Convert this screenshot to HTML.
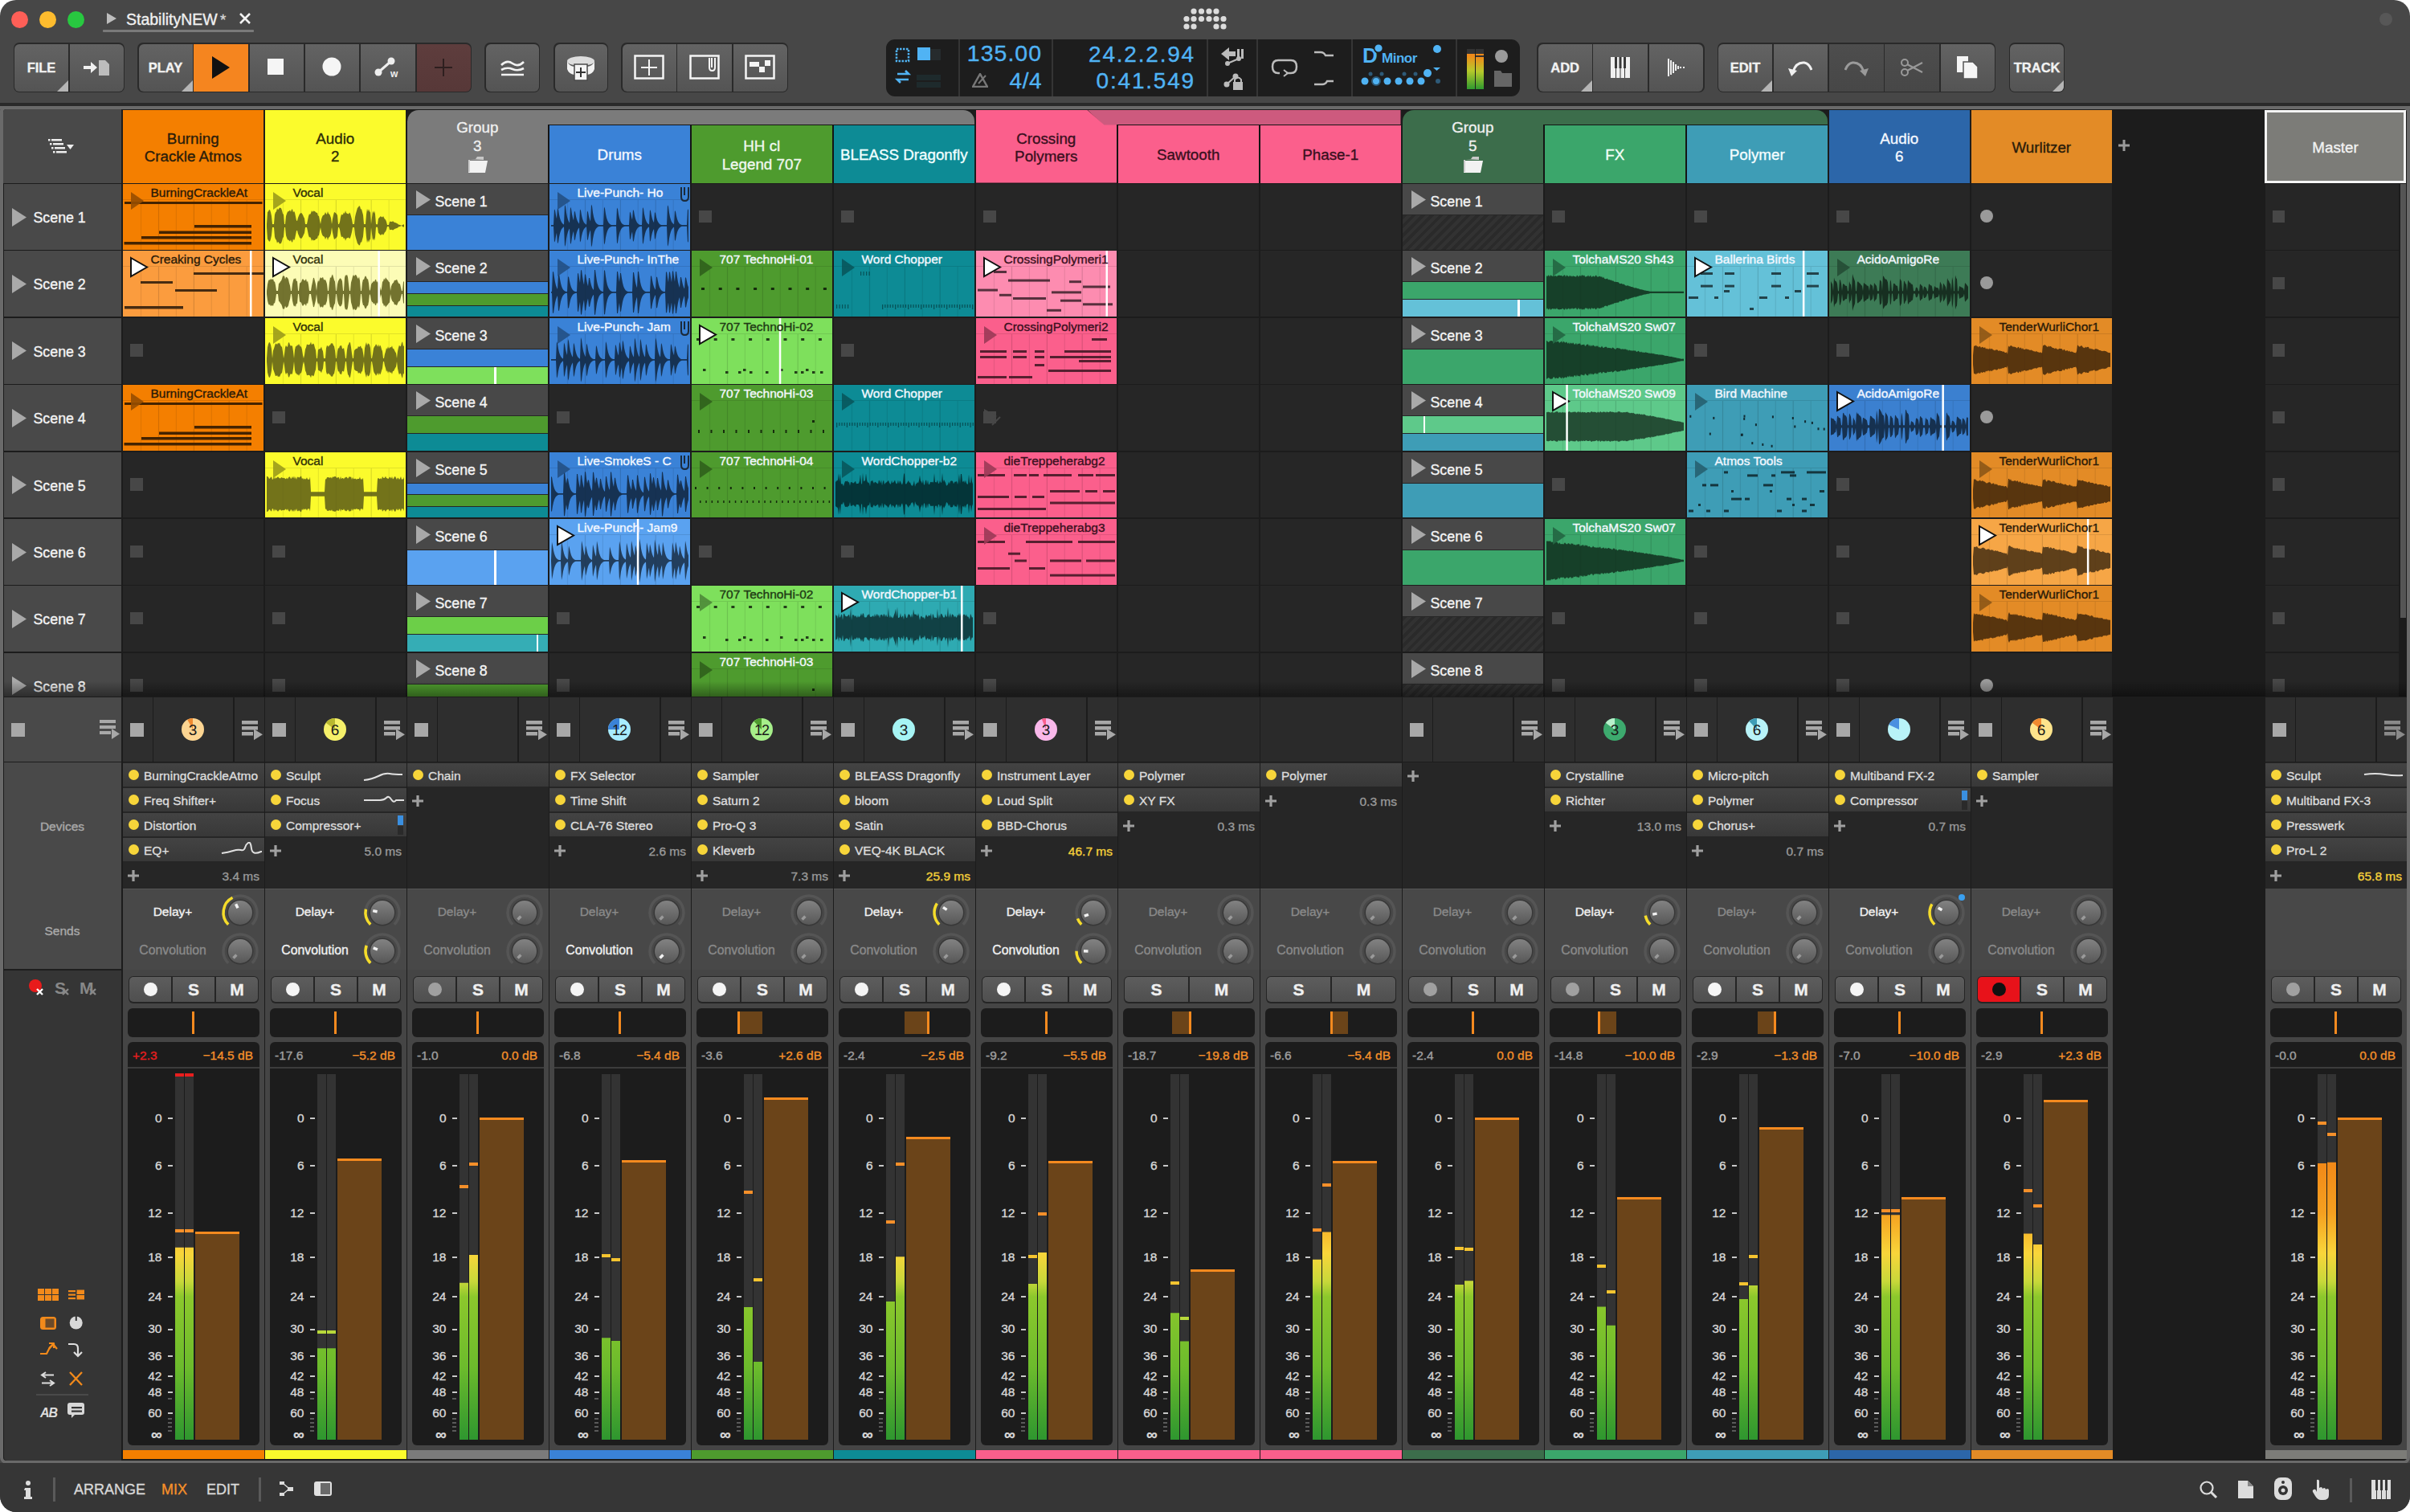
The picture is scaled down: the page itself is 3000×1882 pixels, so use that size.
<!DOCTYPE html><html><head><meta charset="utf-8"><style>
*{margin:0;padding:0;box-sizing:border-box}
html,body{width:3000px;height:1882px;overflow:hidden;background:#fff}
body{position:relative;font-family:"Liberation Sans",sans-serif}
div{position:absolute}
.t{white-space:nowrap;-webkit-text-stroke:0.35px currentColor}
.btn{background:linear-gradient(#626262,#565656);border:2px solid #2c2c2c;border-radius:6px}
</style></head><body><div style="left:0px;top:0px;width:3000px;height:1882px;background:#474747;border-radius:20px;overflow:hidden"></div><div style="left:14.0px;top:14px;width:21px;height:21px;background:#fe5f57;border-radius:50%"></div><div style="left:48.5px;top:14px;width:21px;height:21px;background:#febc2e;border-radius:50%"></div><div style="left:83.5px;top:14px;width:21px;height:21px;background:#28c840;border-radius:50%"></div><svg style="position:absolute;left:133px;top:16px;" width="13" height="14" viewBox="0 0 13 14"><path d="M0 0 L12 7 L0 14Z" fill="#bdbdbd"/></svg><div class="t " style="left:157px;top:11.8px;font-size:19.5px;line-height:24.375px;color:#f0f0f0;">StabilityNEW</div><div class="t " style="left:274px;top:13.1px;font-size:19px;line-height:23.75px;color:#d8d8d8;">*</div><svg style="position:absolute;left:297px;top:15px;" width="16" height="16" viewBox="0 0 16 16"><path d="M2 2L14 14M14 2L2 14" stroke="#f2f2f2" stroke-width="2.6"/></svg><div style="left:128px;top:37px;width:188px;height:3px;background:#7a7a7a;border-radius:1px"></div><svg style="position:absolute;left:1400px;top:0px;" width="200" height="45" viewBox="0 0 200 45"><circle cx="86" cy="14" r="3.6" fill="#dcdcdc"/><circle cx="95.5" cy="14" r="3.6" fill="#dcdcdc"/><circle cx="105" cy="14" r="3.6" fill="#dcdcdc"/><circle cx="114" cy="14" r="3.6" fill="#dcdcdc"/><circle cx="77" cy="23.5" r="3.6" fill="#dcdcdc"/><circle cx="86" cy="23.5" r="3.6" fill="#dcdcdc"/><circle cx="95.5" cy="23.5" r="3.6" fill="#dcdcdc"/><circle cx="105" cy="23.5" r="3.6" fill="#dcdcdc"/><circle cx="114" cy="23.5" r="3.6" fill="#dcdcdc"/><circle cx="123" cy="23.5" r="3.6" fill="#dcdcdc"/><circle cx="77" cy="33" r="3.6" fill="#dcdcdc"/><circle cx="86" cy="33" r="3.6" fill="#dcdcdc"/><circle cx="114" cy="33" r="3.6" fill="#dcdcdc"/><circle cx="123" cy="33" r="3.6" fill="#dcdcdc"/></svg><div style="left:2962px;top:16px;width:16px;height:16px;background:#575757;border-radius:50%"></div><div style="left:0px;top:128px;width:3000px;height:4px;background:#2a2a2a"></div><div style="left:0px;top:132px;width:3000px;height:4px;background:#6a6a6a"></div><div style="left:16.5px;top:53px;width:138.5px;height:62px;background:#2a2a2a;border-radius:7px"></div><div style="left:18.0px;top:54.5px;width:67.0px;height:59px;background:linear-gradient(#636363,#545454);border-top-left-radius:6px;border-bottom-left-radius:6px;overflow:hidden"><div class="t" style="left:0;right:0;top:0;bottom:0;display:flex;align-items:center;justify-content:center;font-size:16.5px;color:#f2f2f2;font-weight:bold">FILE</div><div style="right:0;bottom:0;width:0;height:0;border-style:solid;border-width:0 0 14px 14px;border-color:transparent transparent #b5b5b5 transparent"></div></div><div style="left:86.5px;top:54.5px;width:67.0px;height:59px;background:linear-gradient(#636363,#545454);border-top-right-radius:6px;border-bottom-right-radius:6px;overflow:hidden"><div style="left:0;right:0;top:0;bottom:0;display:flex;align-items:center;justify-content:center"><svg width="34" height="22" viewBox="0 0 34 22" style="position:static"><path d="M1 9h9V4l8 7-8 7v-5H1z" fill="#f0f0f0"/><path d="M20 2h8l5 5v14H20z" fill="#bdbdbd"/></svg></div></div><div style="left:171px;top:53px;width:416px;height:62px;background:#2a2a2a;border-radius:7px"></div><div style="left:172.5px;top:54.5px;width:67.0px;height:59px;background:linear-gradient(#636363,#545454);border-top-left-radius:6px;border-bottom-left-radius:6px;overflow:hidden"><div class="t" style="left:0;right:0;top:0;bottom:0;display:flex;align-items:center;justify-content:center;font-size:16.5px;color:#f2f2f2;font-weight:bold">PLAY</div><div style="right:0;bottom:0;width:0;height:0;border-style:solid;border-width:0 0 14px 14px;border-color:transparent transparent #b5b5b5 transparent"></div></div><div style="left:241.1px;top:54.5px;width:67.7px;height:59px;background:#f5851f;overflow:hidden"><div style="left:0;right:0;top:0;bottom:0;display:flex;align-items:center;justify-content:center"><svg width="26" height="30" viewBox="0 0 26 30" style="position:static"><path d="M2 1L24 15L2 29z" fill="#111"/></svg></div></div><div style="left:310.5px;top:54.5px;width:67.7px;height:59px;background:linear-gradient(#636363,#545454);overflow:hidden"><div style="left:0;right:0;top:0;bottom:0;display:flex;align-items:center;justify-content:center"><svg width="22" height="22" viewBox="0 0 22 22" style="position:static"><rect width="20" height="20" fill="#f5f5f5"/></svg></div></div><div style="left:379.8px;top:54.5px;width:67.7px;height:59px;background:linear-gradient(#636363,#545454);overflow:hidden"><div style="left:0;right:0;top:0;bottom:0;display:flex;align-items:center;justify-content:center"><svg width="26" height="26" viewBox="0 0 26 26" style="position:static"><circle cx="12" cy="12" r="11.5" fill="#f5f5f5"/></svg></div></div><div style="left:449.1px;top:54.5px;width:67.7px;height:59px;background:linear-gradient(#636363,#545454);overflow:hidden"><div style="left:0;right:0;top:0;bottom:0;display:flex;align-items:center;justify-content:center"><svg width="34" height="28" viewBox="0 0 34 28" style="position:static"><circle cx="5" cy="20" r="4.5" fill="#eee"/><circle cx="21" cy="6" r="4.5" fill="#eee"/><path d="M5 20L21 6" stroke="#eee" stroke-width="3"/><text x="20" y="26" font-size="12" font-weight="bold" fill="#eee" font-family="Liberation Sans">w</text></svg></div></div><div style="left:518.5px;top:54.5px;width:67.0px;height:59px;background:linear-gradient(#5e3d3d,#573838);border-top-right-radius:6px;border-bottom-right-radius:6px;overflow:hidden"><div style="left:0;right:0;top:0;bottom:0;display:flex;align-items:center;justify-content:center"><svg width="24" height="24" viewBox="0 0 24 24" style="position:static"><path d="M12 1v22M1 12h22" stroke="#2e1f1f" stroke-width="2"/></svg></div></div><div style="left:603px;top:53px;width:69px;height:62px;background:#2a2a2a;border-radius:7px"></div><div style="left:604.5px;top:54.5px;width:66.7px;height:59px;background:linear-gradient(#636363,#545454);border-top-left-radius:6px;border-bottom-left-radius:6px;border-top-right-radius:6px;border-bottom-right-radius:6px;overflow:hidden"><div style="left:0;right:0;top:0;bottom:0;display:flex;align-items:center;justify-content:center"><svg width="30" height="22" viewBox="0 0 30 22" style="position:static"><path d="M1 8q7-7 14-2t14-2M1 14q7-4 14-1t14-1M1 20h28" stroke="#f2f2f2" stroke-width="2.6" fill="none"/></svg></div></div><div style="left:689px;top:53px;width:68px;height:62px;background:#2a2a2a;border-radius:7px"></div><div style="left:690.5px;top:54.5px;width:65.7px;height:59px;background:linear-gradient(#636363,#545454);border-top-left-radius:6px;border-bottom-left-radius:6px;border-top-right-radius:6px;border-bottom-right-radius:6px;overflow:hidden"><div style="left:0;right:0;top:0;bottom:0;display:flex;align-items:center;justify-content:center"><svg width="38" height="34" viewBox="0 0 38 34" style="position:static"><ellipse cx="19" cy="9" rx="17" ry="6" fill="#ddd"/><path d="M2 9v10q2 6 9 7v-10q-7-1-9-7zM36 9v10q-2 6-9 7v-10q7-1 9-7z" fill="#f2f2f2"/><path d="M11 13h16v20H11z" fill="#f5f5f5" stroke="#4a4a4a" stroke-width="1.5"/><path d="M19 17v12M13 23h12" stroke="#333" stroke-width="2"/></svg></div></div><div style="left:773px;top:53px;width:208px;height:62px;background:#2a2a2a;border-radius:7px"></div><div style="left:774.5px;top:54.5px;width:67.0px;height:59px;background:linear-gradient(#636363,#545454);border-top-left-radius:6px;border-bottom-left-radius:6px;overflow:hidden"><div style="left:0;right:0;top:0;bottom:0;display:flex;align-items:center;justify-content:center"><svg width="38" height="32" viewBox="0 0 38 32" style="position:static"><rect x="1.5" y="1.5" width="35" height="28" fill="none" stroke="#f5f5f5" stroke-width="2.5"/><path d="M19 6v20M9 16h20" stroke="#f5f5f5" stroke-width="2"/></svg></div></div><div style="left:843.1px;top:54.5px;width:67.7px;height:59px;background:linear-gradient(#636363,#545454);overflow:hidden"><div style="left:0;right:0;top:0;bottom:0;display:flex;align-items:center;justify-content:center"><svg width="38" height="32" viewBox="0 0 38 32" style="position:static"><rect x="1.5" y="1.5" width="35" height="28" fill="none" stroke="#f5f5f5" stroke-width="2.5"/><path d="M25 4v12q0 4 3.5 4t3.5-4V4M28 4v12" stroke="#f5f5f5" stroke-width="2" fill="none"/></svg></div></div><div style="left:912.5px;top:54.5px;width:67.0px;height:59px;background:linear-gradient(#636363,#545454);border-top-right-radius:6px;border-bottom-right-radius:6px;overflow:hidden"><div style="left:0;right:0;top:0;bottom:0;display:flex;align-items:center;justify-content:center"><svg width="38" height="32" viewBox="0 0 38 32" style="position:static"><rect x="1.5" y="1.5" width="35" height="28" fill="none" stroke="#f5f5f5" stroke-width="2.5"/><rect x="6" y="9" width="12" height="6" fill="#f5f5f5"/><rect x="25" y="7" width="7" height="7" fill="#f5f5f5"/><rect x="18" y="15" width="7" height="7" fill="#f5f5f5"/></svg></div></div><div style="left:1103px;top:49px;width:789px;height:71px;background:#1d1d1d;border-radius:11px"></div><div style="left:1192.5px;top:49px;width:2px;height:71px;background:#353535"></div><div style="left:1308.5px;top:49px;width:2px;height:71px;background:#353535"></div><div style="left:1501.5px;top:49px;width:2px;height:71px;background:#353535"></div><div style="left:1564px;top:49px;width:2px;height:71px;background:#353535"></div><div style="left:1682px;top:49px;width:2px;height:71px;background:#353535"></div><div style="left:1812px;top:49px;width:2px;height:71px;background:#353535"></div><svg style="position:absolute;left:1113px;top:57px;" width="60" height="56" viewBox="0 0 60 56"><rect x="3" y="4" width="15" height="15" fill="none" stroke="#50b3f4" stroke-width="2.5" stroke-dasharray="2.5 1.5"/><rect x="29" y="2" width="16" height="16" fill="#50b3f4"/><rect x="45" y="4" width="13" height="14" fill="#262b2d"/><path d="M4 35h14l-4-4M18 42H4l4 4" stroke="#50b3f4" stroke-width="2.6" fill="none"/><rect x="28" y="36" width="30" height="7" fill="#1e2a2c"/><rect x="28" y="45" width="30" height="7" fill="#1e2a2c"/></svg><div class="t " style="right:1703px;top:49.2px;font-size:28.5px;line-height:35.625px;color:#50b3f4;letter-spacing:1px">135.00</div><svg style="position:absolute;left:1210px;top:91px;" width="20" height="18" viewBox="0 0 20 18"><path d="M1 17L10 1L19 17z" fill="none" stroke="#777" stroke-width="2.5"/><path d="M8 13L17 3" stroke="#777" stroke-width="2"/></svg><div class="t " style="right:1703px;top:82.5px;font-size:28px;line-height:35.0px;color:#50b3f4;letter-spacing:0.5px">4/4</div><div class="t " style="right:1512px;top:49.5px;font-size:28px;line-height:35.0px;color:#50b3f4;letter-spacing:1.8px">24.2.2.94</div><div class="t " style="right:1512px;top:82.5px;font-size:28px;line-height:35.0px;color:#50b3f4;letter-spacing:1.8px">0:41.549</div><svg style="position:absolute;left:1518px;top:53px;" width="36" height="64" viewBox="0 0 36 64"><path d="M2 14L12 6v5h8v6h-8v5z" fill="#bbb"/><rect x="22" y="8" width="3" height="12" fill="#bbb"/><rect x="27" y="8" width="3" height="12" fill="#bbb"/><circle cx="10" cy="26" r="3" fill="#bbb"/><circle cx="24" cy="20" r="3" fill="#bbb"/><path d="M10 26L24 20" stroke="#bbb" stroke-width="2"/><circle cx="9" cy="52" r="3.5" fill="#bbb"/><circle cx="20" cy="42" r="3.5" fill="#bbb"/><path d="M9 52L20 42" stroke="#bbb" stroke-width="2"/><rect x="17" y="49" width="12" height="10" fill="#bbb"/><path d="M19 49v-3q4-5 8 0v3" stroke="#bbb" stroke-width="2" fill="none"/></svg><svg style="position:absolute;left:1582px;top:71px;" width="34" height="26" viewBox="0 0 34 26"><path d="M9 4h16q7 0 7 8t-7 8h-6M11 20H9q-7 0-7-8t7-8" stroke="#bbb" stroke-width="2.5" fill="none"/><path d="M16 16l5 4-5 4" stroke="#bbb" stroke-width="2" fill="none"/></svg><svg style="position:absolute;left:1634px;top:55px;" width="28" height="60" viewBox="0 0 28 60"><path d="M2 10h8q4 0 6 4h10" stroke="#bbb" stroke-width="2.5" fill="none"/><path d="M2 50h10q4 0 6-4h8" stroke="#bbb" stroke-width="2.5" fill="none"/></svg><svg style="position:absolute;left:1692px;top:55px;" width="110" height="60" viewBox="0 0 110 60"><text x="4" y="23" font-size="26" font-weight="bold" fill="#50b3f4" font-family="Liberation Sans">D</text><circle cx="24" cy="5" r="5.5" fill="#50b3f4" stroke="#1d1d1d" stroke-width="1.8"/><text x="28" y="23" font-size="17" font-weight="bold" fill="#50b3f4" font-family="Liberation Sans" letter-spacing="-0.5">Minor</text><circle cx="97" cy="6" r="5" fill="#50b3f4"/><path d="M92 29h9l-4.5 4z" fill="#50b3f4"/><circle cx="7" cy="46" r="4.5" fill="#50b3f4"/><circle cx="21" cy="46" r="4.5" fill="#50b3f4"/><circle cx="35" cy="46" r="4.5" fill="#50b3f4"/><circle cx="49" cy="46" r="4.5" fill="#50b3f4"/><circle cx="63" cy="46" r="4.5" fill="#50b3f4"/><circle cx="77" cy="46" r="4.5" fill="#50b3f4"/><circle cx="14" cy="37" r="2.5" fill="#2e5a78"/><circle cx="28" cy="37" r="2.5" fill="#2e5a78"/><circle cx="56" cy="37" r="2.5" fill="#2e5a78"/><circle cx="70" cy="37" r="2.5" fill="#2e5a78"/><circle cx="21" cy="46" r="5" fill="none" stroke="#2e5a78" stroke-width="2"/><circle cx="85" cy="36" r="5" fill="#50b3f4"/><circle cx="98" cy="46" r="3" fill="#2e5a78"/></svg><svg style="position:absolute;left:1825px;top:58px;" width="65" height="55" viewBox="0 0 65 55"><defs><linearGradient id="mg" x1="0" y1="1" x2="0" y2="0"><stop offset="0" stop-color="#2f9a2f"/><stop offset="0.55" stop-color="#b7c92b"/><stop offset="1" stop-color="#f08a1a"/></linearGradient></defs><rect x="1" y="3" width="10" height="50" fill="#333"/><rect x="12" y="3" width="10" height="50" fill="#333"/><rect x="1" y="11" width="10" height="42" fill="url(#mg)"/><rect x="12" y="13" width="10" height="40" fill="url(#mg)"/><rect x="1" y="9" width="10" height="2" fill="#f08a1a"/><rect x="12" y="9" width="10" height="2" fill="#f08a1a"/><circle cx="44" cy="12" r="8" fill="#9a9a9a"/><path d="M35 30h8l2 3h12v17H35z" fill="#666"/></svg><div style="left:1913px;top:53px;width:208.5px;height:62px;background:#2a2a2a;border-radius:7px"></div><div style="left:1914.5px;top:54.5px;width:67.2px;height:59px;background:linear-gradient(#636363,#545454);border-top-left-radius:6px;border-bottom-left-radius:6px;overflow:hidden"><div class="t" style="left:0;right:0;top:0;bottom:0;display:flex;align-items:center;justify-content:center;font-size:16.5px;color:#f2f2f2;font-weight:bold">ADD</div><div style="right:0;bottom:0;width:0;height:0;border-style:solid;border-width:0 0 14px 14px;border-color:transparent transparent #b5b5b5 transparent"></div></div><div style="left:1983.3px;top:54.5px;width:67.9px;height:59px;background:linear-gradient(#636363,#545454);overflow:hidden"><div style="left:0;right:0;top:0;bottom:0;display:flex;align-items:center;justify-content:center"><svg width="24" height="26" viewBox="0 0 24 26" style="position:static"><rect x="0" y="0" width="24" height="26" fill="#f0f0f0"/><rect x="5" y="0" width="3" height="14" fill="#3a3a3a"/><rect x="10.5" y="0" width="3" height="14" fill="#3a3a3a"/><rect x="16" y="0" width="3" height="14" fill="#3a3a3a"/><path d="M6.5 14v12M12 14v12M17.5 14v12" stroke="#3a3a3a" stroke-width="1"/></svg></div></div><div style="left:2052.8px;top:54.5px;width:67.2px;height:59px;background:linear-gradient(#636363,#545454);border-top-right-radius:6px;border-bottom-right-radius:6px;overflow:hidden"><div style="left:0;right:0;top:0;bottom:0;display:flex;align-items:center;justify-content:center"><svg width="22" height="26" viewBox="0 0 22 26" style="position:static"><path d="M2 2v22M5 4v18M8 6v14M11 9v8M14 11v4M17 12v2M20 13h2" stroke="#eee" stroke-width="2"/></svg></div></div><div style="left:2137.5px;top:53px;width:346.5px;height:62px;background:#2a2a2a;border-radius:7px"></div><div style="left:2139.0px;top:54.5px;width:67.0px;height:59px;background:linear-gradient(#636363,#545454);border-top-left-radius:6px;border-bottom-left-radius:6px;overflow:hidden"><div class="t" style="left:0;right:0;top:0;bottom:0;display:flex;align-items:center;justify-content:center;font-size:16.5px;color:#f2f2f2;font-weight:bold">EDIT</div><div style="right:0;bottom:0;width:0;height:0;border-style:solid;border-width:0 0 14px 14px;border-color:transparent transparent #b5b5b5 transparent"></div></div><div style="left:2207.6px;top:54.5px;width:67.7px;height:59px;background:linear-gradient(#636363,#545454);overflow:hidden"><div style="left:0;right:0;top:0;bottom:0;display:flex;align-items:center;justify-content:center"><svg width="30" height="22" viewBox="0 0 30 22" style="position:static"><path d="M6 16q4-12 14-11q6 1 9 9" stroke="#f0f0f0" stroke-width="3" fill="none"/><path d="M0 12l11 3-7 7z" fill="#f0f0f0"/></svg></div></div><div style="left:2276.9px;top:54.5px;width:67.7px;height:59px;background:linear-gradient(#4d4d4d,#474747);overflow:hidden"><div style="left:0;right:0;top:0;bottom:0;display:flex;align-items:center;justify-content:center"><svg width="30" height="22" viewBox="0 0 30 22" style="position:static"><path d="M24 16q-4-12-14-11q-6 1-9 9" stroke="#9a9a9a" stroke-width="3" fill="none"/><path d="M30 12l-11 3 7 7z" fill="#9a9a9a"/></svg></div></div><div style="left:2346.2px;top:54.5px;width:67.7px;height:59px;background:linear-gradient(#4d4d4d,#474747);overflow:hidden"><div style="left:0;right:0;top:0;bottom:0;display:flex;align-items:center;justify-content:center"><svg width="28" height="22" viewBox="0 0 28 22" style="position:static"><circle cx="5" cy="5" r="4" stroke="#999" stroke-width="2" fill="none"/><circle cx="5" cy="17" r="4" stroke="#999" stroke-width="2" fill="none"/><path d="M8 7L27 17M8 15L27 5" stroke="#999" stroke-width="2.2"/></svg></div></div><div style="left:2415.5px;top:54.5px;width:67.0px;height:59px;background:linear-gradient(#636363,#545454);border-top-right-radius:6px;border-bottom-right-radius:6px;overflow:hidden"><div style="left:0;right:0;top:0;bottom:0;display:flex;align-items:center;justify-content:center"><svg width="28" height="30" viewBox="0 0 28 30" style="position:static"><rect x="1" y="1" width="14" height="20" fill="#f5f5f5"/><path d="M9 8h12l6 6v15H9z" fill="#f5f5f5" stroke="#555" stroke-width="1.5"/></svg></div></div><div style="left:2500.5px;top:53px;width:69.5px;height:62px;background:#2a2a2a;border-radius:7px"></div><div style="left:2502.0px;top:54.5px;width:67.2px;height:59px;background:linear-gradient(#636363,#545454);border-top-left-radius:6px;border-bottom-left-radius:6px;border-top-right-radius:6px;border-bottom-right-radius:6px;overflow:hidden"><div class="t" style="left:0;right:0;top:0;bottom:0;display:flex;align-items:center;justify-content:center;font-size:16.5px;color:#f2f2f2;font-weight:bold">TRACK</div><div style="right:0;bottom:0;width:0;height:0;border-style:solid;border-width:0 0 14px 14px;border-color:transparent transparent #b5b5b5 transparent"></div></div><div style="left:0px;top:132px;width:3000px;height:1690px;background:#6a6a6a;border-radius:6px 6px 8px 8px"></div><div style="left:4px;top:136px;width:2992px;height:1682px;background:#1c1c1c;border-radius:4px"></div><div style="left:4px;top:136px;width:147px;height:92px;background:#494949;border-top-left-radius:4px"></div><svg style="position:absolute;left:60px;top:172px;" width="32" height="22" viewBox="0 0 32 22"><g fill="#eee"><rect x="0" y="1" width="2.5" height="2.5"/><rect x="4" y="1" width="13" height="2.5"/><rect x="2" y="6" width="2.5" height="2.5"/><rect x="6" y="6" width="13" height="2.5"/><rect x="4" y="11" width="2.5" height="2.5"/><rect x="8" y="11" width="13" height="2.5"/><rect x="6" y="16" width="2.5" height="2.5"/><rect x="10" y="16" width="13" height="2.5"/><path d="M23 8h9l-4.5 6z"/></g></svg><div style="left:5px;top:229.0px;width:146px;height:81.9px;background:#494949"></div><svg style="position:absolute;left:15px;top:258.5px;" width="19" height="23" viewBox="0 0 19 23"><path d="M0 0L18 11.5L0 23z" fill="#a9a9a9"/></svg><div class="t " style="left:41.5px;top:259.9px;font-size:17.8px;line-height:22.25px;color:#f4f4f4;">Scene 1</div><div style="left:5px;top:312.4px;width:146px;height:81.9px;background:#494949"></div><svg style="position:absolute;left:15px;top:341.9px;" width="19" height="23" viewBox="0 0 19 23"><path d="M0 0L18 11.5L0 23z" fill="#a9a9a9"/></svg><div class="t " style="left:41.5px;top:343.3px;font-size:17.8px;line-height:22.25px;color:#f4f4f4;">Scene 2</div><div style="left:5px;top:395.8px;width:146px;height:81.9px;background:#494949"></div><svg style="position:absolute;left:15px;top:425.3px;" width="19" height="23" viewBox="0 0 19 23"><path d="M0 0L18 11.5L0 23z" fill="#a9a9a9"/></svg><div class="t " style="left:41.5px;top:426.7px;font-size:17.8px;line-height:22.25px;color:#f4f4f4;">Scene 3</div><div style="left:5px;top:479.20000000000005px;width:146px;height:81.9px;background:#494949"></div><svg style="position:absolute;left:15px;top:508.70000000000005px;" width="19" height="23" viewBox="0 0 19 23"><path d="M0 0L18 11.5L0 23z" fill="#a9a9a9"/></svg><div class="t " style="left:41.5px;top:510.1px;font-size:17.8px;line-height:22.25px;color:#f4f4f4;">Scene 4</div><div style="left:5px;top:562.6px;width:146px;height:81.9px;background:#494949"></div><svg style="position:absolute;left:15px;top:592.1px;" width="19" height="23" viewBox="0 0 19 23"><path d="M0 0L18 11.5L0 23z" fill="#a9a9a9"/></svg><div class="t " style="left:41.5px;top:593.5px;font-size:17.8px;line-height:22.25px;color:#f4f4f4;">Scene 5</div><div style="left:5px;top:646.0px;width:146px;height:81.9px;background:#494949"></div><svg style="position:absolute;left:15px;top:675.5px;" width="19" height="23" viewBox="0 0 19 23"><path d="M0 0L18 11.5L0 23z" fill="#a9a9a9"/></svg><div class="t " style="left:41.5px;top:676.9px;font-size:17.8px;line-height:22.25px;color:#f4f4f4;">Scene 6</div><div style="left:5px;top:729.4000000000001px;width:146px;height:81.9px;background:#494949"></div><svg style="position:absolute;left:15px;top:758.9000000000001px;" width="19" height="23" viewBox="0 0 19 23"><path d="M0 0L18 11.5L0 23z" fill="#a9a9a9"/></svg><div class="t " style="left:41.5px;top:760.3px;font-size:17.8px;line-height:22.25px;color:#f4f4f4;">Scene 7</div><div style="left:5px;top:812.8000000000001px;width:146px;height:54.19999999999993px;background:#494949"></div><svg style="position:absolute;left:15px;top:842.3000000000001px;" width="19" height="23" viewBox="0 0 19 23"><path d="M0 0L18 11.5L0 23z" fill="#a9a9a9"/></svg><div class="t " style="left:41.5px;top:843.7px;font-size:17.8px;line-height:22.25px;color:#f4f4f4;">Scene 8</div><div style="left:5px;top:868px;width:146px;height:80px;background:#494949"></div><div style="left:14px;top:900px;width:16.5px;height:16.5px;background:#a8a8a8"></div><svg style="position:absolute;left:124px;top:896px;" width="27" height="24" viewBox="0 0 27 24"><g fill="#a8a8a8"><rect x="0" y="0" width="20" height="4"/><rect x="0" y="7" width="20" height="4"/><rect x="0" y="14" width="14" height="4"/><path d="M15 11l10 6.5-10 6.5z"/></g></svg><div style="left:5px;top:949px;width:146px;height:257px;background:#494949"></div><div class="t " style="left:-222.5px;width:600px;text-align:center;top:1018.8px;font-size:15.5px;line-height:19.375px;color:#a9a9a9;">Devices</div><div class="t " style="left:-222.5px;width:600px;text-align:center;top:1148.8px;font-size:15.5px;line-height:19.375px;color:#a9a9a9;">Sends</div><div style="left:5px;top:1206px;width:146px;height:2px;background:#1e1e1e"></div><div style="left:5px;top:1208px;width:146px;height:610px;background:#353535;border-bottom-left-radius:4px"></div><svg style="position:absolute;left:32px;top:1215px;" width="100" height="30" viewBox="0 0 100 30"><circle cx="12" cy="12" r="8" fill="#e81b1b"/><path d="M14 16l7 7M21 16l-7 7" stroke="#fff" stroke-width="2.4"/><text x="36" y="22" font-size="21" font-weight="bold" fill="#888" font-family="Liberation Sans">S</text><path d="M46 16l7 7M53 16l-7 7" stroke="#888" stroke-width="2.4"/><text x="67" y="22" font-size="21" font-weight="bold" fill="#888" font-family="Liberation Sans">M</text><path d="M80 16l7 7M87 16l-7 7" stroke="#888" stroke-width="2.4"/></svg><svg style="position:absolute;left:0px;top:1595px;" width="150" height="180" viewBox="0 0 150 180"><g fill="#f28a1b"><rect x="47" y="9" width="8" height="7"/><rect x="56" y="9" width="8" height="7"/><rect x="65" y="9" width="8" height="7"/><rect x="47" y="17" width="8" height="7"/><rect x="56" y="17" width="8" height="7"/><rect x="65" y="17" width="8" height="7"/><rect x="85" y="11" width="9" height="2.2"/><rect x="85" y="15.5" width="9" height="2.2"/><rect x="85" y="20" width="9" height="2.2"/><rect x="95.5" y="10.5" width="9.5" height="5.5"/><rect x="95.5" y="17" width="9.5" height="5.5"/></g><rect x="50" y="44" width="20" height="16" rx="3.5" fill="#f28a1b"/><rect x="56.5" y="46.5" width="11" height="11" fill="#6a4a2a"/><circle cx="94.7" cy="51.5" r="8" fill="#d8d8d8"/><rect x="93.8" y="43" width="2" height="6" fill="#333"/><path d="M50 90h8l4-8 5-4M61 77h6v6" stroke="#f28a1b" stroke-width="2.2" fill="none" stroke-linejoin="round"/><path d="M61 84l5-6 5 6" stroke="#f28a1b" stroke-width="2.2" fill="none"/><path d="M85 78h7q5 0 5 5v10M92 88l5 5 5-5" stroke="#ddd" stroke-width="2.2" fill="none"/><path d="M57 113l-5 3.5 5 3.5M52 116.5h15M62 123l5 3.5-5 3.5M52 126.5h15" stroke="#ddd" stroke-width="2" fill="none"/><path d="M87 113l15 16M102 113l-15 16" stroke="#f28a1b" stroke-width="2.3"/><rect x="45" y="140" width="65" height="2" fill="#4a4a4a"/><text x="50" y="169" font-size="16" font-weight="bold" font-style="italic" fill="#dcdcdc" font-family="Liberation Sans" letter-spacing="-1">AB</text><path d="M87 151h15q3 0 3 3v9q0 3-3 3h-9l-4 4v-4h-2q-3 0-3-3v-9q0-3 3-3z" fill="#d8d8d8"/><rect x="89" y="156" width="13" height="2.2" fill="#333"/><rect x="89" y="160.5" width="13" height="2.2" fill="#333"/></svg><div style="left:506.5px;top:137px;width:706.5px;height:90.5px;background:#7b7b7b;border-radius:14px 14px 0 0"></div><div style="left:1745.5px;top:137px;width:529.5px;height:90.5px;background:#3c6d4b;border-radius:14px 14px 0 0"></div><svg style="position:absolute;left:1214px;top:137px;" width="531" height="19" viewBox="0 0 531 19"><path d="M140 0H529.5V19H160z" fill="#cd5a7e"/></svg><div style="left:682px;top:154.5px;width:531px;height:73px;background:#141414"></div><div style="left:1390px;top:154.5px;width:354px;height:73px;background:#141414"></div><div style="left:1921px;top:154.5px;width:354px;height:73px;background:#141414"></div><div style="left:152.5px;top:137px;width:175.5px;height:90.5px;background:#f47f00"></div><div class="t" style="left:152.5px;top:137px;width:175.5px;height:90.5px;color:#2b1d0a;font-size:18.8px;line-height:22.5px;display:flex;align-items:center;justify-content:center;text-align:center;padding-top:4px">Burning<br>Crackle Atmos</div><div style="left:329.5px;top:137px;width:175.5px;height:90.5px;background:#fbfb2c"></div><div class="t" style="left:329.5px;top:137px;width:175.5px;height:90.5px;color:#2e2e08;font-size:18.8px;line-height:22.5px;display:flex;align-items:center;justify-content:center;text-align:center;padding-top:4px">Audio<br>2</div><div class="t" style="left:506.5px;top:137px;width:175.5px;height:90.5px;color:#f0f0f0;font-size:18.8px;line-height:22.5px;text-align:center;padding-top:11px">Group<br>3</div><svg style="position:absolute;left:582.25px;top:194px;" width="26" height="22" viewBox="0 0 26 22"><path d="M2 4h8l2-3h8v4" fill="#c8c8c8"/><path d="M3 6h22l-3 15H1z" fill="#f2f2f2"/><path d="M2 5v15" stroke="#ccc" stroke-width="2"/></svg><div style="left:683.5px;top:155.5px;width:175.5px;height:72.0px;background:#3a82d7"></div><div class="t" style="left:683.5px;top:155.5px;width:175.5px;height:72.0px;color:#f4f8ff;font-size:18.8px;line-height:22.5px;display:flex;align-items:center;justify-content:center;text-align:center;padding-top:4px">Drums</div><div style="left:860.5px;top:155.5px;width:175.5px;height:72.0px;background:#4e9b2e"></div><div class="t" style="left:860.5px;top:155.5px;width:175.5px;height:72.0px;color:#f0f8ee;font-size:18.8px;line-height:22.5px;display:flex;align-items:center;justify-content:center;text-align:center;padding-top:4px">HH cl<br>Legend 707</div><div style="left:1037.5px;top:155.5px;width:175.5px;height:72.0px;background:#0d8b95"></div><div class="t" style="left:1037.5px;top:155.5px;width:175.5px;height:72.0px;color:#f0ffff;font-size:18.8px;line-height:22.5px;display:flex;align-items:center;justify-content:center;text-align:center;padding-top:4px">BLEASS Dragonfly</div><div style="left:1214.5px;top:137px;width:175.5px;height:90.5px;background:#fb5f8c;clip-path:polygon(0 0,139px 0,160px 18.5px,100% 18.5px,100% 100%,0 100%)"></div><div class="t" style="left:1214.5px;top:137px;width:175.5px;height:90.5px;color:#3a1020;font-size:18.8px;line-height:22.5px;display:flex;align-items:center;justify-content:center;text-align:center;padding-top:4px">Crossing<br>Polymers</div><div style="left:1391.5px;top:155.5px;width:175.5px;height:72.0px;background:#fb5f8c"></div><div class="t" style="left:1391.5px;top:155.5px;width:175.5px;height:72.0px;color:#3a1020;font-size:18.8px;line-height:22.5px;display:flex;align-items:center;justify-content:center;text-align:center;padding-top:4px">Sawtooth</div><div style="left:1568.5px;top:155.5px;width:175.5px;height:72.0px;background:#fb5f8c"></div><div class="t" style="left:1568.5px;top:155.5px;width:175.5px;height:72.0px;color:#3a1020;font-size:18.8px;line-height:22.5px;display:flex;align-items:center;justify-content:center;text-align:center;padding-top:4px">Phase-1</div><div class="t" style="left:1745.5px;top:137px;width:175.5px;height:90.5px;color:#f0f0f0;font-size:18.8px;line-height:22.5px;text-align:center;padding-top:11px">Group<br>5</div><svg style="position:absolute;left:1821.25px;top:194px;" width="26" height="22" viewBox="0 0 26 22"><path d="M2 4h8l2-3h8v4" fill="#c8c8c8"/><path d="M3 6h22l-3 15H1z" fill="#f2f2f2"/><path d="M2 5v15" stroke="#ccc" stroke-width="2"/></svg><div style="left:1922.5px;top:155.5px;width:175.5px;height:72.0px;background:#3ba66b"></div><div class="t" style="left:1922.5px;top:155.5px;width:175.5px;height:72.0px;color:#f4fff8;font-size:18.8px;line-height:22.5px;display:flex;align-items:center;justify-content:center;text-align:center;padding-top:4px">FX</div><div style="left:2099.5px;top:155.5px;width:175.5px;height:72.0px;background:#3e9db6"></div><div class="t" style="left:2099.5px;top:155.5px;width:175.5px;height:72.0px;color:#f4fdff;font-size:18.8px;line-height:22.5px;display:flex;align-items:center;justify-content:center;text-align:center;padding-top:4px">Polymer</div><div style="left:2276.5px;top:137px;width:175.5px;height:90.5px;background:#2c66a9"></div><div class="t" style="left:2276.5px;top:137px;width:175.5px;height:90.5px;color:#f4f8ff;font-size:18.8px;line-height:22.5px;display:flex;align-items:center;justify-content:center;text-align:center;padding-top:4px">Audio<br>6</div><div style="left:2453.5px;top:137px;width:175.5px;height:90.5px;background:#e38b26"></div><div class="t" style="left:2453.5px;top:137px;width:175.5px;height:90.5px;color:#2b1d0a;font-size:18.8px;line-height:22.5px;display:flex;align-items:center;justify-content:center;text-align:center;padding-top:4px">Wurlitzer</div><div style="left:682px;top:154.5px;width:531px;height:1.5px;background:#141414"></div><div style="left:1390px;top:154.5px;width:354px;height:1.5px;background:#141414"></div><div style="left:1921px;top:154.5px;width:354px;height:1.5px;background:#141414"></div><div style="left:682px;top:154.5px;width:1.5px;height:73px;background:#141414"></div><div style="left:1390px;top:154.5px;width:1.5px;height:73px;background:#141414"></div><div style="left:1921px;top:154.5px;width:1.5px;height:73px;background:#141414"></div><svg style="position:absolute;left:2636px;top:173px;" width="16" height="16" viewBox="0 0 16 16"><path d="M8 1v14M1 8h14" stroke="#9a9a9a" stroke-width="3"/></svg><div style="left:2819px;top:137px;width:176px;height:90.5px;background:#7c7c78;border:3px solid #f4f4f4"></div><div class="t" style="left:2819px;top:139px;width:176px;height:90px;color:#f2f2f2;font-size:18.8px;display:flex;align-items:center;justify-content:center">Master</div><div style="left:152.5px;top:229.0px;width:175.5px;height:81.9px;background:#f47f00;overflow:hidden"><svg width="175.5" height="81.9" style="position:absolute;left:0;top:0"><rect x="21.9" y="20" width="1.2" height="61.900000000000006" fill="rgba(0,0,0,0.08)"/><rect x="43.9" y="20" width="1.2" height="61.900000000000006" fill="rgba(0,0,0,0.13)"/><rect x="65.8" y="20" width="1.2" height="61.900000000000006" fill="rgba(0,0,0,0.08)"/><rect x="87.8" y="20" width="1.2" height="61.900000000000006" fill="rgba(0,0,0,0.13)"/><rect x="109.7" y="20" width="1.2" height="61.900000000000006" fill="rgba(0,0,0,0.08)"/><rect x="131.6" y="20" width="1.2" height="61.900000000000006" fill="rgba(0,0,0,0.13)"/><rect x="153.6" y="20" width="1.2" height="61.900000000000006" fill="rgba(0,0,0,0.08)"/><rect x="0" y="19" width="175.5" height="1" fill="rgba(0,0,0,0.10)"/><g fill="#442300"><rect x="2" y="22" width="171.5" height="3"/><rect x="89" y="51" width="71" height="3.5"/><rect x="45" y="58.5" width="115" height="3.5"/><rect x="23" y="65" width="137" height="3.5"/><rect x="1.5" y="72" width="158.5" height="3.5"/></g><path d="M10 10L26 21L10 32z" fill="#974e00" opacity="0.9"/></svg><div class="t" style="left:35px;top:1px;font-size:15.5px;line-height:19px;color:#2a1a08">BurningCrackleAt</div></div><div style="left:152.5px;top:312.4px;width:175.5px;height:81.9px;background:#fb9c3e;overflow:hidden"><svg width="175.5" height="81.9" style="position:absolute;left:0;top:0"><rect x="21.9" y="20" width="1.2" height="61.900000000000006" fill="rgba(0,0,0,0.08)"/><rect x="43.9" y="20" width="1.2" height="61.900000000000006" fill="rgba(0,0,0,0.13)"/><rect x="65.8" y="20" width="1.2" height="61.900000000000006" fill="rgba(0,0,0,0.08)"/><rect x="87.8" y="20" width="1.2" height="61.900000000000006" fill="rgba(0,0,0,0.13)"/><rect x="109.7" y="20" width="1.2" height="61.900000000000006" fill="rgba(0,0,0,0.08)"/><rect x="131.6" y="20" width="1.2" height="61.900000000000006" fill="rgba(0,0,0,0.13)"/><rect x="153.6" y="20" width="1.2" height="61.900000000000006" fill="rgba(0,0,0,0.08)"/><rect x="0" y="19" width="175.5" height="1" fill="rgba(0,0,0,0.10)"/><g fill="#462b11"><rect x="88" y="27" width="87" height="3"/><rect x="22" y="38" width="40" height="3"/><rect x="65" y="48" width="52" height="3"/><rect x="2" y="69" width="73" height="3.5"/></g><path d="M10 9L30 20.5L10 32z" fill="#fff" stroke="#111" stroke-width="2"/><rect x="158.0" y="0" width="2.5" height="81.9" fill="#fff"/></svg><div class="t" style="left:35px;top:1px;font-size:15.5px;line-height:19px;color:#2a1a08">Creaking Cycles</div></div><div style="left:152.5px;top:395.8px;width:175.5px;height:81.9px;background:#262626"></div><div style="left:162.0px;top:428.3px;width:15.5px;height:15.5px;background:#474747"></div><div style="left:152.5px;top:479.20000000000005px;width:175.5px;height:81.9px;background:#f47f00;overflow:hidden"><svg width="175.5" height="81.9" style="position:absolute;left:0;top:0"><rect x="21.9" y="20" width="1.2" height="61.900000000000006" fill="rgba(0,0,0,0.08)"/><rect x="43.9" y="20" width="1.2" height="61.900000000000006" fill="rgba(0,0,0,0.13)"/><rect x="65.8" y="20" width="1.2" height="61.900000000000006" fill="rgba(0,0,0,0.08)"/><rect x="87.8" y="20" width="1.2" height="61.900000000000006" fill="rgba(0,0,0,0.13)"/><rect x="109.7" y="20" width="1.2" height="61.900000000000006" fill="rgba(0,0,0,0.08)"/><rect x="131.6" y="20" width="1.2" height="61.900000000000006" fill="rgba(0,0,0,0.13)"/><rect x="153.6" y="20" width="1.2" height="61.900000000000006" fill="rgba(0,0,0,0.08)"/><rect x="0" y="19" width="175.5" height="1" fill="rgba(0,0,0,0.10)"/><g fill="#442300"><rect x="2" y="22" width="171.5" height="3"/><rect x="89" y="51" width="71" height="3.5"/><rect x="45" y="58.5" width="115" height="3.5"/><rect x="23" y="65" width="137" height="3.5"/><rect x="1.5" y="72" width="158.5" height="3.5"/></g><path d="M10 10L26 21L10 32z" fill="#974e00" opacity="0.9"/></svg><div class="t" style="left:35px;top:1px;font-size:15.5px;line-height:19px;color:#2a1a08">BurningCrackleAt</div></div><div style="left:152.5px;top:562.6px;width:175.5px;height:81.9px;background:#262626"></div><div style="left:162.0px;top:595.1px;width:15.5px;height:15.5px;background:#474747"></div><div style="left:152.5px;top:646.0px;width:175.5px;height:81.9px;background:#262626"></div><div style="left:162.0px;top:678.5px;width:15.5px;height:15.5px;background:#474747"></div><div style="left:152.5px;top:729.4000000000001px;width:175.5px;height:81.9px;background:#262626"></div><div style="left:162.0px;top:761.9000000000001px;width:15.5px;height:15.5px;background:#474747"></div><div style="left:152.5px;top:812.8000000000001px;width:175.5px;height:54.19999999999993px;background:#262626"></div><div style="left:162.0px;top:845.3000000000001px;width:15.5px;height:15.5px;background:#474747"></div><div style="left:329.5px;top:229.0px;width:175.5px;height:81.9px;background:#fbfb2c;overflow:hidden"><svg width="175.5" height="81.9" style="position:absolute;left:0;top:0"><rect x="21.9" y="20" width="1.2" height="61.900000000000006" fill="rgba(0,0,0,0.08)"/><rect x="43.9" y="20" width="1.2" height="61.900000000000006" fill="rgba(0,0,0,0.13)"/><rect x="65.8" y="20" width="1.2" height="61.900000000000006" fill="rgba(0,0,0,0.08)"/><rect x="87.8" y="20" width="1.2" height="61.900000000000006" fill="rgba(0,0,0,0.13)"/><rect x="109.7" y="20" width="1.2" height="61.900000000000006" fill="rgba(0,0,0,0.08)"/><rect x="131.6" y="20" width="1.2" height="61.900000000000006" fill="rgba(0,0,0,0.13)"/><rect x="153.6" y="20" width="1.2" height="61.900000000000006" fill="rgba(0,0,0,0.08)"/><rect x="0" y="19" width="175.5" height="1" fill="rgba(0,0,0,0.10)"/><path transform="translate(2,24)" d="M0.0,26.0 L1.0,11.3 L2.0,9.9 L3.0,8.3 L4.0,8.3 L5.0,11.3 L6.0,16.0 L7.0,26.0 L8.0,26.0 L9.0,26.0 L10.0,14.0 L11.0,11.2 L12.0,10.2 L13.0,6.2 L14.0,8.2 L15.0,7.1 L16.0,5.5 L17.0,5.7 L18.0,6.2 L19.0,8.9 L20.0,12.9 L21.0,13.9 L22.0,26.0 L23.0,26.0 L24.0,16.0 L25.0,12.9 L26.0,10.5 L27.0,10.3 L28.0,9.5 L29.0,8.5 L30.0,10.7 L31.0,7.8 L32.0,7.2 L33.0,11.6 L34.0,9.7 L35.0,11.7 L36.0,16.4 L37.0,21.6 L38.0,22.1 L39.0,17.9 L40.0,15.6 L41.0,13.2 L42.0,12.4 L43.0,11.8 L44.0,12.9 L45.0,14.6 L46.0,17.0 L47.0,18.8 L48.0,26.0 L49.0,26.0 L50.0,26.0 L51.0,21.2 L52.0,16.2 L53.0,13.3 L54.0,14.0 L55.0,12.3 L56.0,9.0 L57.0,11.1 L58.0,9.4 L59.0,9.8 L60.0,9.9 L61.0,11.3 L62.0,11.7 L63.0,12.1 L64.0,15.7 L65.0,15.7 L66.0,21.3 L67.0,26.0 L68.0,20.1 L69.0,16.9 L70.0,15.1 L71.0,14.7 L72.0,13.8 L73.0,11.0 L74.0,13.3 L75.0,13.7 L76.0,10.0 L77.0,13.1 L78.0,13.6 L79.0,15.4 L80.0,18.3 L81.0,26.0 L82.0,19.6 L83.0,14.8 L84.0,10.9 L85.0,11.6 L86.0,12.3 L87.0,13.2 L88.0,15.1 L89.0,26.0 L90.0,26.0 L91.0,23.2 L92.0,17.3 L93.0,13.7 L94.0,14.4 L95.0,14.0 L96.0,11.3 L97.0,13.2 L98.0,9.2 L99.0,12.0 L100.0,12.7 L101.0,13.0 L102.0,13.4 L103.0,11.6 L104.0,12.8 L105.0,16.2 L106.0,20.1 L107.0,26.0 L108.0,26.0 L109.0,26.0 L110.0,16.9 L111.0,12.7 L112.0,9.3 L113.0,5.8 L114.0,5.0 L115.0,3.3 L116.0,3.8 L117.0,7.6 L118.0,7.2 L119.0,10.9 L120.0,14.4 L121.0,26.0 L122.0,26.0 L123.0,26.0 L124.0,13.9 L125.0,6.7 L126.0,10.6 L127.0,7.2 L128.0,10.1 L129.0,11.4 L130.0,26.0 L131.0,17.8 L132.0,9.6 L133.0,12.5 L134.0,9.5 L135.0,13.6 L136.0,26.1 L137.0,26.2 L138.0,26.2 L139.0,19.0 L140.0,18.2 L141.0,16.7 L142.0,16.2 L143.0,17.1 L144.0,17.6 L145.0,16.1 L146.0,17.9 L147.0,19.8 L148.0,20.6 L149.0,23.1 L150.0,26.9 L151.0,27.0 L152.0,26.9 L153.0,23.2 L154.0,22.6 L155.0,23.1 L156.0,22.9 L157.0,22.3 L158.0,23.0 L159.0,23.9 L160.0,24.1 L161.0,24.6 L162.0,24.9 L163.0,25.5 L164.0,26.5 L165.0,26.8 L166.0,26.9 L167.0,27.6 L168.0,27.8 L169.0,27.0 L170.0,26.5 L171.0,26.3 L171.0,29.6 L170.0,29.4 L169.0,28.9 L168.0,28.1 L167.0,28.3 L166.0,29.0 L165.0,29.1 L164.0,29.4 L163.0,30.4 L162.0,31.0 L161.0,31.3 L160.0,31.8 L159.0,32.0 L158.0,32.9 L157.0,33.6 L156.0,33.0 L155.0,32.8 L154.0,33.3 L153.0,32.7 L152.0,29.0 L151.0,28.9 L150.0,29.0 L149.0,32.8 L148.0,35.3 L147.0,36.1 L146.0,38.0 L145.0,39.8 L144.0,38.3 L143.0,38.8 L142.0,39.7 L141.0,39.2 L140.0,37.7 L139.0,36.9 L138.0,29.7 L137.0,29.7 L136.0,29.8 L135.0,42.3 L134.0,46.4 L133.0,43.4 L132.0,46.3 L131.0,38.1 L130.0,29.9 L129.0,44.5 L128.0,45.8 L127.0,48.7 L126.0,45.3 L125.0,49.2 L124.0,42.0 L123.0,29.9 L122.0,29.9 L121.0,29.9 L120.0,41.5 L119.0,45.0 L118.0,48.7 L117.0,48.3 L116.0,52.1 L115.0,52.6 L114.0,50.9 L113.0,50.1 L112.0,46.6 L111.0,43.2 L110.0,39.0 L109.0,29.9 L108.0,29.9 L107.0,29.9 L106.0,35.8 L105.0,39.7 L104.0,43.1 L103.0,44.3 L102.0,42.5 L101.0,42.9 L100.0,43.2 L99.0,43.9 L98.0,46.7 L97.0,42.7 L96.0,44.6 L95.0,41.9 L94.0,41.5 L93.0,42.2 L92.0,38.6 L91.0,32.7 L90.0,29.9 L89.0,29.9 L88.0,40.8 L87.0,42.7 L86.0,43.6 L85.0,44.3 L84.0,45.0 L83.0,41.1 L82.0,36.3 L81.0,29.9 L80.0,37.6 L79.0,40.5 L78.0,42.3 L77.0,42.8 L76.0,45.9 L75.0,42.2 L74.0,42.6 L73.0,44.9 L72.0,42.1 L71.0,41.2 L70.0,40.8 L69.0,39.0 L68.0,35.8 L67.0,29.9 L66.0,34.6 L65.0,40.2 L64.0,40.2 L63.0,43.8 L62.0,44.2 L61.0,44.6 L60.0,46.0 L59.0,46.1 L58.0,46.5 L57.0,44.8 L56.0,46.9 L55.0,43.6 L54.0,41.9 L53.0,42.6 L52.0,39.7 L51.0,34.7 L50.0,29.9 L49.0,29.9 L48.0,29.9 L47.0,37.1 L46.0,38.9 L45.0,41.3 L44.0,43.0 L43.0,44.1 L42.0,43.5 L41.0,42.7 L40.0,40.3 L39.0,38.0 L38.0,33.8 L37.0,34.3 L36.0,39.5 L35.0,44.2 L34.0,46.2 L33.0,44.3 L32.0,48.7 L31.0,48.1 L30.0,45.2 L29.0,47.4 L28.0,46.4 L27.0,45.6 L26.0,45.4 L25.0,43.0 L24.0,39.9 L23.0,29.9 L22.0,29.9 L21.0,42.0 L20.0,43.0 L19.0,47.0 L18.0,49.7 L17.0,50.2 L16.0,50.4 L15.0,48.8 L14.0,47.7 L13.0,49.7 L12.0,45.7 L11.0,44.7 L10.0,41.9 L9.0,29.9 L8.0,29.9 L7.0,29.9 L6.0,39.9 L5.0,44.6 L4.0,47.6 L3.0,47.6 L2.0,46.0 L1.0,44.6 L0.0,29.9Z" fill="#5a5a18" opacity="0.85"/><path d="M10 10L26 21L10 32z" fill="#9b9b1b" opacity="0.9"/></svg><div class="t" style="left:35px;top:1px;font-size:15.5px;line-height:19px;color:#303008">Vocal</div></div><div style="left:329.5px;top:312.4px;width:175.5px;height:81.9px;background:#fcfcb6;overflow:hidden"><svg width="175.5" height="81.9" style="position:absolute;left:0;top:0"><rect x="21.9" y="20" width="1.2" height="61.900000000000006" fill="rgba(0,0,0,0.08)"/><rect x="43.9" y="20" width="1.2" height="61.900000000000006" fill="rgba(0,0,0,0.13)"/><rect x="65.8" y="20" width="1.2" height="61.900000000000006" fill="rgba(0,0,0,0.08)"/><rect x="87.8" y="20" width="1.2" height="61.900000000000006" fill="rgba(0,0,0,0.13)"/><rect x="109.7" y="20" width="1.2" height="61.900000000000006" fill="rgba(0,0,0,0.08)"/><rect x="131.6" y="20" width="1.2" height="61.900000000000006" fill="rgba(0,0,0,0.13)"/><rect x="153.6" y="20" width="1.2" height="61.900000000000006" fill="rgba(0,0,0,0.08)"/><rect x="0" y="19" width="175.5" height="1" fill="rgba(0,0,0,0.10)"/><path transform="translate(2,24)" d="M0.0,26.0 L1.0,18.0 L2.0,13.8 L3.0,12.1 L4.0,12.8 L5.0,11.0 L6.0,11.7 L7.0,11.9 L8.0,11.0 L9.0,14.6 L10.0,14.5 L11.0,19.1 L12.0,26.0 L13.0,26.0 L14.0,26.0 L15.0,17.0 L16.0,16.3 L17.0,14.4 L18.0,13.5 L19.0,11.1 L20.0,7.4 L21.0,7.4 L22.0,7.5 L23.0,11.4 L24.0,8.8 L25.0,9.1 L26.0,10.0 L27.0,11.6 L28.0,16.3 L29.0,19.5 L30.0,26.0 L31.0,26.0 L32.0,17.6 L33.0,13.1 L34.0,10.4 L35.0,11.7 L36.0,9.8 L37.0,14.3 L38.0,13.6 L39.0,26.0 L40.0,26.0 L41.0,16.7 L42.0,15.7 L43.0,15.3 L44.0,12.3 L45.0,10.9 L46.0,12.2 L47.0,13.6 L48.0,12.8 L49.0,11.0 L50.0,15.2 L51.0,13.5 L52.0,18.4 L53.0,26.0 L54.0,26.0 L55.0,26.0 L56.0,19.8 L57.0,15.3 L58.0,9.7 L59.0,9.9 L60.0,13.8 L61.0,18.1 L62.0,26.0 L63.0,16.9 L64.0,13.0 L65.0,14.8 L66.0,10.9 L67.0,9.0 L68.0,10.5 L69.0,9.8 L70.0,8.8 L71.0,12.0 L72.0,12.6 L73.0,12.0 L74.0,14.3 L75.0,17.4 L76.0,26.0 L77.0,26.0 L78.0,15.8 L79.0,9.0 L80.0,10.2 L81.0,7.0 L82.0,5.6 L83.0,9.1 L84.0,12.4 L85.0,14.4 L86.0,26.0 L87.0,26.0 L88.0,17.8 L89.0,13.8 L90.0,12.2 L91.0,10.4 L92.0,10.6 L93.0,11.7 L94.0,14.1 L95.0,26.0 L96.0,26.0 L97.0,9.8 L98.0,6.3 L99.0,7.1 L100.0,5.8 L101.0,9.1 L102.0,17.4 L103.0,26.0 L104.0,26.0 L105.0,15.6 L106.0,12.2 L107.0,7.9 L108.0,5.9 L109.0,7.9 L110.0,6.2 L111.0,6.0 L112.0,7.4 L113.0,9.7 L114.0,10.9 L115.0,8.2 L116.0,13.4 L117.0,26.0 L118.0,26.0 L119.0,16.1 L120.0,11.8 L121.0,11.9 L122.0,8.8 L123.0,7.3 L124.0,8.7 L125.0,11.4 L126.0,11.3 L127.0,16.4 L128.0,26.0 L129.0,24.4 L130.0,18.3 L131.0,16.2 L132.0,15.6 L133.0,13.4 L134.0,14.9 L135.0,12.2 L136.0,11.8 L137.0,15.5 L138.0,13.7 L139.0,16.4 L140.0,17.0 L141.0,20.7 L142.0,26.0 L143.0,22.9 L144.0,14.7 L145.0,13.9 L146.0,10.6 L147.0,12.5 L148.0,9.3 L149.0,10.8 L150.0,12.0 L151.0,13.1 L152.0,14.7 L153.0,15.4 L154.0,26.0 L155.0,20.6 L156.0,17.7 L157.0,16.4 L158.0,15.6 L159.0,12.7 L160.0,12.9 L161.0,12.5 L162.0,11.7 L163.0,14.1 L164.0,16.4 L165.0,17.0 L166.0,17.8 L167.0,22.0 L168.0,26.0 L169.0,26.0 L170.0,15.0 L171.0,14.0 L171.0,41.9 L170.0,40.9 L169.0,29.9 L168.0,29.9 L167.0,33.9 L166.0,38.1 L165.0,38.9 L164.0,39.5 L163.0,41.8 L162.0,44.2 L161.0,43.4 L160.0,43.0 L159.0,43.2 L158.0,40.3 L157.0,39.5 L156.0,38.2 L155.0,35.3 L154.0,29.9 L153.0,40.5 L152.0,41.2 L151.0,42.8 L150.0,43.9 L149.0,45.1 L148.0,46.6 L147.0,43.4 L146.0,45.3 L145.0,42.0 L144.0,41.2 L143.0,33.0 L142.0,29.9 L141.0,35.2 L140.0,38.9 L139.0,39.5 L138.0,42.2 L137.0,40.4 L136.0,44.1 L135.0,43.7 L134.0,41.0 L133.0,42.5 L132.0,40.3 L131.0,39.7 L130.0,37.6 L129.0,31.5 L128.0,29.9 L127.0,39.5 L126.0,44.6 L125.0,44.5 L124.0,47.2 L123.0,48.6 L122.0,47.1 L121.0,44.0 L120.0,44.1 L119.0,39.8 L118.0,29.9 L117.0,29.9 L116.0,42.5 L115.0,47.7 L114.0,45.0 L113.0,46.2 L112.0,48.5 L111.0,49.9 L110.0,49.7 L109.0,48.0 L108.0,50.0 L107.0,48.0 L106.0,43.7 L105.0,40.3 L104.0,29.9 L103.0,29.9 L102.0,38.5 L101.0,46.8 L100.0,50.1 L99.0,48.8 L98.0,49.6 L97.0,46.1 L96.0,29.9 L95.0,29.9 L94.0,41.8 L93.0,44.2 L92.0,45.3 L91.0,45.5 L90.0,43.7 L89.0,42.1 L88.0,38.1 L87.0,29.9 L86.0,29.9 L85.0,41.5 L84.0,43.5 L83.0,46.8 L82.0,50.3 L81.0,48.9 L80.0,45.7 L79.0,46.9 L78.0,40.1 L77.0,29.9 L76.0,29.9 L75.0,38.5 L74.0,41.6 L73.0,43.9 L72.0,43.3 L71.0,43.9 L70.0,47.1 L69.0,46.1 L68.0,45.4 L67.0,46.9 L66.0,45.0 L65.0,41.1 L64.0,42.9 L63.0,39.0 L62.0,29.9 L61.0,37.8 L60.0,42.1 L59.0,46.0 L58.0,46.2 L57.0,40.6 L56.0,36.1 L55.0,29.9 L54.0,29.9 L53.0,29.9 L52.0,37.5 L51.0,42.4 L50.0,40.7 L49.0,44.9 L48.0,43.1 L47.0,42.3 L46.0,43.7 L45.0,45.0 L44.0,43.6 L43.0,40.6 L42.0,40.2 L41.0,39.2 L40.0,29.9 L39.0,29.9 L38.0,42.3 L37.0,41.6 L36.0,46.1 L35.0,44.2 L34.0,45.5 L33.0,42.8 L32.0,38.3 L31.0,29.9 L30.0,29.9 L29.0,36.4 L28.0,39.6 L27.0,44.3 L26.0,45.9 L25.0,46.8 L24.0,47.1 L23.0,44.5 L22.0,48.4 L21.0,48.5 L20.0,48.5 L19.0,44.8 L18.0,42.4 L17.0,41.5 L16.0,39.6 L15.0,38.9 L14.0,29.9 L13.0,29.9 L12.0,29.9 L11.0,36.8 L10.0,41.4 L9.0,41.3 L8.0,44.9 L7.0,44.0 L6.0,44.2 L5.0,44.9 L4.0,43.1 L3.0,43.8 L2.0,42.1 L1.0,37.9 L0.0,29.9Z" fill="#5a5a18" opacity="0.85"/><path d="M10 9L30 20.5L10 32z" fill="#fff" stroke="#111" stroke-width="2"/><rect x="140.4" y="0" width="2.5" height="81.9" fill="#fff"/></svg><div class="t" style="left:35px;top:1px;font-size:15.5px;line-height:19px;color:#303008">Vocal</div></div><div style="left:329.5px;top:395.8px;width:175.5px;height:81.9px;background:#fbfb2c;overflow:hidden"><svg width="175.5" height="81.9" style="position:absolute;left:0;top:0"><rect x="21.9" y="20" width="1.2" height="61.900000000000006" fill="rgba(0,0,0,0.08)"/><rect x="43.9" y="20" width="1.2" height="61.900000000000006" fill="rgba(0,0,0,0.13)"/><rect x="65.8" y="20" width="1.2" height="61.900000000000006" fill="rgba(0,0,0,0.08)"/><rect x="87.8" y="20" width="1.2" height="61.900000000000006" fill="rgba(0,0,0,0.13)"/><rect x="109.7" y="20" width="1.2" height="61.900000000000006" fill="rgba(0,0,0,0.08)"/><rect x="131.6" y="20" width="1.2" height="61.900000000000006" fill="rgba(0,0,0,0.13)"/><rect x="153.6" y="20" width="1.2" height="61.900000000000006" fill="rgba(0,0,0,0.08)"/><rect x="0" y="19" width="175.5" height="1" fill="rgba(0,0,0,0.10)"/><path transform="translate(2,24)" d="M0.0,26.0 L1.0,12.5 L2.0,8.3 L3.0,5.9 L4.0,6.5 L5.0,9.3 L6.0,14.3 L7.0,26.0 L8.0,16.4 L9.0,13.7 L10.0,10.6 L11.0,7.8 L12.0,7.8 L13.0,8.9 L14.0,6.7 L15.0,7.7 L16.0,6.6 L17.0,9.2 L18.0,11.2 L19.0,11.7 L20.0,18.0 L21.0,26.0 L22.0,20.8 L23.0,12.6 L24.0,9.7 L25.0,11.8 L26.0,11.4 L27.0,6.6 L28.0,6.3 L29.0,9.4 L30.0,10.8 L31.0,9.9 L32.0,11.0 L33.0,17.4 L34.0,26.0 L35.0,15.5 L36.0,11.1 L37.0,11.3 L38.0,9.2 L39.0,10.1 L40.0,8.1 L41.0,9.9 L42.0,11.6 L43.0,11.6 L44.0,15.3 L45.0,22.1 L46.0,26.0 L47.0,21.7 L48.0,14.7 L49.0,12.4 L50.0,8.6 L51.0,9.0 L52.0,9.2 L53.0,9.0 L54.0,8.2 L55.0,5.6 L56.0,9.2 L57.0,8.3 L58.0,7.5 L59.0,9.1 L60.0,13.1 L61.0,15.8 L62.0,26.0 L63.0,26.0 L64.0,15.4 L65.0,14.6 L66.0,14.2 L67.0,13.7 L68.0,11.6 L69.0,14.9 L70.0,17.2 L71.0,26.0 L72.0,26.0 L73.0,26.0 L74.0,13.2 L75.0,10.1 L76.0,10.4 L77.0,11.7 L78.0,9.6 L79.0,9.7 L80.0,7.3 L81.0,7.5 L82.0,7.2 L83.0,9.8 L84.0,11.0 L85.0,16.2 L86.0,26.0 L87.0,26.0 L88.0,17.3 L89.0,13.1 L90.0,13.8 L91.0,10.6 L92.0,10.4 L93.0,9.7 L94.0,13.9 L95.0,14.2 L96.0,12.8 L97.0,18.6 L98.0,26.0 L99.0,26.0 L100.0,15.6 L101.0,10.0 L102.0,8.6 L103.0,5.8 L104.0,6.4 L105.0,12.3 L106.0,19.9 L107.0,26.0 L108.0,26.0 L109.0,16.4 L110.0,15.0 L111.0,14.3 L112.0,13.8 L113.0,13.8 L114.0,10.8 L115.0,12.3 L116.0,11.3 L117.0,10.4 L118.0,13.5 L119.0,13.6 L120.0,19.6 L121.0,26.0 L122.0,13.5 L123.0,9.3 L124.0,6.0 L125.0,10.3 L126.0,7.4 L127.0,7.8 L128.0,9.3 L129.0,13.0 L130.0,26.0 L131.0,26.0 L132.0,20.7 L133.0,13.8 L134.0,11.4 L135.0,10.5 L136.0,8.2 L137.0,9.6 L138.0,11.8 L139.0,8.6 L140.0,12.0 L141.0,9.5 L142.0,11.1 L143.0,14.7 L144.0,17.3 L145.0,26.0 L146.0,26.0 L147.0,20.7 L148.0,17.6 L149.0,13.1 L150.0,14.8 L151.0,11.2 L152.0,13.9 L153.0,12.7 L154.0,12.0 L155.0,12.6 L156.0,10.2 L157.0,14.0 L158.0,13.8 L159.0,16.0 L160.0,18.0 L161.0,19.5 L162.0,26.0 L163.0,17.3 L164.0,12.7 L165.0,9.5 L166.0,11.3 L167.0,10.7 L168.0,6.8 L169.0,5.2 L170.0,11.3 L171.0,10.0 L171.0,45.9 L170.0,44.6 L169.0,50.7 L168.0,49.1 L167.0,45.2 L166.0,44.6 L165.0,46.4 L164.0,43.2 L163.0,38.6 L162.0,29.9 L161.0,36.4 L160.0,37.9 L159.0,39.9 L158.0,42.1 L157.0,41.9 L156.0,45.7 L155.0,43.3 L154.0,43.9 L153.0,43.2 L152.0,42.0 L151.0,44.7 L150.0,41.1 L149.0,42.8 L148.0,38.3 L147.0,35.2 L146.0,29.9 L145.0,29.9 L144.0,38.6 L143.0,41.2 L142.0,44.8 L141.0,46.4 L140.0,43.9 L139.0,47.3 L138.0,44.1 L137.0,46.3 L136.0,47.7 L135.0,45.4 L134.0,44.5 L133.0,42.1 L132.0,35.2 L131.0,29.9 L130.0,29.9 L129.0,42.9 L128.0,46.6 L127.0,48.1 L126.0,48.5 L125.0,45.6 L124.0,49.9 L123.0,46.6 L122.0,42.4 L121.0,29.9 L120.0,36.3 L119.0,42.3 L118.0,42.4 L117.0,45.5 L116.0,44.6 L115.0,43.6 L114.0,45.1 L113.0,42.1 L112.0,42.1 L111.0,41.6 L110.0,40.9 L109.0,39.5 L108.0,29.9 L107.0,29.9 L106.0,36.0 L105.0,43.6 L104.0,49.5 L103.0,50.1 L102.0,47.3 L101.0,45.9 L100.0,40.3 L99.0,29.9 L98.0,29.9 L97.0,37.3 L96.0,43.1 L95.0,41.7 L94.0,42.0 L93.0,46.2 L92.0,45.5 L91.0,45.3 L90.0,42.1 L89.0,42.8 L88.0,38.6 L87.0,29.9 L86.0,29.9 L85.0,39.7 L84.0,44.9 L83.0,46.1 L82.0,48.7 L81.0,48.4 L80.0,48.6 L79.0,46.2 L78.0,46.3 L77.0,44.2 L76.0,45.5 L75.0,45.8 L74.0,42.7 L73.0,29.9 L72.0,29.9 L71.0,29.9 L70.0,38.7 L69.0,41.0 L68.0,44.3 L67.0,42.2 L66.0,41.7 L65.0,41.3 L64.0,40.5 L63.0,29.9 L62.0,29.9 L61.0,40.1 L60.0,42.8 L59.0,46.8 L58.0,48.4 L57.0,47.6 L56.0,46.7 L55.0,50.3 L54.0,47.7 L53.0,46.9 L52.0,46.7 L51.0,46.9 L50.0,47.3 L49.0,43.5 L48.0,41.2 L47.0,34.2 L46.0,29.9 L45.0,33.8 L44.0,40.6 L43.0,44.3 L42.0,44.3 L41.0,46.0 L40.0,47.8 L39.0,45.8 L38.0,46.7 L37.0,44.6 L36.0,44.8 L35.0,40.4 L34.0,29.9 L33.0,38.5 L32.0,44.9 L31.0,46.0 L30.0,45.1 L29.0,46.5 L28.0,49.6 L27.0,49.3 L26.0,44.5 L25.0,44.1 L24.0,46.2 L23.0,43.3 L22.0,35.1 L21.0,29.9 L20.0,37.9 L19.0,44.2 L18.0,44.7 L17.0,46.7 L16.0,49.3 L15.0,48.2 L14.0,49.2 L13.0,47.0 L12.0,48.1 L11.0,48.1 L10.0,45.3 L9.0,42.2 L8.0,39.5 L7.0,29.9 L6.0,41.6 L5.0,46.6 L4.0,49.4 L3.0,50.0 L2.0,47.6 L1.0,43.4 L0.0,29.9Z" fill="#5a5a18" opacity="0.85"/><path d="M10 10L26 21L10 32z" fill="#9b9b1b" opacity="0.9"/></svg><div class="t" style="left:35px;top:1px;font-size:15.5px;line-height:19px;color:#303008">Vocal</div></div><div style="left:329.5px;top:479.20000000000005px;width:175.5px;height:81.9px;background:#262626"></div><div style="left:339.0px;top:511.70000000000005px;width:15.5px;height:15.5px;background:#474747"></div><div style="left:329.5px;top:562.6px;width:175.5px;height:81.9px;background:#fbfb2c;overflow:hidden"><svg width="175.5" height="81.9" style="position:absolute;left:0;top:0"><rect x="21.9" y="20" width="1.2" height="61.900000000000006" fill="rgba(0,0,0,0.08)"/><rect x="43.9" y="20" width="1.2" height="61.900000000000006" fill="rgba(0,0,0,0.13)"/><rect x="65.8" y="20" width="1.2" height="61.900000000000006" fill="rgba(0,0,0,0.08)"/><rect x="87.8" y="20" width="1.2" height="61.900000000000006" fill="rgba(0,0,0,0.13)"/><rect x="109.7" y="20" width="1.2" height="61.900000000000006" fill="rgba(0,0,0,0.08)"/><rect x="131.6" y="20" width="1.2" height="61.900000000000006" fill="rgba(0,0,0,0.13)"/><rect x="153.6" y="20" width="1.2" height="61.900000000000006" fill="rgba(0,0,0,0.08)"/><rect x="0" y="19" width="175.5" height="1" fill="rgba(0,0,0,0.10)"/><path transform="translate(2,24)" d="M0.0,5.8 L1.0,6.2 L2.0,6.8 L3.0,9.0 L4.0,8.6 L5.0,6.9 L6.0,6.5 L7.0,10.0 L8.0,9.3 L9.0,6.1 L10.0,9.5 L11.0,7.1 L12.0,8.6 L13.0,7.2 L14.0,6.2 L15.0,7.5 L16.0,8.3 L17.0,8.6 L18.0,7.3 L19.0,7.3 L20.0,8.2 L21.0,8.0 L22.0,7.7 L23.0,8.9 L24.0,9.3 L25.0,7.5 L26.0,9.6 L27.0,7.4 L28.0,6.5 L29.0,6.4 L30.0,8.9 L31.0,8.2 L32.0,5.9 L33.0,8.5 L34.0,5.6 L35.0,9.2 L36.0,6.3 L37.0,9.9 L38.0,7.1 L39.0,6.5 L40.0,7.6 L41.0,7.2 L42.0,6.0 L43.0,5.6 L44.0,9.3 L45.0,7.7 L46.0,9.9 L47.0,8.4 L48.0,9.4 L49.0,9.3 L50.0,7.3 L51.0,9.7 L52.0,9.4 L53.0,10.0 L54.0,6.4 L55.0,25.2 L56.0,25.2 L57.0,25.2 L58.0,25.2 L59.0,25.2 L60.0,25.2 L61.0,25.2 L62.0,25.2 L63.0,25.2 L64.0,25.2 L65.0,25.2 L66.0,25.2 L67.0,25.2 L68.0,25.2 L69.0,25.2 L70.0,25.2 L71.0,25.2 L72.0,25.2 L73.0,9.0 L74.0,9.7 L75.0,7.3 L76.0,6.9 L77.0,7.2 L78.0,7.6 L79.0,7.7 L80.0,6.8 L81.0,8.7 L82.0,6.3 L83.0,7.0 L84.0,6.2 L85.0,6.1 L86.0,6.3 L87.0,7.7 L88.0,7.7 L89.0,6.8 L90.0,7.5 L91.0,9.9 L92.0,6.0 L93.0,9.2 L94.0,7.9 L95.0,8.0 L96.0,9.6 L97.0,7.5 L98.0,7.4 L99.0,6.4 L100.0,7.3 L101.0,8.7 L102.0,7.5 L103.0,5.8 L104.0,7.2 L105.0,6.3 L106.0,10.0 L107.0,7.0 L108.0,9.1 L109.0,9.3 L110.0,8.6 L111.0,9.3 L112.0,9.7 L113.0,9.1 L114.0,9.0 L115.0,8.9 L116.0,6.5 L117.0,9.7 L118.0,9.2 L119.0,9.8 L120.0,7.8 L121.0,25.2 L122.0,25.2 L123.0,25.2 L124.0,25.2 L125.0,25.2 L126.0,25.2 L127.0,25.2 L128.0,25.2 L129.0,25.2 L130.0,25.2 L131.0,25.2 L132.0,25.2 L133.0,25.2 L134.0,25.2 L135.0,25.2 L136.0,25.2 L137.0,25.2 L138.0,9.0 L139.0,7.7 L140.0,9.0 L141.0,9.2 L142.0,7.9 L143.0,9.7 L144.0,6.1 L145.0,7.5 L146.0,8.3 L147.0,7.6 L148.0,5.8 L149.0,7.9 L150.0,8.3 L151.0,9.1 L152.0,8.4 L153.0,6.6 L154.0,7.3 L155.0,8.8 L156.0,6.0 L157.0,9.5 L158.0,8.5 L159.0,6.6 L160.0,6.0 L161.0,8.0 L162.0,10.0 L163.0,7.6 L164.0,8.2 L165.0,9.9 L166.0,8.5 L167.0,6.1 L168.0,9.9 L169.0,9.3 L170.0,9.3 L171.0,6.5 L171.0,49.4 L170.0,46.6 L169.0,46.6 L168.0,46.0 L167.0,49.8 L166.0,47.4 L165.0,46.0 L164.0,47.7 L163.0,48.3 L162.0,45.9 L161.0,47.9 L160.0,49.9 L159.0,49.3 L158.0,47.4 L157.0,46.4 L156.0,49.9 L155.0,47.1 L154.0,48.6 L153.0,49.3 L152.0,47.5 L151.0,46.8 L150.0,47.6 L149.0,48.0 L148.0,50.1 L147.0,48.3 L146.0,47.6 L145.0,48.4 L144.0,49.8 L143.0,46.2 L142.0,48.0 L141.0,46.7 L140.0,46.9 L139.0,48.2 L138.0,46.9 L137.0,30.7 L136.0,30.7 L135.0,30.7 L134.0,30.7 L133.0,30.7 L132.0,30.7 L131.0,30.7 L130.0,30.7 L129.0,30.7 L128.0,30.7 L127.0,30.7 L126.0,30.7 L125.0,30.7 L124.0,30.7 L123.0,30.7 L122.0,30.7 L121.0,30.7 L120.0,48.1 L119.0,46.1 L118.0,46.7 L117.0,46.2 L116.0,49.4 L115.0,47.0 L114.0,46.9 L113.0,46.8 L112.0,46.2 L111.0,46.6 L110.0,47.3 L109.0,46.6 L108.0,46.8 L107.0,48.9 L106.0,45.9 L105.0,49.6 L104.0,48.7 L103.0,50.1 L102.0,48.4 L101.0,47.2 L100.0,48.6 L99.0,49.5 L98.0,48.5 L97.0,48.4 L96.0,46.3 L95.0,47.9 L94.0,48.0 L93.0,46.7 L92.0,49.9 L91.0,46.0 L90.0,48.4 L89.0,49.1 L88.0,48.2 L87.0,48.2 L86.0,49.6 L85.0,49.8 L84.0,49.7 L83.0,48.9 L82.0,49.6 L81.0,47.2 L80.0,49.1 L79.0,48.2 L78.0,48.3 L77.0,48.7 L76.0,49.0 L75.0,48.6 L74.0,46.2 L73.0,46.9 L72.0,30.7 L71.0,30.7 L70.0,30.7 L69.0,30.7 L68.0,30.7 L67.0,30.7 L66.0,30.7 L65.0,30.7 L64.0,30.7 L63.0,30.7 L62.0,30.7 L61.0,30.7 L60.0,30.7 L59.0,30.7 L58.0,30.7 L57.0,30.7 L56.0,30.7 L55.0,30.7 L54.0,49.5 L53.0,45.9 L52.0,46.5 L51.0,46.2 L50.0,48.6 L49.0,46.6 L48.0,46.5 L47.0,47.5 L46.0,46.0 L45.0,48.2 L44.0,46.6 L43.0,50.3 L42.0,49.9 L41.0,48.7 L40.0,48.3 L39.0,49.4 L38.0,48.8 L37.0,46.0 L36.0,49.6 L35.0,46.7 L34.0,50.3 L33.0,47.4 L32.0,50.0 L31.0,47.7 L30.0,47.0 L29.0,49.5 L28.0,49.4 L27.0,48.5 L26.0,46.3 L25.0,48.4 L24.0,46.6 L23.0,47.0 L22.0,48.2 L21.0,47.9 L20.0,47.7 L19.0,48.6 L18.0,48.6 L17.0,47.3 L16.0,47.6 L15.0,48.4 L14.0,49.7 L13.0,48.7 L12.0,47.3 L11.0,48.8 L10.0,46.4 L9.0,49.8 L8.0,46.6 L7.0,45.9 L6.0,49.4 L5.0,49.0 L4.0,47.3 L3.0,46.9 L2.0,49.1 L1.0,49.7 L0.0,50.1Z" fill="#5a5a18" opacity="0.85"/><path d="M10 10L26 21L10 32z" fill="#9b9b1b" opacity="0.9"/></svg><div class="t" style="left:35px;top:1px;font-size:15.5px;line-height:19px;color:#303008">Vocal</div></div><div style="left:329.5px;top:646.0px;width:175.5px;height:81.9px;background:#262626"></div><div style="left:339.0px;top:678.5px;width:15.5px;height:15.5px;background:#474747"></div><div style="left:329.5px;top:729.4000000000001px;width:175.5px;height:81.9px;background:#262626"></div><div style="left:339.0px;top:761.9000000000001px;width:15.5px;height:15.5px;background:#474747"></div><div style="left:329.5px;top:812.8000000000001px;width:175.5px;height:54.19999999999993px;background:#262626"></div><div style="left:339.0px;top:845.3000000000001px;width:15.5px;height:15.5px;background:#474747"></div><div style="left:506.5px;top:229.0px;width:175.5px;height:81.9px;background:#262626;overflow:hidden"><div style="left:0;top:0;width:175.5px;height:38px;background:#484848"></div></div><svg style="position:absolute;left:517.5px;top:237.0px;" width="19" height="23" viewBox="0 0 19 23"><path d="M0 0L18 11.5L0 23z" fill="#a9a9a9"/></svg><div class="t " style="left:541.5px;top:239.9px;font-size:17.8px;line-height:22.25px;color:#f4f4f4;">Scene 1</div><div style="left:506.5px;top:268.0px;width:175.5px;height:42.9px;background:#3a82d7"></div><div style="left:506.5px;top:312.4px;width:175.5px;height:81.9px;background:#262626;overflow:hidden"><div style="left:0;top:0;width:175.5px;height:38px;background:#484848"></div></div><svg style="position:absolute;left:517.5px;top:320.4px;" width="19" height="23" viewBox="0 0 19 23"><path d="M0 0L18 11.5L0 23z" fill="#a9a9a9"/></svg><div class="t " style="left:541.5px;top:323.3px;font-size:17.8px;line-height:22.25px;color:#f4f4f4;">Scene 2</div><div style="left:506.5px;top:351.4px;width:175.5px;height:13.6px;background:#3a82d7"></div><div style="left:506.5px;top:366.0px;width:175.5px;height:13.6px;background:#4e9b2e"></div><div style="left:506.5px;top:380.7px;width:175.5px;height:13.6px;background:#0d8b95"></div><div style="left:506.5px;top:395.8px;width:175.5px;height:81.9px;background:#262626;overflow:hidden"><div style="left:0;top:0;width:175.5px;height:38px;background:#484848"></div></div><svg style="position:absolute;left:517.5px;top:403.8px;" width="19" height="23" viewBox="0 0 19 23"><path d="M0 0L18 11.5L0 23z" fill="#a9a9a9"/></svg><div class="t " style="left:541.5px;top:406.7px;font-size:17.8px;line-height:22.25px;color:#f4f4f4;">Scene 3</div><div style="left:506.5px;top:434.8px;width:175.5px;height:21.0px;background:#3a82d7"></div><div style="left:506.5px;top:456.8px;width:175.5px;height:21.0px;background:#7ee05c"></div><div style="left:615.31px;top:456.75px;width:2.5px;height:20.950000000000003px;background:#fff"></div><div style="left:506.5px;top:479.20000000000005px;width:175.5px;height:81.9px;background:#262626;overflow:hidden"><div style="left:0;top:0;width:175.5px;height:38px;background:#484848"></div></div><svg style="position:absolute;left:517.5px;top:487.20000000000005px;" width="19" height="23" viewBox="0 0 19 23"><path d="M0 0L18 11.5L0 23z" fill="#a9a9a9"/></svg><div class="t " style="left:541.5px;top:490.1px;font-size:17.8px;line-height:22.25px;color:#f4f4f4;">Scene 4</div><div style="left:506.5px;top:518.2px;width:175.5px;height:21.0px;background:#4e9b2e"></div><div style="left:506.5px;top:540.2px;width:175.5px;height:21.0px;background:#0d8b95"></div><div style="left:506.5px;top:562.6px;width:175.5px;height:81.9px;background:#262626;overflow:hidden"><div style="left:0;top:0;width:175.5px;height:38px;background:#484848"></div></div><svg style="position:absolute;left:517.5px;top:570.6px;" width="19" height="23" viewBox="0 0 19 23"><path d="M0 0L18 11.5L0 23z" fill="#a9a9a9"/></svg><div class="t " style="left:541.5px;top:573.5px;font-size:17.8px;line-height:22.25px;color:#f4f4f4;">Scene 5</div><div style="left:506.5px;top:601.6px;width:175.5px;height:13.6px;background:#3a82d7"></div><div style="left:506.5px;top:616.2px;width:175.5px;height:13.6px;background:#4e9b2e"></div><div style="left:506.5px;top:630.9px;width:175.5px;height:13.6px;background:#0d8b95"></div><div style="left:506.5px;top:646.0px;width:175.5px;height:81.9px;background:#262626;overflow:hidden"><div style="left:0;top:0;width:175.5px;height:38px;background:#484848"></div></div><svg style="position:absolute;left:517.5px;top:654.0px;" width="19" height="23" viewBox="0 0 19 23"><path d="M0 0L18 11.5L0 23z" fill="#a9a9a9"/></svg><div class="t " style="left:541.5px;top:656.9px;font-size:17.8px;line-height:22.25px;color:#f4f4f4;">Scene 6</div><div style="left:506.5px;top:685.0px;width:175.5px;height:42.9px;background:#5aa2f0"></div><div style="left:615.31px;top:685.0px;width:2.5px;height:42.900000000000006px;background:#fff"></div><div style="left:506.5px;top:729.4000000000001px;width:175.5px;height:81.9px;background:#262626;overflow:hidden"><div style="left:0;top:0;width:175.5px;height:38px;background:#484848"></div></div><svg style="position:absolute;left:517.5px;top:737.4000000000001px;" width="19" height="23" viewBox="0 0 19 23"><path d="M0 0L18 11.5L0 23z" fill="#a9a9a9"/></svg><div class="t " style="left:541.5px;top:740.3px;font-size:17.8px;line-height:22.25px;color:#f4f4f4;">Scene 7</div><div style="left:506.5px;top:768.4px;width:175.5px;height:21.0px;background:#6ccf48"></div><div style="left:506.5px;top:790.4px;width:175.5px;height:21.0px;background:#35adb5"></div><div style="left:667.96px;top:790.3500000000001px;width:2.5px;height:20.950000000000003px;background:#fff"></div><div style="left:506.5px;top:812.8000000000001px;width:175.5px;height:54.19999999999993px;background:#262626;overflow:hidden"><div style="left:0;top:0;width:175.5px;height:38px;background:#484848"></div></div><svg style="position:absolute;left:517.5px;top:820.8000000000001px;" width="19" height="23" viewBox="0 0 19 23"><path d="M0 0L18 11.5L0 23z" fill="#a9a9a9"/></svg><div class="t " style="left:541.5px;top:823.7px;font-size:17.8px;line-height:22.25px;color:#f4f4f4;">Scene 8</div><div style="left:506.5px;top:851.8px;width:175.5px;height:15.2px;background:#4e9b2e"></div><div style="left:683.5px;top:229.0px;width:175.5px;height:81.9px;background:#3a82d7;overflow:hidden"><svg width="175.5" height="81.9" style="position:absolute;left:0;top:0"><rect x="21.9" y="20" width="1.2" height="61.900000000000006" fill="rgba(0,0,0,0.08)"/><rect x="43.9" y="20" width="1.2" height="61.900000000000006" fill="rgba(0,0,0,0.13)"/><rect x="65.8" y="20" width="1.2" height="61.900000000000006" fill="rgba(0,0,0,0.08)"/><rect x="87.8" y="20" width="1.2" height="61.900000000000006" fill="rgba(0,0,0,0.13)"/><rect x="109.7" y="20" width="1.2" height="61.900000000000006" fill="rgba(0,0,0,0.08)"/><rect x="131.6" y="20" width="1.2" height="61.900000000000006" fill="rgba(0,0,0,0.13)"/><rect x="153.6" y="20" width="1.2" height="61.900000000000006" fill="rgba(0,0,0,0.08)"/><rect x="0" y="19" width="175.5" height="1" fill="rgba(0,0,0,0.10)"/><path transform="translate(2,24)" d="M0.0,27.1 L1.0,27.1 L2.0,27.1 L3.0,27.1 L4.0,7.3 L5.0,9.0 L6.0,15.0 L7.0,19.2 L8.0,5.7 L9.0,7.5 L10.0,14.0 L11.0,18.5 L12.0,21.5 L13.0,23.6 L14.0,25.0 L15.0,25.9 L16.0,26.6 L17.0,2.0 L18.0,4.1 L19.0,11.7 L20.0,16.9 L21.0,20.4 L22.0,22.8 L23.0,24.5 L24.0,4.8 L25.0,6.7 L26.0,13.5 L27.0,18.1 L28.0,21.2 L29.0,9.4 L30.0,10.9 L31.0,16.3 L32.0,20.0 L33.0,22.6 L34.0,24.3 L35.0,25.5 L36.0,7.5 L37.0,9.1 L38.0,15.1 L39.0,19.2 L40.0,22.0 L41.0,23.9 L42.0,25.2 L43.0,26.1 L44.0,26.7 L45.0,9.6 L46.0,11.1 L47.0,16.5 L48.0,20.1 L49.0,22.6 L50.0,1.5 L51.0,3.6 L52.0,11.4 L53.0,16.7 L54.0,20.3 L55.0,22.7 L56.0,24.4 L57.0,25.5 L58.0,26.3 L59.0,26.8 L60.0,27.1 L61.0,27.1 L62.0,27.1 L63.0,27.1 L64.0,27.1 L65.0,27.1 L66.0,4.5 L67.0,6.4 L68.0,13.3 L69.0,18.0 L70.0,21.1 L71.0,23.3 L72.0,24.8 L73.0,25.8 L74.0,26.5 L75.0,27.0 L76.0,27.1 L77.0,27.1 L78.0,27.1 L79.0,27.1 L80.0,27.1 L81.0,27.1 L82.0,5.4 L83.0,7.2 L84.0,13.8 L85.0,18.4 L86.0,21.4 L87.0,23.5 L88.0,24.9 L89.0,25.9 L90.0,26.5 L91.0,27.0 L92.0,27.1 L93.0,27.1 L94.0,27.1 L95.0,27.1 L96.0,27.1 L97.0,27.1 L98.0,10.6 L99.0,12.0 L100.0,17.1 L101.0,20.6 L102.0,7.9 L103.0,9.5 L104.0,15.4 L105.0,19.4 L106.0,22.1 L107.0,24.0 L108.0,25.3 L109.0,26.1 L110.0,26.7 L111.0,27.1 L112.0,27.1 L113.0,27.1 L114.0,5.0 L115.0,6.8 L116.0,13.6 L117.0,18.2 L118.0,21.3 L119.0,23.4 L120.0,24.9 L121.0,25.8 L122.0,26.5 L123.0,8.1 L124.0,9.7 L125.0,15.5 L126.0,19.5 L127.0,22.2 L128.0,24.0 L129.0,11.0 L130.0,12.3 L131.0,17.3 L132.0,20.7 L133.0,23.0 L134.0,24.6 L135.0,25.7 L136.0,26.4 L137.0,26.9 L138.0,27.1 L139.0,27.1 L140.0,27.1 L141.0,27.1 L142.0,27.1 L143.0,27.1 L144.0,27.1 L145.0,2.2 L146.0,4.3 L147.0,11.8 L148.0,17.0 L149.0,20.5 L150.0,22.9 L151.0,24.5 L152.0,25.6 L153.0,26.3 L154.0,8.9 L155.0,10.4 L156.0,16.0 L157.0,19.8 L158.0,22.4 L159.0,24.2 L160.0,25.4 L161.0,26.2 L162.0,26.8 L163.0,27.1 L164.0,27.1 L165.0,27.1 L166.0,27.1 L167.0,27.1 L168.0,27.1 L169.0,27.1 L170.0,7.0 L171.0,8.7 L171.0,47.2 L170.0,48.9 L169.0,28.8 L168.0,28.8 L167.0,28.8 L166.0,28.8 L165.0,28.8 L164.0,28.8 L163.0,28.8 L162.0,29.1 L161.0,29.7 L160.0,30.5 L159.0,31.7 L158.0,33.5 L157.0,36.1 L156.0,39.9 L155.0,45.5 L154.0,47.0 L153.0,29.6 L152.0,30.3 L151.0,31.4 L150.0,33.0 L149.0,35.4 L148.0,38.9 L147.0,44.1 L146.0,51.6 L145.0,53.7 L144.0,28.8 L143.0,28.8 L142.0,28.8 L141.0,28.8 L140.0,28.8 L139.0,28.8 L138.0,28.8 L137.0,29.0 L136.0,29.5 L135.0,30.2 L134.0,31.3 L133.0,32.9 L132.0,35.2 L131.0,38.6 L130.0,43.6 L129.0,44.9 L128.0,31.9 L127.0,33.7 L126.0,36.4 L125.0,40.4 L124.0,46.2 L123.0,47.8 L122.0,29.4 L121.0,30.1 L120.0,31.0 L119.0,32.5 L118.0,34.6 L117.0,37.7 L116.0,42.3 L115.0,49.1 L114.0,50.9 L113.0,28.8 L112.0,28.8 L111.0,28.8 L110.0,29.2 L109.0,29.8 L108.0,30.6 L107.0,31.9 L106.0,33.8 L105.0,36.5 L104.0,40.5 L103.0,46.4 L102.0,48.0 L101.0,35.3 L100.0,38.8 L99.0,43.9 L98.0,45.3 L97.0,28.8 L96.0,28.8 L95.0,28.8 L94.0,28.8 L93.0,28.8 L92.0,28.8 L91.0,28.9 L90.0,29.4 L89.0,30.0 L88.0,31.0 L87.0,32.4 L86.0,34.5 L85.0,37.5 L84.0,42.1 L83.0,48.7 L82.0,50.5 L81.0,28.8 L80.0,28.8 L79.0,28.8 L78.0,28.8 L77.0,28.8 L76.0,28.8 L75.0,28.9 L74.0,29.4 L73.0,30.1 L72.0,31.1 L71.0,32.6 L70.0,34.8 L69.0,37.9 L68.0,42.6 L67.0,49.5 L66.0,51.4 L65.0,28.8 L64.0,28.8 L63.0,28.8 L62.0,28.8 L61.0,28.8 L60.0,28.8 L59.0,29.1 L58.0,29.6 L57.0,30.4 L56.0,31.5 L55.0,33.2 L54.0,35.6 L53.0,39.2 L52.0,44.5 L51.0,52.3 L50.0,54.4 L49.0,33.3 L48.0,35.8 L47.0,39.4 L46.0,44.8 L45.0,46.3 L44.0,29.2 L43.0,29.8 L42.0,30.7 L41.0,32.0 L40.0,33.9 L39.0,36.7 L38.0,40.8 L37.0,46.8 L36.0,48.4 L35.0,30.4 L34.0,31.6 L33.0,33.3 L32.0,35.9 L31.0,39.6 L30.0,45.0 L29.0,46.5 L28.0,34.7 L27.0,37.8 L26.0,42.4 L25.0,49.2 L24.0,51.1 L23.0,31.4 L22.0,33.1 L21.0,35.5 L20.0,39.0 L19.0,44.2 L18.0,51.8 L17.0,53.9 L16.0,29.3 L15.0,30.0 L14.0,30.9 L13.0,32.3 L12.0,34.4 L11.0,37.4 L10.0,41.9 L9.0,48.4 L8.0,50.2 L7.0,36.7 L6.0,40.9 L5.0,46.9 L4.0,48.6 L3.0,28.8 L2.0,28.8 L1.0,28.8 L0.0,28.8Z" fill="#10243c" opacity="0.85"/><path d="M10 10L26 21L10 32z" fill="#235085" opacity="0.9"/><path d="M164 4v12q0 5 4.5 5t4.5-5V4M168 4v10" stroke="#1a2a3a" stroke-width="2" fill="none"/></svg><div class="t" style="left:35px;top:1px;font-size:15.5px;line-height:19px;color:#f4f8ff">Live-Punch- Ho</div></div><div style="left:683.5px;top:312.4px;width:175.5px;height:81.9px;background:#3a82d7;overflow:hidden"><svg width="175.5" height="81.9" style="position:absolute;left:0;top:0"><rect x="21.9" y="20" width="1.2" height="61.900000000000006" fill="rgba(0,0,0,0.08)"/><rect x="43.9" y="20" width="1.2" height="61.900000000000006" fill="rgba(0,0,0,0.13)"/><rect x="65.8" y="20" width="1.2" height="61.900000000000006" fill="rgba(0,0,0,0.08)"/><rect x="87.8" y="20" width="1.2" height="61.900000000000006" fill="rgba(0,0,0,0.13)"/><rect x="109.7" y="20" width="1.2" height="61.900000000000006" fill="rgba(0,0,0,0.08)"/><rect x="131.6" y="20" width="1.2" height="61.900000000000006" fill="rgba(0,0,0,0.13)"/><rect x="153.6" y="20" width="1.2" height="61.900000000000006" fill="rgba(0,0,0,0.08)"/><rect x="0" y="19" width="175.5" height="1" fill="rgba(0,0,0,0.10)"/><path transform="translate(2,24)" d="M0.0,27.1 L1.0,27.1 L2.0,2.2 L3.0,2.2 L4.0,9.1 L5.0,15.1 L6.0,19.2 L7.0,22.0 L8.0,23.9 L9.0,5.1 L10.0,5.1 L11.0,11.2 L12.0,16.6 L13.0,20.2 L14.0,22.7 L15.0,24.4 L16.0,25.5 L17.0,26.3 L18.0,26.8 L19.0,27.1 L20.0,27.1 L21.0,8.5 L22.0,8.5 L23.0,13.7 L24.0,18.3 L25.0,21.4 L26.0,23.5 L27.0,24.9 L28.0,25.9 L29.0,26.5 L30.0,27.0 L31.0,27.1 L32.0,27.1 L33.0,4.2 L34.0,4.2 L35.0,10.6 L36.0,16.1 L37.0,0.3 L38.0,0.3 L39.0,7.7 L40.0,14.2 L41.0,18.6 L42.0,5.4 L43.0,5.4 L44.0,11.4 L45.0,16.7 L46.0,20.3 L47.0,10.1 L48.0,10.1 L49.0,14.9 L50.0,19.1 L51.0,21.9 L52.0,23.8 L53.0,25.1 L54.0,0.1 L55.0,0.1 L56.0,7.5 L57.0,14.1 L58.0,18.5 L59.0,21.5 L60.0,23.6 L61.0,25.0 L62.0,25.9 L63.0,26.6 L64.0,27.0 L65.0,27.1 L66.0,0.6 L67.0,0.6 L68.0,7.9 L69.0,14.3 L70.0,18.7 L71.0,21.6 L72.0,23.6 L73.0,25.0 L74.0,26.0 L75.0,26.6 L76.0,27.0 L77.0,27.1 L78.0,27.1 L79.0,27.1 L80.0,27.1 L81.0,27.1 L82.0,2.0 L83.0,2.0 L84.0,8.9 L85.0,15.0 L86.0,4.1 L87.0,4.1 L88.0,10.5 L89.0,16.1 L90.0,19.9 L91.0,22.4 L92.0,24.2 L93.0,25.4 L94.0,26.2 L95.0,26.8 L96.0,27.1 L97.0,27.1 L98.0,27.1 L99.0,27.1 L100.0,27.1 L101.0,27.1 L102.0,2.9 L103.0,2.9 L104.0,9.6 L105.0,15.4 L106.0,19.4 L107.0,22.2 L108.0,2.0 L109.0,2.0 L110.0,9.0 L111.0,15.0 L112.0,19.2 L113.0,22.0 L114.0,23.9 L115.0,25.2 L116.0,26.1 L117.0,26.7 L118.0,27.1 L119.0,27.1 L120.0,27.1 L121.0,27.1 L122.0,27.1 L123.0,27.1 L124.0,7.6 L125.0,7.6 L126.0,13.1 L127.0,17.8 L128.0,21.0 L129.0,23.3 L130.0,24.8 L131.0,8.7 L132.0,8.7 L133.0,13.9 L134.0,18.4 L135.0,21.4 L136.0,23.5 L137.0,24.9 L138.0,25.9 L139.0,26.5 L140.0,27.0 L141.0,27.1 L142.0,27.1 L143.0,2.6 L144.0,2.6 L145.0,9.4 L146.0,15.3 L147.0,2.6 L148.0,2.6 L149.0,9.4 L150.0,15.3 L151.0,1.5 L152.0,1.5 L153.0,8.6 L154.0,14.7 L155.0,2.0 L156.0,2.0 L157.0,8.9 L158.0,15.0 L159.0,19.1 L160.0,21.9 L161.0,9.0 L162.0,9.0 L163.0,14.1 L164.0,18.5 L165.0,21.5 L166.0,23.6 L167.0,9.4 L168.0,9.4 L169.0,14.3 L170.0,18.7 L171.0,21.6 L171.0,34.3 L170.0,37.2 L169.0,41.6 L168.0,46.5 L167.0,46.5 L166.0,32.3 L165.0,34.4 L164.0,37.4 L163.0,41.8 L162.0,46.9 L161.0,46.9 L160.0,34.0 L159.0,36.8 L158.0,40.9 L157.0,47.0 L156.0,53.9 L155.0,53.9 L154.0,41.2 L153.0,47.3 L152.0,54.4 L151.0,54.4 L150.0,40.6 L149.0,46.5 L148.0,53.3 L147.0,53.3 L146.0,40.6 L145.0,46.5 L144.0,53.3 L143.0,53.3 L142.0,28.8 L141.0,28.8 L140.0,28.9 L139.0,29.4 L138.0,30.0 L137.0,31.0 L136.0,32.4 L135.0,34.5 L134.0,37.5 L133.0,42.0 L132.0,47.2 L131.0,47.2 L130.0,31.1 L129.0,32.6 L128.0,34.9 L127.0,38.1 L126.0,42.8 L125.0,48.3 L124.0,48.3 L123.0,28.8 L122.0,28.8 L121.0,28.8 L120.0,28.8 L119.0,28.8 L118.0,28.8 L117.0,29.2 L116.0,29.8 L115.0,30.7 L114.0,32.0 L113.0,33.9 L112.0,36.7 L111.0,40.9 L110.0,46.9 L109.0,53.9 L108.0,53.9 L107.0,33.7 L106.0,36.5 L105.0,40.5 L104.0,46.3 L103.0,53.0 L102.0,53.0 L101.0,28.8 L100.0,28.8 L99.0,28.8 L98.0,28.8 L97.0,28.8 L96.0,28.8 L95.0,29.1 L94.0,29.7 L93.0,30.5 L92.0,31.7 L91.0,33.5 L90.0,36.0 L89.0,39.8 L88.0,45.4 L87.0,51.8 L86.0,51.8 L85.0,40.9 L84.0,47.0 L83.0,53.9 L82.0,53.9 L81.0,28.8 L80.0,28.8 L79.0,28.8 L78.0,28.8 L77.0,28.8 L76.0,28.9 L75.0,29.3 L74.0,29.9 L73.0,30.9 L72.0,32.3 L71.0,34.3 L70.0,37.2 L69.0,41.6 L68.0,48.0 L67.0,55.3 L66.0,55.3 L65.0,28.8 L64.0,28.9 L63.0,29.3 L62.0,30.0 L61.0,30.9 L60.0,32.3 L59.0,34.4 L58.0,37.4 L57.0,41.8 L56.0,48.4 L55.0,55.8 L54.0,55.8 L53.0,30.8 L52.0,32.1 L51.0,34.0 L50.0,36.8 L49.0,41.0 L48.0,45.8 L47.0,45.8 L46.0,35.6 L45.0,39.2 L44.0,44.5 L43.0,50.5 L42.0,50.5 L41.0,37.3 L40.0,41.7 L39.0,48.2 L38.0,55.6 L37.0,55.6 L36.0,39.8 L35.0,45.3 L34.0,51.7 L33.0,51.7 L32.0,28.8 L31.0,28.8 L30.0,28.9 L29.0,29.4 L28.0,30.0 L27.0,31.0 L26.0,32.4 L25.0,34.5 L24.0,37.6 L23.0,42.2 L22.0,47.4 L21.0,47.4 L20.0,28.8 L19.0,28.8 L18.0,29.1 L17.0,29.6 L16.0,30.4 L15.0,31.5 L14.0,33.2 L13.0,35.7 L12.0,39.3 L11.0,44.7 L10.0,50.8 L9.0,50.8 L8.0,32.0 L7.0,33.9 L6.0,36.7 L5.0,40.8 L4.0,46.8 L3.0,53.7 L2.0,53.7 L1.0,28.8 L0.0,28.8Z" fill="#10243c" opacity="0.85"/><path d="M10 10L26 21L10 32z" fill="#235085" opacity="0.9"/></svg><div class="t" style="left:35px;top:1px;font-size:15.5px;line-height:19px;color:#f4f8ff">Live-Punch- InThe</div></div><div style="left:683.5px;top:395.8px;width:175.5px;height:81.9px;background:#3a82d7;overflow:hidden"><svg width="175.5" height="81.9" style="position:absolute;left:0;top:0"><rect x="21.9" y="20" width="1.2" height="61.900000000000006" fill="rgba(0,0,0,0.08)"/><rect x="43.9" y="20" width="1.2" height="61.900000000000006" fill="rgba(0,0,0,0.13)"/><rect x="65.8" y="20" width="1.2" height="61.900000000000006" fill="rgba(0,0,0,0.08)"/><rect x="87.8" y="20" width="1.2" height="61.900000000000006" fill="rgba(0,0,0,0.13)"/><rect x="109.7" y="20" width="1.2" height="61.900000000000006" fill="rgba(0,0,0,0.08)"/><rect x="131.6" y="20" width="1.2" height="61.900000000000006" fill="rgba(0,0,0,0.13)"/><rect x="153.6" y="20" width="1.2" height="61.900000000000006" fill="rgba(0,0,0,0.08)"/><rect x="0" y="19" width="175.5" height="1" fill="rgba(0,0,0,0.10)"/><path transform="translate(2,24)" d="M0.0,27.1 L1.0,27.1 L2.0,27.1 L3.0,27.1 L4.0,27.1 L5.0,27.1 L6.0,27.1 L7.0,5.2 L8.0,7.5 L9.0,14.0 L10.0,18.5 L11.0,21.5 L12.0,23.6 L13.0,25.0 L14.0,25.9 L15.0,26.6 L16.0,6.6 L17.0,8.8 L18.0,14.9 L19.0,19.1 L20.0,21.9 L21.0,2.1 L22.0,4.7 L23.0,12.1 L24.0,17.2 L25.0,20.6 L26.0,23.0 L27.0,24.6 L28.0,6.7 L29.0,8.9 L30.0,15.0 L31.0,19.1 L32.0,21.9 L33.0,23.9 L34.0,25.2 L35.0,26.1 L36.0,26.7 L37.0,0.1 L38.0,3.0 L39.0,10.9 L40.0,16.4 L41.0,20.1 L42.0,22.6 L43.0,24.3 L44.0,7.4 L45.0,9.5 L46.0,15.4 L47.0,19.4 L48.0,22.1 L49.0,24.0 L50.0,25.2 L51.0,26.1 L52.0,26.7 L53.0,27.1 L54.0,27.1 L55.0,27.1 L56.0,9.9 L57.0,11.7 L58.0,16.9 L59.0,20.4 L60.0,22.8 L61.0,24.5 L62.0,25.6 L63.0,26.3 L64.0,26.9 L65.0,27.1 L66.0,27.1 L67.0,27.1 L68.0,5.1 L69.0,7.4 L70.0,14.0 L71.0,18.4 L72.0,21.5 L73.0,23.5 L74.0,24.9 L75.0,25.9 L76.0,26.6 L77.0,27.0 L78.0,27.1 L79.0,27.1 L80.0,8.7 L81.0,10.7 L82.0,16.2 L83.0,19.9 L84.0,22.5 L85.0,5.6 L86.0,7.9 L87.0,14.3 L88.0,18.6 L89.0,3.6 L90.0,6.1 L91.0,13.1 L92.0,17.8 L93.0,21.0 L94.0,23.3 L95.0,24.8 L96.0,25.8 L97.0,26.5 L98.0,10.3 L99.0,12.1 L100.0,17.2 L101.0,20.6 L102.0,23.0 L103.0,24.6 L104.0,0.5 L105.0,3.3 L106.0,11.2 L107.0,16.5 L108.0,20.2 L109.0,22.7 L110.0,24.3 L111.0,1.7 L112.0,4.4 L113.0,11.9 L114.0,17.0 L115.0,20.5 L116.0,22.9 L117.0,24.5 L118.0,7.9 L119.0,10.0 L120.0,15.7 L121.0,19.6 L122.0,22.3 L123.0,24.1 L124.0,25.3 L125.0,26.2 L126.0,26.7 L127.0,27.1 L128.0,27.1 L129.0,27.1 L130.0,0.5 L131.0,3.3 L132.0,11.2 L133.0,16.5 L134.0,20.2 L135.0,22.7 L136.0,24.4 L137.0,7.0 L138.0,9.1 L139.0,15.1 L140.0,19.2 L141.0,22.0 L142.0,23.9 L143.0,25.2 L144.0,26.1 L145.0,26.7 L146.0,27.1 L147.0,27.1 L148.0,27.1 L149.0,7.9 L150.0,10.0 L151.0,15.7 L152.0,19.6 L153.0,22.3 L154.0,10.2 L155.0,12.0 L156.0,17.1 L157.0,20.6 L158.0,22.9 L159.0,24.5 L160.0,25.6 L161.0,26.4 L162.0,26.9 L163.0,27.1 L164.0,27.1 L165.0,27.1 L166.0,27.1 L167.0,27.1 L168.0,27.1 L169.0,27.1 L170.0,7.8 L171.0,9.9 L171.0,46.0 L170.0,48.1 L169.0,28.8 L168.0,28.8 L167.0,28.8 L166.0,28.8 L165.0,28.8 L164.0,28.8 L163.0,28.8 L162.0,29.0 L161.0,29.5 L160.0,30.3 L159.0,31.4 L158.0,33.0 L157.0,35.3 L156.0,38.8 L155.0,43.9 L154.0,45.7 L153.0,33.6 L152.0,36.3 L151.0,40.2 L150.0,45.9 L149.0,48.0 L148.0,28.8 L147.0,28.8 L146.0,28.8 L145.0,29.2 L144.0,29.8 L143.0,30.7 L142.0,32.0 L141.0,33.9 L140.0,36.7 L139.0,40.8 L138.0,46.8 L137.0,48.9 L136.0,31.5 L135.0,33.2 L134.0,35.7 L133.0,39.4 L132.0,44.7 L131.0,52.6 L130.0,55.4 L129.0,28.8 L128.0,28.8 L127.0,28.8 L126.0,29.2 L125.0,29.7 L124.0,30.6 L123.0,31.8 L122.0,33.6 L121.0,36.3 L120.0,40.2 L119.0,45.9 L118.0,48.0 L117.0,31.4 L116.0,33.0 L115.0,35.4 L114.0,38.9 L113.0,44.0 L112.0,51.5 L111.0,54.2 L110.0,31.6 L109.0,33.2 L108.0,35.7 L107.0,39.4 L106.0,44.7 L105.0,52.6 L104.0,55.4 L103.0,31.3 L102.0,32.9 L101.0,35.3 L100.0,38.7 L99.0,43.8 L98.0,45.6 L97.0,29.4 L96.0,30.1 L95.0,31.1 L94.0,32.6 L93.0,34.9 L92.0,38.1 L91.0,42.8 L90.0,49.8 L89.0,52.3 L88.0,37.3 L87.0,41.6 L86.0,48.0 L85.0,50.3 L84.0,33.4 L83.0,36.0 L82.0,39.7 L81.0,45.2 L80.0,47.2 L79.0,28.8 L78.0,28.8 L77.0,28.9 L76.0,29.3 L75.0,30.0 L74.0,31.0 L73.0,32.4 L72.0,34.4 L71.0,37.5 L70.0,41.9 L69.0,48.5 L68.0,50.8 L67.0,28.8 L66.0,28.8 L65.0,28.8 L64.0,29.0 L63.0,29.6 L62.0,30.3 L61.0,31.4 L60.0,33.1 L59.0,35.5 L58.0,39.0 L57.0,44.2 L56.0,46.0 L55.0,28.8 L54.0,28.8 L53.0,28.8 L52.0,29.2 L51.0,29.8 L50.0,30.7 L49.0,31.9 L48.0,33.8 L47.0,36.5 L46.0,40.5 L45.0,46.4 L44.0,48.5 L43.0,31.6 L42.0,33.3 L41.0,35.8 L40.0,39.5 L39.0,45.0 L38.0,52.9 L37.0,55.8 L36.0,29.2 L35.0,29.8 L34.0,30.7 L33.0,32.0 L32.0,34.0 L31.0,36.8 L30.0,40.9 L29.0,47.0 L28.0,49.2 L27.0,31.3 L26.0,32.9 L25.0,35.3 L24.0,38.7 L23.0,43.8 L22.0,51.2 L21.0,53.8 L20.0,34.0 L19.0,36.8 L18.0,41.0 L17.0,47.1 L16.0,49.3 L15.0,29.3 L14.0,30.0 L13.0,30.9 L12.0,32.3 L11.0,34.4 L10.0,37.4 L9.0,41.9 L8.0,48.4 L7.0,50.7 L6.0,28.8 L5.0,28.8 L4.0,28.8 L3.0,28.8 L2.0,28.8 L1.0,28.8 L0.0,28.8Z" fill="#10243c" opacity="0.85"/><path d="M10 10L26 21L10 32z" fill="#235085" opacity="0.9"/><path d="M164 4v12q0 5 4.5 5t4.5-5V4M168 4v10" stroke="#1a2a3a" stroke-width="2" fill="none"/></svg><div class="t" style="left:35px;top:1px;font-size:15.5px;line-height:19px;color:#f4f8ff">Live-Punch- Jam</div></div><div style="left:683.5px;top:479.20000000000005px;width:175.5px;height:81.9px;background:#262626"></div><div style="left:693.0px;top:511.70000000000005px;width:15.5px;height:15.5px;background:#474747"></div><div style="left:683.5px;top:562.6px;width:175.5px;height:81.9px;background:#3a82d7;overflow:hidden"><svg width="175.5" height="81.9" style="position:absolute;left:0;top:0"><rect x="21.9" y="20" width="1.2" height="61.900000000000006" fill="rgba(0,0,0,0.08)"/><rect x="43.9" y="20" width="1.2" height="61.900000000000006" fill="rgba(0,0,0,0.13)"/><rect x="65.8" y="20" width="1.2" height="61.900000000000006" fill="rgba(0,0,0,0.08)"/><rect x="87.8" y="20" width="1.2" height="61.900000000000006" fill="rgba(0,0,0,0.13)"/><rect x="109.7" y="20" width="1.2" height="61.900000000000006" fill="rgba(0,0,0,0.08)"/><rect x="131.6" y="20" width="1.2" height="61.900000000000006" fill="rgba(0,0,0,0.13)"/><rect x="153.6" y="20" width="1.2" height="61.900000000000006" fill="rgba(0,0,0,0.08)"/><rect x="0" y="19" width="175.5" height="1" fill="rgba(0,0,0,0.10)"/><path transform="translate(2,24)" d="M0.0,6.4 L1.0,6.4 L2.0,12.9 L3.0,17.7 L4.0,21.0 L5.0,23.2 L6.0,24.7 L7.0,25.7 L8.0,26.5 L9.0,26.9 L10.0,27.1 L11.0,27.1 L12.0,27.1 L13.0,27.1 L14.0,27.1 L15.0,27.1 L16.0,0.7 L17.0,0.7 L18.0,8.9 L19.0,15.0 L20.0,8.6 L21.0,8.6 L22.0,14.4 L23.0,18.7 L24.0,21.7 L25.0,23.7 L26.0,25.0 L27.0,26.0 L28.0,26.6 L29.0,27.0 L30.0,27.1 L31.0,27.1 L32.0,3.1 L33.0,3.1 L34.0,10.6 L35.0,16.1 L36.0,19.9 L37.0,4.6 L38.0,4.6 L39.0,11.7 L40.0,16.9 L41.0,20.4 L42.0,0.2 L43.0,0.2 L44.0,8.5 L45.0,14.7 L46.0,10.6 L47.0,10.6 L48.0,15.8 L49.0,19.7 L50.0,22.3 L51.0,24.1 L52.0,0.8 L53.0,0.8 L54.0,8.9 L55.0,15.0 L56.0,7.8 L57.0,7.8 L58.0,13.9 L59.0,18.4 L60.0,21.4 L61.0,9.1 L62.0,9.1 L63.0,14.8 L64.0,19.0 L65.0,21.8 L66.0,23.8 L67.0,25.1 L68.0,6.1 L69.0,6.1 L70.0,12.6 L71.0,17.5 L72.0,20.9 L73.0,23.1 L74.0,0.5 L75.0,0.5 L76.0,8.8 L77.0,14.9 L78.0,19.1 L79.0,7.7 L80.0,7.7 L81.0,13.8 L82.0,18.3 L83.0,21.4 L84.0,23.5 L85.0,24.9 L86.0,25.9 L87.0,26.5 L88.0,27.0 L89.0,27.1 L90.0,27.1 L91.0,27.1 L92.0,27.1 L93.0,27.1 L94.0,27.1 L95.0,4.5 L96.0,4.5 L97.0,11.5 L98.0,16.8 L99.0,20.3 L100.0,22.8 L101.0,10.0 L102.0,10.0 L103.0,15.4 L104.0,19.4 L105.0,22.1 L106.0,24.0 L107.0,4.5 L108.0,4.5 L109.0,11.5 L110.0,16.8 L111.0,20.3 L112.0,22.8 L113.0,24.4 L114.0,25.5 L115.0,26.3 L116.0,6.7 L117.0,6.7 L118.0,13.1 L119.0,17.8 L120.0,21.1 L121.0,23.3 L122.0,24.8 L123.0,2.2 L124.0,2.2 L125.0,10.0 L126.0,15.7 L127.0,7.2 L128.0,7.2 L129.0,13.5 L130.0,18.1 L131.0,21.2 L132.0,7.9 L133.0,7.9 L134.0,13.9 L135.0,18.4 L136.0,21.5 L137.0,23.5 L138.0,0.4 L139.0,0.4 L140.0,8.7 L141.0,14.9 L142.0,19.0 L143.0,21.9 L144.0,23.8 L145.0,10.4 L146.0,10.4 L147.0,15.7 L148.0,19.6 L149.0,22.3 L150.0,24.1 L151.0,25.3 L152.0,26.2 L153.0,26.7 L154.0,27.1 L155.0,27.1 L156.0,27.1 L157.0,3.8 L158.0,3.8 L159.0,11.0 L160.0,16.4 L161.0,11.2 L162.0,11.2 L163.0,16.2 L164.0,20.0 L165.0,22.5 L166.0,24.2 L167.0,6.0 L168.0,6.0 L169.0,12.6 L170.0,17.5 L171.0,20.8 L171.0,35.1 L170.0,38.4 L169.0,43.3 L168.0,49.9 L167.0,49.9 L166.0,31.7 L165.0,33.4 L164.0,35.9 L163.0,39.7 L162.0,44.7 L161.0,44.7 L160.0,39.5 L159.0,44.9 L158.0,52.1 L157.0,52.1 L156.0,28.8 L155.0,28.8 L154.0,28.8 L153.0,29.2 L152.0,29.7 L151.0,30.6 L150.0,31.8 L149.0,33.6 L148.0,36.3 L147.0,40.2 L146.0,45.5 L145.0,45.5 L144.0,32.1 L143.0,34.0 L142.0,36.9 L141.0,41.0 L140.0,47.2 L139.0,55.5 L138.0,55.5 L137.0,32.4 L136.0,34.4 L135.0,37.5 L134.0,42.0 L133.0,48.0 L132.0,48.0 L131.0,34.7 L130.0,37.8 L129.0,42.4 L128.0,48.7 L127.0,48.7 L126.0,40.2 L125.0,45.9 L124.0,53.7 L123.0,53.7 L122.0,31.1 L121.0,32.6 L120.0,34.8 L119.0,38.1 L118.0,42.8 L117.0,49.2 L116.0,49.2 L115.0,29.6 L114.0,30.4 L113.0,31.5 L112.0,33.1 L111.0,35.6 L110.0,39.1 L109.0,44.4 L108.0,51.4 L107.0,51.4 L106.0,31.9 L105.0,33.8 L104.0,36.5 L103.0,40.5 L102.0,45.9 L101.0,45.9 L100.0,33.1 L99.0,35.6 L98.0,39.1 L97.0,44.4 L96.0,51.4 L95.0,51.4 L94.0,28.8 L93.0,28.8 L92.0,28.8 L91.0,28.8 L90.0,28.8 L89.0,28.8 L88.0,28.9 L87.0,29.4 L86.0,30.0 L85.0,31.0 L84.0,32.4 L83.0,34.5 L82.0,37.6 L81.0,42.1 L80.0,48.2 L79.0,48.2 L78.0,36.8 L77.0,41.0 L76.0,47.1 L75.0,55.4 L74.0,55.4 L73.0,32.8 L72.0,35.0 L71.0,38.4 L70.0,43.3 L69.0,49.8 L68.0,49.8 L67.0,30.8 L66.0,32.1 L65.0,34.1 L64.0,36.9 L63.0,41.1 L62.0,46.8 L61.0,46.8 L60.0,34.5 L59.0,37.5 L58.0,42.0 L57.0,48.1 L56.0,48.1 L55.0,40.9 L54.0,47.0 L53.0,55.1 L52.0,55.1 L51.0,31.8 L50.0,33.6 L49.0,36.2 L48.0,40.1 L47.0,45.3 L46.0,45.3 L45.0,41.2 L44.0,47.4 L43.0,55.7 L42.0,55.7 L41.0,35.5 L40.0,39.0 L39.0,44.2 L38.0,51.3 L37.0,51.3 L36.0,36.0 L35.0,39.8 L34.0,45.3 L33.0,52.8 L32.0,52.8 L31.0,28.8 L30.0,28.8 L29.0,28.9 L28.0,29.3 L27.0,29.9 L26.0,30.9 L25.0,32.2 L24.0,34.2 L23.0,37.2 L22.0,41.5 L21.0,47.3 L20.0,47.3 L19.0,40.9 L18.0,47.0 L17.0,55.2 L16.0,55.2 L15.0,28.8 L14.0,28.8 L13.0,28.8 L12.0,28.8 L11.0,28.8 L10.0,28.8 L9.0,29.0 L8.0,29.4 L7.0,30.2 L6.0,31.2 L5.0,32.7 L4.0,34.9 L3.0,38.2 L2.0,43.0 L1.0,49.5 L0.0,49.5Z" fill="#10243c" opacity="0.85"/><path d="M10 10L26 21L10 32z" fill="#235085" opacity="0.9"/><path d="M164 4v12q0 5 4.5 5t4.5-5V4M168 4v10" stroke="#1a2a3a" stroke-width="2" fill="none"/></svg><div class="t" style="left:35px;top:1px;font-size:15.5px;line-height:19px;color:#f4f8ff">Live-SmokeS - C</div></div><div style="left:683.5px;top:646.0px;width:175.5px;height:81.9px;background:#5aa2f0;overflow:hidden"><svg width="175.5" height="81.9" style="position:absolute;left:0;top:0"><rect x="21.9" y="20" width="1.2" height="61.900000000000006" fill="rgba(0,0,0,0.08)"/><rect x="43.9" y="20" width="1.2" height="61.900000000000006" fill="rgba(0,0,0,0.13)"/><rect x="65.8" y="20" width="1.2" height="61.900000000000006" fill="rgba(0,0,0,0.08)"/><rect x="87.8" y="20" width="1.2" height="61.900000000000006" fill="rgba(0,0,0,0.13)"/><rect x="109.7" y="20" width="1.2" height="61.900000000000006" fill="rgba(0,0,0,0.08)"/><rect x="131.6" y="20" width="1.2" height="61.900000000000006" fill="rgba(0,0,0,0.13)"/><rect x="153.6" y="20" width="1.2" height="61.900000000000006" fill="rgba(0,0,0,0.08)"/><rect x="0" y="19" width="175.5" height="1" fill="rgba(0,0,0,0.10)"/><path transform="translate(2,24)" d="M0.0,27.1 L1.0,4.8 L2.0,9.2 L3.0,15.2 L4.0,19.2 L5.0,22.0 L6.0,23.9 L7.0,25.2 L8.0,26.1 L9.0,26.7 L10.0,27.1 L11.0,27.1 L12.0,27.1 L13.0,3.8 L14.0,8.3 L15.0,14.6 L16.0,18.8 L17.0,21.7 L18.0,23.7 L19.0,25.1 L20.0,26.0 L21.0,26.6 L22.0,9.2 L23.0,12.7 L24.0,17.6 L25.0,20.9 L26.0,23.2 L27.0,24.7 L28.0,25.7 L29.0,26.4 L30.0,26.9 L31.0,27.1 L32.0,27.1 L33.0,27.1 L34.0,27.1 L35.0,27.1 L36.0,27.1 L37.0,27.1 L38.0,2.9 L39.0,7.6 L40.0,14.1 L41.0,18.5 L42.0,21.5 L43.0,9.1 L44.0,12.6 L45.0,17.5 L46.0,20.9 L47.0,23.1 L48.0,24.7 L49.0,25.7 L50.0,26.4 L51.0,26.9 L52.0,7.8 L53.0,11.6 L54.0,16.8 L55.0,20.4 L56.0,22.8 L57.0,3.3 L58.0,8.0 L59.0,14.3 L60.0,18.7 L61.0,21.6 L62.0,23.7 L63.0,25.0 L64.0,26.0 L65.0,26.6 L66.0,27.0 L67.0,27.1 L68.0,27.1 L69.0,27.1 L70.0,27.1 L71.0,27.1 L72.0,27.1 L73.0,10.5 L74.0,13.8 L75.0,18.3 L76.0,21.4 L77.0,23.5 L78.0,24.9 L79.0,25.9 L80.0,26.5 L81.0,27.0 L82.0,27.1 L83.0,27.1 L84.0,27.1 L85.0,3.5 L86.0,8.1 L87.0,14.4 L88.0,18.8 L89.0,21.7 L90.0,23.7 L91.0,25.1 L92.0,26.0 L93.0,26.6 L94.0,5.7 L95.0,9.8 L96.0,15.6 L97.0,19.6 L98.0,22.2 L99.0,24.1 L100.0,3.0 L101.0,7.7 L102.0,14.2 L103.0,18.6 L104.0,21.6 L105.0,8.2 L106.0,11.9 L107.0,17.0 L108.0,20.5 L109.0,22.9 L110.0,0.4 L111.0,5.5 L112.0,12.7 L113.0,17.6 L114.0,20.9 L115.0,23.1 L116.0,24.7 L117.0,25.7 L118.0,26.4 L119.0,5.2 L120.0,9.4 L121.0,15.3 L122.0,19.4 L123.0,7.2 L124.0,11.1 L125.0,16.5 L126.0,20.1 L127.0,22.6 L128.0,24.3 L129.0,1.3 L130.0,6.3 L131.0,13.2 L132.0,17.9 L133.0,21.1 L134.0,6.0 L135.0,10.2 L136.0,15.8 L137.0,19.7 L138.0,22.3 L139.0,4.6 L140.0,8.9 L141.0,15.0 L142.0,19.1 L143.0,22.0 L144.0,23.9 L145.0,25.2 L146.0,26.1 L147.0,26.7 L148.0,27.1 L149.0,27.1 L150.0,27.1 L151.0,4.9 L152.0,9.2 L153.0,15.2 L154.0,19.3 L155.0,4.2 L156.0,8.6 L157.0,14.8 L158.0,19.0 L159.0,21.9 L160.0,9.3 L161.0,12.8 L162.0,17.7 L163.0,20.9 L164.0,23.2 L165.0,24.7 L166.0,25.7 L167.0,3.1 L168.0,7.8 L169.0,14.2 L170.0,18.6 L171.0,21.6 L171.0,34.3 L170.0,37.3 L169.0,41.7 L168.0,48.1 L167.0,52.8 L166.0,30.2 L165.0,31.2 L164.0,32.7 L163.0,35.0 L162.0,38.2 L161.0,43.1 L160.0,46.6 L159.0,34.0 L158.0,36.9 L157.0,41.1 L156.0,47.3 L155.0,51.7 L154.0,36.6 L153.0,40.7 L152.0,46.7 L151.0,51.0 L150.0,28.8 L149.0,28.8 L148.0,28.8 L147.0,29.2 L146.0,29.8 L145.0,30.7 L144.0,32.0 L143.0,33.9 L142.0,36.8 L141.0,40.9 L140.0,47.0 L139.0,51.3 L138.0,33.6 L137.0,36.2 L136.0,40.1 L135.0,45.7 L134.0,49.9 L133.0,34.8 L132.0,38.0 L131.0,42.7 L130.0,49.6 L129.0,54.6 L128.0,31.6 L127.0,33.3 L126.0,35.8 L125.0,39.4 L124.0,44.8 L123.0,48.7 L122.0,36.5 L121.0,40.6 L120.0,46.5 L119.0,50.7 L118.0,29.5 L117.0,30.2 L116.0,31.2 L115.0,32.8 L114.0,35.0 L113.0,38.3 L112.0,43.2 L111.0,50.4 L110.0,55.5 L109.0,33.0 L108.0,35.4 L107.0,38.9 L106.0,44.0 L105.0,47.7 L104.0,34.3 L103.0,37.3 L102.0,41.7 L101.0,48.2 L100.0,52.9 L99.0,31.8 L98.0,33.7 L97.0,36.3 L96.0,40.3 L95.0,46.1 L94.0,50.2 L93.0,29.3 L92.0,29.9 L91.0,30.8 L90.0,32.2 L89.0,34.2 L88.0,37.1 L87.0,41.5 L86.0,47.8 L85.0,52.4 L84.0,28.8 L83.0,28.8 L82.0,28.8 L81.0,28.9 L80.0,29.4 L79.0,30.0 L78.0,31.0 L77.0,32.4 L76.0,34.5 L75.0,37.6 L74.0,42.1 L73.0,45.4 L72.0,28.8 L71.0,28.8 L70.0,28.8 L69.0,28.8 L68.0,28.8 L67.0,28.8 L66.0,28.9 L65.0,29.3 L64.0,29.9 L63.0,30.9 L62.0,32.2 L61.0,34.3 L60.0,37.2 L59.0,41.6 L58.0,47.9 L57.0,52.6 L56.0,33.1 L55.0,35.5 L54.0,39.1 L53.0,44.3 L52.0,48.1 L51.0,29.0 L50.0,29.5 L49.0,30.2 L48.0,31.2 L47.0,32.8 L46.0,35.0 L45.0,38.4 L44.0,43.3 L43.0,46.8 L42.0,34.4 L41.0,37.4 L40.0,41.8 L39.0,48.3 L38.0,53.0 L37.0,28.8 L36.0,28.8 L35.0,28.8 L34.0,28.8 L33.0,28.8 L32.0,28.8 L31.0,28.8 L30.0,29.0 L29.0,29.5 L28.0,30.2 L27.0,31.2 L26.0,32.7 L25.0,35.0 L24.0,38.3 L23.0,43.2 L22.0,46.7 L21.0,29.3 L20.0,29.9 L19.0,30.8 L18.0,32.2 L17.0,34.2 L16.0,37.1 L15.0,41.3 L14.0,47.6 L13.0,52.1 L12.0,28.8 L11.0,28.8 L10.0,28.8 L9.0,29.2 L8.0,29.8 L7.0,30.7 L6.0,32.0 L5.0,33.9 L4.0,36.7 L3.0,40.7 L2.0,46.7 L1.0,51.1 L0.0,28.8Z" fill="#192d43" opacity="0.85"/><path d="M10 9L30 20.5L10 32z" fill="#fff" stroke="#111" stroke-width="2"/><rect x="108.8" y="0" width="2.5" height="81.9" fill="#fff"/></svg><div class="t" style="left:35px;top:1px;font-size:15.5px;line-height:19px;color:#f4f8ff">Live-Punch- Jam9</div></div><div style="left:683.5px;top:729.4000000000001px;width:175.5px;height:81.9px;background:#262626"></div><div style="left:693.0px;top:761.9000000000001px;width:15.5px;height:15.5px;background:#474747"></div><div style="left:683.5px;top:812.8000000000001px;width:175.5px;height:54.19999999999993px;background:#262626"></div><div style="left:693.0px;top:845.3000000000001px;width:15.5px;height:15.5px;background:#474747"></div><div style="left:860.5px;top:229.0px;width:175.5px;height:81.9px;background:#262626"></div><div style="left:870.0px;top:261.5px;width:15.5px;height:15.5px;background:#474747"></div><div style="left:860.5px;top:312.4px;width:175.5px;height:81.9px;background:#4e9b2e;overflow:hidden"><svg width="175.5" height="81.9" style="position:absolute;left:0;top:0"><rect x="21.9" y="20" width="1.2" height="61.900000000000006" fill="rgba(0,0,0,0.08)"/><rect x="43.9" y="20" width="1.2" height="61.900000000000006" fill="rgba(0,0,0,0.13)"/><rect x="65.8" y="20" width="1.2" height="61.900000000000006" fill="rgba(0,0,0,0.08)"/><rect x="87.8" y="20" width="1.2" height="61.900000000000006" fill="rgba(0,0,0,0.13)"/><rect x="109.7" y="20" width="1.2" height="61.900000000000006" fill="rgba(0,0,0,0.08)"/><rect x="131.6" y="20" width="1.2" height="61.900000000000006" fill="rgba(0,0,0,0.13)"/><rect x="153.6" y="20" width="1.2" height="61.900000000000006" fill="rgba(0,0,0,0.08)"/><rect x="0" y="19" width="175.5" height="1" fill="rgba(0,0,0,0.10)"/><g fill="#152b0c"><rect x="12.0" y="46" width="4" height="3"/><rect x="33.7" y="46" width="4" height="3"/><rect x="55.4" y="46" width="4" height="3"/><rect x="77.1" y="46" width="4" height="3"/><rect x="98.8" y="46" width="4" height="3"/><rect x="120.5" y="46" width="4" height="3"/><rect x="142.2" y="46" width="4" height="3"/><rect x="163.9" y="46" width="4" height="3"/></g><path d="M10 10L26 21L10 32z" fill="#30601c" opacity="0.9"/></svg><div class="t" style="left:35px;top:1px;font-size:15.5px;line-height:19px;color:#f4f8ff">707 TechnoHi-01</div></div><div style="left:860.5px;top:395.8px;width:175.5px;height:81.9px;background:#7ee05c;overflow:hidden"><svg width="175.5" height="81.9" style="position:absolute;left:0;top:0"><rect x="21.9" y="20" width="1.2" height="61.900000000000006" fill="rgba(0,0,0,0.08)"/><rect x="43.9" y="20" width="1.2" height="61.900000000000006" fill="rgba(0,0,0,0.13)"/><rect x="65.8" y="20" width="1.2" height="61.900000000000006" fill="rgba(0,0,0,0.08)"/><rect x="87.8" y="20" width="1.2" height="61.900000000000006" fill="rgba(0,0,0,0.13)"/><rect x="109.7" y="20" width="1.2" height="61.900000000000006" fill="rgba(0,0,0,0.08)"/><rect x="131.6" y="20" width="1.2" height="61.900000000000006" fill="rgba(0,0,0,0.13)"/><rect x="153.6" y="20" width="1.2" height="61.900000000000006" fill="rgba(0,0,0,0.08)"/><rect x="0" y="19" width="175.5" height="1" fill="rgba(0,0,0,0.10)"/><g fill="#233e19"><rect x="6.0" y="25" width="4" height="3"/><rect x="27.7" y="25" width="4" height="3"/><rect x="49.4" y="25" width="4" height="3"/><rect x="71.1" y="25" width="4" height="3"/><rect x="92.8" y="25" width="4" height="3"/><rect x="114.5" y="25" width="4" height="3"/><rect x="136.2" y="25" width="4" height="3"/><rect x="157.9" y="25" width="4" height="3"/><rect x="14" y="63" width="3.5" height="3"/><rect x="42" y="66" width="3.5" height="3"/><rect x="58" y="66" width="3.5" height="3"/><rect x="64" y="63" width="3.5" height="3"/><rect x="72" y="66" width="3.5" height="3"/><rect x="92" y="66" width="3.5" height="3"/><rect x="110" y="63" width="3.5" height="3"/><rect x="128" y="66" width="3.5" height="3"/><rect x="136" y="66" width="3.5" height="3"/><rect x="142" y="63" width="3.5" height="3"/><rect x="150" y="66" width="3.5" height="3"/><rect x="160" y="66" width="3.5" height="3"/></g><path d="M10 9L30 20.5L10 32z" fill="#fff" stroke="#111" stroke-width="2"/><rect x="108.8" y="0" width="2.5" height="81.9" fill="#fff"/></svg><div class="t" style="left:35px;top:1px;font-size:15.5px;line-height:19px;color:#1f3a14">707 TechnoHi-02</div></div><div style="left:860.5px;top:479.20000000000005px;width:175.5px;height:81.9px;background:#4e9b2e;overflow:hidden"><svg width="175.5" height="81.9" style="position:absolute;left:0;top:0"><rect x="21.9" y="20" width="1.2" height="61.900000000000006" fill="rgba(0,0,0,0.08)"/><rect x="43.9" y="20" width="1.2" height="61.900000000000006" fill="rgba(0,0,0,0.13)"/><rect x="65.8" y="20" width="1.2" height="61.900000000000006" fill="rgba(0,0,0,0.08)"/><rect x="87.8" y="20" width="1.2" height="61.900000000000006" fill="rgba(0,0,0,0.13)"/><rect x="109.7" y="20" width="1.2" height="61.900000000000006" fill="rgba(0,0,0,0.08)"/><rect x="131.6" y="20" width="1.2" height="61.900000000000006" fill="rgba(0,0,0,0.13)"/><rect x="153.6" y="20" width="1.2" height="61.900000000000006" fill="rgba(0,0,0,0.08)"/><rect x="0" y="19" width="175.5" height="1" fill="rgba(0,0,0,0.10)"/><g fill="#152b0c"><rect x="8.0" y="56" width="2" height="4"/><rect x="23.5" y="56" width="2" height="4"/><rect x="39.0" y="56" width="2" height="4"/><rect x="54.5" y="56" width="2" height="4"/><rect x="70.0" y="56" width="2" height="4"/><rect x="85.5" y="56" width="2" height="4"/><rect x="101.0" y="56" width="2" height="4"/><rect x="116.5" y="56" width="2" height="4"/><rect x="132.0" y="56" width="2" height="4"/><rect x="147.5" y="56" width="2" height="4"/><rect x="163.0" y="56" width="2" height="4"/><rect x="150" y="44" width="3" height="3"/></g><path d="M10 10L26 21L10 32z" fill="#30601c" opacity="0.9"/></svg><div class="t" style="left:35px;top:1px;font-size:15.5px;line-height:19px;color:#f4f8ff">707 TechnoHi-03</div></div><div style="left:860.5px;top:562.6px;width:175.5px;height:81.9px;background:#4e9b2e;overflow:hidden"><svg width="175.5" height="81.9" style="position:absolute;left:0;top:0"><rect x="21.9" y="20" width="1.2" height="61.900000000000006" fill="rgba(0,0,0,0.08)"/><rect x="43.9" y="20" width="1.2" height="61.900000000000006" fill="rgba(0,0,0,0.13)"/><rect x="65.8" y="20" width="1.2" height="61.900000000000006" fill="rgba(0,0,0,0.08)"/><rect x="87.8" y="20" width="1.2" height="61.900000000000006" fill="rgba(0,0,0,0.13)"/><rect x="109.7" y="20" width="1.2" height="61.900000000000006" fill="rgba(0,0,0,0.08)"/><rect x="131.6" y="20" width="1.2" height="61.900000000000006" fill="rgba(0,0,0,0.13)"/><rect x="153.6" y="20" width="1.2" height="61.900000000000006" fill="rgba(0,0,0,0.08)"/><rect x="0" y="19" width="175.5" height="1" fill="rgba(0,0,0,0.10)"/><g fill="#152b0c"><rect x="4.0" y="43" width="2" height="3"/><rect x="10.0" y="60" width="1.5" height="3"/><rect x="18.6" y="43" width="2" height="3"/><rect x="17.3" y="60" width="1.5" height="3"/><rect x="33.2" y="43" width="2" height="3"/><rect x="24.6" y="60" width="1.5" height="3"/><rect x="47.8" y="43" width="2" height="3"/><rect x="31.9" y="60" width="1.5" height="3"/><rect x="62.4" y="43" width="2" height="3"/><rect x="39.2" y="60" width="1.5" height="3"/><rect x="77.0" y="43" width="2" height="3"/><rect x="46.5" y="60" width="1.5" height="3"/><rect x="91.6" y="43" width="2" height="3"/><rect x="53.8" y="60" width="1.5" height="3"/><rect x="106.2" y="43" width="2" height="3"/><rect x="61.1" y="60" width="1.5" height="3"/><rect x="120.8" y="43" width="2" height="3"/><rect x="68.4" y="60" width="1.5" height="3"/><rect x="135.4" y="43" width="2" height="3"/><rect x="75.7" y="60" width="1.5" height="3"/><rect x="150.0" y="43" width="2" height="3"/><rect x="83.0" y="60" width="1.5" height="3"/><rect x="164.6" y="43" width="2" height="3"/><rect x="90.3" y="60" width="1.5" height="3"/><rect x="97.6" y="60" width="1.5" height="3"/><rect x="104.9" y="60" width="1.5" height="3"/><rect x="112.2" y="60" width="1.5" height="3"/><rect x="119.5" y="60" width="1.5" height="3"/><rect x="126.8" y="60" width="1.5" height="3"/><rect x="134.1" y="60" width="1.5" height="3"/><rect x="141.4" y="60" width="1.5" height="3"/><rect x="148.7" y="60" width="1.5" height="3"/><rect x="156.0" y="60" width="1.5" height="3"/><rect x="163.3" y="60" width="1.5" height="3"/><rect x="170.6" y="60" width="1.5" height="3"/></g><path d="M10 10L26 21L10 32z" fill="#30601c" opacity="0.9"/></svg><div class="t" style="left:35px;top:1px;font-size:15.5px;line-height:19px;color:#f4f8ff">707 TechnoHi-04</div></div><div style="left:860.5px;top:646.0px;width:175.5px;height:81.9px;background:#262626"></div><div style="left:870.0px;top:678.5px;width:15.5px;height:15.5px;background:#474747"></div><div style="left:860.5px;top:729.4000000000001px;width:175.5px;height:81.9px;background:#7ee05c;overflow:hidden"><svg width="175.5" height="81.9" style="position:absolute;left:0;top:0"><rect x="21.9" y="20" width="1.2" height="61.900000000000006" fill="rgba(0,0,0,0.08)"/><rect x="43.9" y="20" width="1.2" height="61.900000000000006" fill="rgba(0,0,0,0.13)"/><rect x="65.8" y="20" width="1.2" height="61.900000000000006" fill="rgba(0,0,0,0.08)"/><rect x="87.8" y="20" width="1.2" height="61.900000000000006" fill="rgba(0,0,0,0.13)"/><rect x="109.7" y="20" width="1.2" height="61.900000000000006" fill="rgba(0,0,0,0.08)"/><rect x="131.6" y="20" width="1.2" height="61.900000000000006" fill="rgba(0,0,0,0.13)"/><rect x="153.6" y="20" width="1.2" height="61.900000000000006" fill="rgba(0,0,0,0.08)"/><rect x="0" y="19" width="175.5" height="1" fill="rgba(0,0,0,0.10)"/><g fill="#233e19"><rect x="6.0" y="25" width="4" height="3"/><rect x="27.7" y="25" width="4" height="3"/><rect x="49.4" y="25" width="4" height="3"/><rect x="71.1" y="25" width="4" height="3"/><rect x="92.8" y="25" width="4" height="3"/><rect x="114.5" y="25" width="4" height="3"/><rect x="136.2" y="25" width="4" height="3"/><rect x="157.9" y="25" width="4" height="3"/><rect x="14" y="63" width="3.5" height="3"/><rect x="42" y="66" width="3.5" height="3"/><rect x="58" y="66" width="3.5" height="3"/><rect x="64" y="63" width="3.5" height="3"/><rect x="72" y="66" width="3.5" height="3"/><rect x="92" y="66" width="3.5" height="3"/><rect x="110" y="63" width="3.5" height="3"/><rect x="128" y="66" width="3.5" height="3"/><rect x="136" y="66" width="3.5" height="3"/><rect x="142" y="63" width="3.5" height="3"/><rect x="150" y="66" width="3.5" height="3"/><rect x="160" y="66" width="3.5" height="3"/></g><path d="M10 10L26 21L10 32z" fill="#4e8a39" opacity="0.9"/></svg><div class="t" style="left:35px;top:1px;font-size:15.5px;line-height:19px;color:#1f3a14">707 TechnoHi-02</div></div><div style="left:860.5px;top:812.8000000000001px;width:175.5px;height:54.19999999999993px;background:#4e9b2e;overflow:hidden"><svg width="175.5" height="54.19999999999993" style="position:absolute;left:0;top:0"><rect x="21.9" y="20" width="1.2" height="34.19999999999993" fill="rgba(0,0,0,0.08)"/><rect x="43.9" y="20" width="1.2" height="34.19999999999993" fill="rgba(0,0,0,0.13)"/><rect x="65.8" y="20" width="1.2" height="34.19999999999993" fill="rgba(0,0,0,0.08)"/><rect x="87.8" y="20" width="1.2" height="34.19999999999993" fill="rgba(0,0,0,0.13)"/><rect x="109.7" y="20" width="1.2" height="34.19999999999993" fill="rgba(0,0,0,0.08)"/><rect x="131.6" y="20" width="1.2" height="34.19999999999993" fill="rgba(0,0,0,0.13)"/><rect x="153.6" y="20" width="1.2" height="34.19999999999993" fill="rgba(0,0,0,0.08)"/><rect x="0" y="19" width="175.5" height="1" fill="rgba(0,0,0,0.10)"/><g fill="#152b0c"><rect x="8.0" y="56" width="2" height="4"/><rect x="23.5" y="56" width="2" height="4"/><rect x="39.0" y="56" width="2" height="4"/><rect x="54.5" y="56" width="2" height="4"/><rect x="70.0" y="56" width="2" height="4"/><rect x="85.5" y="56" width="2" height="4"/><rect x="101.0" y="56" width="2" height="4"/><rect x="116.5" y="56" width="2" height="4"/><rect x="132.0" y="56" width="2" height="4"/><rect x="147.5" y="56" width="2" height="4"/><rect x="163.0" y="56" width="2" height="4"/><rect x="150" y="44" width="3" height="3"/></g><path d="M10 10L26 21L10 32z" fill="#30601c" opacity="0.9"/></svg><div class="t" style="left:35px;top:1px;font-size:15.5px;line-height:19px;color:#f4f8ff">707 TechnoHi-03</div></div><div style="left:1037.5px;top:229.0px;width:175.5px;height:81.9px;background:#262626"></div><div style="left:1047.0px;top:261.5px;width:15.5px;height:15.5px;background:#474747"></div><div style="left:1037.5px;top:312.4px;width:175.5px;height:81.9px;background:#0d8b95;overflow:hidden"><svg width="175.5" height="81.9" style="position:absolute;left:0;top:0"><rect x="21.9" y="20" width="1.2" height="61.900000000000006" fill="rgba(0,0,0,0.08)"/><rect x="43.9" y="20" width="1.2" height="61.900000000000006" fill="rgba(0,0,0,0.13)"/><rect x="65.8" y="20" width="1.2" height="61.900000000000006" fill="rgba(0,0,0,0.08)"/><rect x="87.8" y="20" width="1.2" height="61.900000000000006" fill="rgba(0,0,0,0.13)"/><rect x="109.7" y="20" width="1.2" height="61.900000000000006" fill="rgba(0,0,0,0.08)"/><rect x="131.6" y="20" width="1.2" height="61.900000000000006" fill="rgba(0,0,0,0.13)"/><rect x="153.6" y="20" width="1.2" height="61.900000000000006" fill="rgba(0,0,0,0.08)"/><rect x="0" y="19" width="175.5" height="1" fill="rgba(0,0,0,0.10)"/><g fill="#032629" opacity="0.55"><rect x="33.0" y="26" width="1.2" height="5"/><rect x="36.5" y="26" width="1.2" height="5"/><rect x="40.0" y="26" width="1.2" height="5"/><rect x="43.5" y="26" width="1.2" height="5"/><rect x="3.0" y="67" width="1.2" height="5"/><rect x="6.5" y="67" width="1.2" height="5"/><rect x="10.0" y="67" width="1.2" height="5"/><rect x="13.5" y="67" width="1.2" height="5"/><rect x="17.0" y="67" width="1.2" height="5"/><rect x="60.0" y="67" width="1.3" height="6"/><rect x="63.2" y="67" width="1.3" height="4"/><rect x="66.4" y="67" width="1.3" height="4"/><rect x="69.6" y="67" width="1.3" height="4"/><rect x="72.8" y="67" width="1.3" height="4"/><rect x="76.0" y="67" width="1.3" height="6"/><rect x="79.2" y="67" width="1.3" height="4"/><rect x="82.4" y="67" width="1.3" height="4"/><rect x="85.6" y="67" width="1.3" height="4"/><rect x="88.8" y="67" width="1.3" height="4"/><rect x="92.0" y="67" width="1.3" height="6"/><rect x="95.2" y="67" width="1.3" height="4"/><rect x="98.4" y="67" width="1.3" height="4"/><rect x="101.6" y="67" width="1.3" height="4"/><rect x="104.8" y="67" width="1.3" height="4"/><rect x="108.0" y="67" width="1.3" height="6"/><rect x="111.2" y="67" width="1.3" height="4"/><rect x="114.4" y="67" width="1.3" height="4"/><rect x="117.6" y="67" width="1.3" height="4"/><rect x="120.8" y="67" width="1.3" height="4"/><rect x="124.0" y="67" width="1.3" height="6"/><rect x="127.2" y="67" width="1.3" height="4"/><rect x="130.4" y="67" width="1.3" height="4"/><rect x="133.6" y="67" width="1.3" height="4"/><rect x="136.8" y="67" width="1.3" height="4"/><rect x="140.0" y="67" width="1.3" height="6"/><rect x="143.2" y="67" width="1.3" height="4"/><rect x="146.4" y="67" width="1.3" height="4"/><rect x="149.6" y="67" width="1.3" height="4"/><rect x="152.8" y="67" width="1.3" height="4"/><rect x="156.0" y="67" width="1.3" height="6"/><rect x="159.2" y="67" width="1.3" height="4"/><rect x="162.4" y="67" width="1.3" height="4"/><rect x="165.6" y="67" width="1.3" height="4"/><rect x="168.8" y="67" width="1.3" height="4"/><rect x="172.0" y="67" width="1.3" height="6"/></g><path d="M10 10L26 21L10 32z" fill="#08565c" opacity="0.9"/></svg><div class="t" style="left:35px;top:1px;font-size:15.5px;line-height:19px;color:#f4f8ff">Word Chopper</div></div><div style="left:1037.5px;top:395.8px;width:175.5px;height:81.9px;background:#262626"></div><div style="left:1047.0px;top:428.3px;width:15.5px;height:15.5px;background:#474747"></div><div style="left:1037.5px;top:479.20000000000005px;width:175.5px;height:81.9px;background:#0d8b95;overflow:hidden"><svg width="175.5" height="81.9" style="position:absolute;left:0;top:0"><rect x="21.9" y="20" width="1.2" height="61.900000000000006" fill="rgba(0,0,0,0.08)"/><rect x="43.9" y="20" width="1.2" height="61.900000000000006" fill="rgba(0,0,0,0.13)"/><rect x="65.8" y="20" width="1.2" height="61.900000000000006" fill="rgba(0,0,0,0.08)"/><rect x="87.8" y="20" width="1.2" height="61.900000000000006" fill="rgba(0,0,0,0.13)"/><rect x="109.7" y="20" width="1.2" height="61.900000000000006" fill="rgba(0,0,0,0.08)"/><rect x="131.6" y="20" width="1.2" height="61.900000000000006" fill="rgba(0,0,0,0.13)"/><rect x="153.6" y="20" width="1.2" height="61.900000000000006" fill="rgba(0,0,0,0.08)"/><rect x="0" y="19" width="175.5" height="1" fill="rgba(0,0,0,0.10)"/><g fill="#032629" opacity="0.55"><rect x="3.0" y="47" width="1.3" height="6"/><rect x="6.2" y="47" width="1.3" height="4"/><rect x="9.4" y="47" width="1.3" height="4"/><rect x="12.6" y="47" width="1.3" height="4"/><rect x="15.8" y="47" width="1.3" height="6"/><rect x="19.0" y="47" width="1.3" height="4"/><rect x="22.2" y="47" width="1.3" height="4"/><rect x="25.4" y="47" width="1.3" height="4"/><rect x="28.6" y="47" width="1.3" height="6"/><rect x="31.8" y="47" width="1.3" height="4"/><rect x="35.0" y="47" width="1.3" height="4"/><rect x="38.2" y="47" width="1.3" height="4"/><rect x="41.4" y="47" width="1.3" height="6"/><rect x="44.6" y="47" width="1.3" height="4"/><rect x="47.8" y="47" width="1.3" height="4"/><rect x="51.0" y="47" width="1.3" height="4"/><rect x="54.2" y="47" width="1.3" height="6"/><rect x="57.4" y="47" width="1.3" height="4"/><rect x="60.6" y="47" width="1.3" height="4"/><rect x="63.8" y="47" width="1.3" height="4"/><rect x="67.0" y="47" width="1.3" height="6"/><rect x="70.2" y="47" width="1.3" height="4"/><rect x="73.4" y="47" width="1.3" height="4"/><rect x="76.6" y="47" width="1.3" height="4"/><rect x="79.8" y="47" width="1.3" height="6"/><rect x="83.0" y="47" width="1.3" height="4"/><rect x="86.2" y="47" width="1.3" height="4"/><rect x="89.4" y="47" width="1.3" height="4"/><rect x="92.6" y="47" width="1.3" height="6"/><rect x="95.8" y="47" width="1.3" height="4"/><rect x="99.0" y="47" width="1.3" height="4"/><rect x="102.2" y="47" width="1.3" height="4"/><rect x="105.4" y="47" width="1.3" height="6"/><rect x="108.6" y="47" width="1.3" height="4"/><rect x="111.8" y="47" width="1.3" height="4"/><rect x="115.0" y="47" width="1.3" height="4"/><rect x="118.2" y="47" width="1.3" height="6"/><rect x="121.4" y="47" width="1.3" height="4"/><rect x="124.6" y="47" width="1.3" height="4"/><rect x="127.8" y="47" width="1.3" height="4"/><rect x="131.0" y="47" width="1.3" height="6"/><rect x="134.2" y="47" width="1.3" height="4"/><rect x="137.4" y="47" width="1.3" height="4"/><rect x="140.6" y="47" width="1.3" height="4"/><rect x="143.8" y="47" width="1.3" height="6"/><rect x="147.0" y="47" width="1.3" height="4"/><rect x="150.2" y="47" width="1.3" height="4"/><rect x="153.4" y="47" width="1.3" height="4"/><rect x="156.6" y="47" width="1.3" height="6"/><rect x="159.8" y="47" width="1.3" height="4"/><rect x="163.0" y="47" width="1.3" height="4"/><rect x="166.2" y="47" width="1.3" height="4"/><rect x="169.4" y="47" width="1.3" height="6"/><rect x="172.6" y="47" width="1.3" height="4"/></g><path d="M10 10L26 21L10 32z" fill="#08565c" opacity="0.9"/></svg><div class="t" style="left:35px;top:1px;font-size:15.5px;line-height:19px;color:#f4f8ff">Word Chopper</div></div><div style="left:1037.5px;top:562.6px;width:175.5px;height:81.9px;background:#0d8b95;overflow:hidden"><svg width="175.5" height="81.9" style="position:absolute;left:0;top:0"><rect x="21.9" y="20" width="1.2" height="61.900000000000006" fill="rgba(0,0,0,0.08)"/><rect x="43.9" y="20" width="1.2" height="61.900000000000006" fill="rgba(0,0,0,0.13)"/><rect x="65.8" y="20" width="1.2" height="61.900000000000006" fill="rgba(0,0,0,0.08)"/><rect x="87.8" y="20" width="1.2" height="61.900000000000006" fill="rgba(0,0,0,0.13)"/><rect x="109.7" y="20" width="1.2" height="61.900000000000006" fill="rgba(0,0,0,0.08)"/><rect x="131.6" y="20" width="1.2" height="61.900000000000006" fill="rgba(0,0,0,0.13)"/><rect x="153.6" y="20" width="1.2" height="61.900000000000006" fill="rgba(0,0,0,0.08)"/><rect x="0" y="19" width="175.5" height="1" fill="rgba(0,0,0,0.10)"/><path transform="translate(2,24)" d="M0.0,13.4 L1.0,11.6 L2.0,11.6 L3.0,10.2 L4.0,2.2 L5.0,13.1 L6.0,2.5 L7.0,15.7 L8.0,14.9 L9.0,15.8 L10.0,18.3 L11.0,14.7 L12.0,12.2 L13.0,11.8 L14.0,12.5 L15.0,11.3 L16.0,13.4 L17.0,13.0 L18.0,17.8 L19.0,13.0 L20.0,13.3 L21.0,13.4 L22.0,14.6 L23.0,13.9 L24.0,12.8 L25.0,11.7 L26.0,15.2 L27.0,15.0 L28.0,14.9 L29.0,14.5 L30.0,11.6 L31.0,3.2 L32.0,14.4 L33.0,16.1 L34.0,1.6 L35.0,12.4 L36.0,11.3 L37.0,11.5 L38.0,2.3 L39.0,10.4 L40.0,13.6 L41.0,13.6 L42.0,14.7 L43.0,18.2 L44.0,11.5 L45.0,12.2 L46.0,10.6 L47.0,13.1 L48.0,14.8 L49.0,12.7 L50.0,12.9 L51.0,14.2 L52.0,14.5 L53.0,15.5 L54.0,10.6 L55.0,11.7 L56.0,14.7 L57.0,10.2 L58.0,17.5 L59.0,12.5 L60.0,10.5 L61.0,16.0 L62.0,14.6 L63.0,13.6 L64.0,13.3 L65.0,11.8 L66.0,11.0 L67.0,13.7 L68.0,15.5 L69.0,15.5 L70.0,11.0 L71.0,14.2 L72.0,13.4 L73.0,12.2 L74.0,10.5 L75.0,13.9 L76.0,15.4 L77.0,14.4 L78.0,10.4 L79.0,15.4 L80.0,11.3 L81.0,12.5 L82.0,15.0 L83.0,16.6 L84.0,13.4 L85.0,3.5 L86.0,1.8 L87.0,14.9 L88.0,15.7 L89.0,14.3 L90.0,12.5 L91.0,10.9 L92.0,14.0 L93.0,13.3 L94.0,16.2 L95.0,17.4 L96.0,17.7 L97.0,15.2 L98.0,11.1 L99.0,18.8 L100.0,15.6 L101.0,15.0 L102.0,12.9 L103.0,14.4 L104.0,11.1 L105.0,4.8 L106.0,11.2 L107.0,12.8 L108.0,15.1 L109.0,10.1 L110.0,16.3 L111.0,16.5 L112.0,11.6 L113.0,10.2 L114.0,16.1 L115.0,10.4 L116.0,16.0 L117.0,15.9 L118.0,13.3 L119.0,12.8 L120.0,13.5 L121.0,12.6 L122.0,13.9 L123.0,1.9 L124.0,13.1 L125.0,13.2 L126.0,13.5 L127.0,10.2 L128.0,14.8 L129.0,14.8 L130.0,11.1 L131.0,13.8 L132.0,13.4 L133.0,1.7 L134.0,13.0 L135.0,10.1 L136.0,12.1 L137.0,13.8 L138.0,17.6 L139.0,17.3 L140.0,15.7 L141.0,12.6 L142.0,15.4 L143.0,11.9 L144.0,11.5 L145.0,11.6 L146.0,11.9 L147.0,15.2 L148.0,13.5 L149.0,12.2 L150.0,13.0 L151.0,11.5 L152.0,15.9 L153.0,12.3 L154.0,2.7 L155.0,15.6 L156.0,3.1 L157.0,3.1 L158.0,12.1 L159.0,13.1 L160.0,10.9 L161.0,14.2 L162.0,10.5 L163.0,14.3 L164.0,15.7 L165.0,15.4 L166.0,3.5 L167.0,13.0 L168.0,14.7 L169.0,5.6 L170.0,12.6 L171.0,15.4 L171.0,40.5 L170.0,43.3 L169.0,50.3 L168.0,41.2 L167.0,42.9 L166.0,52.4 L165.0,40.5 L164.0,40.2 L163.0,41.6 L162.0,45.4 L161.0,41.7 L160.0,45.0 L159.0,42.8 L158.0,43.8 L157.0,52.8 L156.0,52.8 L155.0,40.3 L154.0,53.2 L153.0,43.6 L152.0,40.0 L151.0,44.4 L150.0,42.9 L149.0,43.7 L148.0,42.4 L147.0,40.7 L146.0,44.0 L145.0,44.3 L144.0,44.4 L143.0,44.0 L142.0,40.5 L141.0,43.3 L140.0,40.2 L139.0,38.6 L138.0,38.3 L137.0,42.1 L136.0,43.8 L135.0,45.8 L134.0,42.9 L133.0,54.2 L132.0,42.5 L131.0,42.1 L130.0,44.8 L129.0,41.1 L128.0,41.1 L127.0,45.7 L126.0,42.4 L125.0,42.7 L124.0,42.8 L123.0,54.0 L122.0,42.0 L121.0,43.3 L120.0,42.4 L119.0,43.1 L118.0,42.6 L117.0,40.0 L116.0,39.9 L115.0,45.5 L114.0,39.8 L113.0,45.7 L112.0,44.3 L111.0,39.4 L110.0,39.6 L109.0,45.8 L108.0,40.8 L107.0,43.1 L106.0,44.7 L105.0,51.1 L104.0,44.8 L103.0,41.5 L102.0,43.0 L101.0,40.9 L100.0,40.3 L99.0,37.1 L98.0,44.8 L97.0,40.7 L96.0,38.2 L95.0,38.5 L94.0,39.7 L93.0,42.6 L92.0,41.9 L91.0,45.0 L90.0,43.4 L89.0,41.6 L88.0,40.2 L87.0,41.0 L86.0,54.1 L85.0,52.4 L84.0,42.5 L83.0,39.3 L82.0,40.9 L81.0,43.4 L80.0,44.6 L79.0,40.5 L78.0,45.5 L77.0,41.5 L76.0,40.5 L75.0,42.0 L74.0,45.4 L73.0,43.7 L72.0,42.5 L71.0,41.7 L70.0,44.9 L69.0,40.4 L68.0,40.4 L67.0,42.2 L66.0,44.9 L65.0,44.1 L64.0,42.6 L63.0,42.3 L62.0,41.3 L61.0,39.9 L60.0,45.4 L59.0,43.4 L58.0,38.4 L57.0,45.7 L56.0,41.2 L55.0,44.2 L54.0,45.3 L53.0,40.4 L52.0,41.4 L51.0,41.7 L50.0,43.0 L49.0,43.2 L48.0,41.1 L47.0,42.8 L46.0,45.3 L45.0,43.7 L44.0,44.4 L43.0,37.7 L42.0,41.2 L41.0,42.3 L40.0,42.3 L39.0,45.5 L38.0,53.6 L37.0,44.4 L36.0,44.6 L35.0,43.5 L34.0,54.3 L33.0,39.8 L32.0,41.5 L31.0,52.7 L30.0,44.3 L29.0,41.4 L28.0,41.0 L27.0,40.9 L26.0,40.7 L25.0,44.2 L24.0,43.1 L23.0,42.0 L22.0,41.3 L21.0,42.5 L20.0,42.6 L19.0,42.9 L18.0,38.1 L17.0,42.9 L16.0,42.5 L15.0,44.6 L14.0,43.4 L13.0,44.1 L12.0,43.7 L11.0,41.2 L10.0,37.6 L9.0,40.1 L8.0,41.0 L7.0,40.2 L6.0,53.4 L5.0,42.8 L4.0,53.7 L3.0,45.7 L2.0,44.3 L1.0,44.3 L0.0,42.5Z" fill="#032629" opacity="0.85"/><path d="M10 10L26 21L10 32z" fill="#08565c" opacity="0.9"/></svg><div class="t" style="left:35px;top:1px;font-size:15.5px;line-height:19px;color:#f4f8ff">WordChopper-b2</div></div><div style="left:1037.5px;top:646.0px;width:175.5px;height:81.9px;background:#262626"></div><div style="left:1047.0px;top:678.5px;width:15.5px;height:15.5px;background:#474747"></div><div style="left:1037.5px;top:729.4000000000001px;width:175.5px;height:81.9px;background:#2eaab2;overflow:hidden"><svg width="175.5" height="81.9" style="position:absolute;left:0;top:0"><rect x="21.9" y="20" width="1.2" height="61.900000000000006" fill="rgba(0,0,0,0.08)"/><rect x="43.9" y="20" width="1.2" height="61.900000000000006" fill="rgba(0,0,0,0.13)"/><rect x="65.8" y="20" width="1.2" height="61.900000000000006" fill="rgba(0,0,0,0.08)"/><rect x="87.8" y="20" width="1.2" height="61.900000000000006" fill="rgba(0,0,0,0.13)"/><rect x="109.7" y="20" width="1.2" height="61.900000000000006" fill="rgba(0,0,0,0.08)"/><rect x="131.6" y="20" width="1.2" height="61.900000000000006" fill="rgba(0,0,0,0.13)"/><rect x="153.6" y="20" width="1.2" height="61.900000000000006" fill="rgba(0,0,0,0.08)"/><rect x="0" y="19" width="175.5" height="1" fill="rgba(0,0,0,0.10)"/><path transform="translate(2,24)" d="M0.0,11.6 L1.0,13.7 L2.0,13.0 L3.0,17.2 L4.0,10.1 L5.0,15.4 L6.0,15.2 L7.0,12.6 L8.0,11.2 L9.0,18.7 L10.0,11.5 L11.0,10.6 L12.0,13.5 L13.0,14.0 L14.0,14.6 L15.0,13.9 L16.0,12.6 L17.0,12.1 L18.0,16.1 L19.0,3.3 L20.0,19.0 L21.0,12.3 L22.0,12.4 L23.0,12.5 L24.0,14.7 L25.0,12.9 L26.0,14.5 L27.0,15.9 L28.0,13.0 L29.0,15.6 L30.0,14.4 L31.0,13.5 L32.0,10.2 L33.0,13.7 L34.0,10.5 L35.0,10.4 L36.0,15.5 L37.0,15.3 L38.0,15.7 L39.0,14.8 L40.0,12.1 L41.0,12.8 L42.0,10.8 L43.0,14.7 L44.0,14.8 L45.0,14.7 L46.0,14.1 L47.0,13.1 L48.0,15.4 L49.0,10.7 L50.0,14.8 L51.0,12.2 L52.0,10.9 L53.0,14.3 L54.0,11.8 L55.0,16.6 L56.0,12.3 L57.0,12.6 L58.0,11.8 L59.0,14.8 L60.0,11.3 L61.0,11.7 L62.0,15.1 L63.0,11.5 L64.0,14.6 L65.0,15.0 L66.0,3.0 L67.0,16.6 L68.0,12.6 L69.0,16.1 L70.0,13.9 L71.0,16.8 L72.0,15.2 L73.0,12.2 L74.0,9.4 L75.0,4.8 L76.0,14.8 L77.0,2.2 L78.0,16.1 L79.0,16.0 L80.0,14.7 L81.0,10.1 L82.0,15.8 L83.0,14.6 L84.0,13.1 L85.0,18.2 L86.0,10.8 L87.0,11.8 L88.0,15.6 L89.0,16.5 L90.0,13.3 L91.0,11.2 L92.0,11.8 L93.0,13.2 L94.0,15.8 L95.0,10.7 L96.0,15.9 L97.0,5.2 L98.0,10.7 L99.0,12.2 L100.0,11.3 L101.0,12.6 L102.0,14.0 L103.0,10.3 L104.0,14.1 L105.0,19.0 L106.0,14.6 L107.0,13.4 L108.0,15.2 L109.0,15.8 L110.0,15.2 L111.0,18.1 L112.0,14.3 L113.0,11.7 L114.0,14.1 L115.0,14.9 L116.0,12.6 L117.0,13.3 L118.0,13.8 L119.0,9.9 L120.0,19.0 L121.0,10.9 L122.0,12.6 L123.0,15.9 L124.0,15.6 L125.0,15.8 L126.0,16.2 L127.0,4.6 L128.0,17.7 L129.0,11.6 L130.0,16.2 L131.0,11.6 L132.0,10.7 L133.0,12.4 L134.0,14.7 L135.0,16.1 L136.0,14.8 L137.0,10.9 L138.0,15.1 L139.0,13.9 L140.0,2.8 L141.0,15.9 L142.0,12.9 L143.0,10.1 L144.0,15.9 L145.0,11.6 L146.0,11.8 L147.0,13.1 L148.0,15.6 L149.0,13.3 L150.0,15.4 L151.0,15.6 L152.0,11.9 L153.0,13.5 L154.0,10.1 L155.0,14.3 L156.0,10.1 L157.0,13.5 L158.0,14.6 L159.0,12.1 L160.0,11.8 L161.0,12.1 L162.0,14.0 L163.0,11.4 L164.0,14.7 L165.0,14.2 L166.0,15.7 L167.0,18.0 L168.0,10.9 L169.0,13.0 L170.0,16.0 L171.0,14.7 L171.0,41.2 L170.0,39.9 L169.0,42.9 L168.0,45.0 L167.0,37.9 L166.0,40.2 L165.0,41.7 L164.0,41.2 L163.0,44.5 L162.0,41.9 L161.0,43.8 L160.0,44.1 L159.0,43.8 L158.0,41.3 L157.0,42.4 L156.0,45.8 L155.0,41.6 L154.0,45.8 L153.0,42.4 L152.0,44.0 L151.0,40.3 L150.0,40.5 L149.0,42.6 L148.0,40.3 L147.0,42.8 L146.0,44.1 L145.0,44.3 L144.0,40.0 L143.0,45.8 L142.0,43.0 L141.0,40.0 L140.0,53.1 L139.0,42.0 L138.0,40.8 L137.0,45.0 L136.0,41.1 L135.0,39.8 L134.0,41.2 L133.0,43.5 L132.0,45.2 L131.0,44.3 L130.0,39.7 L129.0,44.3 L128.0,38.2 L127.0,51.3 L126.0,39.7 L125.0,40.1 L124.0,40.3 L123.0,40.0 L122.0,43.3 L121.0,45.0 L120.0,36.9 L119.0,46.0 L118.0,42.1 L117.0,42.6 L116.0,43.3 L115.0,41.0 L114.0,41.8 L113.0,44.2 L112.0,41.6 L111.0,37.8 L110.0,40.7 L109.0,40.1 L108.0,40.7 L107.0,42.5 L106.0,41.3 L105.0,36.9 L104.0,41.8 L103.0,45.6 L102.0,41.9 L101.0,43.3 L100.0,44.6 L99.0,43.7 L98.0,45.2 L97.0,50.7 L96.0,40.0 L95.0,45.2 L94.0,40.1 L93.0,42.7 L92.0,44.1 L91.0,44.7 L90.0,42.6 L89.0,39.4 L88.0,40.3 L87.0,44.1 L86.0,45.1 L85.0,37.7 L84.0,42.8 L83.0,41.3 L82.0,40.1 L81.0,45.8 L80.0,41.2 L79.0,39.9 L78.0,39.8 L77.0,53.7 L76.0,41.1 L75.0,51.1 L74.0,46.5 L73.0,43.7 L72.0,40.7 L71.0,39.1 L70.0,42.0 L69.0,39.8 L68.0,43.3 L67.0,39.3 L66.0,52.9 L65.0,40.9 L64.0,41.3 L63.0,44.4 L62.0,40.8 L61.0,44.2 L60.0,44.6 L59.0,41.1 L58.0,44.1 L57.0,43.3 L56.0,43.6 L55.0,39.3 L54.0,44.1 L53.0,41.6 L52.0,45.0 L51.0,43.7 L50.0,41.1 L49.0,45.2 L48.0,40.5 L47.0,42.8 L46.0,41.8 L45.0,41.2 L44.0,41.1 L43.0,41.2 L42.0,45.1 L41.0,43.1 L40.0,43.8 L39.0,41.1 L38.0,40.2 L37.0,40.6 L36.0,40.4 L35.0,45.5 L34.0,45.4 L33.0,42.2 L32.0,45.7 L31.0,42.4 L30.0,41.5 L29.0,40.3 L28.0,42.9 L27.0,40.0 L26.0,41.4 L25.0,43.0 L24.0,41.2 L23.0,43.4 L22.0,43.5 L21.0,43.6 L20.0,36.9 L19.0,52.6 L18.0,39.8 L17.0,43.8 L16.0,43.3 L15.0,42.0 L14.0,41.3 L13.0,41.9 L12.0,42.4 L11.0,45.3 L10.0,44.4 L9.0,37.2 L8.0,44.7 L7.0,43.3 L6.0,40.7 L5.0,40.5 L4.0,45.8 L3.0,38.7 L2.0,42.9 L1.0,42.2 L0.0,44.3Z" fill="#0c2f31" opacity="0.85"/><path d="M10 9L30 20.5L10 32z" fill="#fff" stroke="#111" stroke-width="2"/><rect x="158.0" y="0" width="2.5" height="81.9" fill="#fff"/></svg><div class="t" style="left:35px;top:1px;font-size:15.5px;line-height:19px;color:#f4f8ff">WordChopper-b1</div></div><div style="left:1037.5px;top:812.8000000000001px;width:175.5px;height:54.19999999999993px;background:#262626"></div><div style="left:1047.0px;top:845.3000000000001px;width:15.5px;height:15.5px;background:#474747"></div><div style="left:1214.5px;top:229.0px;width:175.5px;height:81.9px;background:#262626"></div><div style="left:1224.0px;top:261.5px;width:15.5px;height:15.5px;background:#474747"></div><div style="left:1214.5px;top:312.4px;width:175.5px;height:81.9px;background:#fd8cb0;overflow:hidden"><svg width="175.5" height="81.9" style="position:absolute;left:0;top:0"><rect x="21.9" y="20" width="1.2" height="61.900000000000006" fill="rgba(0,0,0,0.08)"/><rect x="43.9" y="20" width="1.2" height="61.900000000000006" fill="rgba(0,0,0,0.13)"/><rect x="65.8" y="20" width="1.2" height="61.900000000000006" fill="rgba(0,0,0,0.08)"/><rect x="87.8" y="20" width="1.2" height="61.900000000000006" fill="rgba(0,0,0,0.13)"/><rect x="109.7" y="20" width="1.2" height="61.900000000000006" fill="rgba(0,0,0,0.08)"/><rect x="131.6" y="20" width="1.2" height="61.900000000000006" fill="rgba(0,0,0,0.13)"/><rect x="153.6" y="20" width="1.2" height="61.900000000000006" fill="rgba(0,0,0,0.08)"/><rect x="0" y="19" width="175.5" height="1" fill="rgba(0,0,0,0.10)"/><g fill="#462731" opacity="0.9"><rect x="22" y="25" width="16" height="3"/><rect x="40" y="35.6" width="52" height="3"/><rect x="116" y="37.2" width="15" height="3"/><rect x="133" y="43.5" width="34" height="3"/><rect x="2" y="47.6" width="25" height="3"/><rect x="94" y="50.4" width="37" height="3"/><rect x="29" y="53.8" width="15" height="3"/><rect x="46" y="58" width="41" height="3"/><rect x="105" y="60.7" width="26" height="3"/><rect x="133" y="65.3" width="37" height="3"/><rect x="88" y="72.8" width="18" height="3"/></g><path d="M10 9L30 20.5L10 32z" fill="#fff" stroke="#111" stroke-width="2"/><rect x="161.5" y="0" width="2.5" height="81.9" fill="#fff"/></svg><div class="t" style="left:35px;top:1px;font-size:15.5px;line-height:19px;color:#3a1020">CrossingPolymeri1</div></div><div style="left:1214.5px;top:395.8px;width:175.5px;height:81.9px;background:#fb5f8c;overflow:hidden"><svg width="175.5" height="81.9" style="position:absolute;left:0;top:0"><rect x="21.9" y="20" width="1.2" height="61.900000000000006" fill="rgba(0,0,0,0.08)"/><rect x="43.9" y="20" width="1.2" height="61.900000000000006" fill="rgba(0,0,0,0.13)"/><rect x="65.8" y="20" width="1.2" height="61.900000000000006" fill="rgba(0,0,0,0.08)"/><rect x="87.8" y="20" width="1.2" height="61.900000000000006" fill="rgba(0,0,0,0.13)"/><rect x="109.7" y="20" width="1.2" height="61.900000000000006" fill="rgba(0,0,0,0.08)"/><rect x="131.6" y="20" width="1.2" height="61.900000000000006" fill="rgba(0,0,0,0.13)"/><rect x="153.6" y="20" width="1.2" height="61.900000000000006" fill="rgba(0,0,0,0.08)"/><rect x="0" y="19" width="175.5" height="1" fill="rgba(0,0,0,0.10)"/><g fill="#461a27" opacity="0.9"><rect x="144" y="25" width="19" height="3"/><rect x="5" y="40" width="33" height="3"/><rect x="46" y="40" width="17" height="3"/><rect x="73" y="40" width="12" height="3"/><rect x="110" y="40" width="58" height="3"/><rect x="5" y="47" width="33" height="3"/><rect x="46" y="47" width="17" height="3"/><rect x="73" y="47" width="12" height="3"/><rect x="92" y="47" width="76" height="3"/><rect x="128" y="52" width="40" height="3"/><rect x="73" y="57" width="12" height="3"/><rect x="90" y="64" width="78" height="3"/><rect x="2" y="72" width="36" height="3"/><rect x="41" y="72" width="29" height="3"/></g><path d="M10 10L26 21L10 32z" fill="#9b3a56" opacity="0.9"/></svg><div class="t" style="left:35px;top:1px;font-size:15.5px;line-height:19px;color:#3a1020">CrossingPolymeri2</div></div><div style="left:1214.5px;top:479.20000000000005px;width:175.5px;height:81.9px;background:#262626"></div><div style="left:1224.0px;top:511.70000000000005px;width:15.5px;height:15.5px;background:#474747"></div><div style="left:1214.5px;top:562.6px;width:175.5px;height:81.9px;background:#fb5f8c;overflow:hidden"><svg width="175.5" height="81.9" style="position:absolute;left:0;top:0"><rect x="21.9" y="20" width="1.2" height="61.900000000000006" fill="rgba(0,0,0,0.08)"/><rect x="43.9" y="20" width="1.2" height="61.900000000000006" fill="rgba(0,0,0,0.13)"/><rect x="65.8" y="20" width="1.2" height="61.900000000000006" fill="rgba(0,0,0,0.08)"/><rect x="87.8" y="20" width="1.2" height="61.900000000000006" fill="rgba(0,0,0,0.13)"/><rect x="109.7" y="20" width="1.2" height="61.900000000000006" fill="rgba(0,0,0,0.08)"/><rect x="131.6" y="20" width="1.2" height="61.900000000000006" fill="rgba(0,0,0,0.13)"/><rect x="153.6" y="20" width="1.2" height="61.900000000000006" fill="rgba(0,0,0,0.08)"/><rect x="0" y="19" width="175.5" height="1" fill="rgba(0,0,0,0.10)"/><g fill="#461a27" opacity="0.9"><rect x="2" y="27" width="34" height="3"/><rect x="47" y="27" width="16" height="3"/><rect x="66" y="27" width="12" height="3"/><rect x="84" y="27" width="35" height="3"/><rect x="127" y="27" width="19" height="3"/><rect x="149" y="27" width="24" height="3"/><rect x="92" y="47" width="37" height="3"/><rect x="136" y="47" width="15" height="3"/><rect x="158" y="47" width="15" height="3"/><rect x="2" y="54" width="39" height="3"/><rect x="48" y="54" width="15" height="3"/><rect x="70" y="54" width="15" height="3"/><rect x="92" y="61.5" width="81" height="3"/><rect x="2" y="69" width="85" height="3"/></g><path d="M10 10L26 21L10 32z" fill="#9b3a56" opacity="0.9"/></svg><div class="t" style="left:35px;top:1px;font-size:15.5px;line-height:19px;color:#3a1020">dieTreppeherabg2</div></div><div style="left:1214.5px;top:646.0px;width:175.5px;height:81.9px;background:#fb5f8c;overflow:hidden"><svg width="175.5" height="81.9" style="position:absolute;left:0;top:0"><rect x="21.9" y="20" width="1.2" height="61.900000000000006" fill="rgba(0,0,0,0.08)"/><rect x="43.9" y="20" width="1.2" height="61.900000000000006" fill="rgba(0,0,0,0.13)"/><rect x="65.8" y="20" width="1.2" height="61.900000000000006" fill="rgba(0,0,0,0.08)"/><rect x="87.8" y="20" width="1.2" height="61.900000000000006" fill="rgba(0,0,0,0.13)"/><rect x="109.7" y="20" width="1.2" height="61.900000000000006" fill="rgba(0,0,0,0.08)"/><rect x="131.6" y="20" width="1.2" height="61.900000000000006" fill="rgba(0,0,0,0.13)"/><rect x="153.6" y="20" width="1.2" height="61.900000000000006" fill="rgba(0,0,0,0.08)"/><rect x="0" y="19" width="175.5" height="1" fill="rgba(0,0,0,0.10)"/><g fill="#461a27" opacity="0.9"><rect x="2" y="27" width="34" height="3"/><rect x="62" y="27" width="58" height="3"/><rect x="127" y="27" width="46" height="3"/><rect x="40" y="41.7" width="15" height="3"/><rect x="48" y="50.5" width="15" height="3"/><rect x="92" y="50.5" width="39" height="3"/><rect x="137" y="50.5" width="36" height="3"/><rect x="2" y="60" width="40" height="3"/><rect x="66" y="60" width="20" height="3"/><rect x="92" y="68.6" width="81" height="3"/></g><path d="M10 10L26 21L10 32z" fill="#9b3a56" opacity="0.9"/></svg><div class="t" style="left:35px;top:1px;font-size:15.5px;line-height:19px;color:#3a1020">dieTreppeherabg3</div></div><div style="left:1214.5px;top:729.4000000000001px;width:175.5px;height:81.9px;background:#262626"></div><div style="left:1224.0px;top:761.9000000000001px;width:15.5px;height:15.5px;background:#474747"></div><div style="left:1214.5px;top:812.8000000000001px;width:175.5px;height:54.19999999999993px;background:#262626"></div><div style="left:1224.0px;top:845.3000000000001px;width:15.5px;height:15.5px;background:#474747"></div><div style="left:1391.5px;top:229.0px;width:175.5px;height:81.9px;background:#262626"></div><div style="left:1391.5px;top:312.4px;width:175.5px;height:81.9px;background:#262626"></div><div style="left:1391.5px;top:395.8px;width:175.5px;height:81.9px;background:#262626"></div><div style="left:1391.5px;top:479.20000000000005px;width:175.5px;height:81.9px;background:#262626"></div><div style="left:1391.5px;top:562.6px;width:175.5px;height:81.9px;background:#262626"></div><div style="left:1391.5px;top:646.0px;width:175.5px;height:81.9px;background:#262626"></div><div style="left:1391.5px;top:729.4000000000001px;width:175.5px;height:81.9px;background:#262626"></div><div style="left:1391.5px;top:812.8000000000001px;width:175.5px;height:54.19999999999993px;background:#262626"></div><div style="left:1568.5px;top:229.0px;width:175.5px;height:81.9px;background:#262626"></div><div style="left:1568.5px;top:312.4px;width:175.5px;height:81.9px;background:#262626"></div><div style="left:1568.5px;top:395.8px;width:175.5px;height:81.9px;background:#262626"></div><div style="left:1568.5px;top:479.20000000000005px;width:175.5px;height:81.9px;background:#262626"></div><div style="left:1568.5px;top:562.6px;width:175.5px;height:81.9px;background:#262626"></div><div style="left:1568.5px;top:646.0px;width:175.5px;height:81.9px;background:#262626"></div><div style="left:1568.5px;top:729.4000000000001px;width:175.5px;height:81.9px;background:#262626"></div><div style="left:1568.5px;top:812.8000000000001px;width:175.5px;height:54.19999999999993px;background:#262626"></div><div style="left:1745.5px;top:229.0px;width:175.5px;height:81.9px;background:#262626;overflow:hidden"><div style="left:0;top:0;width:175.5px;height:38px;background:#484848"></div></div><svg style="position:absolute;left:1756.5px;top:237.0px;" width="19" height="23" viewBox="0 0 19 23"><path d="M0 0L18 11.5L0 23z" fill="#a9a9a9"/></svg><div class="t " style="left:1780.5px;top:239.9px;font-size:17.8px;line-height:22.25px;color:#f4f4f4;">Scene 1</div><div style="left:1745.5px;top:268.0px;width:175.5px;height:42.900000000000006px;background:repeating-linear-gradient(135deg,#2a2a2a 0 4px,#323232 4px 8px)"></div><div style="left:1745.5px;top:312.4px;width:175.5px;height:81.9px;background:#262626;overflow:hidden"><div style="left:0;top:0;width:175.5px;height:38px;background:#484848"></div></div><svg style="position:absolute;left:1756.5px;top:320.4px;" width="19" height="23" viewBox="0 0 19 23"><path d="M0 0L18 11.5L0 23z" fill="#a9a9a9"/></svg><div class="t " style="left:1780.5px;top:323.3px;font-size:17.8px;line-height:22.25px;color:#f4f4f4;">Scene 2</div><div style="left:1745.5px;top:351.4px;width:175.5px;height:21.0px;background:#3ba66b"></div><div style="left:1745.5px;top:373.3px;width:175.5px;height:21.0px;background:#64c1d8"></div><div style="left:1889.41px;top:373.34999999999997px;width:2.5px;height:20.950000000000003px;background:#fff"></div><div style="left:1745.5px;top:395.8px;width:175.5px;height:81.9px;background:#262626;overflow:hidden"><div style="left:0;top:0;width:175.5px;height:38px;background:#484848"></div></div><svg style="position:absolute;left:1756.5px;top:403.8px;" width="19" height="23" viewBox="0 0 19 23"><path d="M0 0L18 11.5L0 23z" fill="#a9a9a9"/></svg><div class="t " style="left:1780.5px;top:406.7px;font-size:17.8px;line-height:22.25px;color:#f4f4f4;">Scene 3</div><div style="left:1745.5px;top:434.8px;width:175.5px;height:42.9px;background:#3ba66b"></div><div style="left:1745.5px;top:479.20000000000005px;width:175.5px;height:81.9px;background:#262626;overflow:hidden"><div style="left:0;top:0;width:175.5px;height:38px;background:#484848"></div></div><svg style="position:absolute;left:1756.5px;top:487.20000000000005px;" width="19" height="23" viewBox="0 0 19 23"><path d="M0 0L18 11.5L0 23z" fill="#a9a9a9"/></svg><div class="t " style="left:1780.5px;top:490.1px;font-size:17.8px;line-height:22.25px;color:#f4f4f4;">Scene 4</div><div style="left:1745.5px;top:518.2px;width:175.5px;height:21.0px;background:#5ec98a"></div><div style="left:1771.825px;top:518.2px;width:2.5px;height:20.950000000000003px;background:#fff"></div><div style="left:1745.5px;top:540.2px;width:175.5px;height:21.0px;background:#3e9db6"></div><div style="left:1745.5px;top:562.6px;width:175.5px;height:81.9px;background:#262626;overflow:hidden"><div style="left:0;top:0;width:175.5px;height:38px;background:#484848"></div></div><svg style="position:absolute;left:1756.5px;top:570.6px;" width="19" height="23" viewBox="0 0 19 23"><path d="M0 0L18 11.5L0 23z" fill="#a9a9a9"/></svg><div class="t " style="left:1780.5px;top:573.5px;font-size:17.8px;line-height:22.25px;color:#f4f4f4;">Scene 5</div><div style="left:1745.5px;top:601.6px;width:175.5px;height:42.9px;background:#3e9db6"></div><div style="left:1745.5px;top:646.0px;width:175.5px;height:81.9px;background:#262626;overflow:hidden"><div style="left:0;top:0;width:175.5px;height:38px;background:#484848"></div></div><svg style="position:absolute;left:1756.5px;top:654.0px;" width="19" height="23" viewBox="0 0 19 23"><path d="M0 0L18 11.5L0 23z" fill="#a9a9a9"/></svg><div class="t " style="left:1780.5px;top:656.9px;font-size:17.8px;line-height:22.25px;color:#f4f4f4;">Scene 6</div><div style="left:1745.5px;top:685.0px;width:175.5px;height:42.9px;background:#3ba66b"></div><div style="left:1745.5px;top:729.4000000000001px;width:175.5px;height:81.9px;background:#262626;overflow:hidden"><div style="left:0;top:0;width:175.5px;height:38px;background:#484848"></div></div><svg style="position:absolute;left:1756.5px;top:737.4000000000001px;" width="19" height="23" viewBox="0 0 19 23"><path d="M0 0L18 11.5L0 23z" fill="#a9a9a9"/></svg><div class="t " style="left:1780.5px;top:740.3px;font-size:17.8px;line-height:22.25px;color:#f4f4f4;">Scene 7</div><div style="left:1745.5px;top:768.4000000000001px;width:175.5px;height:42.900000000000006px;background:repeating-linear-gradient(135deg,#2a2a2a 0 4px,#323232 4px 8px)"></div><div style="left:1745.5px;top:812.8000000000001px;width:175.5px;height:54.19999999999993px;background:#262626;overflow:hidden"><div style="left:0;top:0;width:175.5px;height:38px;background:#484848"></div></div><svg style="position:absolute;left:1756.5px;top:820.8000000000001px;" width="19" height="23" viewBox="0 0 19 23"><path d="M0 0L18 11.5L0 23z" fill="#a9a9a9"/></svg><div class="t " style="left:1780.5px;top:823.7px;font-size:17.8px;line-height:22.25px;color:#f4f4f4;">Scene 8</div><div style="left:1745.5px;top:851.8000000000001px;width:175.5px;height:15.199999999999932px;background:repeating-linear-gradient(135deg,#2a2a2a 0 4px,#323232 4px 8px)"></div><div style="left:1922.5px;top:229.0px;width:175.5px;height:81.9px;background:#262626"></div><div style="left:1932.0px;top:261.5px;width:15.5px;height:15.5px;background:#474747"></div><div style="left:1922.5px;top:312.4px;width:175.5px;height:81.9px;background:#3ba66b;overflow:hidden"><svg width="175.5" height="81.9" style="position:absolute;left:0;top:0"><rect x="21.9" y="20" width="1.2" height="61.900000000000006" fill="rgba(0,0,0,0.08)"/><rect x="43.9" y="20" width="1.2" height="61.900000000000006" fill="rgba(0,0,0,0.13)"/><rect x="65.8" y="20" width="1.2" height="61.900000000000006" fill="rgba(0,0,0,0.08)"/><rect x="87.8" y="20" width="1.2" height="61.900000000000006" fill="rgba(0,0,0,0.13)"/><rect x="109.7" y="20" width="1.2" height="61.900000000000006" fill="rgba(0,0,0,0.08)"/><rect x="131.6" y="20" width="1.2" height="61.900000000000006" fill="rgba(0,0,0,0.13)"/><rect x="153.6" y="20" width="1.2" height="61.900000000000006" fill="rgba(0,0,0,0.08)"/><rect x="0" y="19" width="175.5" height="1" fill="rgba(0,0,0,0.10)"/><path transform="translate(2,24)" d="M0.0,6.7 L1.0,8.6 L2.0,6.8 L3.0,6.5 L4.0,8.5 L5.0,6.4 L6.0,6.7 L7.0,7.7 L8.0,7.8 L9.0,7.1 L10.0,7.7 L11.0,7.3 L12.0,7.2 L13.0,8.6 L14.0,6.8 L15.0,6.9 L16.0,6.4 L17.0,6.9 L18.0,7.0 L19.0,6.8 L20.0,8.3 L21.0,7.5 L22.0,6.4 L23.0,6.3 L24.0,8.7 L25.0,6.5 L26.0,7.1 L27.0,7.7 L28.0,8.4 L29.0,6.5 L30.0,8.1 L31.0,7.2 L32.0,8.6 L33.0,7.3 L34.0,7.7 L35.0,8.0 L36.0,8.3 L37.0,8.7 L38.0,6.5 L39.0,7.2 L40.0,8.8 L41.0,7.2 L42.0,6.8 L43.0,8.2 L44.0,6.3 L45.0,6.6 L46.0,7.4 L47.0,6.2 L48.0,8.2 L49.0,8.7 L50.0,7.8 L51.0,8.3 L52.0,6.3 L53.0,8.5 L54.0,7.8 L55.0,6.5 L56.0,8.7 L57.0,8.5 L58.0,7.4 L59.0,7.8 L60.0,8.7 L61.0,7.0 L62.0,6.6 L63.0,8.6 L64.0,8.4 L65.0,8.4 L66.0,7.8 L67.0,7.8 L68.0,9.1 L69.0,8.1 L70.0,10.2 L71.0,8.6 L72.0,10.6 L73.0,11.2 L74.0,11.3 L75.0,10.9 L76.0,10.5 L77.0,12.5 L78.0,11.8 L79.0,12.4 L80.0,12.8 L81.0,12.6 L82.0,13.9 L83.0,13.1 L84.0,14.4 L85.0,14.7 L86.0,14.8 L87.0,15.1 L88.0,15.1 L89.0,15.3 L90.0,15.5 L91.0,17.0 L92.0,17.2 L93.0,16.7 L94.0,17.0 L95.0,18.0 L96.0,17.6 L97.0,17.9 L98.0,19.2 L99.0,19.4 L100.0,19.7 L101.0,19.2 L102.0,19.5 L103.0,20.4 L104.0,20.1 L105.0,21.0 L106.0,21.1 L107.0,21.3 L108.0,21.6 L109.0,22.2 L110.0,22.5 L111.0,22.2 L112.0,22.5 L113.0,23.0 L114.0,23.2 L115.0,23.3 L116.0,24.0 L117.0,24.2 L118.0,24.2 L119.0,24.5 L120.0,24.8 L121.0,25.1 L122.0,25.4 L123.0,25.5 L124.0,25.7 L125.0,25.9 L126.0,26.1 L127.0,26.2 L128.0,26.5 L129.0,26.8 L130.0,26.8 L131.0,26.8 L132.0,26.8 L133.0,26.8 L134.0,26.8 L135.0,26.8 L136.0,26.8 L137.0,26.8 L138.0,26.8 L139.0,26.8 L140.0,26.8 L141.0,26.8 L142.0,26.8 L143.0,26.8 L144.0,26.8 L145.0,26.8 L146.0,26.8 L147.0,26.8 L148.0,26.8 L149.0,26.8 L150.0,26.8 L151.0,26.8 L152.0,26.8 L153.0,26.8 L154.0,26.8 L155.0,26.8 L156.0,26.8 L157.0,26.8 L158.0,26.8 L159.0,26.8 L160.0,26.8 L161.0,26.8 L162.0,26.8 L163.0,26.8 L164.0,26.8 L165.0,26.8 L166.0,26.8 L167.0,26.8 L168.0,26.8 L169.0,26.8 L170.0,26.8 L171.0,26.8 L171.0,29.1 L170.0,29.1 L169.0,29.1 L168.0,29.1 L167.0,29.1 L166.0,29.1 L165.0,29.1 L164.0,29.1 L163.0,29.1 L162.0,29.1 L161.0,29.1 L160.0,29.1 L159.0,29.1 L158.0,29.1 L157.0,29.1 L156.0,29.1 L155.0,29.1 L154.0,29.1 L153.0,29.1 L152.0,29.1 L151.0,29.1 L150.0,29.1 L149.0,29.1 L148.0,29.1 L147.0,29.1 L146.0,29.1 L145.0,29.1 L144.0,29.1 L143.0,29.1 L142.0,29.1 L141.0,29.1 L140.0,29.1 L139.0,29.1 L138.0,29.1 L137.0,29.1 L136.0,29.1 L135.0,29.1 L134.0,29.1 L133.0,29.1 L132.0,29.1 L131.0,29.1 L130.0,29.1 L129.0,29.1 L128.0,29.4 L127.0,29.7 L126.0,29.8 L125.0,30.0 L124.0,30.2 L123.0,30.4 L122.0,30.5 L121.0,30.8 L120.0,31.1 L119.0,31.4 L118.0,31.7 L117.0,31.7 L116.0,31.9 L115.0,32.6 L114.0,32.7 L113.0,32.9 L112.0,33.4 L111.0,33.7 L110.0,33.4 L109.0,33.7 L108.0,34.3 L107.0,34.6 L106.0,34.8 L105.0,34.9 L104.0,35.8 L103.0,35.5 L102.0,36.4 L101.0,36.7 L100.0,36.2 L99.0,36.5 L98.0,36.7 L97.0,38.0 L96.0,38.3 L95.0,37.9 L94.0,38.9 L93.0,39.2 L92.0,38.7 L91.0,38.9 L90.0,40.4 L89.0,40.6 L88.0,40.8 L87.0,40.8 L86.0,41.1 L85.0,41.2 L84.0,41.5 L83.0,42.8 L82.0,42.0 L81.0,43.3 L80.0,43.1 L79.0,43.5 L78.0,44.1 L77.0,43.4 L76.0,45.4 L75.0,45.0 L74.0,44.6 L73.0,44.7 L72.0,45.3 L71.0,47.3 L70.0,45.7 L69.0,47.8 L68.0,46.8 L67.0,48.1 L66.0,48.1 L65.0,47.5 L64.0,47.5 L63.0,47.3 L62.0,49.3 L61.0,48.9 L60.0,47.2 L59.0,48.1 L58.0,48.5 L57.0,47.4 L56.0,47.2 L55.0,49.4 L54.0,48.1 L53.0,47.4 L52.0,49.6 L51.0,47.6 L50.0,48.1 L49.0,47.2 L48.0,47.7 L47.0,49.7 L46.0,48.5 L45.0,49.3 L44.0,49.6 L43.0,47.7 L42.0,49.1 L41.0,48.7 L40.0,47.1 L39.0,48.7 L38.0,49.4 L37.0,47.2 L36.0,47.6 L35.0,47.9 L34.0,48.2 L33.0,48.6 L32.0,47.3 L31.0,48.7 L30.0,47.8 L29.0,49.4 L28.0,47.5 L27.0,48.2 L26.0,48.8 L25.0,49.4 L24.0,47.2 L23.0,49.6 L22.0,49.5 L21.0,48.4 L20.0,47.6 L19.0,49.1 L18.0,48.9 L17.0,49.0 L16.0,49.5 L15.0,49.0 L14.0,49.1 L13.0,47.3 L12.0,48.7 L11.0,48.6 L10.0,48.2 L9.0,48.8 L8.0,48.1 L7.0,48.2 L6.0,49.2 L5.0,49.5 L4.0,47.4 L3.0,49.4 L2.0,49.1 L1.0,47.3 L0.0,49.2Z" fill="#102e1d" opacity="0.85"/><path d="M10 10L26 21L10 32z" fill="#246642" opacity="0.9"/></svg><div class="t" style="left:35px;top:1px;font-size:15.5px;line-height:19px;color:#f4f8ff">TolchaMS20 Sh43</div></div><div style="left:1922.5px;top:395.8px;width:175.5px;height:81.9px;background:#3ba66b;overflow:hidden"><svg width="175.5" height="81.9" style="position:absolute;left:0;top:0"><rect x="21.9" y="20" width="1.2" height="61.900000000000006" fill="rgba(0,0,0,0.08)"/><rect x="43.9" y="20" width="1.2" height="61.900000000000006" fill="rgba(0,0,0,0.13)"/><rect x="65.8" y="20" width="1.2" height="61.900000000000006" fill="rgba(0,0,0,0.08)"/><rect x="87.8" y="20" width="1.2" height="61.900000000000006" fill="rgba(0,0,0,0.13)"/><rect x="109.7" y="20" width="1.2" height="61.900000000000006" fill="rgba(0,0,0,0.08)"/><rect x="131.6" y="20" width="1.2" height="61.900000000000006" fill="rgba(0,0,0,0.13)"/><rect x="153.6" y="20" width="1.2" height="61.900000000000006" fill="rgba(0,0,0,0.08)"/><rect x="0" y="19" width="175.5" height="1" fill="rgba(0,0,0,0.10)"/><path transform="translate(2,24)" d="M0.0,4.1 L1.0,4.6 L2.0,5.4 L3.0,5.9 L4.0,4.6 L5.0,4.2 L6.0,4.3 L7.0,4.1 L8.0,5.2 L9.0,6.8 L10.0,6.2 L11.0,4.3 L12.0,5.7 L13.0,5.3 L14.0,5.0 L15.0,4.8 L16.0,7.1 L17.0,6.1 L18.0,5.5 L19.0,4.6 L20.0,7.0 L21.0,5.0 L22.0,5.3 L23.0,6.5 L24.0,6.4 L25.0,5.3 L26.0,7.1 L27.0,7.7 L28.0,6.1 L29.0,8.6 L30.0,6.6 L31.0,7.0 L32.0,7.9 L33.0,6.2 L34.0,7.4 L35.0,9.0 L36.0,8.3 L37.0,6.7 L38.0,9.6 L39.0,7.4 L40.0,8.3 L41.0,7.6 L42.0,7.4 L43.0,10.1 L44.0,9.1 L45.0,9.1 L46.0,9.2 L47.0,8.2 L48.0,10.7 L49.0,10.4 L50.0,8.8 L51.0,8.7 L52.0,8.5 L53.0,11.1 L54.0,9.1 L55.0,11.6 L56.0,9.4 L57.0,11.1 L58.0,9.3 L59.0,10.2 L60.0,10.8 L61.0,11.8 L62.0,9.9 L63.0,11.4 L64.0,10.0 L65.0,12.6 L66.0,11.6 L67.0,12.8 L68.0,12.3 L69.0,10.6 L70.0,12.3 L71.0,13.2 L72.0,12.5 L73.0,11.7 L74.0,11.8 L75.0,11.7 L76.0,13.6 L77.0,12.7 L78.0,13.0 L79.0,13.2 L80.0,12.9 L81.0,14.2 L82.0,12.5 L83.0,12.7 L84.0,13.4 L85.0,14.2 L86.0,14.9 L87.0,13.8 L88.0,13.1 L89.0,13.2 L90.0,13.6 L91.0,13.4 L92.0,14.1 L93.0,15.1 L94.0,14.3 L95.0,14.5 L96.0,14.7 L97.0,14.6 L98.0,14.7 L99.0,14.6 L100.0,15.8 L101.0,14.9 L102.0,16.7 L103.0,15.6 L104.0,15.9 L105.0,16.6 L106.0,16.3 L107.0,16.8 L108.0,16.2 L109.0,16.6 L110.0,16.6 L111.0,16.5 L112.0,17.7 L113.0,18.1 L114.0,16.8 L115.0,17.1 L116.0,18.2 L117.0,18.4 L118.0,17.5 L119.0,18.7 L120.0,18.5 L121.0,18.8 L122.0,19.1 L123.0,18.6 L124.0,18.5 L125.0,19.1 L126.0,18.9 L127.0,19.6 L128.0,19.8 L129.0,19.6 L130.0,20.3 L131.0,19.3 L132.0,20.4 L133.0,19.8 L134.0,20.5 L135.0,20.4 L136.0,20.9 L137.0,21.1 L138.0,21.0 L139.0,21.2 L140.0,21.8 L141.0,21.2 L142.0,21.8 L143.0,21.6 L144.0,21.7 L145.0,21.7 L146.0,22.3 L147.0,22.6 L148.0,22.9 L149.0,22.7 L150.0,23.0 L151.0,23.1 L152.0,23.4 L153.0,23.7 L154.0,23.7 L155.0,24.1 L156.0,23.7 L157.0,24.5 L158.0,24.5 L159.0,24.7 L160.0,25.0 L161.0,25.0 L162.0,25.4 L163.0,25.7 L164.0,25.8 L165.0,25.9 L166.0,26.2 L167.0,26.5 L168.0,26.7 L169.0,26.7 L170.0,26.6 L171.0,26.7 L171.0,29.2 L170.0,29.3 L169.0,29.2 L168.0,29.2 L167.0,29.4 L166.0,29.7 L165.0,30.0 L164.0,30.1 L163.0,30.2 L162.0,30.5 L161.0,30.9 L160.0,30.9 L159.0,31.2 L158.0,31.4 L157.0,31.4 L156.0,32.2 L155.0,31.8 L154.0,32.2 L153.0,32.2 L152.0,32.5 L151.0,32.8 L150.0,32.9 L149.0,33.2 L148.0,33.0 L147.0,33.3 L146.0,33.6 L145.0,34.2 L144.0,34.2 L143.0,34.3 L142.0,34.1 L141.0,34.7 L140.0,34.1 L139.0,34.7 L138.0,34.9 L137.0,34.8 L136.0,35.0 L135.0,35.5 L134.0,35.4 L133.0,36.1 L132.0,35.5 L131.0,36.6 L130.0,35.6 L129.0,36.3 L128.0,36.1 L127.0,36.3 L126.0,37.0 L125.0,36.8 L124.0,37.4 L123.0,37.3 L122.0,36.8 L121.0,37.1 L120.0,37.4 L119.0,37.2 L118.0,38.4 L117.0,37.5 L116.0,37.7 L115.0,38.8 L114.0,39.1 L113.0,37.8 L112.0,38.2 L111.0,39.4 L110.0,39.3 L109.0,39.3 L108.0,39.7 L107.0,39.1 L106.0,39.6 L105.0,39.3 L104.0,40.0 L103.0,40.3 L102.0,39.2 L101.0,41.0 L100.0,40.1 L99.0,41.3 L98.0,41.2 L97.0,41.3 L96.0,41.2 L95.0,41.4 L94.0,41.6 L93.0,40.8 L92.0,41.8 L91.0,42.5 L90.0,42.3 L89.0,42.7 L88.0,42.8 L87.0,42.1 L86.0,41.0 L85.0,41.7 L84.0,42.5 L83.0,43.2 L82.0,43.4 L81.0,41.7 L80.0,43.0 L79.0,42.7 L78.0,42.9 L77.0,43.2 L76.0,42.3 L75.0,44.2 L74.0,44.1 L73.0,44.2 L72.0,43.4 L71.0,42.7 L70.0,43.6 L69.0,45.3 L68.0,43.6 L67.0,43.1 L66.0,44.3 L65.0,43.3 L64.0,45.9 L63.0,44.5 L62.0,46.0 L61.0,44.1 L60.0,45.1 L59.0,45.7 L58.0,46.6 L57.0,44.8 L56.0,46.5 L55.0,44.3 L54.0,46.8 L53.0,44.8 L52.0,47.4 L51.0,47.2 L50.0,47.1 L49.0,45.5 L48.0,45.2 L47.0,47.7 L46.0,46.7 L45.0,46.8 L44.0,46.8 L43.0,45.8 L42.0,48.5 L41.0,48.3 L40.0,47.6 L39.0,48.5 L38.0,46.3 L37.0,49.2 L36.0,47.6 L35.0,46.9 L34.0,48.5 L33.0,49.7 L32.0,48.0 L31.0,48.9 L30.0,49.3 L29.0,47.3 L28.0,49.8 L27.0,48.2 L26.0,48.8 L25.0,50.6 L24.0,49.5 L23.0,49.4 L22.0,50.6 L21.0,50.9 L20.0,48.9 L19.0,51.3 L18.0,50.4 L17.0,49.8 L16.0,48.8 L15.0,51.1 L14.0,50.9 L13.0,50.6 L12.0,50.2 L11.0,51.6 L10.0,49.7 L9.0,49.1 L8.0,50.7 L7.0,51.8 L6.0,51.6 L5.0,51.7 L4.0,51.3 L3.0,50.0 L2.0,50.5 L1.0,51.3 L0.0,51.8Z" fill="#102e1d" opacity="0.85"/><path d="M10 10L26 21L10 32z" fill="#246642" opacity="0.9"/></svg><div class="t" style="left:35px;top:1px;font-size:15.5px;line-height:19px;color:#f4f8ff">TolchaMS20 Sw07</div></div><div style="left:1922.5px;top:479.20000000000005px;width:175.5px;height:81.9px;background:#5ec98a;overflow:hidden"><svg width="175.5" height="81.9" style="position:absolute;left:0;top:0"><rect x="21.9" y="20" width="1.2" height="61.900000000000006" fill="rgba(0,0,0,0.08)"/><rect x="43.9" y="20" width="1.2" height="61.900000000000006" fill="rgba(0,0,0,0.13)"/><rect x="65.8" y="20" width="1.2" height="61.900000000000006" fill="rgba(0,0,0,0.08)"/><rect x="87.8" y="20" width="1.2" height="61.900000000000006" fill="rgba(0,0,0,0.13)"/><rect x="109.7" y="20" width="1.2" height="61.900000000000006" fill="rgba(0,0,0,0.08)"/><rect x="131.6" y="20" width="1.2" height="61.900000000000006" fill="rgba(0,0,0,0.13)"/><rect x="153.6" y="20" width="1.2" height="61.900000000000006" fill="rgba(0,0,0,0.08)"/><rect x="0" y="19" width="175.5" height="1" fill="rgba(0,0,0,0.10)"/><path transform="translate(2,24)" d="M0.0,9.9 L1.0,10.2 L2.0,9.5 L3.0,10.0 L4.0,10.0 L5.0,10.8 L6.0,10.2 L7.0,9.9 L8.0,10.0 L9.0,10.7 L10.0,10.3 L11.0,10.2 L12.0,9.1 L13.0,9.5 L14.0,9.1 L15.0,10.8 L16.0,10.4 L17.0,9.8 L18.0,10.7 L19.0,10.4 L20.0,9.8 L21.0,10.8 L22.0,10.1 L23.0,10.8 L24.0,10.4 L25.0,9.1 L26.0,10.1 L27.0,10.3 L28.0,9.1 L29.0,9.2 L30.0,10.4 L31.0,10.0 L32.0,10.5 L33.0,9.4 L34.0,10.0 L35.0,9.4 L36.0,9.4 L37.0,10.6 L38.0,10.6 L39.0,9.4 L40.0,9.2 L41.0,10.5 L42.0,9.2 L43.0,10.5 L44.0,10.2 L45.0,9.6 L46.0,10.6 L47.0,9.9 L48.0,10.0 L49.0,10.7 L50.0,10.7 L51.0,10.0 L52.0,9.9 L53.0,9.9 L54.0,10.7 L55.0,10.0 L56.0,9.0 L57.0,9.5 L58.0,10.2 L59.0,9.5 L60.0,10.1 L61.0,9.8 L62.0,10.6 L63.0,10.8 L64.0,9.5 L65.0,10.0 L66.0,10.8 L67.0,8.9 L68.0,9.7 L69.0,10.4 L70.0,9.9 L71.0,9.3 L72.0,9.9 L73.0,9.5 L74.0,10.8 L75.0,9.3 L76.0,9.8 L77.0,10.2 L78.0,10.1 L79.0,9.2 L80.0,9.1 L81.0,10.3 L82.0,9.3 L83.0,10.2 L84.0,9.8 L85.0,10.7 L86.0,10.2 L87.0,9.9 L88.0,10.7 L89.0,9.1 L90.0,9.4 L91.0,9.1 L92.0,9.9 L93.0,10.5 L94.0,10.1 L95.0,10.7 L96.0,10.0 L97.0,10.1 L98.0,10.6 L99.0,9.7 L100.0,10.0 L101.0,9.6 L102.0,10.7 L103.0,10.5 L104.0,11.4 L105.0,11.1 L106.0,10.7 L107.0,11.5 L108.0,10.8 L109.0,11.4 L110.0,12.1 L111.0,12.4 L112.0,12.6 L113.0,11.8 L114.0,12.5 L115.0,12.6 L116.0,11.8 L117.0,13.3 L118.0,12.8 L119.0,12.6 L120.0,13.5 L121.0,12.5 L122.0,12.8 L123.0,13.3 L124.0,14.2 L125.0,14.2 L126.0,14.4 L127.0,14.6 L128.0,15.0 L129.0,14.1 L130.0,14.4 L131.0,15.6 L132.0,14.5 L133.0,15.3 L134.0,15.0 L135.0,15.9 L136.0,15.5 L137.0,16.5 L138.0,16.6 L139.0,16.4 L140.0,16.4 L141.0,16.9 L142.0,16.6 L143.0,17.4 L144.0,16.9 L145.0,17.6 L146.0,17.4 L147.0,17.7 L148.0,18.5 L149.0,18.8 L150.0,18.7 L151.0,18.5 L152.0,19.0 L153.0,19.0 L154.0,19.6 L155.0,19.2 L156.0,19.9 L157.0,20.3 L158.0,20.6 L159.0,20.7 L160.0,20.9 L161.0,21.1 L162.0,21.4 L163.0,21.2 L164.0,21.3 L165.0,21.8 L166.0,21.6 L167.0,21.9 L168.0,22.3 L169.0,22.7 L170.0,22.6 L171.0,23.2 L171.0,32.7 L170.0,33.3 L169.0,33.2 L168.0,33.6 L167.0,34.0 L166.0,34.3 L165.0,34.1 L164.0,34.6 L163.0,34.7 L162.0,34.5 L161.0,34.8 L160.0,35.0 L159.0,35.2 L158.0,35.3 L157.0,35.6 L156.0,36.0 L155.0,36.7 L154.0,36.3 L153.0,36.9 L152.0,36.9 L151.0,37.4 L150.0,37.2 L149.0,37.1 L148.0,37.4 L147.0,38.2 L146.0,38.5 L145.0,38.3 L144.0,39.0 L143.0,38.5 L142.0,39.3 L141.0,39.0 L140.0,39.5 L139.0,39.5 L138.0,39.3 L137.0,39.4 L136.0,40.4 L135.0,40.0 L134.0,40.9 L133.0,40.6 L132.0,41.4 L131.0,40.3 L130.0,41.5 L129.0,41.8 L128.0,40.9 L127.0,41.3 L126.0,41.5 L125.0,41.7 L124.0,41.7 L123.0,42.6 L122.0,43.1 L121.0,43.4 L120.0,42.4 L119.0,43.3 L118.0,43.1 L117.0,42.6 L116.0,44.1 L115.0,43.3 L114.0,43.4 L113.0,44.1 L112.0,43.3 L111.0,43.5 L110.0,43.8 L109.0,44.5 L108.0,45.1 L107.0,44.4 L106.0,45.2 L105.0,44.8 L104.0,44.5 L103.0,45.4 L102.0,45.2 L101.0,46.3 L100.0,45.9 L99.0,46.2 L98.0,45.3 L97.0,45.8 L96.0,45.9 L95.0,45.2 L94.0,45.8 L93.0,45.4 L92.0,46.0 L91.0,46.8 L90.0,46.5 L89.0,46.8 L88.0,45.2 L87.0,46.0 L86.0,45.7 L85.0,45.2 L84.0,46.1 L83.0,45.7 L82.0,46.6 L81.0,45.6 L80.0,46.8 L79.0,46.7 L78.0,45.8 L77.0,45.7 L76.0,46.1 L75.0,46.6 L74.0,45.1 L73.0,46.4 L72.0,46.0 L71.0,46.6 L70.0,46.0 L69.0,45.5 L68.0,46.2 L67.0,47.0 L66.0,45.1 L65.0,45.9 L64.0,46.4 L63.0,45.1 L62.0,45.3 L61.0,46.1 L60.0,45.8 L59.0,46.4 L58.0,45.7 L57.0,46.4 L56.0,46.9 L55.0,45.9 L54.0,45.2 L53.0,46.0 L52.0,46.0 L51.0,45.9 L50.0,45.2 L49.0,45.2 L48.0,45.9 L47.0,46.0 L46.0,45.3 L45.0,46.3 L44.0,45.7 L43.0,45.4 L42.0,46.7 L41.0,45.4 L40.0,46.7 L39.0,46.5 L38.0,45.3 L37.0,45.3 L36.0,46.5 L35.0,46.5 L34.0,45.9 L33.0,46.5 L32.0,45.4 L31.0,45.9 L30.0,45.5 L29.0,46.7 L28.0,46.8 L27.0,45.6 L26.0,45.8 L25.0,46.8 L24.0,45.5 L23.0,45.1 L22.0,45.8 L21.0,45.1 L20.0,46.1 L19.0,45.5 L18.0,45.2 L17.0,46.1 L16.0,45.5 L15.0,45.1 L14.0,46.8 L13.0,46.4 L12.0,46.8 L11.0,45.7 L10.0,45.6 L9.0,45.2 L8.0,45.9 L7.0,46.0 L6.0,45.7 L5.0,45.1 L4.0,45.9 L3.0,45.9 L2.0,46.4 L1.0,45.7 L0.0,46.0Z" fill="#1a3826" opacity="0.85"/><path d="M10 9L30 20.5L10 32z" fill="#fff" stroke="#111" stroke-width="2"/><rect x="26.3" y="0" width="2.5" height="81.9" fill="#fff"/></svg><div class="t" style="left:35px;top:1px;font-size:15.5px;line-height:19px;color:#f4f8ff">TolchaMS20 Sw09</div></div><div style="left:1922.5px;top:562.6px;width:175.5px;height:81.9px;background:#262626"></div><div style="left:1932.0px;top:595.1px;width:15.5px;height:15.5px;background:#474747"></div><div style="left:1922.5px;top:646.0px;width:175.5px;height:81.9px;background:#3ba66b;overflow:hidden"><svg width="175.5" height="81.9" style="position:absolute;left:0;top:0"><rect x="21.9" y="20" width="1.2" height="61.900000000000006" fill="rgba(0,0,0,0.08)"/><rect x="43.9" y="20" width="1.2" height="61.900000000000006" fill="rgba(0,0,0,0.13)"/><rect x="65.8" y="20" width="1.2" height="61.900000000000006" fill="rgba(0,0,0,0.08)"/><rect x="87.8" y="20" width="1.2" height="61.900000000000006" fill="rgba(0,0,0,0.13)"/><rect x="109.7" y="20" width="1.2" height="61.900000000000006" fill="rgba(0,0,0,0.08)"/><rect x="131.6" y="20" width="1.2" height="61.900000000000006" fill="rgba(0,0,0,0.13)"/><rect x="153.6" y="20" width="1.2" height="61.900000000000006" fill="rgba(0,0,0,0.08)"/><rect x="0" y="19" width="175.5" height="1" fill="rgba(0,0,0,0.10)"/><path transform="translate(2,24)" d="M0.0,4.2 L1.0,2.7 L2.0,4.2 L3.0,3.0 L4.0,4.3 L5.0,2.8 L6.0,5.3 L7.0,4.3 L8.0,5.0 L9.0,4.8 L10.0,5.9 L11.0,4.2 L12.0,4.3 L13.0,4.9 L14.0,5.3 L15.0,7.4 L16.0,4.9 L17.0,6.5 L18.0,7.5 L19.0,7.1 L20.0,7.0 L21.0,7.7 L22.0,6.6 L23.0,5.3 L24.0,6.4 L25.0,7.2 L26.0,7.4 L27.0,5.9 L28.0,6.4 L29.0,7.1 L30.0,8.1 L31.0,6.0 L32.0,7.0 L33.0,6.5 L34.0,8.5 L35.0,7.6 L36.0,8.2 L37.0,8.7 L38.0,7.2 L39.0,8.0 L40.0,6.9 L41.0,7.5 L42.0,10.2 L43.0,8.5 L44.0,9.6 L45.0,8.1 L46.0,8.2 L47.0,10.2 L48.0,8.1 L49.0,9.4 L50.0,8.6 L51.0,9.3 L52.0,10.8 L53.0,9.8 L54.0,10.2 L55.0,11.5 L56.0,11.3 L57.0,11.6 L58.0,9.4 L59.0,10.7 L60.0,11.6 L61.0,11.3 L62.0,11.7 L63.0,11.6 L64.0,11.5 L65.0,11.4 L66.0,11.5 L67.0,10.3 L68.0,12.9 L69.0,12.0 L70.0,12.6 L71.0,10.9 L72.0,12.5 L73.0,13.0 L74.0,11.4 L75.0,13.2 L76.0,12.4 L77.0,12.3 L78.0,11.8 L79.0,13.2 L80.0,12.8 L81.0,13.5 L82.0,14.4 L83.0,12.6 L84.0,12.7 L85.0,12.8 L86.0,14.7 L87.0,13.3 L88.0,15.1 L89.0,15.2 L90.0,13.8 L91.0,14.1 L92.0,14.4 L93.0,13.7 L94.0,15.1 L95.0,14.7 L96.0,14.4 L97.0,15.3 L98.0,15.5 L99.0,14.7 L100.0,16.0 L101.0,15.4 L102.0,16.5 L103.0,15.6 L104.0,15.5 L105.0,16.6 L106.0,16.0 L107.0,15.6 L108.0,16.6 L109.0,17.6 L110.0,16.9 L111.0,16.4 L112.0,17.0 L113.0,17.9 L114.0,17.2 L115.0,17.9 L116.0,17.0 L117.0,18.5 L118.0,17.5 L119.0,18.5 L120.0,18.1 L121.0,18.2 L122.0,19.2 L123.0,19.1 L124.0,18.6 L125.0,18.8 L126.0,19.3 L127.0,19.4 L128.0,19.4 L129.0,19.1 L130.0,20.3 L131.0,19.7 L132.0,20.2 L133.0,20.0 L134.0,21.0 L135.0,20.4 L136.0,20.8 L137.0,21.3 L138.0,21.5 L139.0,21.3 L140.0,21.3 L141.0,21.5 L142.0,21.5 L143.0,21.6 L144.0,21.7 L145.0,21.7 L146.0,21.9 L147.0,22.8 L148.0,22.4 L149.0,23.1 L150.0,22.7 L151.0,22.7 L152.0,23.2 L153.0,23.6 L154.0,23.6 L155.0,23.8 L156.0,23.8 L157.0,24.4 L158.0,24.4 L159.0,24.6 L160.0,25.0 L161.0,25.1 L162.0,25.2 L163.0,25.5 L164.0,25.5 L165.0,25.8 L166.0,26.0 L167.0,26.3 L168.0,26.7 L169.0,26.6 L170.0,26.7 L171.0,26.7 L171.0,29.2 L170.0,29.2 L169.0,29.3 L168.0,29.2 L167.0,29.6 L166.0,29.9 L165.0,30.1 L164.0,30.4 L163.0,30.4 L162.0,30.7 L161.0,30.8 L160.0,30.9 L159.0,31.3 L158.0,31.5 L157.0,31.5 L156.0,32.1 L155.0,32.1 L154.0,32.3 L153.0,32.3 L152.0,32.7 L151.0,33.2 L150.0,33.2 L149.0,32.8 L148.0,33.5 L147.0,33.1 L146.0,34.0 L145.0,34.2 L144.0,34.2 L143.0,34.3 L142.0,34.4 L141.0,34.4 L140.0,34.6 L139.0,34.6 L138.0,34.4 L137.0,34.6 L136.0,35.1 L135.0,35.5 L134.0,34.9 L133.0,35.9 L132.0,35.7 L131.0,36.2 L130.0,35.6 L129.0,36.8 L128.0,36.5 L127.0,36.5 L126.0,36.6 L125.0,37.1 L124.0,37.3 L123.0,36.8 L122.0,36.7 L121.0,37.7 L120.0,37.8 L119.0,37.4 L118.0,38.4 L117.0,37.4 L116.0,38.9 L115.0,38.0 L114.0,38.7 L113.0,38.0 L112.0,38.9 L111.0,39.5 L110.0,39.0 L109.0,38.3 L108.0,39.3 L107.0,40.3 L106.0,39.9 L105.0,39.3 L104.0,40.4 L103.0,40.3 L102.0,39.4 L101.0,40.5 L100.0,39.9 L99.0,41.2 L98.0,40.4 L97.0,40.6 L96.0,41.5 L95.0,41.2 L94.0,40.8 L93.0,42.2 L92.0,41.5 L91.0,41.8 L90.0,42.1 L89.0,40.7 L88.0,40.8 L87.0,42.6 L86.0,41.2 L85.0,43.1 L84.0,43.2 L83.0,43.3 L82.0,41.5 L81.0,42.4 L80.0,43.1 L79.0,42.7 L78.0,44.1 L77.0,43.6 L76.0,43.5 L75.0,42.7 L74.0,44.5 L73.0,42.9 L72.0,43.4 L71.0,45.0 L70.0,43.3 L69.0,43.9 L68.0,43.0 L67.0,45.6 L66.0,44.4 L65.0,44.5 L64.0,44.4 L63.0,44.3 L62.0,44.2 L61.0,44.6 L60.0,44.3 L59.0,45.2 L58.0,46.5 L57.0,44.3 L56.0,44.6 L55.0,44.4 L54.0,45.7 L53.0,46.1 L52.0,45.1 L51.0,46.6 L50.0,47.3 L49.0,46.5 L48.0,47.8 L47.0,45.7 L46.0,47.7 L45.0,47.8 L44.0,46.3 L43.0,47.4 L42.0,45.7 L41.0,48.4 L40.0,49.0 L39.0,47.9 L38.0,48.7 L37.0,47.2 L36.0,47.7 L35.0,48.3 L34.0,47.4 L33.0,49.4 L32.0,48.9 L31.0,49.9 L30.0,47.8 L29.0,48.8 L28.0,49.5 L27.0,50.0 L26.0,48.5 L25.0,48.7 L24.0,49.5 L23.0,50.6 L22.0,49.3 L21.0,48.2 L20.0,48.9 L19.0,48.8 L18.0,48.4 L17.0,49.4 L16.0,51.0 L15.0,48.5 L14.0,50.6 L13.0,51.0 L12.0,51.6 L11.0,51.7 L10.0,50.0 L9.0,51.1 L8.0,50.9 L7.0,51.6 L6.0,50.6 L5.0,53.1 L4.0,51.6 L3.0,52.9 L2.0,51.7 L1.0,53.2 L0.0,51.7Z" fill="#102e1d" opacity="0.85"/><path d="M10 10L26 21L10 32z" fill="#246642" opacity="0.9"/></svg><div class="t" style="left:35px;top:1px;font-size:15.5px;line-height:19px;color:#f4f8ff">TolchaMS20 Sw07</div></div><div style="left:1922.5px;top:729.4000000000001px;width:175.5px;height:81.9px;background:#262626"></div><div style="left:1932.0px;top:761.9000000000001px;width:15.5px;height:15.5px;background:#474747"></div><div style="left:1922.5px;top:812.8000000000001px;width:175.5px;height:54.19999999999993px;background:#262626"></div><div style="left:1932.0px;top:845.3000000000001px;width:15.5px;height:15.5px;background:#474747"></div><div style="left:2099.5px;top:229.0px;width:175.5px;height:81.9px;background:#262626"></div><div style="left:2109.0px;top:261.5px;width:15.5px;height:15.5px;background:#474747"></div><div style="left:2099.5px;top:312.4px;width:175.5px;height:81.9px;background:#64c1d8;overflow:hidden"><svg width="175.5" height="81.9" style="position:absolute;left:0;top:0"><rect x="21.9" y="20" width="1.2" height="61.900000000000006" fill="rgba(0,0,0,0.08)"/><rect x="43.9" y="20" width="1.2" height="61.900000000000006" fill="rgba(0,0,0,0.13)"/><rect x="65.8" y="20" width="1.2" height="61.900000000000006" fill="rgba(0,0,0,0.08)"/><rect x="87.8" y="20" width="1.2" height="61.900000000000006" fill="rgba(0,0,0,0.13)"/><rect x="109.7" y="20" width="1.2" height="61.900000000000006" fill="rgba(0,0,0,0.08)"/><rect x="131.6" y="20" width="1.2" height="61.900000000000006" fill="rgba(0,0,0,0.13)"/><rect x="153.6" y="20" width="1.2" height="61.900000000000006" fill="rgba(0,0,0,0.08)"/><rect x="0" y="19" width="175.5" height="1" fill="rgba(0,0,0,0.10)"/><g fill="#1c363c" opacity="0.9"><rect x="17" y="27" width="15" height="3"/><rect x="47" y="27" width="12" height="3"/><rect x="105" y="27" width="12" height="3"/><rect x="149" y="27" width="15" height="3"/><rect x="17" y="42.6" width="15" height="3"/><rect x="47" y="42.6" width="12" height="3"/><rect x="105" y="42.6" width="12" height="3"/><rect x="149" y="42.6" width="15" height="3"/><rect x="46" y="49" width="7" height="3"/><rect x="134" y="49" width="8" height="3"/><rect x="2" y="57" width="12" height="3"/><rect x="34" y="57" width="5" height="3"/><rect x="90" y="57" width="10" height="3"/><rect x="122" y="57" width="5" height="3"/><rect x="78" y="71" width="5" height="3"/></g><path d="M10 9L30 20.5L10 32z" fill="#fff" stroke="#111" stroke-width="2"/><rect x="143.9" y="0" width="2.5" height="81.9" fill="#fff"/></svg><div class="t" style="left:35px;top:1px;font-size:15.5px;line-height:19px;color:#f4f8ff">Ballerina Birds</div></div><div style="left:2099.5px;top:395.8px;width:175.5px;height:81.9px;background:#262626"></div><div style="left:2109.0px;top:428.3px;width:15.5px;height:15.5px;background:#474747"></div><div style="left:2099.5px;top:479.20000000000005px;width:175.5px;height:81.9px;background:#3e9db6;overflow:hidden"><svg width="175.5" height="81.9" style="position:absolute;left:0;top:0"><rect x="21.9" y="20" width="1.2" height="61.900000000000006" fill="rgba(0,0,0,0.08)"/><rect x="43.9" y="20" width="1.2" height="61.900000000000006" fill="rgba(0,0,0,0.13)"/><rect x="65.8" y="20" width="1.2" height="61.900000000000006" fill="rgba(0,0,0,0.08)"/><rect x="87.8" y="20" width="1.2" height="61.900000000000006" fill="rgba(0,0,0,0.13)"/><rect x="109.7" y="20" width="1.2" height="61.900000000000006" fill="rgba(0,0,0,0.08)"/><rect x="131.6" y="20" width="1.2" height="61.900000000000006" fill="rgba(0,0,0,0.13)"/><rect x="153.6" y="20" width="1.2" height="61.900000000000006" fill="rgba(0,0,0,0.08)"/><rect x="0" y="19" width="175.5" height="1" fill="rgba(0,0,0,0.10)"/><g fill="#112b32"><rect x="70.5" y="37.6" width="2" height="3"/><rect x="32.3" y="39.9" width="2" height="3"/><rect x="130.8" y="40.0" width="2" height="3"/><rect x="66.9" y="60.8" width="2" height="3"/><rect x="93.3" y="72.9" width="2" height="3"/><rect x="84.9" y="48.2" width="2" height="3"/><rect x="105.9" y="38.4" width="2" height="3"/><rect x="154.9" y="45.9" width="2" height="3"/><rect x="67.8" y="60.7" width="2" height="3"/><rect x="27.8" y="59.6" width="2" height="3"/><rect x="146.1" y="44.2" width="2" height="3"/><rect x="162.5" y="53.3" width="2" height="3"/><rect x="133.3" y="50.5" width="2" height="3"/><rect x="70.2" y="40.9" width="2" height="3"/><rect x="3.3" y="37.8" width="2" height="3"/><rect x="169.7" y="53.6" width="2" height="3"/><rect x="80.3" y="71.1" width="2" height="3"/><rect x="104.6" y="74.8" width="2" height="3"/></g><path d="M10 10L26 21L10 32z" fill="#266170" opacity="0.9"/></svg><div class="t" style="left:35px;top:1px;font-size:15.5px;line-height:19px;color:#f4f8ff">Bird Machine</div></div><div style="left:2099.5px;top:562.6px;width:175.5px;height:81.9px;background:#3e9db6;overflow:hidden"><svg width="175.5" height="81.9" style="position:absolute;left:0;top:0"><rect x="21.9" y="20" width="1.2" height="61.900000000000006" fill="rgba(0,0,0,0.08)"/><rect x="43.9" y="20" width="1.2" height="61.900000000000006" fill="rgba(0,0,0,0.13)"/><rect x="65.8" y="20" width="1.2" height="61.900000000000006" fill="rgba(0,0,0,0.08)"/><rect x="87.8" y="20" width="1.2" height="61.900000000000006" fill="rgba(0,0,0,0.13)"/><rect x="109.7" y="20" width="1.2" height="61.900000000000006" fill="rgba(0,0,0,0.08)"/><rect x="131.6" y="20" width="1.2" height="61.900000000000006" fill="rgba(0,0,0,0.13)"/><rect x="153.6" y="20" width="1.2" height="61.900000000000006" fill="rgba(0,0,0,0.08)"/><rect x="0" y="19" width="175.5" height="1" fill="rgba(0,0,0,0.10)"/><g fill="#112b32" opacity="0.9"><rect x="46" y="23.4" width="5" height="3"/><rect x="117" y="23.4" width="17" height="3"/><rect x="149" y="23.4" width="24" height="3"/><rect x="75" y="27.4" width="13" height="3"/><rect x="105" y="27.4" width="5" height="3"/><rect x="128" y="27.4" width="8" height="3"/><rect x="19" y="39.4" width="5" height="3"/><rect x="29" y="39.4" width="10" height="3"/><rect x="95" y="39.4" width="12" height="3"/><rect x="55" y="47" width="3" height="3"/><rect x="103" y="47" width="3" height="3"/><rect x="165" y="47" width="6" height="3"/><rect x="55" y="56.6" width="13" height="3"/><rect x="72" y="56.6" width="6" height="3"/><rect x="124" y="56.6" width="6" height="3"/><rect x="143" y="56.6" width="6" height="3"/><rect x="14" y="64" width="3" height="3"/><rect x="131" y="64" width="3" height="3"/><rect x="153" y="64" width="6" height="3"/><rect x="2" y="71.5" width="6" height="3"/><rect x="24" y="71.5" width="5" height="3"/><rect x="46" y="71.5" width="6" height="3"/><rect x="112" y="71.5" width="6" height="3"/><rect x="143" y="71.5" width="6" height="3"/></g><path d="M10 10L26 21L10 32z" fill="#266170" opacity="0.9"/></svg><div class="t" style="left:35px;top:1px;font-size:15.5px;line-height:19px;color:#f4f8ff">Atmos Tools</div></div><div style="left:2099.5px;top:646.0px;width:175.5px;height:81.9px;background:#262626"></div><div style="left:2109.0px;top:678.5px;width:15.5px;height:15.5px;background:#474747"></div><div style="left:2099.5px;top:729.4000000000001px;width:175.5px;height:81.9px;background:#262626"></div><div style="left:2109.0px;top:761.9000000000001px;width:15.5px;height:15.5px;background:#474747"></div><div style="left:2099.5px;top:812.8000000000001px;width:175.5px;height:54.19999999999993px;background:#262626"></div><div style="left:2109.0px;top:845.3000000000001px;width:15.5px;height:15.5px;background:#474747"></div><div style="left:2276.5px;top:229.0px;width:175.5px;height:81.9px;background:#262626"></div><div style="left:2286.0px;top:261.5px;width:15.5px;height:15.5px;background:#474747"></div><div style="left:2276.5px;top:312.4px;width:175.5px;height:81.9px;background:#3d7b56;overflow:hidden"><svg width="175.5" height="81.9" style="position:absolute;left:0;top:0"><rect x="21.9" y="20" width="1.2" height="61.900000000000006" fill="rgba(0,0,0,0.08)"/><rect x="43.9" y="20" width="1.2" height="61.900000000000006" fill="rgba(0,0,0,0.13)"/><rect x="65.8" y="20" width="1.2" height="61.900000000000006" fill="rgba(0,0,0,0.08)"/><rect x="87.8" y="20" width="1.2" height="61.900000000000006" fill="rgba(0,0,0,0.13)"/><rect x="109.7" y="20" width="1.2" height="61.900000000000006" fill="rgba(0,0,0,0.08)"/><rect x="131.6" y="20" width="1.2" height="61.900000000000006" fill="rgba(0,0,0,0.13)"/><rect x="153.6" y="20" width="1.2" height="61.900000000000006" fill="rgba(0,0,0,0.08)"/><rect x="0" y="19" width="175.5" height="1" fill="rgba(0,0,0,0.10)"/><path transform="translate(2,24)" d="M0.0,14.0 L1.0,15.9 L2.0,17.8 L3.0,26.3 L4.0,9.4 L5.0,12.9 L6.0,13.9 L7.0,14.6 L8.0,17.2 L9.0,26.3 L10.0,26.3 L11.0,11.7 L12.0,13.1 L13.0,17.0 L14.0,26.3 L15.0,17.3 L16.0,17.4 L17.0,17.9 L18.0,19.7 L19.0,19.7 L20.0,20.0 L21.0,26.3 L22.0,26.3 L23.0,13.9 L24.0,17.2 L25.0,18.2 L26.0,26.3 L27.0,5.0 L28.0,8.4 L29.0,11.3 L30.0,13.9 L31.0,26.3 L32.0,26.3 L33.0,14.9 L34.0,14.3 L35.0,15.8 L36.0,16.5 L37.0,17.5 L38.0,18.9 L39.0,19.8 L40.0,26.3 L41.0,15.7 L42.0,17.1 L43.0,17.8 L44.0,17.9 L45.0,19.8 L46.0,19.4 L47.0,20.8 L48.0,26.3 L49.0,17.2 L50.0,18.4 L51.0,18.7 L52.0,20.3 L53.0,26.3 L54.0,16.1 L55.0,17.6 L56.0,18.8 L57.0,20.0 L58.0,26.3 L59.0,26.3 L60.0,26.3 L61.0,12.2 L62.0,13.2 L63.0,14.5 L64.0,26.3 L65.0,7.2 L66.0,8.3 L67.0,10.2 L68.0,11.7 L69.0,11.5 L70.0,12.8 L71.0,15.5 L72.0,26.3 L73.0,26.3 L74.0,12.2 L75.0,14.5 L76.0,26.3 L77.0,26.3 L78.0,16.8 L79.0,17.0 L80.0,17.6 L81.0,19.4 L82.0,19.6 L83.0,20.1 L84.0,26.3 L85.0,26.3 L86.0,10.9 L87.0,12.2 L88.0,14.3 L89.0,26.3 L90.0,26.3 L91.0,13.6 L92.0,14.4 L93.0,17.1 L94.0,17.9 L95.0,26.3 L96.0,13.1 L97.0,13.8 L98.0,16.1 L99.0,15.6 L100.0,17.7 L101.0,17.6 L102.0,18.8 L103.0,26.3 L104.0,26.3 L105.0,26.3 L106.0,21.4 L107.0,22.1 L108.0,22.7 L109.0,26.3 L110.0,26.3 L111.0,17.5 L112.0,18.1 L113.0,19.6 L114.0,20.0 L115.0,26.3 L116.0,20.8 L117.0,20.8 L118.0,21.8 L119.0,22.8 L120.0,26.3 L121.0,26.3 L122.0,17.5 L123.0,17.8 L124.0,19.4 L125.0,18.9 L126.0,20.8 L127.0,26.3 L128.0,26.3 L129.0,20.0 L130.0,20.9 L131.0,22.0 L132.0,21.9 L133.0,22.2 L134.0,23.1 L135.0,26.3 L136.0,14.6 L137.0,16.5 L138.0,18.4 L139.0,26.3 L140.0,16.5 L141.0,17.7 L142.0,19.5 L143.0,21.3 L144.0,26.3 L145.0,10.1 L146.0,12.7 L147.0,13.7 L148.0,16.2 L149.0,17.4 L150.0,26.3 L151.0,9.0 L152.0,13.2 L153.0,26.3 L154.0,26.3 L155.0,6.6 L156.0,9.9 L157.0,11.4 L158.0,26.3 L159.0,26.3 L160.0,20.2 L161.0,20.5 L162.0,21.5 L163.0,21.4 L164.0,22.4 L165.0,22.7 L166.0,26.3 L167.0,16.1 L168.0,17.1 L169.0,18.3 L170.0,19.4 L171.0,21.0 L171.0,34.9 L170.0,36.5 L169.0,37.6 L168.0,38.8 L167.0,39.8 L166.0,29.6 L165.0,33.2 L164.0,33.5 L163.0,34.5 L162.0,34.4 L161.0,35.4 L160.0,35.7 L159.0,29.6 L158.0,29.6 L157.0,44.5 L156.0,46.0 L155.0,49.3 L154.0,29.6 L153.0,29.6 L152.0,42.7 L151.0,46.9 L150.0,29.6 L149.0,38.5 L148.0,39.7 L147.0,42.2 L146.0,43.2 L145.0,45.8 L144.0,29.6 L143.0,34.6 L142.0,36.4 L141.0,38.2 L140.0,39.4 L139.0,29.6 L138.0,37.5 L137.0,39.4 L136.0,41.3 L135.0,29.6 L134.0,32.8 L133.0,33.7 L132.0,34.0 L131.0,33.9 L130.0,35.0 L129.0,35.9 L128.0,29.6 L127.0,29.6 L126.0,35.1 L125.0,37.0 L124.0,36.5 L123.0,38.1 L122.0,38.4 L121.0,29.6 L120.0,29.6 L119.0,33.1 L118.0,34.1 L117.0,35.1 L116.0,35.1 L115.0,29.6 L114.0,35.9 L113.0,36.3 L112.0,37.8 L111.0,38.4 L110.0,29.6 L109.0,29.6 L108.0,33.2 L107.0,33.8 L106.0,34.5 L105.0,29.6 L104.0,29.6 L103.0,29.6 L102.0,37.1 L101.0,38.3 L100.0,38.2 L99.0,40.3 L98.0,39.8 L97.0,42.1 L96.0,42.8 L95.0,29.6 L94.0,38.0 L93.0,38.8 L92.0,41.5 L91.0,42.3 L90.0,29.6 L89.0,29.6 L88.0,41.6 L87.0,43.7 L86.0,45.0 L85.0,29.6 L84.0,29.6 L83.0,35.8 L82.0,36.3 L81.0,36.5 L80.0,38.3 L79.0,38.9 L78.0,39.1 L77.0,29.6 L76.0,29.6 L75.0,41.4 L74.0,43.7 L73.0,29.6 L72.0,29.6 L71.0,40.4 L70.0,43.1 L69.0,44.4 L68.0,44.2 L67.0,45.7 L66.0,47.6 L65.0,48.7 L64.0,29.6 L63.0,41.4 L62.0,42.7 L61.0,43.7 L60.0,29.6 L59.0,29.6 L58.0,29.6 L57.0,35.9 L56.0,37.1 L55.0,38.3 L54.0,39.8 L53.0,29.6 L52.0,35.6 L51.0,37.2 L50.0,37.5 L49.0,38.7 L48.0,29.6 L47.0,35.1 L46.0,36.5 L45.0,36.1 L44.0,38.0 L43.0,38.1 L42.0,38.8 L41.0,40.2 L40.0,29.6 L39.0,36.1 L38.0,37.0 L37.0,38.4 L36.0,39.4 L35.0,40.1 L34.0,41.6 L33.0,41.0 L32.0,29.6 L31.0,29.6 L30.0,42.0 L29.0,44.6 L28.0,47.5 L27.0,50.9 L26.0,29.6 L25.0,37.7 L24.0,38.7 L23.0,42.0 L22.0,29.6 L21.0,29.6 L20.0,35.9 L19.0,36.2 L18.0,36.2 L17.0,38.0 L16.0,38.5 L15.0,38.6 L14.0,29.6 L13.0,38.9 L12.0,42.8 L11.0,44.2 L10.0,29.6 L9.0,29.6 L8.0,38.7 L7.0,41.3 L6.0,42.0 L5.0,43.0 L4.0,46.5 L3.0,29.6 L2.0,38.1 L1.0,40.0 L0.0,41.9Z" fill="#112218" opacity="0.85"/><path d="M10 10L26 21L10 32z" fill="#254c35" opacity="0.9"/></svg><div class="t" style="left:35px;top:1px;font-size:15.5px;line-height:19px;color:#f4f8ff">AcidoAmigoRe</div></div><div style="left:2276.5px;top:395.8px;width:175.5px;height:81.9px;background:#262626"></div><div style="left:2286.0px;top:428.3px;width:15.5px;height:15.5px;background:#474747"></div><div style="left:2276.5px;top:479.20000000000005px;width:175.5px;height:81.9px;background:#3b80d0;overflow:hidden"><svg width="175.5" height="81.9" style="position:absolute;left:0;top:0"><rect x="21.9" y="20" width="1.2" height="61.900000000000006" fill="rgba(0,0,0,0.08)"/><rect x="43.9" y="20" width="1.2" height="61.900000000000006" fill="rgba(0,0,0,0.13)"/><rect x="65.8" y="20" width="1.2" height="61.900000000000006" fill="rgba(0,0,0,0.08)"/><rect x="87.8" y="20" width="1.2" height="61.900000000000006" fill="rgba(0,0,0,0.13)"/><rect x="109.7" y="20" width="1.2" height="61.900000000000006" fill="rgba(0,0,0,0.08)"/><rect x="131.6" y="20" width="1.2" height="61.900000000000006" fill="rgba(0,0,0,0.13)"/><rect x="153.6" y="20" width="1.2" height="61.900000000000006" fill="rgba(0,0,0,0.08)"/><rect x="0" y="19" width="175.5" height="1" fill="rgba(0,0,0,0.10)"/><path transform="translate(2,24)" d="M0.0,16.6 L1.0,17.8 L2.0,17.9 L3.0,18.1 L4.0,19.1 L5.0,20.7 L6.0,20.9 L7.0,26.3 L8.0,15.1 L9.0,14.7 L10.0,16.9 L11.0,16.7 L12.0,18.2 L13.0,26.3 L14.0,26.3 L15.0,11.6 L16.0,10.8 L17.0,13.5 L18.0,14.1 L19.0,14.8 L20.0,17.1 L21.0,26.3 L22.0,26.3 L23.0,11.4 L24.0,12.9 L25.0,15.7 L26.0,26.3 L27.0,26.3 L28.0,16.6 L29.0,18.9 L30.0,20.4 L31.0,26.3 L32.0,9.5 L33.0,12.4 L34.0,11.3 L35.0,13.6 L36.0,14.2 L37.0,15.1 L38.0,16.9 L39.0,26.3 L40.0,17.1 L41.0,17.0 L42.0,18.2 L43.0,18.2 L44.0,19.6 L45.0,20.3 L46.0,26.3 L47.0,26.3 L48.0,26.3 L49.0,14.6 L50.0,15.0 L51.0,15.6 L52.0,17.2 L53.0,17.5 L54.0,18.4 L55.0,19.4 L56.0,26.3 L57.0,7.5 L58.0,14.0 L59.0,26.3 L60.0,5.7 L61.0,6.4 L62.0,8.2 L63.0,10.0 L64.0,12.8 L65.0,13.7 L66.0,14.6 L67.0,26.3 L68.0,9.9 L69.0,12.1 L70.0,13.2 L71.0,15.8 L72.0,26.3 L73.0,26.3 L74.0,15.1 L75.0,14.6 L76.0,16.7 L77.0,17.6 L78.0,26.3 L79.0,26.3 L80.0,13.5 L81.0,14.6 L82.0,16.6 L83.0,17.5 L84.0,18.6 L85.0,26.3 L86.0,26.3 L87.0,26.3 L88.0,10.7 L89.0,14.6 L90.0,26.3 L91.0,26.3 L92.0,26.3 L93.0,6.7 L94.0,7.7 L95.0,11.1 L96.0,11.5 L97.0,13.5 L98.0,26.3 L99.0,26.3 L100.0,21.0 L101.0,21.8 L102.0,22.3 L103.0,23.3 L104.0,26.3 L105.0,26.3 L106.0,17.7 L107.0,17.5 L108.0,18.4 L109.0,19.8 L110.0,26.3 L111.0,15.3 L112.0,15.2 L113.0,17.1 L114.0,17.6 L115.0,26.3 L116.0,26.3 L117.0,26.3 L118.0,16.5 L119.0,18.7 L120.0,18.8 L121.0,20.2 L122.0,26.3 L123.0,26.3 L124.0,16.6 L125.0,16.5 L126.0,18.5 L127.0,18.3 L128.0,19.3 L129.0,19.7 L130.0,21.0 L131.0,26.3 L132.0,10.5 L133.0,12.2 L134.0,14.1 L135.0,16.0 L136.0,26.3 L137.0,26.3 L138.0,26.3 L139.0,12.2 L140.0,14.9 L141.0,26.3 L142.0,26.3 L143.0,26.3 L144.0,10.2 L145.0,12.0 L146.0,14.2 L147.0,14.2 L148.0,16.8 L149.0,26.3 L150.0,26.3 L151.0,20.5 L152.0,20.9 L153.0,21.4 L154.0,22.9 L155.0,26.3 L156.0,26.3 L157.0,15.4 L158.0,16.0 L159.0,17.0 L160.0,18.1 L161.0,19.0 L162.0,18.9 L163.0,26.3 L164.0,17.2 L165.0,18.3 L166.0,18.8 L167.0,20.9 L168.0,26.3 L169.0,16.7 L170.0,16.3 L171.0,17.5 L171.0,38.4 L170.0,39.6 L169.0,39.2 L168.0,29.6 L167.0,35.0 L166.0,37.1 L165.0,37.6 L164.0,38.7 L163.0,29.6 L162.0,37.0 L161.0,36.9 L160.0,37.8 L159.0,38.9 L158.0,39.9 L157.0,40.5 L156.0,29.6 L155.0,29.6 L154.0,33.0 L153.0,34.5 L152.0,35.0 L151.0,35.4 L150.0,29.6 L149.0,29.6 L148.0,39.1 L147.0,41.7 L146.0,41.7 L145.0,43.9 L144.0,45.7 L143.0,29.6 L142.0,29.6 L141.0,29.6 L140.0,41.0 L139.0,43.7 L138.0,29.6 L137.0,29.6 L136.0,29.6 L135.0,39.9 L134.0,41.8 L133.0,43.7 L132.0,45.4 L131.0,29.6 L130.0,34.9 L129.0,36.2 L128.0,36.6 L127.0,37.6 L126.0,37.4 L125.0,39.4 L124.0,39.3 L123.0,29.6 L122.0,29.6 L121.0,35.7 L120.0,37.1 L119.0,37.2 L118.0,39.4 L117.0,29.6 L116.0,29.6 L115.0,29.6 L114.0,38.3 L113.0,38.8 L112.0,40.7 L111.0,40.6 L110.0,29.6 L109.0,36.1 L108.0,37.5 L107.0,38.4 L106.0,38.2 L105.0,29.6 L104.0,29.6 L103.0,32.6 L102.0,33.6 L101.0,34.1 L100.0,34.9 L99.0,29.6 L98.0,29.6 L97.0,42.4 L96.0,44.4 L95.0,44.8 L94.0,48.2 L93.0,49.2 L92.0,29.6 L91.0,29.6 L90.0,29.6 L89.0,41.3 L88.0,45.2 L87.0,29.6 L86.0,29.6 L85.0,29.6 L84.0,37.3 L83.0,38.4 L82.0,39.3 L81.0,41.3 L80.0,42.4 L79.0,29.6 L78.0,29.6 L77.0,38.3 L76.0,39.2 L75.0,41.3 L74.0,40.8 L73.0,29.6 L72.0,29.6 L71.0,40.1 L70.0,42.7 L69.0,43.8 L68.0,46.0 L67.0,29.6 L66.0,41.3 L65.0,42.2 L64.0,43.1 L63.0,45.9 L62.0,47.7 L61.0,49.5 L60.0,50.2 L59.0,29.6 L58.0,41.9 L57.0,48.4 L56.0,29.6 L55.0,36.5 L54.0,37.5 L53.0,38.4 L52.0,38.7 L51.0,40.3 L50.0,40.9 L49.0,41.3 L48.0,29.6 L47.0,29.6 L46.0,29.6 L45.0,35.6 L44.0,36.3 L43.0,37.7 L42.0,37.7 L41.0,38.9 L40.0,38.8 L39.0,29.6 L38.0,39.0 L37.0,40.8 L36.0,41.7 L35.0,42.3 L34.0,44.6 L33.0,43.5 L32.0,46.4 L31.0,29.6 L30.0,35.5 L29.0,37.0 L28.0,39.3 L27.0,29.6 L26.0,29.6 L25.0,40.2 L24.0,43.0 L23.0,44.5 L22.0,29.6 L21.0,29.6 L20.0,38.8 L19.0,41.1 L18.0,41.8 L17.0,42.4 L16.0,45.1 L15.0,44.3 L14.0,29.6 L13.0,29.6 L12.0,37.7 L11.0,39.2 L10.0,39.0 L9.0,41.2 L8.0,40.8 L7.0,29.6 L6.0,35.0 L5.0,35.2 L4.0,36.8 L3.0,37.8 L2.0,38.0 L1.0,38.1 L0.0,39.3Z" fill="#10233a" opacity="0.85"/><path d="M10 9L30 20.5L10 32z" fill="#fff" stroke="#111" stroke-width="2"/><rect x="140.4" y="0" width="2.5" height="81.9" fill="#fff"/></svg><div class="t" style="left:35px;top:1px;font-size:15.5px;line-height:19px;color:#f4f8ff">AcidoAmigoRe</div></div><div style="left:2276.5px;top:562.6px;width:175.5px;height:81.9px;background:#262626"></div><div style="left:2286.0px;top:595.1px;width:15.5px;height:15.5px;background:#474747"></div><div style="left:2276.5px;top:646.0px;width:175.5px;height:81.9px;background:#262626"></div><div style="left:2286.0px;top:678.5px;width:15.5px;height:15.5px;background:#474747"></div><div style="left:2276.5px;top:729.4000000000001px;width:175.5px;height:81.9px;background:#262626"></div><div style="left:2286.0px;top:761.9000000000001px;width:15.5px;height:15.5px;background:#474747"></div><div style="left:2276.5px;top:812.8000000000001px;width:175.5px;height:54.19999999999993px;background:#262626"></div><div style="left:2286.0px;top:845.3000000000001px;width:15.5px;height:15.5px;background:#474747"></div><div style="left:2453.5px;top:229.0px;width:175.5px;height:81.9px;background:#262626"></div><div style="left:2464.5px;top:261.0px;width:16px;height:16px;background:#9a9a9a;border-radius:50%"></div><div style="left:2453.5px;top:312.4px;width:175.5px;height:81.9px;background:#262626"></div><div style="left:2464.5px;top:344.4px;width:16px;height:16px;background:#9a9a9a;border-radius:50%"></div><div style="left:2453.5px;top:395.8px;width:175.5px;height:81.9px;background:#e38b26;overflow:hidden"><svg width="175.5" height="81.9" style="position:absolute;left:0;top:0"><rect x="21.9" y="20" width="1.2" height="61.900000000000006" fill="rgba(0,0,0,0.08)"/><rect x="43.9" y="20" width="1.2" height="61.900000000000006" fill="rgba(0,0,0,0.13)"/><rect x="65.8" y="20" width="1.2" height="61.900000000000006" fill="rgba(0,0,0,0.08)"/><rect x="87.8" y="20" width="1.2" height="61.900000000000006" fill="rgba(0,0,0,0.13)"/><rect x="109.7" y="20" width="1.2" height="61.900000000000006" fill="rgba(0,0,0,0.08)"/><rect x="131.6" y="20" width="1.2" height="61.900000000000006" fill="rgba(0,0,0,0.13)"/><rect x="153.6" y="20" width="1.2" height="61.900000000000006" fill="rgba(0,0,0,0.08)"/><rect x="0" y="19" width="175.5" height="1" fill="rgba(0,0,0,0.10)"/><path transform="translate(2,24)" d="M0.0,22.2 L1.0,11.2 L2.0,10.3 L3.0,10.6 L4.0,9.6 L5.0,11.6 L6.0,10.7 L7.0,12.4 L8.0,10.8 L9.0,11.2 L10.0,13.0 L11.0,12.1 L12.0,11.8 L13.0,12.8 L14.0,13.0 L15.0,12.0 L16.0,14.4 L17.0,13.5 L18.0,14.5 L19.0,14.3 L20.0,14.7 L21.0,13.3 L22.0,15.1 L23.0,13.7 L24.0,14.3 L25.0,15.5 L26.0,15.4 L27.0,16.4 L28.0,15.6 L29.0,15.5 L30.0,15.3 L31.0,16.1 L32.0,17.3 L33.0,16.1 L34.0,16.8 L35.0,17.1 L36.0,17.1 L37.0,18.1 L38.0,17.3 L39.0,18.3 L40.0,18.9 L41.0,18.9 L42.0,18.2 L43.0,21.0 L44.0,10.2 L45.0,11.7 L46.0,11.2 L47.0,9.8 L48.0,10.4 L49.0,11.1 L50.0,12.0 L51.0,11.3 L52.0,12.2 L53.0,11.8 L54.0,13.1 L55.0,13.5 L56.0,11.7 L57.0,12.1 L58.0,14.0 L59.0,12.4 L60.0,13.0 L61.0,14.8 L62.0,13.1 L63.0,14.9 L64.0,14.9 L65.0,15.2 L66.0,13.7 L67.0,15.0 L68.0,14.4 L69.0,15.2 L70.0,15.3 L71.0,16.2 L72.0,15.5 L73.0,15.8 L74.0,16.5 L75.0,16.8 L76.0,17.4 L77.0,17.3 L78.0,17.9 L79.0,16.8 L80.0,17.9 L81.0,18.3 L82.0,18.6 L83.0,19.0 L84.0,18.3 L85.0,19.0 L86.0,19.4 L87.0,10.4 L88.0,9.8 L89.0,9.2 L90.0,9.5 L91.0,10.5 L92.0,11.2 L93.0,12.3 L94.0,10.3 L95.0,11.7 L96.0,10.8 L97.0,11.3 L98.0,12.0 L99.0,12.9 L100.0,13.1 L101.0,13.5 L102.0,14.2 L103.0,12.9 L104.0,14.2 L105.0,14.5 L106.0,15.2 L107.0,13.8 L108.0,14.0 L109.0,13.9 L110.0,14.0 L111.0,14.6 L112.0,16.4 L113.0,14.7 L114.0,15.1 L115.0,16.8 L116.0,16.7 L117.0,16.1 L118.0,16.4 L119.0,17.8 L120.0,16.2 L121.0,18.1 L122.0,17.8 L123.0,17.5 L124.0,18.0 L125.0,18.6 L126.0,18.9 L127.0,18.9 L128.0,19.5 L129.0,17.2 L130.0,9.6 L131.0,9.9 L132.0,11.4 L133.0,11.4 L134.0,10.7 L135.0,10.1 L136.0,10.9 L137.0,12.4 L138.0,12.7 L139.0,13.2 L140.0,11.6 L141.0,12.7 L142.0,11.9 L143.0,11.8 L144.0,12.0 L145.0,14.4 L146.0,13.3 L147.0,14.8 L148.0,13.8 L149.0,15.0 L150.0,14.8 L151.0,15.6 L152.0,14.3 L153.0,14.2 L154.0,14.3 L155.0,14.7 L156.0,14.9 L157.0,16.1 L158.0,15.9 L159.0,16.3 L160.0,16.9 L161.0,16.7 L162.0,17.3 L163.0,16.5 L164.0,17.1 L165.0,17.0 L166.0,17.5 L167.0,18.1 L168.0,18.8 L169.0,19.1 L170.0,19.2 L171.0,19.0 L171.0,36.9 L170.0,36.7 L169.0,36.8 L168.0,37.1 L167.0,37.8 L166.0,38.4 L165.0,38.9 L164.0,38.8 L163.0,39.4 L162.0,38.6 L161.0,39.2 L160.0,39.0 L159.0,39.6 L158.0,40.0 L157.0,39.8 L156.0,41.0 L155.0,41.2 L154.0,41.6 L153.0,41.7 L152.0,41.6 L151.0,40.3 L150.0,41.1 L149.0,40.9 L148.0,42.1 L147.0,41.1 L146.0,42.6 L145.0,41.5 L144.0,43.9 L143.0,44.1 L142.0,44.0 L141.0,43.2 L140.0,44.3 L139.0,42.7 L138.0,43.2 L137.0,43.5 L136.0,45.0 L135.0,45.8 L134.0,45.2 L133.0,44.5 L132.0,44.5 L131.0,46.0 L130.0,46.3 L129.0,38.7 L128.0,36.4 L127.0,37.0 L126.0,37.0 L125.0,37.3 L124.0,37.9 L123.0,38.4 L122.0,38.1 L121.0,37.8 L120.0,39.7 L119.0,38.1 L118.0,39.5 L117.0,39.8 L116.0,39.2 L115.0,39.1 L114.0,40.8 L113.0,41.2 L112.0,39.5 L111.0,41.3 L110.0,41.9 L109.0,42.0 L108.0,41.9 L107.0,42.1 L106.0,40.7 L105.0,41.4 L104.0,41.7 L103.0,43.0 L102.0,41.7 L101.0,42.4 L100.0,42.8 L99.0,43.0 L98.0,43.9 L97.0,44.6 L96.0,45.1 L95.0,44.2 L94.0,45.6 L93.0,43.6 L92.0,44.7 L91.0,45.4 L90.0,46.4 L89.0,46.7 L88.0,46.1 L87.0,45.5 L86.0,36.5 L85.0,36.9 L84.0,37.6 L83.0,36.9 L82.0,37.3 L81.0,37.6 L80.0,38.0 L79.0,39.1 L78.0,38.0 L77.0,38.6 L76.0,38.5 L75.0,39.1 L74.0,39.4 L73.0,40.1 L72.0,40.4 L71.0,39.7 L70.0,40.6 L69.0,40.7 L68.0,41.5 L67.0,40.9 L66.0,42.2 L65.0,40.7 L64.0,41.0 L63.0,41.0 L62.0,42.8 L61.0,41.1 L60.0,42.9 L59.0,43.5 L58.0,41.9 L57.0,43.8 L56.0,44.2 L55.0,42.4 L54.0,42.8 L53.0,44.1 L52.0,43.7 L51.0,44.6 L50.0,43.9 L49.0,44.8 L48.0,45.5 L47.0,46.1 L46.0,44.7 L45.0,44.2 L44.0,45.7 L43.0,34.9 L42.0,37.7 L41.0,37.0 L40.0,37.0 L39.0,37.6 L38.0,38.6 L37.0,37.8 L36.0,38.8 L35.0,38.8 L34.0,39.1 L33.0,39.8 L32.0,38.6 L31.0,39.8 L30.0,40.6 L29.0,40.4 L28.0,40.3 L27.0,39.5 L26.0,40.5 L25.0,40.4 L24.0,41.6 L23.0,42.2 L22.0,40.8 L21.0,42.6 L20.0,41.2 L19.0,41.6 L18.0,41.4 L17.0,42.4 L16.0,41.5 L15.0,43.9 L14.0,42.9 L13.0,43.1 L12.0,44.1 L11.0,43.8 L10.0,42.9 L9.0,44.7 L8.0,45.1 L7.0,43.5 L6.0,45.2 L5.0,44.3 L4.0,46.3 L3.0,45.3 L2.0,45.6 L1.0,44.7 L0.0,33.7Z" fill="#3f260a" opacity="0.85"/><path d="M10 10L26 21L10 32z" fill="#8c5617" opacity="0.9"/></svg><div class="t" style="left:35px;top:1px;font-size:15.5px;line-height:19px;color:#2a1a08">TenderWurliChor1</div></div><div style="left:2453.5px;top:479.20000000000005px;width:175.5px;height:81.9px;background:#262626"></div><div style="left:2464.5px;top:511.20000000000005px;width:16px;height:16px;background:#9a9a9a;border-radius:50%"></div><div style="left:2453.5px;top:562.6px;width:175.5px;height:81.9px;background:#e38b26;overflow:hidden"><svg width="175.5" height="81.9" style="position:absolute;left:0;top:0"><rect x="21.9" y="20" width="1.2" height="61.900000000000006" fill="rgba(0,0,0,0.08)"/><rect x="43.9" y="20" width="1.2" height="61.900000000000006" fill="rgba(0,0,0,0.13)"/><rect x="65.8" y="20" width="1.2" height="61.900000000000006" fill="rgba(0,0,0,0.08)"/><rect x="87.8" y="20" width="1.2" height="61.900000000000006" fill="rgba(0,0,0,0.13)"/><rect x="109.7" y="20" width="1.2" height="61.900000000000006" fill="rgba(0,0,0,0.08)"/><rect x="131.6" y="20" width="1.2" height="61.900000000000006" fill="rgba(0,0,0,0.13)"/><rect x="153.6" y="20" width="1.2" height="61.900000000000006" fill="rgba(0,0,0,0.08)"/><rect x="0" y="19" width="175.5" height="1" fill="rgba(0,0,0,0.10)"/><path transform="translate(2,24)" d="M0.0,22.6 L1.0,9.1 L2.0,9.9 L3.0,9.2 L4.0,10.8 L5.0,11.5 L6.0,11.8 L7.0,11.8 L8.0,11.0 L9.0,10.5 L10.0,12.3 L11.0,11.5 L12.0,11.3 L13.0,12.1 L14.0,12.5 L15.0,12.8 L16.0,14.0 L17.0,14.5 L18.0,14.3 L19.0,13.6 L20.0,13.2 L21.0,13.3 L22.0,13.9 L23.0,15.7 L24.0,15.1 L25.0,14.4 L26.0,14.5 L27.0,16.5 L28.0,15.0 L29.0,16.3 L30.0,15.4 L31.0,17.2 L32.0,17.3 L33.0,17.1 L34.0,17.4 L35.0,17.3 L36.0,18.2 L37.0,17.6 L38.0,18.1 L39.0,18.8 L40.0,18.1 L41.0,18.0 L42.0,19.3 L43.0,21.1 L44.0,9.0 L45.0,9.0 L46.0,11.0 L47.0,9.3 L48.0,11.7 L49.0,11.5 L50.0,12.1 L51.0,11.4 L52.0,11.2 L53.0,11.3 L54.0,12.4 L55.0,11.2 L56.0,11.8 L57.0,13.7 L58.0,12.2 L59.0,12.4 L60.0,13.4 L61.0,14.6 L62.0,13.1 L63.0,14.8 L64.0,15.1 L65.0,14.5 L66.0,15.4 L67.0,14.1 L68.0,15.2 L69.0,16.0 L70.0,15.2 L71.0,15.9 L72.0,16.6 L73.0,15.5 L74.0,16.4 L75.0,16.3 L76.0,17.2 L77.0,16.4 L78.0,18.0 L79.0,16.7 L80.0,17.1 L81.0,18.2 L82.0,18.1 L83.0,18.3 L84.0,18.2 L85.0,18.8 L86.0,18.7 L87.0,9.8 L88.0,10.8 L89.0,9.8 L90.0,9.5 L91.0,12.3 L92.0,12.5 L93.0,10.6 L94.0,10.9 L95.0,10.8 L96.0,11.7 L97.0,11.8 L98.0,13.3 L99.0,11.8 L100.0,11.7 L101.0,12.1 L102.0,12.6 L103.0,14.0 L104.0,13.4 L105.0,14.7 L106.0,13.8 L107.0,14.2 L108.0,15.3 L109.0,13.8 L110.0,14.8 L111.0,15.5 L112.0,15.3 L113.0,16.4 L114.0,15.7 L115.0,15.4 L116.0,16.3 L117.0,16.9 L118.0,17.3 L119.0,17.4 L120.0,16.3 L121.0,16.6 L122.0,18.0 L123.0,17.3 L124.0,18.4 L125.0,18.4 L126.0,18.3 L127.0,18.5 L128.0,18.6 L129.0,17.7 L130.0,8.8 L131.0,11.1 L132.0,11.0 L133.0,10.6 L134.0,11.2 L135.0,11.4 L136.0,10.7 L137.0,11.1 L138.0,11.9 L139.0,12.1 L140.0,12.6 L141.0,12.3 L142.0,13.4 L143.0,13.4 L144.0,12.4 L145.0,12.6 L146.0,14.2 L147.0,13.8 L148.0,13.9 L149.0,13.8 L150.0,14.5 L151.0,15.5 L152.0,15.0 L153.0,14.8 L154.0,14.9 L155.0,16.4 L156.0,16.0 L157.0,15.9 L158.0,15.8 L159.0,16.1 L160.0,16.2 L161.0,16.8 L162.0,16.2 L163.0,17.2 L164.0,18.1 L165.0,16.9 L166.0,17.0 L167.0,18.0 L168.0,18.2 L169.0,18.9 L170.0,18.4 L171.0,18.3 L171.0,37.6 L170.0,37.5 L169.0,37.0 L168.0,37.7 L167.0,37.9 L166.0,38.9 L165.0,39.0 L164.0,37.8 L163.0,38.7 L162.0,39.7 L161.0,39.1 L160.0,39.7 L159.0,39.8 L158.0,40.1 L157.0,40.0 L156.0,39.9 L155.0,39.5 L154.0,41.0 L153.0,41.1 L152.0,40.9 L151.0,40.4 L150.0,41.4 L149.0,42.1 L148.0,42.0 L147.0,42.1 L146.0,41.7 L145.0,43.3 L144.0,43.5 L143.0,42.5 L142.0,42.5 L141.0,43.6 L140.0,43.3 L139.0,43.8 L138.0,44.0 L137.0,44.8 L136.0,45.2 L135.0,44.5 L134.0,44.7 L133.0,45.3 L132.0,44.9 L131.0,44.8 L130.0,47.1 L129.0,38.2 L128.0,37.3 L127.0,37.4 L126.0,37.6 L125.0,37.5 L124.0,37.5 L123.0,38.6 L122.0,37.9 L121.0,39.3 L120.0,39.6 L119.0,38.5 L118.0,38.6 L117.0,39.0 L116.0,39.6 L115.0,40.5 L114.0,40.2 L113.0,39.5 L112.0,40.6 L111.0,40.4 L110.0,41.1 L109.0,42.1 L108.0,40.6 L107.0,41.7 L106.0,42.1 L105.0,41.2 L104.0,42.5 L103.0,41.9 L102.0,43.3 L101.0,43.8 L100.0,44.2 L99.0,44.1 L98.0,42.6 L97.0,44.1 L96.0,44.2 L95.0,45.1 L94.0,45.0 L93.0,45.3 L92.0,43.4 L91.0,43.6 L90.0,46.4 L89.0,46.1 L88.0,45.1 L87.0,46.1 L86.0,37.2 L85.0,37.1 L84.0,37.7 L83.0,37.6 L82.0,37.8 L81.0,37.7 L80.0,38.8 L79.0,39.2 L78.0,37.9 L77.0,39.5 L76.0,38.7 L75.0,39.6 L74.0,39.5 L73.0,40.4 L72.0,39.3 L71.0,40.0 L70.0,40.7 L69.0,39.9 L68.0,40.7 L67.0,41.8 L66.0,40.5 L65.0,41.4 L64.0,40.8 L63.0,41.1 L62.0,42.8 L61.0,41.3 L60.0,42.5 L59.0,43.5 L58.0,43.7 L57.0,42.2 L56.0,44.1 L55.0,44.7 L54.0,43.5 L53.0,44.6 L52.0,44.7 L51.0,44.5 L50.0,43.8 L49.0,44.4 L48.0,44.2 L47.0,46.6 L46.0,44.9 L45.0,46.9 L44.0,46.9 L43.0,34.8 L42.0,36.6 L41.0,37.9 L40.0,37.8 L39.0,37.1 L38.0,37.8 L37.0,38.3 L36.0,37.7 L35.0,38.6 L34.0,38.5 L33.0,38.8 L32.0,38.6 L31.0,38.7 L30.0,40.5 L29.0,39.6 L28.0,40.9 L27.0,39.4 L26.0,41.4 L25.0,41.5 L24.0,40.8 L23.0,40.2 L22.0,42.0 L21.0,42.6 L20.0,42.7 L19.0,42.3 L18.0,41.6 L17.0,41.4 L16.0,41.9 L15.0,43.1 L14.0,43.4 L13.0,43.8 L12.0,44.6 L11.0,44.4 L10.0,43.6 L9.0,45.4 L8.0,44.9 L7.0,44.1 L6.0,44.1 L5.0,44.4 L4.0,45.1 L3.0,46.7 L2.0,46.0 L1.0,46.8 L0.0,33.3Z" fill="#3f260a" opacity="0.85"/><path d="M10 10L26 21L10 32z" fill="#8c5617" opacity="0.9"/></svg><div class="t" style="left:35px;top:1px;font-size:15.5px;line-height:19px;color:#2a1a08">TenderWurliChor1</div></div><div style="left:2453.5px;top:646.0px;width:175.5px;height:81.9px;background:#f6a646;overflow:hidden"><svg width="175.5" height="81.9" style="position:absolute;left:0;top:0"><rect x="21.9" y="20" width="1.2" height="61.900000000000006" fill="rgba(0,0,0,0.08)"/><rect x="43.9" y="20" width="1.2" height="61.900000000000006" fill="rgba(0,0,0,0.13)"/><rect x="65.8" y="20" width="1.2" height="61.900000000000006" fill="rgba(0,0,0,0.08)"/><rect x="87.8" y="20" width="1.2" height="61.900000000000006" fill="rgba(0,0,0,0.13)"/><rect x="109.7" y="20" width="1.2" height="61.900000000000006" fill="rgba(0,0,0,0.08)"/><rect x="131.6" y="20" width="1.2" height="61.900000000000006" fill="rgba(0,0,0,0.13)"/><rect x="153.6" y="20" width="1.2" height="61.900000000000006" fill="rgba(0,0,0,0.08)"/><rect x="0" y="19" width="175.5" height="1" fill="rgba(0,0,0,0.10)"/><path transform="translate(2,24)" d="M0.0,22.8 L1.0,10.4 L2.0,11.0 L3.0,10.7 L4.0,10.4 L5.0,9.9 L6.0,11.5 L7.0,12.4 L8.0,12.6 L9.0,12.7 L10.0,12.9 L11.0,12.0 L12.0,11.8 L13.0,11.5 L14.0,12.5 L15.0,12.7 L16.0,14.4 L17.0,13.7 L18.0,13.8 L19.0,13.3 L20.0,13.5 L21.0,14.6 L22.0,15.0 L23.0,13.7 L24.0,15.1 L25.0,14.3 L26.0,16.2 L27.0,15.4 L28.0,14.9 L29.0,16.0 L30.0,15.4 L31.0,15.7 L32.0,16.7 L33.0,16.7 L34.0,16.9 L35.0,16.9 L36.0,18.0 L37.0,17.7 L38.0,18.5 L39.0,18.6 L40.0,18.6 L41.0,19.2 L42.0,18.4 L43.0,21.4 L44.0,10.4 L45.0,9.0 L46.0,9.4 L47.0,9.9 L48.0,11.2 L49.0,10.4 L50.0,12.6 L51.0,11.5 L52.0,13.0 L53.0,11.9 L54.0,13.1 L55.0,11.9 L56.0,12.8 L57.0,13.6 L58.0,12.5 L59.0,14.2 L60.0,14.3 L61.0,13.5 L62.0,14.7 L63.0,13.5 L64.0,14.8 L65.0,14.0 L66.0,14.4 L67.0,15.1 L68.0,16.1 L69.0,15.6 L70.0,16.2 L71.0,16.6 L72.0,15.5 L73.0,15.8 L74.0,15.9 L75.0,16.3 L76.0,16.8 L77.0,17.8 L78.0,16.5 L79.0,17.8 L80.0,17.4 L81.0,17.5 L82.0,17.7 L83.0,17.6 L84.0,18.2 L85.0,19.3 L86.0,18.9 L87.0,10.2 L88.0,11.0 L89.0,11.6 L90.0,10.8 L91.0,11.1 L92.0,11.0 L93.0,11.1 L94.0,10.4 L95.0,13.1 L96.0,11.5 L97.0,11.2 L98.0,12.3 L99.0,13.2 L100.0,12.0 L101.0,12.0 L102.0,13.8 L103.0,13.8 L104.0,13.7 L105.0,14.7 L106.0,14.1 L107.0,14.5 L108.0,13.5 L109.0,15.3 L110.0,14.4 L111.0,15.8 L112.0,14.7 L113.0,14.7 L114.0,15.2 L115.0,15.6 L116.0,15.4 L117.0,16.6 L118.0,16.1 L119.0,16.5 L120.0,17.3 L121.0,17.6 L122.0,18.0 L123.0,18.2 L124.0,18.7 L125.0,18.5 L126.0,18.6 L127.0,18.4 L128.0,18.1 L129.0,17.3 L130.0,9.3 L131.0,9.1 L132.0,10.4 L133.0,9.6 L134.0,10.9 L135.0,10.5 L136.0,10.6 L137.0,12.1 L138.0,12.8 L139.0,13.1 L140.0,12.6 L141.0,13.1 L142.0,12.6 L143.0,13.5 L144.0,12.8 L145.0,14.0 L146.0,14.6 L147.0,14.1 L148.0,13.1 L149.0,14.0 L150.0,13.3 L151.0,13.7 L152.0,14.2 L153.0,16.0 L154.0,15.2 L155.0,14.5 L156.0,14.8 L157.0,15.8 L158.0,16.3 L159.0,17.0 L160.0,17.1 L161.0,16.4 L162.0,16.3 L163.0,17.1 L164.0,17.4 L165.0,17.9 L166.0,18.3 L167.0,18.3 L168.0,17.8 L169.0,18.2 L170.0,18.7 L171.0,19.2 L171.0,36.7 L170.0,37.2 L169.0,37.7 L168.0,38.1 L167.0,37.6 L166.0,37.6 L165.0,38.0 L164.0,38.5 L163.0,38.8 L162.0,39.6 L161.0,39.5 L160.0,38.8 L159.0,38.9 L158.0,39.6 L157.0,40.1 L156.0,41.1 L155.0,41.4 L154.0,40.7 L153.0,39.9 L152.0,41.7 L151.0,42.2 L150.0,42.6 L149.0,41.9 L148.0,42.8 L147.0,41.8 L146.0,41.3 L145.0,41.9 L144.0,43.1 L143.0,42.4 L142.0,43.3 L141.0,42.8 L140.0,43.3 L139.0,42.8 L138.0,43.1 L137.0,43.8 L136.0,45.3 L135.0,45.4 L134.0,45.0 L133.0,46.3 L132.0,45.5 L131.0,46.8 L130.0,46.6 L129.0,38.6 L128.0,37.8 L127.0,37.5 L126.0,37.3 L125.0,37.4 L124.0,37.2 L123.0,37.7 L122.0,37.9 L121.0,38.3 L120.0,38.6 L119.0,39.4 L118.0,39.8 L117.0,39.3 L116.0,40.5 L115.0,40.3 L114.0,40.7 L113.0,41.2 L112.0,41.2 L111.0,40.1 L110.0,41.5 L109.0,40.6 L108.0,42.4 L107.0,41.4 L106.0,41.8 L105.0,41.2 L104.0,42.2 L103.0,42.1 L102.0,42.1 L101.0,43.9 L100.0,43.9 L99.0,42.7 L98.0,43.6 L97.0,44.7 L96.0,44.4 L95.0,42.8 L94.0,45.5 L93.0,44.8 L92.0,44.9 L91.0,44.8 L90.0,45.1 L89.0,44.3 L88.0,44.9 L87.0,45.7 L86.0,37.0 L85.0,36.6 L84.0,37.7 L83.0,38.3 L82.0,38.2 L81.0,38.4 L80.0,38.5 L79.0,38.1 L78.0,39.4 L77.0,38.1 L76.0,39.1 L75.0,39.6 L74.0,40.0 L73.0,40.1 L72.0,40.4 L71.0,39.3 L70.0,39.7 L69.0,40.3 L68.0,39.8 L67.0,40.8 L66.0,41.5 L65.0,41.9 L64.0,41.1 L63.0,42.4 L62.0,41.2 L61.0,42.4 L60.0,41.6 L59.0,41.7 L58.0,43.4 L57.0,42.3 L56.0,43.1 L55.0,44.0 L54.0,42.8 L53.0,44.0 L52.0,42.9 L51.0,44.4 L50.0,43.3 L49.0,45.5 L48.0,44.7 L47.0,46.0 L46.0,46.5 L45.0,46.9 L44.0,45.5 L43.0,34.5 L42.0,37.5 L41.0,36.7 L40.0,37.3 L39.0,37.3 L38.0,37.4 L37.0,38.2 L36.0,37.9 L35.0,39.0 L34.0,39.0 L33.0,39.2 L32.0,39.2 L31.0,40.2 L30.0,40.5 L29.0,39.9 L28.0,41.0 L27.0,40.5 L26.0,39.7 L25.0,41.6 L24.0,40.8 L23.0,42.2 L22.0,40.9 L21.0,41.3 L20.0,42.4 L19.0,42.6 L18.0,42.1 L17.0,42.2 L16.0,41.5 L15.0,43.2 L14.0,43.4 L13.0,44.4 L12.0,44.1 L11.0,43.9 L10.0,43.0 L9.0,43.2 L8.0,43.3 L7.0,43.5 L6.0,44.4 L5.0,46.0 L4.0,45.5 L3.0,45.2 L2.0,44.9 L1.0,45.5 L0.0,33.1Z" fill="#442e13" opacity="0.85"/><path d="M10 9L30 20.5L10 32z" fill="#fff" stroke="#111" stroke-width="2"/><rect x="143.9" y="0" width="2.5" height="81.9" fill="#fff"/></svg><div class="t" style="left:35px;top:1px;font-size:15.5px;line-height:19px;color:#2a1a08">TenderWurliChor1</div></div><div style="left:2453.5px;top:729.4000000000001px;width:175.5px;height:81.9px;background:#e38b26;overflow:hidden"><svg width="175.5" height="81.9" style="position:absolute;left:0;top:0"><rect x="21.9" y="20" width="1.2" height="61.900000000000006" fill="rgba(0,0,0,0.08)"/><rect x="43.9" y="20" width="1.2" height="61.900000000000006" fill="rgba(0,0,0,0.13)"/><rect x="65.8" y="20" width="1.2" height="61.900000000000006" fill="rgba(0,0,0,0.08)"/><rect x="87.8" y="20" width="1.2" height="61.900000000000006" fill="rgba(0,0,0,0.13)"/><rect x="109.7" y="20" width="1.2" height="61.900000000000006" fill="rgba(0,0,0,0.08)"/><rect x="131.6" y="20" width="1.2" height="61.900000000000006" fill="rgba(0,0,0,0.13)"/><rect x="153.6" y="20" width="1.2" height="61.900000000000006" fill="rgba(0,0,0,0.08)"/><rect x="0" y="19" width="175.5" height="1" fill="rgba(0,0,0,0.10)"/><path transform="translate(2,24)" d="M0.0,22.3 L1.0,10.1 L2.0,11.4 L3.0,11.4 L4.0,11.3 L5.0,11.0 L6.0,12.0 L7.0,11.8 L8.0,11.6 L9.0,12.3 L10.0,12.5 L11.0,12.3 L12.0,11.2 L13.0,13.7 L14.0,13.3 L15.0,13.6 L16.0,13.4 L17.0,14.5 L18.0,13.6 L19.0,14.2 L20.0,14.1 L21.0,14.8 L22.0,15.3 L23.0,14.8 L24.0,14.7 L25.0,14.1 L26.0,15.3 L27.0,14.6 L28.0,15.7 L29.0,15.7 L30.0,16.9 L31.0,16.2 L32.0,17.5 L33.0,16.0 L34.0,16.9 L35.0,17.8 L36.0,16.7 L37.0,17.7 L38.0,18.1 L39.0,18.8 L40.0,18.4 L41.0,18.1 L42.0,19.2 L43.0,20.9 L44.0,11.2 L45.0,9.0 L46.0,11.2 L47.0,11.9 L48.0,12.0 L49.0,11.4 L50.0,12.6 L51.0,11.1 L52.0,12.8 L53.0,10.9 L54.0,12.7 L55.0,11.3 L56.0,13.3 L57.0,12.9 L58.0,13.3 L59.0,13.3 L60.0,12.4 L61.0,13.9 L62.0,14.2 L63.0,13.5 L64.0,13.8 L65.0,14.5 L66.0,14.7 L67.0,15.7 L68.0,15.6 L69.0,15.3 L70.0,15.5 L71.0,16.5 L72.0,15.2 L73.0,15.8 L74.0,16.0 L75.0,16.5 L76.0,17.2 L77.0,16.6 L78.0,18.1 L79.0,18.1 L80.0,18.2 L81.0,17.7 L82.0,17.7 L83.0,17.9 L84.0,18.2 L85.0,18.0 L86.0,19.3 L87.0,9.8 L88.0,9.8 L89.0,10.8 L90.0,9.6 L91.0,12.2 L92.0,10.3 L93.0,10.3 L94.0,12.5 L95.0,10.9 L96.0,12.2 L97.0,12.1 L98.0,11.3 L99.0,12.2 L100.0,12.9 L101.0,12.1 L102.0,13.8 L103.0,12.3 L104.0,12.8 L105.0,13.8 L106.0,14.9 L107.0,14.0 L108.0,14.6 L109.0,14.6 L110.0,15.5 L111.0,15.6 L112.0,15.0 L113.0,15.1 L114.0,15.6 L115.0,16.6 L116.0,16.8 L117.0,17.4 L118.0,16.0 L119.0,16.9 L120.0,17.6 L121.0,18.0 L122.0,16.9 L123.0,17.5 L124.0,18.1 L125.0,17.7 L126.0,18.8 L127.0,19.1 L128.0,18.1 L129.0,17.1 L130.0,9.5 L131.0,11.4 L132.0,11.5 L133.0,10.9 L134.0,11.3 L135.0,11.3 L136.0,11.7 L137.0,11.8 L138.0,12.0 L139.0,12.2 L140.0,11.2 L141.0,12.0 L142.0,11.9 L143.0,13.0 L144.0,12.8 L145.0,13.6 L146.0,14.5 L147.0,12.8 L148.0,13.5 L149.0,13.4 L150.0,15.3 L151.0,15.4 L152.0,15.3 L153.0,15.7 L154.0,15.5 L155.0,15.7 L156.0,15.7 L157.0,16.7 L158.0,15.8 L159.0,16.8 L160.0,15.9 L161.0,16.3 L162.0,17.4 L163.0,17.8 L164.0,17.4 L165.0,18.3 L166.0,16.9 L167.0,18.5 L168.0,17.9 L169.0,19.1 L170.0,18.3 L171.0,19.3 L171.0,36.6 L170.0,37.6 L169.0,36.8 L168.0,38.0 L167.0,37.4 L166.0,39.0 L165.0,37.6 L164.0,38.5 L163.0,38.1 L162.0,38.5 L161.0,39.6 L160.0,40.0 L159.0,39.1 L158.0,40.1 L157.0,39.2 L156.0,40.2 L155.0,40.2 L154.0,40.4 L153.0,40.2 L152.0,40.6 L151.0,40.5 L150.0,40.6 L149.0,42.5 L148.0,42.4 L147.0,43.1 L146.0,41.4 L145.0,42.3 L144.0,43.1 L143.0,42.9 L142.0,44.0 L141.0,43.9 L140.0,44.7 L139.0,43.7 L138.0,43.9 L137.0,44.1 L136.0,44.2 L135.0,44.6 L134.0,44.6 L133.0,45.0 L132.0,44.4 L131.0,44.5 L130.0,46.4 L129.0,38.8 L128.0,37.8 L127.0,36.8 L126.0,37.1 L125.0,38.2 L124.0,37.8 L123.0,38.4 L122.0,39.0 L121.0,37.9 L120.0,38.3 L119.0,39.0 L118.0,39.9 L117.0,38.5 L116.0,39.1 L115.0,39.3 L114.0,40.3 L113.0,40.8 L112.0,40.9 L111.0,40.3 L110.0,40.4 L109.0,41.3 L108.0,41.3 L107.0,41.9 L106.0,41.0 L105.0,42.1 L104.0,43.1 L103.0,43.6 L102.0,42.1 L101.0,43.8 L100.0,43.0 L99.0,43.7 L98.0,44.6 L97.0,43.8 L96.0,43.7 L95.0,45.0 L94.0,43.4 L93.0,45.6 L92.0,45.6 L91.0,43.7 L90.0,46.3 L89.0,45.1 L88.0,46.1 L87.0,46.1 L86.0,36.6 L85.0,37.9 L84.0,37.7 L83.0,38.0 L82.0,38.2 L81.0,38.2 L80.0,37.7 L79.0,37.8 L78.0,37.8 L77.0,39.3 L76.0,38.7 L75.0,39.4 L74.0,39.9 L73.0,40.1 L72.0,40.7 L71.0,39.4 L70.0,40.4 L69.0,40.6 L68.0,40.3 L67.0,40.2 L66.0,41.2 L65.0,41.4 L64.0,42.1 L63.0,42.4 L62.0,41.7 L61.0,42.0 L60.0,43.5 L59.0,42.6 L58.0,42.6 L57.0,43.0 L56.0,42.6 L55.0,44.6 L54.0,43.2 L53.0,45.0 L52.0,43.1 L51.0,44.8 L50.0,43.3 L49.0,44.5 L48.0,43.9 L47.0,44.0 L46.0,44.7 L45.0,46.9 L44.0,44.7 L43.0,35.0 L42.0,36.7 L41.0,37.8 L40.0,37.5 L39.0,37.1 L38.0,37.8 L37.0,38.2 L36.0,39.2 L35.0,38.1 L34.0,39.0 L33.0,39.9 L32.0,38.4 L31.0,39.7 L30.0,39.0 L29.0,40.2 L28.0,40.2 L27.0,41.3 L26.0,40.6 L25.0,41.8 L24.0,41.2 L23.0,41.1 L22.0,40.6 L21.0,41.1 L20.0,41.8 L19.0,41.7 L18.0,42.3 L17.0,41.4 L16.0,42.5 L15.0,42.3 L14.0,42.6 L13.0,42.2 L12.0,44.7 L11.0,43.6 L10.0,43.4 L9.0,43.6 L8.0,44.3 L7.0,44.1 L6.0,43.9 L5.0,44.9 L4.0,44.6 L3.0,44.5 L2.0,44.5 L1.0,45.8 L0.0,33.6Z" fill="#3f260a" opacity="0.85"/><path d="M10 10L26 21L10 32z" fill="#8c5617" opacity="0.9"/></svg><div class="t" style="left:35px;top:1px;font-size:15.5px;line-height:19px;color:#2a1a08">TenderWurliChor1</div></div><div style="left:2453.5px;top:812.8000000000001px;width:175.5px;height:54.19999999999993px;background:#262626"></div><div style="left:2464.5px;top:844.8000000000001px;width:16px;height:16px;background:#9a9a9a;border-radius:50%"></div><svg style="position:absolute;left:1225px;top:509.20000000000005px;" width="24" height="22" viewBox="0 0 24 22"><path d="M0 0L16 9L0 18z" fill="#474747"/><path d="M10 20L20 10" stroke="#474747" stroke-width="2"/></svg><div style="left:2819.5px;top:229.0px;width:166px;height:81.9px;background:#262626"></div><div style="left:2828.5px;top:261.5px;width:15.5px;height:15.5px;background:#474747"></div><div style="left:2819.5px;top:312.4px;width:166px;height:81.9px;background:#262626"></div><div style="left:2828.5px;top:344.9px;width:15.5px;height:15.5px;background:#474747"></div><div style="left:2819.5px;top:395.8px;width:166px;height:81.9px;background:#262626"></div><div style="left:2828.5px;top:428.3px;width:15.5px;height:15.5px;background:#474747"></div><div style="left:2819.5px;top:479.20000000000005px;width:166px;height:81.9px;background:#262626"></div><div style="left:2828.5px;top:511.70000000000005px;width:15.5px;height:15.5px;background:#474747"></div><div style="left:2819.5px;top:562.6px;width:166px;height:81.9px;background:#262626"></div><div style="left:2828.5px;top:595.1px;width:15.5px;height:15.5px;background:#474747"></div><div style="left:2819.5px;top:646.0px;width:166px;height:81.9px;background:#262626"></div><div style="left:2828.5px;top:678.5px;width:15.5px;height:15.5px;background:#474747"></div><div style="left:2819.5px;top:729.4000000000001px;width:166px;height:81.9px;background:#262626"></div><div style="left:2828.5px;top:761.9000000000001px;width:15.5px;height:15.5px;background:#474747"></div><div style="left:2819.5px;top:812.8000000000001px;width:166px;height:54.19999999999993px;background:#262626"></div><div style="left:2828.5px;top:845.3000000000001px;width:15.5px;height:15.5px;background:#474747"></div><div style="left:2987.5px;top:229px;width:7px;height:540px;background:#555"></div><div style="left:5px;top:848px;width:2990px;height:19px;background:linear-gradient(rgba(0,0,0,0),rgba(0,0,0,0.38))"></div><div style="left:152.5px;top:868px;width:37px;height:80px;background:#2e2e2e"></div><div style="left:191px;top:868px;width:99px;height:80px;background:#2e2e2e"></div><div style="left:291.5px;top:868px;width:37px;height:80px;background:#2e2e2e"></div><div style="left:162px;top:900px;width:16.5px;height:16.5px;background:#a8a8a8"></div><svg style="position:absolute;left:300.5px;top:896.5px;" width="28" height="24" viewBox="0 0 28 24"><g fill="#a8a8a8"><rect x="0" y="0" width="20" height="4.5"/><rect x="0" y="7" width="20" height="4.5"/><rect x="0" y="14" width="14" height="4.5"/><path d="M15 10.5l11 6.8-11 6.8z"/></g></svg><svg style="position:absolute;left:225px;top:892.5px;" width="30" height="30" viewBox="0 0 30 30"><circle cx="15" cy="15" r="14" fill="#fcd592"/><path d="M15 15L15 1A14 14 0 0 0 8.3 2.7z" fill="#f08a30"/><text x="15" y="22" font-size="19" text-anchor="middle" fill="#1a1a1a" font-family="Liberation Sans" letter-spacing="0">3</text></svg><div style="left:152.5px;top:949px;width:176px;height:157px;background:#262626"></div><div style="left:152.5px;top:949.5px;width:176px;height:29.5px;background:linear-gradient(#434343,#383838)"></div><div style="left:159.5px;top:958.0px;width:13px;height:13px;background:#f7d53a;border-radius:50%"></div><div class="t " style="left:179px;top:956.3px;font-size:15.5px;line-height:19.375px;color:#dcdcdc;">BurningCrackleAtmo</div><div style="left:152.5px;top:980.5px;width:176px;height:29.5px;background:linear-gradient(#434343,#383838)"></div><div style="left:159.5px;top:989.0px;width:13px;height:13px;background:#f7d53a;border-radius:50%"></div><div class="t " style="left:179px;top:987.3px;font-size:15.5px;line-height:19.375px;color:#dcdcdc;">Freq Shifter+</div><div style="left:152.5px;top:1011.5px;width:176px;height:29.5px;background:linear-gradient(#434343,#383838)"></div><div style="left:159.5px;top:1020.0px;width:13px;height:13px;background:#f7d53a;border-radius:50%"></div><div class="t " style="left:179px;top:1018.3px;font-size:15.5px;line-height:19.375px;color:#dcdcdc;">Distortion</div><div style="left:152.5px;top:1042.5px;width:176px;height:29.5px;background:linear-gradient(#434343,#383838)"></div><div style="left:159.5px;top:1051.0px;width:13px;height:13px;background:#f7d53a;border-radius:50%"></div><div class="t " style="left:179px;top:1049.3px;font-size:15.5px;line-height:19.375px;color:#dcdcdc;">EQ+</div><svg style="position:absolute;left:274px;top:1047.5px;" width="52" height="20" viewBox="0 0 52 20"><path d="M2 14q8-1 14-3t10-1 5-3 4-6 4 7 12 4h2" stroke="#e0e0e0" stroke-width="2" fill="none"/></svg><svg style="position:absolute;left:158px;top:1081.5px;" width="16" height="16" viewBox="0 0 16 16"><path d="M8 1v14M1 8h14" stroke="#a0a0a0" stroke-width="3.2"/></svg><div class="t " style="right:2677px;top:1080.8px;font-size:15.5px;line-height:19.375px;color:#9a9a9a;">3.4 ms</div><div style="left:152.5px;top:1106px;width:176px;height:101px;background:#484848;border-top:1px solid #555"></div><div class="t " style="left:-85px;width:600px;text-align:center;top:1125.3px;font-size:15.5px;line-height:19.375px;color:#f2f2f2;">Delay+</div><div class="t " style="left:-85px;width:600px;text-align:center;top:1173.1px;font-size:15.8px;line-height:19.75px;color:#8a8a8a;">Convolution</div><svg style="position:absolute;left:271px;top:1106px;" width="56" height="104" viewBox="0 0 56 104"><defs><linearGradient id="kg" x1="0" y1="0" x2="0" y2="1"><stop offset="0" stop-color="#828282"/><stop offset="1" stop-color="#575757"/></linearGradient></defs><path d="M13.2 44.8 A21 21 0 1 1 42.8 44.8" stroke="#555" stroke-width="3.5" fill="none"/><path d="M13.2 44.8 A21 21 0 0 1 18.5 11.3" stroke="#f5dc2a" stroke-width="3.5" fill="none"/><circle cx="28" cy="30" r="16.5" fill="#383838"/><circle cx="28" cy="30" r="15" fill="url(#kg)"/><path d="M22.6 19.3L25.0 24.2" stroke="#f2f2f2" stroke-width="3.5"/><path d="M13.2 92.8 A21 21 0 1 1 42.8 92.8" stroke="#555" stroke-width="3.5" fill="none"/><circle cx="28" cy="78" r="16.5" fill="#383838"/><circle cx="28" cy="78" r="15" fill="url(#kg)"/><path d="M19.5 86.5L23.4 82.6" stroke="#9a9a9a" stroke-width="3.5"/></svg><div style="left:152.5px;top:1207px;width:176px;height:598px;background:#454545"></div><div style="left:160px;top:1215px;width:162px;height:33.5px;background:#252525;border-radius:6px"></div><div style="left:161.0px;top:1216px;width:52.0px;height:31px;background:linear-gradient(#5d5d5d,#4f4f4f);border-radius:5px 0 0 5px;"></div><div style="left:178.5px;top:1223px;width:17px;height:17px;background:#f5f5f5;border-radius:50%"></div><div style="left:215.0px;top:1216px;width:52.0px;height:31px;background:linear-gradient(#5d5d5d,#4f4f4f);"></div><div class="t " style="left:-59.0px;width:600px;text-align:center;top:1218.9px;font-size:21px;line-height:26.25px;color:#f0f0f0;font-weight:bold">S</div><div style="left:269.0px;top:1216px;width:52.0px;height:31px;background:linear-gradient(#5d5d5d,#4f4f4f);border-radius:0 5px 5px 0;"></div><div class="t " style="left:-5.0px;width:600px;text-align:center;top:1218.9px;font-size:21px;line-height:26.25px;color:#f0f0f0;font-weight:bold">M</div><div style="left:159px;top:1255px;width:164px;height:36px;background:#1c1c1c;border-radius:6px"></div><div style="left:239px;top:1259px;width:3px;height:28px;background:#f58a1f"></div><div style="left:159px;top:1297px;width:164px;height:502px;background:#1c1c1c;border-radius:6px"></div><div style="left:159px;top:1327.5px;width:164px;height:2px;background:#3c3c3c"></div><div class="t " style="left:165px;top:1304.3px;font-size:15.5px;line-height:19.375px;color:#e81e1e;">+2.3</div><div class="t " style="right:2685px;top:1304.3px;font-size:15.5px;line-height:19.375px;color:#f5902a;">−14.5 dB</div><div class="t " style="right:2798.5px;top:1382.1px;font-size:15.5px;line-height:19.375px;color:#d8d8d8;">0</div><div style="left:208.5px;top:1391.3px;width:6px;height:2px;background:#c8c8c8"></div><div class="t " style="right:2798.5px;top:1441.0px;font-size:15.5px;line-height:19.375px;color:#d8d8d8;">6</div><div style="left:208.5px;top:1450.2px;width:6px;height:2px;background:#c8c8c8"></div><div class="t " style="right:2798.5px;top:1499.9px;font-size:15.5px;line-height:19.375px;color:#d8d8d8;">12</div><div style="left:208.5px;top:1509.1px;width:6px;height:2px;background:#c8c8c8"></div><div class="t " style="right:2798.5px;top:1554.9px;font-size:15.5px;line-height:19.375px;color:#d8d8d8;">18</div><div style="left:208.5px;top:1564.1px;width:6px;height:2px;background:#c8c8c8"></div><div class="t " style="right:2798.5px;top:1604.0px;font-size:15.5px;line-height:19.375px;color:#d8d8d8;">24</div><div style="left:208.5px;top:1613.2px;width:6px;height:2px;background:#c8c8c8"></div><div class="t " style="right:2798.5px;top:1644.3px;font-size:15.5px;line-height:19.375px;color:#d8d8d8;">30</div><div style="left:208.5px;top:1653.5px;width:6px;height:2px;background:#c8c8c8"></div><div class="t " style="right:2798.5px;top:1677.5px;font-size:15.5px;line-height:19.375px;color:#d8d8d8;">36</div><div style="left:208.5px;top:1686.7px;width:6px;height:2px;background:#c8c8c8"></div><div class="t " style="right:2798.5px;top:1702.5px;font-size:15.5px;line-height:19.375px;color:#d8d8d8;">42</div><div style="left:208.5px;top:1711.7px;width:6px;height:2px;background:#c8c8c8"></div><div class="t " style="right:2798.5px;top:1722.9px;font-size:15.5px;line-height:19.375px;color:#d8d8d8;">48</div><div style="left:208.5px;top:1732.1px;width:6px;height:2px;background:#c8c8c8"></div><div class="t " style="right:2798.5px;top:1748.8px;font-size:15.5px;line-height:19.375px;color:#d8d8d8;">60</div><div style="left:208.5px;top:1758.0px;width:6px;height:2px;background:#c8c8c8"></div><div class="t " style="right:2798.5px;top:1773.5px;font-size:19px;line-height:23.75px;color:#d8d8d8;font-weight:bold">∞</div><div style="left:209px;top:1740px;width:5px;height:1.5px;background:#5a5a5a"></div><div style="left:209px;top:1765px;width:5px;height:1.5px;background:#5a5a5a"></div><div style="left:209px;top:1770px;width:5px;height:1.5px;background:#5a5a5a"></div><div style="left:209px;top:1775px;width:5px;height:1.5px;background:#5a5a5a"></div><div style="left:209px;top:1780px;width:5px;height:1.5px;background:#5a5a5a"></div><div style="left:218px;top:1337px;width:11px;height:455px;background:#333"></div><div style="left:218px;top:1337px;width:11px;height:455px;background:linear-gradient(to bottom,#f07d14 0px,#f28a18 113px,#f5a020 173px,#f9d53a 223px,#c8d83a 258px,#8cc82c 277px,#6cbb2c 365px,#2e962f 455px);clip-path:inset(215.7px 0 0 0)"></div><div style="left:218px;top:1529.5px;width:11px;height:4px;background:#f5902a"></div><div style="left:218px;top:1336px;width:11px;height:4px;background:#e81e1e"></div><div style="left:230px;top:1337px;width:11px;height:455px;background:#333"></div><div style="left:230px;top:1337px;width:11px;height:455px;background:linear-gradient(to bottom,#f07d14 0px,#f28a18 113px,#f5a020 173px,#f9d53a 223px,#c8d83a 258px,#8cc82c 277px,#6cbb2c 365px,#2e962f 455px);clip-path:inset(215.7px 0 0 0)"></div><div style="left:230px;top:1529.5px;width:11px;height:4px;background:#f5902a"></div><div style="left:230px;top:1336px;width:11px;height:4px;background:#e81e1e"></div><div style="left:243px;top:1533.6px;width:55px;height:258.4000000000001px;background:#6b4419"></div><div style="left:243px;top:1532.6px;width:55px;height:3px;background:#f58a1f"></div><div style="left:152.5px;top:1805px;width:176px;height:11px;background:#f47f00"></div><div style="left:329.5px;top:868px;width:37px;height:80px;background:#2e2e2e"></div><div style="left:368px;top:868px;width:99px;height:80px;background:#2e2e2e"></div><div style="left:468.5px;top:868px;width:37px;height:80px;background:#2e2e2e"></div><div style="left:339px;top:900px;width:16.5px;height:16.5px;background:#a8a8a8"></div><svg style="position:absolute;left:477.5px;top:896.5px;" width="28" height="24" viewBox="0 0 28 24"><g fill="#a8a8a8"><rect x="0" y="0" width="20" height="4.5"/><rect x="0" y="7" width="20" height="4.5"/><rect x="0" y="14" width="14" height="4.5"/><path d="M15 10.5l11 6.8-11 6.8z"/></g></svg><svg style="position:absolute;left:402px;top:892.5px;" width="30" height="30" viewBox="0 0 30 30"><circle cx="15" cy="15" r="14" fill="#f5f06a"/><path d="M15 15L15 1A14 14 0 0 0 3.7 6.8z" fill="#b8b830"/><text x="15" y="22" font-size="19" text-anchor="middle" fill="#1a1a1a" font-family="Liberation Sans" letter-spacing="0">6</text></svg><div style="left:329.5px;top:949px;width:176px;height:157px;background:#262626"></div><div style="left:329.5px;top:949.5px;width:176px;height:29.5px;background:linear-gradient(#434343,#383838)"></div><div style="left:336.5px;top:958.0px;width:13px;height:13px;background:#f7d53a;border-radius:50%"></div><div class="t " style="left:356px;top:956.3px;font-size:15.5px;line-height:19.375px;color:#dcdcdc;">Sculpt</div><svg style="position:absolute;left:451px;top:954.5px;" width="52" height="20" viewBox="0 0 52 20"><path d="M2 16q10-1 18-5t14-3 16 1" stroke="#e0e0e0" stroke-width="2" fill="none"/></svg><div style="left:329.5px;top:980.5px;width:176px;height:29.5px;background:linear-gradient(#434343,#383838)"></div><div style="left:336.5px;top:989.0px;width:13px;height:13px;background:#f7d53a;border-radius:50%"></div><div class="t " style="left:356px;top:987.3px;font-size:15.5px;line-height:19.375px;color:#dcdcdc;">Focus</div><svg style="position:absolute;left:451px;top:985.5px;" width="52" height="20" viewBox="0 0 52 20"><path d="M2 10h20q5 0 8-3t6 2 6 1h10" stroke="#e0e0e0" stroke-width="2" fill="none"/></svg><div style="left:329.5px;top:1011.5px;width:176px;height:29.5px;background:linear-gradient(#434343,#383838)"></div><div style="left:336.5px;top:1020.0px;width:13px;height:13px;background:#f7d53a;border-radius:50%"></div><div class="t " style="left:356px;top:1018.3px;font-size:15.5px;line-height:19.375px;color:#dcdcdc;">Compressor+</div><svg style="position:absolute;left:495px;top:1014.5px;" width="8" height="26" viewBox="0 0 8 26"><rect x="0" y="0" width="7" height="12" fill="#3a8fe0"/><rect x="0" y="13" width="7" height="11" fill="#2a2a2a"/></svg><svg style="position:absolute;left:335px;top:1050.5px;" width="16" height="16" viewBox="0 0 16 16"><path d="M8 1v14M1 8h14" stroke="#a0a0a0" stroke-width="3.2"/></svg><div class="t " style="right:2500px;top:1049.8px;font-size:15.5px;line-height:19.375px;color:#9a9a9a;">5.0 ms</div><div style="left:329.5px;top:1106px;width:176px;height:101px;background:#484848;border-top:1px solid #555"></div><div class="t " style="left:92px;width:600px;text-align:center;top:1125.3px;font-size:15.5px;line-height:19.375px;color:#f2f2f2;">Delay+</div><div class="t " style="left:92px;width:600px;text-align:center;top:1173.1px;font-size:15.8px;line-height:19.75px;color:#f2f2f2;">Convolution</div><svg style="position:absolute;left:448px;top:1106px;" width="56" height="104" viewBox="0 0 56 104"><defs><linearGradient id="kg" x1="0" y1="0" x2="0" y2="1"><stop offset="0" stop-color="#828282"/><stop offset="1" stop-color="#575757"/></linearGradient></defs><path d="M13.2 44.8 A21 21 0 1 1 42.8 44.8" stroke="#555" stroke-width="3.5" fill="none"/><path d="M13.2 44.8 A21 21 0 0 1 7.4 25.7" stroke="#f5dc2a" stroke-width="3.5" fill="none"/><circle cx="28" cy="30" r="16.5" fill="#383838"/><circle cx="28" cy="30" r="15" fill="url(#kg)"/><path d="M16.2 27.6L21.6 28.7" stroke="#f2f2f2" stroke-width="3.5"/><path d="M13.2 92.8 A21 21 0 1 1 42.8 92.8" stroke="#555" stroke-width="3.5" fill="none"/><path d="M13.2 92.8 A21 21 0 0 1 8.2 70.9" stroke="#f5dc2a" stroke-width="3.5" fill="none"/><circle cx="28" cy="78" r="16.5" fill="#383838"/><circle cx="28" cy="78" r="15" fill="url(#kg)"/><path d="M16.7 73.9L21.9 75.8" stroke="#f2f2f2" stroke-width="3.5"/></svg><div style="left:329.5px;top:1207px;width:176px;height:598px;background:#454545"></div><div style="left:337px;top:1215px;width:162px;height:33.5px;background:#252525;border-radius:6px"></div><div style="left:338.0px;top:1216px;width:52.0px;height:31px;background:linear-gradient(#5d5d5d,#4f4f4f);border-radius:5px 0 0 5px;"></div><div style="left:355.5px;top:1223px;width:17px;height:17px;background:#f5f5f5;border-radius:50%"></div><div style="left:392.0px;top:1216px;width:52.0px;height:31px;background:linear-gradient(#5d5d5d,#4f4f4f);"></div><div class="t " style="left:118.0px;width:600px;text-align:center;top:1218.9px;font-size:21px;line-height:26.25px;color:#f0f0f0;font-weight:bold">S</div><div style="left:446.0px;top:1216px;width:52.0px;height:31px;background:linear-gradient(#5d5d5d,#4f4f4f);border-radius:0 5px 5px 0;"></div><div class="t " style="left:172.0px;width:600px;text-align:center;top:1218.9px;font-size:21px;line-height:26.25px;color:#f0f0f0;font-weight:bold">M</div><div style="left:336px;top:1255px;width:164px;height:36px;background:#1c1c1c;border-radius:6px"></div><div style="left:416px;top:1259px;width:3px;height:28px;background:#f58a1f"></div><div style="left:336px;top:1297px;width:164px;height:502px;background:#1c1c1c;border-radius:6px"></div><div style="left:336px;top:1327.5px;width:164px;height:2px;background:#3c3c3c"></div><div class="t " style="left:342px;top:1304.3px;font-size:15.5px;line-height:19.375px;color:#a0a0a0;">-17.6</div><div class="t " style="right:2508px;top:1304.3px;font-size:15.5px;line-height:19.375px;color:#f5902a;">−5.2 dB</div><div class="t " style="right:2621.5px;top:1382.1px;font-size:15.5px;line-height:19.375px;color:#d8d8d8;">0</div><div style="left:385.5px;top:1391.3px;width:6px;height:2px;background:#c8c8c8"></div><div class="t " style="right:2621.5px;top:1441.0px;font-size:15.5px;line-height:19.375px;color:#d8d8d8;">6</div><div style="left:385.5px;top:1450.2px;width:6px;height:2px;background:#c8c8c8"></div><div class="t " style="right:2621.5px;top:1499.9px;font-size:15.5px;line-height:19.375px;color:#d8d8d8;">12</div><div style="left:385.5px;top:1509.1px;width:6px;height:2px;background:#c8c8c8"></div><div class="t " style="right:2621.5px;top:1554.9px;font-size:15.5px;line-height:19.375px;color:#d8d8d8;">18</div><div style="left:385.5px;top:1564.1px;width:6px;height:2px;background:#c8c8c8"></div><div class="t " style="right:2621.5px;top:1604.0px;font-size:15.5px;line-height:19.375px;color:#d8d8d8;">24</div><div style="left:385.5px;top:1613.2px;width:6px;height:2px;background:#c8c8c8"></div><div class="t " style="right:2621.5px;top:1644.3px;font-size:15.5px;line-height:19.375px;color:#d8d8d8;">30</div><div style="left:385.5px;top:1653.5px;width:6px;height:2px;background:#c8c8c8"></div><div class="t " style="right:2621.5px;top:1677.5px;font-size:15.5px;line-height:19.375px;color:#d8d8d8;">36</div><div style="left:385.5px;top:1686.7px;width:6px;height:2px;background:#c8c8c8"></div><div class="t " style="right:2621.5px;top:1702.5px;font-size:15.5px;line-height:19.375px;color:#d8d8d8;">42</div><div style="left:385.5px;top:1711.7px;width:6px;height:2px;background:#c8c8c8"></div><div class="t " style="right:2621.5px;top:1722.9px;font-size:15.5px;line-height:19.375px;color:#d8d8d8;">48</div><div style="left:385.5px;top:1732.1px;width:6px;height:2px;background:#c8c8c8"></div><div class="t " style="right:2621.5px;top:1748.8px;font-size:15.5px;line-height:19.375px;color:#d8d8d8;">60</div><div style="left:385.5px;top:1758.0px;width:6px;height:2px;background:#c8c8c8"></div><div class="t " style="right:2621.5px;top:1773.5px;font-size:19px;line-height:23.75px;color:#d8d8d8;font-weight:bold">∞</div><div style="left:386px;top:1740px;width:5px;height:1.5px;background:#5a5a5a"></div><div style="left:386px;top:1765px;width:5px;height:1.5px;background:#5a5a5a"></div><div style="left:386px;top:1770px;width:5px;height:1.5px;background:#5a5a5a"></div><div style="left:386px;top:1775px;width:5px;height:1.5px;background:#5a5a5a"></div><div style="left:386px;top:1780px;width:5px;height:1.5px;background:#5a5a5a"></div><div style="left:395px;top:1337px;width:11px;height:455px;background:#333"></div><div style="left:395px;top:1337px;width:11px;height:455px;background:linear-gradient(to bottom,#f07d14 0px,#f28a18 113px,#f5a020 173px,#f9d53a 223px,#c8d83a 258px,#8cc82c 277px,#6cbb2c 365px,#2e962f 455px);clip-path:inset(341.3px 0 0 0)"></div><div style="left:395px;top:1655.5px;width:11px;height:4px;background:#b8d83a"></div><div style="left:407px;top:1337px;width:11px;height:455px;background:#333"></div><div style="left:407px;top:1337px;width:11px;height:455px;background:linear-gradient(to bottom,#f07d14 0px,#f28a18 113px,#f5a020 173px,#f9d53a 223px,#c8d83a 258px,#8cc82c 277px,#6cbb2c 365px,#2e962f 455px);clip-path:inset(341.3px 0 0 0)"></div><div style="left:407px;top:1655.5px;width:11px;height:4px;background:#b8d83a"></div><div style="left:420px;top:1443px;width:55px;height:349px;background:#6b4419"></div><div style="left:420px;top:1442px;width:55px;height:3px;background:#f58a1f"></div><div style="left:329.5px;top:1805px;width:176px;height:11px;background:#fbfb2c"></div><div style="left:506.5px;top:868px;width:37px;height:80px;background:#2e2e2e"></div><div style="left:545px;top:868px;width:99px;height:80px;background:#2e2e2e"></div><div style="left:645.5px;top:868px;width:37px;height:80px;background:#2e2e2e"></div><div style="left:516px;top:900px;width:16.5px;height:16.5px;background:#a8a8a8"></div><svg style="position:absolute;left:654.5px;top:896.5px;" width="28" height="24" viewBox="0 0 28 24"><g fill="#a8a8a8"><rect x="0" y="0" width="20" height="4.5"/><rect x="0" y="7" width="20" height="4.5"/><rect x="0" y="14" width="14" height="4.5"/><path d="M15 10.5l11 6.8-11 6.8z"/></g></svg><div style="left:506.5px;top:949px;width:176px;height:157px;background:#262626"></div><div style="left:506.5px;top:949.5px;width:176px;height:29.5px;background:linear-gradient(#434343,#383838)"></div><div style="left:513.5px;top:958.0px;width:13px;height:13px;background:#f7d53a;border-radius:50%"></div><div class="t " style="left:533px;top:956.3px;font-size:15.5px;line-height:19.375px;color:#dcdcdc;">Chain</div><svg style="position:absolute;left:512px;top:988.5px;" width="16" height="16" viewBox="0 0 16 16"><path d="M8 1v14M1 8h14" stroke="#a0a0a0" stroke-width="3.2"/></svg><div style="left:506.5px;top:1106px;width:176px;height:101px;background:#484848;border-top:1px solid #555"></div><div class="t " style="left:269px;width:600px;text-align:center;top:1125.3px;font-size:15.5px;line-height:19.375px;color:#8a8a8a;">Delay+</div><div class="t " style="left:269px;width:600px;text-align:center;top:1173.1px;font-size:15.8px;line-height:19.75px;color:#8a8a8a;">Convolution</div><svg style="position:absolute;left:625px;top:1106px;" width="56" height="104" viewBox="0 0 56 104"><defs><linearGradient id="kg" x1="0" y1="0" x2="0" y2="1"><stop offset="0" stop-color="#828282"/><stop offset="1" stop-color="#575757"/></linearGradient></defs><path d="M13.2 44.8 A21 21 0 1 1 42.8 44.8" stroke="#555" stroke-width="3.5" fill="none"/><circle cx="28" cy="30" r="16.5" fill="#383838"/><circle cx="28" cy="30" r="15" fill="url(#kg)"/><path d="M19.5 38.5L23.4 34.6" stroke="#9a9a9a" stroke-width="3.5"/><path d="M13.2 92.8 A21 21 0 1 1 42.8 92.8" stroke="#555" stroke-width="3.5" fill="none"/><circle cx="28" cy="78" r="16.5" fill="#383838"/><circle cx="28" cy="78" r="15" fill="url(#kg)"/><path d="M19.5 86.5L23.4 82.6" stroke="#9a9a9a" stroke-width="3.5"/></svg><div style="left:506.5px;top:1207px;width:176px;height:598px;background:#454545"></div><div style="left:514px;top:1215px;width:162px;height:33.5px;background:#252525;border-radius:6px"></div><div style="left:515.0px;top:1216px;width:52.0px;height:31px;background:linear-gradient(#5d5d5d,#4f4f4f);border-radius:5px 0 0 5px;"></div><div style="left:532.5px;top:1223px;width:17px;height:17px;background:#a0a0a0;border-radius:50%"></div><div style="left:569.0px;top:1216px;width:52.0px;height:31px;background:linear-gradient(#5d5d5d,#4f4f4f);"></div><div class="t " style="left:295.0px;width:600px;text-align:center;top:1218.9px;font-size:21px;line-height:26.25px;color:#f0f0f0;font-weight:bold">S</div><div style="left:623.0px;top:1216px;width:52.0px;height:31px;background:linear-gradient(#5d5d5d,#4f4f4f);border-radius:0 5px 5px 0;"></div><div class="t " style="left:349.0px;width:600px;text-align:center;top:1218.9px;font-size:21px;line-height:26.25px;color:#f0f0f0;font-weight:bold">M</div><div style="left:513px;top:1255px;width:164px;height:36px;background:#1c1c1c;border-radius:6px"></div><div style="left:593px;top:1259px;width:3px;height:28px;background:#f58a1f"></div><div style="left:513px;top:1297px;width:164px;height:502px;background:#1c1c1c;border-radius:6px"></div><div style="left:513px;top:1327.5px;width:164px;height:2px;background:#3c3c3c"></div><div class="t " style="left:519px;top:1304.3px;font-size:15.5px;line-height:19.375px;color:#a0a0a0;">-1.0</div><div class="t " style="right:2331px;top:1304.3px;font-size:15.5px;line-height:19.375px;color:#f5902a;">0.0 dB</div><div class="t " style="right:2444.5px;top:1382.1px;font-size:15.5px;line-height:19.375px;color:#d8d8d8;">0</div><div style="left:562.5px;top:1391.3px;width:6px;height:2px;background:#c8c8c8"></div><div class="t " style="right:2444.5px;top:1441.0px;font-size:15.5px;line-height:19.375px;color:#d8d8d8;">6</div><div style="left:562.5px;top:1450.2px;width:6px;height:2px;background:#c8c8c8"></div><div class="t " style="right:2444.5px;top:1499.9px;font-size:15.5px;line-height:19.375px;color:#d8d8d8;">12</div><div style="left:562.5px;top:1509.1px;width:6px;height:2px;background:#c8c8c8"></div><div class="t " style="right:2444.5px;top:1554.9px;font-size:15.5px;line-height:19.375px;color:#d8d8d8;">18</div><div style="left:562.5px;top:1564.1px;width:6px;height:2px;background:#c8c8c8"></div><div class="t " style="right:2444.5px;top:1604.0px;font-size:15.5px;line-height:19.375px;color:#d8d8d8;">24</div><div style="left:562.5px;top:1613.2px;width:6px;height:2px;background:#c8c8c8"></div><div class="t " style="right:2444.5px;top:1644.3px;font-size:15.5px;line-height:19.375px;color:#d8d8d8;">30</div><div style="left:562.5px;top:1653.5px;width:6px;height:2px;background:#c8c8c8"></div><div class="t " style="right:2444.5px;top:1677.5px;font-size:15.5px;line-height:19.375px;color:#d8d8d8;">36</div><div style="left:562.5px;top:1686.7px;width:6px;height:2px;background:#c8c8c8"></div><div class="t " style="right:2444.5px;top:1702.5px;font-size:15.5px;line-height:19.375px;color:#d8d8d8;">42</div><div style="left:562.5px;top:1711.7px;width:6px;height:2px;background:#c8c8c8"></div><div class="t " style="right:2444.5px;top:1722.9px;font-size:15.5px;line-height:19.375px;color:#d8d8d8;">48</div><div style="left:562.5px;top:1732.1px;width:6px;height:2px;background:#c8c8c8"></div><div class="t " style="right:2444.5px;top:1748.8px;font-size:15.5px;line-height:19.375px;color:#d8d8d8;">60</div><div style="left:562.5px;top:1758.0px;width:6px;height:2px;background:#c8c8c8"></div><div class="t " style="right:2444.5px;top:1773.5px;font-size:19px;line-height:23.75px;color:#d8d8d8;font-weight:bold">∞</div><div style="left:563px;top:1740px;width:5px;height:1.5px;background:#5a5a5a"></div><div style="left:563px;top:1765px;width:5px;height:1.5px;background:#5a5a5a"></div><div style="left:563px;top:1770px;width:5px;height:1.5px;background:#5a5a5a"></div><div style="left:563px;top:1775px;width:5px;height:1.5px;background:#5a5a5a"></div><div style="left:563px;top:1780px;width:5px;height:1.5px;background:#5a5a5a"></div><div style="left:572px;top:1337px;width:11px;height:455px;background:#333"></div><div style="left:572px;top:1337px;width:11px;height:455px;background:linear-gradient(to bottom,#f07d14 0px,#f28a18 113px,#f5a020 173px,#f9d53a 223px,#c8d83a 258px,#8cc82c 277px,#6cbb2c 365px,#2e962f 455px);clip-path:inset(259.8px 0 0 0)"></div><div style="left:572px;top:1475px;width:11px;height:4px;background:#f5902a"></div><div style="left:584px;top:1337px;width:11px;height:455px;background:#333"></div><div style="left:584px;top:1337px;width:11px;height:455px;background:linear-gradient(to bottom,#f07d14 0px,#f28a18 113px,#f5a020 173px,#f9d53a 223px,#c8d83a 258px,#8cc82c 277px,#6cbb2c 365px,#2e962f 455px);clip-path:inset(225.0px 0 0 0)"></div><div style="left:584px;top:1447px;width:11px;height:4px;background:#f5902a"></div><div style="left:597px;top:1392px;width:55px;height:400px;background:#6b4419"></div><div style="left:597px;top:1391px;width:55px;height:3px;background:#f58a1f"></div><div style="left:506.5px;top:1805px;width:176px;height:11px;background:#7b7b7b"></div><div style="left:683.5px;top:868px;width:37px;height:80px;background:#2e2e2e"></div><div style="left:722px;top:868px;width:99px;height:80px;background:#2e2e2e"></div><div style="left:822.5px;top:868px;width:37px;height:80px;background:#2e2e2e"></div><div style="left:693px;top:900px;width:16.5px;height:16.5px;background:#a8a8a8"></div><svg style="position:absolute;left:831.5px;top:896.5px;" width="28" height="24" viewBox="0 0 28 24"><g fill="#a8a8a8"><rect x="0" y="0" width="20" height="4.5"/><rect x="0" y="7" width="20" height="4.5"/><rect x="0" y="14" width="14" height="4.5"/><path d="M15 10.5l11 6.8-11 6.8z"/></g></svg><svg style="position:absolute;left:756px;top:892.5px;" width="30" height="30" viewBox="0 0 30 30"><circle cx="15" cy="15" r="14" fill="#a8ecff"/><path d="M15 15L15 1A14 14 0 0 0 1.0 15.0z" fill="#3a82d7"/><text x="15" y="22" font-size="18" text-anchor="middle" fill="#1a1a1a" font-family="Liberation Sans" letter-spacing="-1">12</text></svg><div style="left:683.5px;top:949px;width:176px;height:157px;background:#262626"></div><div style="left:683.5px;top:949.5px;width:176px;height:29.5px;background:linear-gradient(#434343,#383838)"></div><div style="left:690.5px;top:958.0px;width:13px;height:13px;background:#f7d53a;border-radius:50%"></div><div class="t " style="left:710px;top:956.3px;font-size:15.5px;line-height:19.375px;color:#dcdcdc;">FX Selector</div><div style="left:683.5px;top:980.5px;width:176px;height:29.5px;background:linear-gradient(#434343,#383838)"></div><div style="left:690.5px;top:989.0px;width:13px;height:13px;background:#f7d53a;border-radius:50%"></div><div class="t " style="left:710px;top:987.3px;font-size:15.5px;line-height:19.375px;color:#dcdcdc;">Time Shift</div><div style="left:683.5px;top:1011.5px;width:176px;height:29.5px;background:linear-gradient(#434343,#383838)"></div><div style="left:690.5px;top:1020.0px;width:13px;height:13px;background:#f7d53a;border-radius:50%"></div><div class="t " style="left:710px;top:1018.3px;font-size:15.5px;line-height:19.375px;color:#dcdcdc;">CLA-76 Stereo</div><svg style="position:absolute;left:689px;top:1050.5px;" width="16" height="16" viewBox="0 0 16 16"><path d="M8 1v14M1 8h14" stroke="#a0a0a0" stroke-width="3.2"/></svg><div class="t " style="right:2146px;top:1049.8px;font-size:15.5px;line-height:19.375px;color:#9a9a9a;">2.6 ms</div><div style="left:683.5px;top:1106px;width:176px;height:101px;background:#484848;border-top:1px solid #555"></div><div class="t " style="left:446px;width:600px;text-align:center;top:1125.3px;font-size:15.5px;line-height:19.375px;color:#8a8a8a;">Delay+</div><div class="t " style="left:446px;width:600px;text-align:center;top:1173.1px;font-size:15.8px;line-height:19.75px;color:#f2f2f2;">Convolution</div><svg style="position:absolute;left:802px;top:1106px;" width="56" height="104" viewBox="0 0 56 104"><defs><linearGradient id="kg" x1="0" y1="0" x2="0" y2="1"><stop offset="0" stop-color="#828282"/><stop offset="1" stop-color="#575757"/></linearGradient></defs><path d="M13.2 44.8 A21 21 0 1 1 42.8 44.8" stroke="#555" stroke-width="3.5" fill="none"/><circle cx="28" cy="30" r="16.5" fill="#383838"/><circle cx="28" cy="30" r="15" fill="url(#kg)"/><path d="M19.5 38.5L23.4 34.6" stroke="#9a9a9a" stroke-width="3.5"/><path d="M13.2 92.8 A21 21 0 1 1 42.8 92.8" stroke="#555" stroke-width="3.5" fill="none"/><circle cx="28" cy="78" r="16.5" fill="#383838"/><circle cx="28" cy="78" r="15" fill="url(#kg)"/><path d="M19.5 86.5L23.4 82.6" stroke="#f2f2f2" stroke-width="3.5"/></svg><div style="left:683.5px;top:1207px;width:176px;height:598px;background:#454545"></div><div style="left:691px;top:1215px;width:162px;height:33.5px;background:#252525;border-radius:6px"></div><div style="left:692.0px;top:1216px;width:52.0px;height:31px;background:linear-gradient(#5d5d5d,#4f4f4f);border-radius:5px 0 0 5px;"></div><div style="left:709.5px;top:1223px;width:17px;height:17px;background:#f5f5f5;border-radius:50%"></div><div style="left:746.0px;top:1216px;width:52.0px;height:31px;background:linear-gradient(#5d5d5d,#4f4f4f);"></div><div class="t " style="left:472.0px;width:600px;text-align:center;top:1218.9px;font-size:21px;line-height:26.25px;color:#f0f0f0;font-weight:bold">S</div><div style="left:800.0px;top:1216px;width:52.0px;height:31px;background:linear-gradient(#5d5d5d,#4f4f4f);border-radius:0 5px 5px 0;"></div><div class="t " style="left:526.0px;width:600px;text-align:center;top:1218.9px;font-size:21px;line-height:26.25px;color:#f0f0f0;font-weight:bold">M</div><div style="left:690px;top:1255px;width:164px;height:36px;background:#1c1c1c;border-radius:6px"></div><div style="left:770px;top:1259px;width:3px;height:28px;background:#f58a1f"></div><div style="left:690px;top:1297px;width:164px;height:502px;background:#1c1c1c;border-radius:6px"></div><div style="left:690px;top:1327.5px;width:164px;height:2px;background:#3c3c3c"></div><div class="t " style="left:696px;top:1304.3px;font-size:15.5px;line-height:19.375px;color:#a0a0a0;">-6.8</div><div class="t " style="right:2154px;top:1304.3px;font-size:15.5px;line-height:19.375px;color:#f5902a;">−5.4 dB</div><div class="t " style="right:2267.5px;top:1382.1px;font-size:15.5px;line-height:19.375px;color:#d8d8d8;">0</div><div style="left:739.5px;top:1391.3px;width:6px;height:2px;background:#c8c8c8"></div><div class="t " style="right:2267.5px;top:1441.0px;font-size:15.5px;line-height:19.375px;color:#d8d8d8;">6</div><div style="left:739.5px;top:1450.2px;width:6px;height:2px;background:#c8c8c8"></div><div class="t " style="right:2267.5px;top:1499.9px;font-size:15.5px;line-height:19.375px;color:#d8d8d8;">12</div><div style="left:739.5px;top:1509.1px;width:6px;height:2px;background:#c8c8c8"></div><div class="t " style="right:2267.5px;top:1554.9px;font-size:15.5px;line-height:19.375px;color:#d8d8d8;">18</div><div style="left:739.5px;top:1564.1px;width:6px;height:2px;background:#c8c8c8"></div><div class="t " style="right:2267.5px;top:1604.0px;font-size:15.5px;line-height:19.375px;color:#d8d8d8;">24</div><div style="left:739.5px;top:1613.2px;width:6px;height:2px;background:#c8c8c8"></div><div class="t " style="right:2267.5px;top:1644.3px;font-size:15.5px;line-height:19.375px;color:#d8d8d8;">30</div><div style="left:739.5px;top:1653.5px;width:6px;height:2px;background:#c8c8c8"></div><div class="t " style="right:2267.5px;top:1677.5px;font-size:15.5px;line-height:19.375px;color:#d8d8d8;">36</div><div style="left:739.5px;top:1686.7px;width:6px;height:2px;background:#c8c8c8"></div><div class="t " style="right:2267.5px;top:1702.5px;font-size:15.5px;line-height:19.375px;color:#d8d8d8;">42</div><div style="left:739.5px;top:1711.7px;width:6px;height:2px;background:#c8c8c8"></div><div class="t " style="right:2267.5px;top:1722.9px;font-size:15.5px;line-height:19.375px;color:#d8d8d8;">48</div><div style="left:739.5px;top:1732.1px;width:6px;height:2px;background:#c8c8c8"></div><div class="t " style="right:2267.5px;top:1748.8px;font-size:15.5px;line-height:19.375px;color:#d8d8d8;">60</div><div style="left:739.5px;top:1758.0px;width:6px;height:2px;background:#c8c8c8"></div><div class="t " style="right:2267.5px;top:1773.5px;font-size:19px;line-height:23.75px;color:#d8d8d8;font-weight:bold">∞</div><div style="left:740px;top:1740px;width:5px;height:1.5px;background:#5a5a5a"></div><div style="left:740px;top:1765px;width:5px;height:1.5px;background:#5a5a5a"></div><div style="left:740px;top:1770px;width:5px;height:1.5px;background:#5a5a5a"></div><div style="left:740px;top:1775px;width:5px;height:1.5px;background:#5a5a5a"></div><div style="left:740px;top:1780px;width:5px;height:1.5px;background:#5a5a5a"></div><div style="left:749px;top:1337px;width:11px;height:455px;background:#333"></div><div style="left:749px;top:1337px;width:11px;height:455px;background:linear-gradient(to bottom,#f07d14 0px,#f28a18 113px,#f5a020 173px,#f9d53a 223px,#c8d83a 258px,#8cc82c 277px,#6cbb2c 365px,#2e962f 455px);clip-path:inset(328.3px 0 0 0)"></div><div style="left:749px;top:1560.6px;width:11px;height:4px;background:#f5c430"></div><div style="left:761px;top:1337px;width:11px;height:455px;background:#333"></div><div style="left:761px;top:1337px;width:11px;height:455px;background:linear-gradient(to bottom,#f07d14 0px,#f28a18 113px,#f5a020 173px,#f9d53a 223px,#c8d83a 258px,#8cc82c 277px,#6cbb2c 365px,#2e962f 455px);clip-path:inset(332.0px 0 0 0)"></div><div style="left:761px;top:1565.8px;width:11px;height:4px;background:#f5c430"></div><div style="left:774px;top:1445.4px;width:55px;height:346.5999999999999px;background:#6b4419"></div><div style="left:774px;top:1444.4px;width:55px;height:3px;background:#f58a1f"></div><div style="left:683.5px;top:1805px;width:176px;height:11px;background:#3a82d7"></div><div style="left:860.5px;top:868px;width:37px;height:80px;background:#2e2e2e"></div><div style="left:899px;top:868px;width:99px;height:80px;background:#2e2e2e"></div><div style="left:999.5px;top:868px;width:37px;height:80px;background:#2e2e2e"></div><div style="left:870px;top:900px;width:16.5px;height:16.5px;background:#a8a8a8"></div><svg style="position:absolute;left:1008.5px;top:896.5px;" width="28" height="24" viewBox="0 0 28 24"><g fill="#a8a8a8"><rect x="0" y="0" width="20" height="4.5"/><rect x="0" y="7" width="20" height="4.5"/><rect x="0" y="14" width="14" height="4.5"/><path d="M15 10.5l11 6.8-11 6.8z"/></g></svg><svg style="position:absolute;left:933px;top:892.5px;" width="30" height="30" viewBox="0 0 30 30"><circle cx="15" cy="15" r="14" fill="#a6ef8a"/><path d="M15 15L15 1A14 14 0 0 0 5.4 4.8z" fill="#4e9b2e"/><text x="15" y="22" font-size="18" text-anchor="middle" fill="#1a1a1a" font-family="Liberation Sans" letter-spacing="-1">12</text></svg><div style="left:860.5px;top:949px;width:176px;height:157px;background:#262626"></div><div style="left:860.5px;top:949.5px;width:176px;height:29.5px;background:linear-gradient(#434343,#383838)"></div><div style="left:867.5px;top:958.0px;width:13px;height:13px;background:#f7d53a;border-radius:50%"></div><div class="t " style="left:887px;top:956.3px;font-size:15.5px;line-height:19.375px;color:#dcdcdc;">Sampler</div><div style="left:860.5px;top:980.5px;width:176px;height:29.5px;background:linear-gradient(#434343,#383838)"></div><div style="left:867.5px;top:989.0px;width:13px;height:13px;background:#f7d53a;border-radius:50%"></div><div class="t " style="left:887px;top:987.3px;font-size:15.5px;line-height:19.375px;color:#dcdcdc;">Saturn 2</div><div style="left:860.5px;top:1011.5px;width:176px;height:29.5px;background:linear-gradient(#434343,#383838)"></div><div style="left:867.5px;top:1020.0px;width:13px;height:13px;background:#f7d53a;border-radius:50%"></div><div class="t " style="left:887px;top:1018.3px;font-size:15.5px;line-height:19.375px;color:#dcdcdc;">Pro-Q 3</div><div style="left:860.5px;top:1042.5px;width:176px;height:29.5px;background:linear-gradient(#434343,#383838)"></div><div style="left:867.5px;top:1051.0px;width:13px;height:13px;background:#f7d53a;border-radius:50%"></div><div class="t " style="left:887px;top:1049.3px;font-size:15.5px;line-height:19.375px;color:#dcdcdc;">Kleverb</div><svg style="position:absolute;left:866px;top:1081.5px;" width="16" height="16" viewBox="0 0 16 16"><path d="M8 1v14M1 8h14" stroke="#a0a0a0" stroke-width="3.2"/></svg><div class="t " style="right:1969px;top:1080.8px;font-size:15.5px;line-height:19.375px;color:#9a9a9a;">7.3 ms</div><div style="left:860.5px;top:1106px;width:176px;height:101px;background:#484848;border-top:1px solid #555"></div><div class="t " style="left:623px;width:600px;text-align:center;top:1125.3px;font-size:15.5px;line-height:19.375px;color:#8a8a8a;">Delay+</div><div class="t " style="left:623px;width:600px;text-align:center;top:1173.1px;font-size:15.8px;line-height:19.75px;color:#8a8a8a;">Convolution</div><svg style="position:absolute;left:979px;top:1106px;" width="56" height="104" viewBox="0 0 56 104"><defs><linearGradient id="kg" x1="0" y1="0" x2="0" y2="1"><stop offset="0" stop-color="#828282"/><stop offset="1" stop-color="#575757"/></linearGradient></defs><path d="M13.2 44.8 A21 21 0 1 1 42.8 44.8" stroke="#555" stroke-width="3.5" fill="none"/><circle cx="28" cy="30" r="16.5" fill="#383838"/><circle cx="28" cy="30" r="15" fill="url(#kg)"/><path d="M19.5 38.5L23.4 34.6" stroke="#9a9a9a" stroke-width="3.5"/><path d="M13.2 92.8 A21 21 0 1 1 42.8 92.8" stroke="#555" stroke-width="3.5" fill="none"/><circle cx="28" cy="78" r="16.5" fill="#383838"/><circle cx="28" cy="78" r="15" fill="url(#kg)"/><path d="M19.5 86.5L23.4 82.6" stroke="#9a9a9a" stroke-width="3.5"/></svg><div style="left:860.5px;top:1207px;width:176px;height:598px;background:#454545"></div><div style="left:868px;top:1215px;width:162px;height:33.5px;background:#252525;border-radius:6px"></div><div style="left:869.0px;top:1216px;width:52.0px;height:31px;background:linear-gradient(#5d5d5d,#4f4f4f);border-radius:5px 0 0 5px;"></div><div style="left:886.5px;top:1223px;width:17px;height:17px;background:#f5f5f5;border-radius:50%"></div><div style="left:923.0px;top:1216px;width:52.0px;height:31px;background:linear-gradient(#5d5d5d,#4f4f4f);"></div><div class="t " style="left:649.0px;width:600px;text-align:center;top:1218.9px;font-size:21px;line-height:26.25px;color:#f0f0f0;font-weight:bold">S</div><div style="left:977.0px;top:1216px;width:52.0px;height:31px;background:linear-gradient(#5d5d5d,#4f4f4f);border-radius:0 5px 5px 0;"></div><div class="t " style="left:703.0px;width:600px;text-align:center;top:1218.9px;font-size:21px;line-height:26.25px;color:#f0f0f0;font-weight:bold">M</div><div style="left:867px;top:1255px;width:164px;height:36px;background:#1c1c1c;border-radius:6px"></div><div style="left:919px;top:1259px;width:30px;height:28px;background:#6b4419"></div><div style="left:917.5px;top:1259px;width:3px;height:28px;background:#f58a1f"></div><div style="left:867px;top:1297px;width:164px;height:502px;background:#1c1c1c;border-radius:6px"></div><div style="left:867px;top:1327.5px;width:164px;height:2px;background:#3c3c3c"></div><div class="t " style="left:873px;top:1304.3px;font-size:15.5px;line-height:19.375px;color:#a0a0a0;">-3.6</div><div class="t " style="right:1977px;top:1304.3px;font-size:15.5px;line-height:19.375px;color:#f5902a;">+2.6 dB</div><div class="t " style="right:2090.5px;top:1382.1px;font-size:15.5px;line-height:19.375px;color:#d8d8d8;">0</div><div style="left:916.5px;top:1391.3px;width:6px;height:2px;background:#c8c8c8"></div><div class="t " style="right:2090.5px;top:1441.0px;font-size:15.5px;line-height:19.375px;color:#d8d8d8;">6</div><div style="left:916.5px;top:1450.2px;width:6px;height:2px;background:#c8c8c8"></div><div class="t " style="right:2090.5px;top:1499.9px;font-size:15.5px;line-height:19.375px;color:#d8d8d8;">12</div><div style="left:916.5px;top:1509.1px;width:6px;height:2px;background:#c8c8c8"></div><div class="t " style="right:2090.5px;top:1554.9px;font-size:15.5px;line-height:19.375px;color:#d8d8d8;">18</div><div style="left:916.5px;top:1564.1px;width:6px;height:2px;background:#c8c8c8"></div><div class="t " style="right:2090.5px;top:1604.0px;font-size:15.5px;line-height:19.375px;color:#d8d8d8;">24</div><div style="left:916.5px;top:1613.2px;width:6px;height:2px;background:#c8c8c8"></div><div class="t " style="right:2090.5px;top:1644.3px;font-size:15.5px;line-height:19.375px;color:#d8d8d8;">30</div><div style="left:916.5px;top:1653.5px;width:6px;height:2px;background:#c8c8c8"></div><div class="t " style="right:2090.5px;top:1677.5px;font-size:15.5px;line-height:19.375px;color:#d8d8d8;">36</div><div style="left:916.5px;top:1686.7px;width:6px;height:2px;background:#c8c8c8"></div><div class="t " style="right:2090.5px;top:1702.5px;font-size:15.5px;line-height:19.375px;color:#d8d8d8;">42</div><div style="left:916.5px;top:1711.7px;width:6px;height:2px;background:#c8c8c8"></div><div class="t " style="right:2090.5px;top:1722.9px;font-size:15.5px;line-height:19.375px;color:#d8d8d8;">48</div><div style="left:916.5px;top:1732.1px;width:6px;height:2px;background:#c8c8c8"></div><div class="t " style="right:2090.5px;top:1748.8px;font-size:15.5px;line-height:19.375px;color:#d8d8d8;">60</div><div style="left:916.5px;top:1758.0px;width:6px;height:2px;background:#c8c8c8"></div><div class="t " style="right:2090.5px;top:1773.5px;font-size:19px;line-height:23.75px;color:#d8d8d8;font-weight:bold">∞</div><div style="left:917px;top:1740px;width:5px;height:1.5px;background:#5a5a5a"></div><div style="left:917px;top:1765px;width:5px;height:1.5px;background:#5a5a5a"></div><div style="left:917px;top:1770px;width:5px;height:1.5px;background:#5a5a5a"></div><div style="left:917px;top:1775px;width:5px;height:1.5px;background:#5a5a5a"></div><div style="left:917px;top:1780px;width:5px;height:1.5px;background:#5a5a5a"></div><div style="left:926px;top:1337px;width:11px;height:455px;background:#333"></div><div style="left:926px;top:1337px;width:11px;height:455px;background:linear-gradient(to bottom,#f07d14 0px,#f28a18 113px,#f5a020 173px,#f9d53a 223px,#c8d83a 258px,#8cc82c 277px,#6cbb2c 365px,#2e962f 455px);clip-path:inset(290.0px 0 0 0)"></div><div style="left:926px;top:1481.8px;width:11px;height:4px;background:#f5902a"></div><div style="left:938px;top:1337px;width:11px;height:455px;background:#333"></div><div style="left:938px;top:1337px;width:11px;height:455px;background:linear-gradient(to bottom,#f07d14 0px,#f28a18 113px,#f5a020 173px,#f9d53a 223px,#c8d83a 258px,#8cc82c 277px,#6cbb2c 365px,#2e962f 455px);clip-path:inset(357.9px 0 0 0)"></div><div style="left:938px;top:1590.7px;width:11px;height:4px;background:#f5c430"></div><div style="left:951px;top:1366.6px;width:55px;height:425.4000000000001px;background:#6b4419"></div><div style="left:951px;top:1365.6px;width:55px;height:3px;background:#f58a1f"></div><div style="left:860.5px;top:1805px;width:176px;height:11px;background:#4e9b2e"></div><div style="left:1037.5px;top:868px;width:37px;height:80px;background:#2e2e2e"></div><div style="left:1076px;top:868px;width:99px;height:80px;background:#2e2e2e"></div><div style="left:1176.5px;top:868px;width:37px;height:80px;background:#2e2e2e"></div><div style="left:1047px;top:900px;width:16.5px;height:16.5px;background:#a8a8a8"></div><svg style="position:absolute;left:1185.5px;top:896.5px;" width="28" height="24" viewBox="0 0 28 24"><g fill="#a8a8a8"><rect x="0" y="0" width="20" height="4.5"/><rect x="0" y="7" width="20" height="4.5"/><rect x="0" y="14" width="14" height="4.5"/><path d="M15 10.5l11 6.8-11 6.8z"/></g></svg><svg style="position:absolute;left:1110px;top:892.5px;" width="30" height="30" viewBox="0 0 30 30"><circle cx="15" cy="15" r="14" fill="#a6f4f4"/><text x="15" y="22" font-size="19" text-anchor="middle" fill="#1a1a1a" font-family="Liberation Sans" letter-spacing="0">3</text></svg><div style="left:1037.5px;top:949px;width:176px;height:157px;background:#262626"></div><div style="left:1037.5px;top:949.5px;width:176px;height:29.5px;background:linear-gradient(#434343,#383838)"></div><div style="left:1044.5px;top:958.0px;width:13px;height:13px;background:#f7d53a;border-radius:50%"></div><div class="t " style="left:1064px;top:956.3px;font-size:15.5px;line-height:19.375px;color:#dcdcdc;">BLEASS Dragonfly</div><div style="left:1037.5px;top:980.5px;width:176px;height:29.5px;background:linear-gradient(#434343,#383838)"></div><div style="left:1044.5px;top:989.0px;width:13px;height:13px;background:#f7d53a;border-radius:50%"></div><div class="t " style="left:1064px;top:987.3px;font-size:15.5px;line-height:19.375px;color:#dcdcdc;">bloom</div><div style="left:1037.5px;top:1011.5px;width:176px;height:29.5px;background:linear-gradient(#434343,#383838)"></div><div style="left:1044.5px;top:1020.0px;width:13px;height:13px;background:#f7d53a;border-radius:50%"></div><div class="t " style="left:1064px;top:1018.3px;font-size:15.5px;line-height:19.375px;color:#dcdcdc;">Satin</div><div style="left:1037.5px;top:1042.5px;width:176px;height:29.5px;background:linear-gradient(#434343,#383838)"></div><div style="left:1044.5px;top:1051.0px;width:13px;height:13px;background:#f7d53a;border-radius:50%"></div><div class="t " style="left:1064px;top:1049.3px;font-size:15.5px;line-height:19.375px;color:#dcdcdc;">VEQ-4K BLACK</div><svg style="position:absolute;left:1043px;top:1081.5px;" width="16" height="16" viewBox="0 0 16 16"><path d="M8 1v14M1 8h14" stroke="#a0a0a0" stroke-width="3.2"/></svg><div class="t " style="right:1792px;top:1080.8px;font-size:15.5px;line-height:19.375px;color:#f5d13a;">25.9 ms</div><div style="left:1037.5px;top:1106px;width:176px;height:101px;background:#484848;border-top:1px solid #555"></div><div class="t " style="left:800px;width:600px;text-align:center;top:1125.3px;font-size:15.5px;line-height:19.375px;color:#f2f2f2;">Delay+</div><div class="t " style="left:800px;width:600px;text-align:center;top:1173.1px;font-size:15.8px;line-height:19.75px;color:#8a8a8a;">Convolution</div><svg style="position:absolute;left:1156px;top:1106px;" width="56" height="104" viewBox="0 0 56 104"><defs><linearGradient id="kg" x1="0" y1="0" x2="0" y2="1"><stop offset="0" stop-color="#828282"/><stop offset="1" stop-color="#575757"/></linearGradient></defs><path d="M13.2 44.8 A21 21 0 1 1 42.8 44.8" stroke="#555" stroke-width="3.5" fill="none"/><path d="M13.2 44.8 A21 21 0 0 1 10.4 18.5" stroke="#f5dc2a" stroke-width="3.5" fill="none"/><circle cx="28" cy="30" r="16.5" fill="#383838"/><circle cx="28" cy="30" r="15" fill="url(#kg)"/><path d="M18.0 23.4L22.6 26.4" stroke="#f2f2f2" stroke-width="3.5"/><path d="M13.2 92.8 A21 21 0 1 1 42.8 92.8" stroke="#555" stroke-width="3.5" fill="none"/><circle cx="28" cy="78" r="16.5" fill="#383838"/><circle cx="28" cy="78" r="15" fill="url(#kg)"/><path d="M19.5 86.5L23.4 82.6" stroke="#9a9a9a" stroke-width="3.5"/></svg><div style="left:1037.5px;top:1207px;width:176px;height:598px;background:#454545"></div><div style="left:1045px;top:1215px;width:162px;height:33.5px;background:#252525;border-radius:6px"></div><div style="left:1046.0px;top:1216px;width:52.0px;height:31px;background:linear-gradient(#5d5d5d,#4f4f4f);border-radius:5px 0 0 5px;"></div><div style="left:1063.5px;top:1223px;width:17px;height:17px;background:#f5f5f5;border-radius:50%"></div><div style="left:1100.0px;top:1216px;width:52.0px;height:31px;background:linear-gradient(#5d5d5d,#4f4f4f);"></div><div class="t " style="left:826.0px;width:600px;text-align:center;top:1218.9px;font-size:21px;line-height:26.25px;color:#f0f0f0;font-weight:bold">S</div><div style="left:1154.0px;top:1216px;width:52.0px;height:31px;background:linear-gradient(#5d5d5d,#4f4f4f);border-radius:0 5px 5px 0;"></div><div class="t " style="left:880.0px;width:600px;text-align:center;top:1218.9px;font-size:21px;line-height:26.25px;color:#f0f0f0;font-weight:bold">M</div><div style="left:1044px;top:1255px;width:164px;height:36px;background:#1c1c1c;border-radius:6px"></div><div style="left:1126px;top:1259px;width:29px;height:28px;background:#6b4419"></div><div style="left:1153.5px;top:1259px;width:3px;height:28px;background:#f58a1f"></div><div style="left:1044px;top:1297px;width:164px;height:502px;background:#1c1c1c;border-radius:6px"></div><div style="left:1044px;top:1327.5px;width:164px;height:2px;background:#3c3c3c"></div><div class="t " style="left:1050px;top:1304.3px;font-size:15.5px;line-height:19.375px;color:#a0a0a0;">-2.4</div><div class="t " style="right:1800px;top:1304.3px;font-size:15.5px;line-height:19.375px;color:#f5902a;">−2.5 dB</div><div class="t " style="right:1913.5px;top:1382.1px;font-size:15.5px;line-height:19.375px;color:#d8d8d8;">0</div><div style="left:1093.5px;top:1391.3px;width:6px;height:2px;background:#c8c8c8"></div><div class="t " style="right:1913.5px;top:1441.0px;font-size:15.5px;line-height:19.375px;color:#d8d8d8;">6</div><div style="left:1093.5px;top:1450.2px;width:6px;height:2px;background:#c8c8c8"></div><div class="t " style="right:1913.5px;top:1499.9px;font-size:15.5px;line-height:19.375px;color:#d8d8d8;">12</div><div style="left:1093.5px;top:1509.1px;width:6px;height:2px;background:#c8c8c8"></div><div class="t " style="right:1913.5px;top:1554.9px;font-size:15.5px;line-height:19.375px;color:#d8d8d8;">18</div><div style="left:1093.5px;top:1564.1px;width:6px;height:2px;background:#c8c8c8"></div><div class="t " style="right:1913.5px;top:1604.0px;font-size:15.5px;line-height:19.375px;color:#d8d8d8;">24</div><div style="left:1093.5px;top:1613.2px;width:6px;height:2px;background:#c8c8c8"></div><div class="t " style="right:1913.5px;top:1644.3px;font-size:15.5px;line-height:19.375px;color:#d8d8d8;">30</div><div style="left:1093.5px;top:1653.5px;width:6px;height:2px;background:#c8c8c8"></div><div class="t " style="right:1913.5px;top:1677.5px;font-size:15.5px;line-height:19.375px;color:#d8d8d8;">36</div><div style="left:1093.5px;top:1686.7px;width:6px;height:2px;background:#c8c8c8"></div><div class="t " style="right:1913.5px;top:1702.5px;font-size:15.5px;line-height:19.375px;color:#d8d8d8;">42</div><div style="left:1093.5px;top:1711.7px;width:6px;height:2px;background:#c8c8c8"></div><div class="t " style="right:1913.5px;top:1722.9px;font-size:15.5px;line-height:19.375px;color:#d8d8d8;">48</div><div style="left:1093.5px;top:1732.1px;width:6px;height:2px;background:#c8c8c8"></div><div class="t " style="right:1913.5px;top:1748.8px;font-size:15.5px;line-height:19.375px;color:#d8d8d8;">60</div><div style="left:1093.5px;top:1758.0px;width:6px;height:2px;background:#c8c8c8"></div><div class="t " style="right:1913.5px;top:1773.5px;font-size:19px;line-height:23.75px;color:#d8d8d8;font-weight:bold">∞</div><div style="left:1094px;top:1740px;width:5px;height:1.5px;background:#5a5a5a"></div><div style="left:1094px;top:1765px;width:5px;height:1.5px;background:#5a5a5a"></div><div style="left:1094px;top:1770px;width:5px;height:1.5px;background:#5a5a5a"></div><div style="left:1094px;top:1775px;width:5px;height:1.5px;background:#5a5a5a"></div><div style="left:1094px;top:1780px;width:5px;height:1.5px;background:#5a5a5a"></div><div style="left:1103px;top:1337px;width:11px;height:455px;background:#333"></div><div style="left:1103px;top:1337px;width:11px;height:455px;background:linear-gradient(to bottom,#f07d14 0px,#f28a18 113px,#f5a020 173px,#f9d53a 223px,#c8d83a 258px,#8cc82c 277px,#6cbb2c 365px,#2e962f 455px);clip-path:inset(283.0px 0 0 0)"></div><div style="left:1103px;top:1518.6px;width:11px;height:4px;background:#f5902a"></div><div style="left:1115px;top:1337px;width:11px;height:455px;background:#333"></div><div style="left:1115px;top:1337px;width:11px;height:455px;background:linear-gradient(to bottom,#f07d14 0px,#f28a18 113px,#f5a020 173px,#f9d53a 223px,#c8d83a 258px,#8cc82c 277px,#6cbb2c 365px,#2e962f 455px);clip-path:inset(227.2px 0 0 0)"></div><div style="left:1115px;top:1446.5px;width:11px;height:4px;background:#f5902a"></div><div style="left:1128px;top:1416.4px;width:55px;height:375.5999999999999px;background:#6b4419"></div><div style="left:1128px;top:1415.4px;width:55px;height:3px;background:#f58a1f"></div><div style="left:1037.5px;top:1805px;width:176px;height:11px;background:#0d8b95"></div><div style="left:1214.5px;top:868px;width:37px;height:80px;background:#2e2e2e"></div><div style="left:1253px;top:868px;width:99px;height:80px;background:#2e2e2e"></div><div style="left:1353.5px;top:868px;width:37px;height:80px;background:#2e2e2e"></div><div style="left:1224px;top:900px;width:16.5px;height:16.5px;background:#a8a8a8"></div><svg style="position:absolute;left:1362.5px;top:896.5px;" width="28" height="24" viewBox="0 0 28 24"><g fill="#a8a8a8"><rect x="0" y="0" width="20" height="4.5"/><rect x="0" y="7" width="20" height="4.5"/><rect x="0" y="14" width="14" height="4.5"/><path d="M15 10.5l11 6.8-11 6.8z"/></g></svg><svg style="position:absolute;left:1287px;top:892.5px;" width="30" height="30" viewBox="0 0 30 30"><circle cx="15" cy="15" r="14" fill="#f9b8ea"/><path d="M15 15L15 1A14 14 0 0 0 9.8 2.0z" fill="#fb5f8c"/><text x="15" y="22" font-size="19" text-anchor="middle" fill="#1a1a1a" font-family="Liberation Sans" letter-spacing="0">3</text></svg><div style="left:1214.5px;top:949px;width:176px;height:157px;background:#262626"></div><div style="left:1214.5px;top:949.5px;width:176px;height:29.5px;background:linear-gradient(#434343,#383838)"></div><div style="left:1221.5px;top:958.0px;width:13px;height:13px;background:#f7d53a;border-radius:50%"></div><div class="t " style="left:1241px;top:956.3px;font-size:15.5px;line-height:19.375px;color:#dcdcdc;">Instrument Layer</div><div style="left:1214.5px;top:980.5px;width:176px;height:29.5px;background:linear-gradient(#434343,#383838)"></div><div style="left:1221.5px;top:989.0px;width:13px;height:13px;background:#f7d53a;border-radius:50%"></div><div class="t " style="left:1241px;top:987.3px;font-size:15.5px;line-height:19.375px;color:#dcdcdc;">Loud Split</div><div style="left:1214.5px;top:1011.5px;width:176px;height:29.5px;background:linear-gradient(#434343,#383838)"></div><div style="left:1221.5px;top:1020.0px;width:13px;height:13px;background:#f7d53a;border-radius:50%"></div><div class="t " style="left:1241px;top:1018.3px;font-size:15.5px;line-height:19.375px;color:#dcdcdc;">BBD-Chorus</div><svg style="position:absolute;left:1220px;top:1050.5px;" width="16" height="16" viewBox="0 0 16 16"><path d="M8 1v14M1 8h14" stroke="#a0a0a0" stroke-width="3.2"/></svg><div class="t " style="right:1615px;top:1049.8px;font-size:15.5px;line-height:19.375px;color:#f5d13a;">46.7 ms</div><div style="left:1214.5px;top:1106px;width:176px;height:101px;background:#484848;border-top:1px solid #555"></div><div class="t " style="left:977px;width:600px;text-align:center;top:1125.3px;font-size:15.5px;line-height:19.375px;color:#f2f2f2;">Delay+</div><div class="t " style="left:977px;width:600px;text-align:center;top:1173.1px;font-size:15.8px;line-height:19.75px;color:#f2f2f2;">Convolution</div><svg style="position:absolute;left:1333px;top:1106px;" width="56" height="104" viewBox="0 0 56 104"><defs><linearGradient id="kg" x1="0" y1="0" x2="0" y2="1"><stop offset="0" stop-color="#828282"/><stop offset="1" stop-color="#575757"/></linearGradient></defs><path d="M13.2 44.8 A21 21 0 1 1 42.8 44.8" stroke="#555" stroke-width="3.5" fill="none"/><path d="M13.2 44.8 A21 21 0 0 1 8.4 37.4" stroke="#f5dc2a" stroke-width="3.5" fill="none"/><circle cx="28" cy="30" r="16.5" fill="#383838"/><circle cx="28" cy="30" r="15" fill="url(#kg)"/><path d="M16.8 34.2L21.9 32.3" stroke="#f2f2f2" stroke-width="3.5"/><path d="M13.2 92.8 A21 21 0 1 1 42.8 92.8" stroke="#555" stroke-width="3.5" fill="none"/><path d="M13.2 92.8 A21 21 0 0 1 7.0 77.7" stroke="#f5dc2a" stroke-width="3.5" fill="none"/><circle cx="28" cy="78" r="16.5" fill="#383838"/><circle cx="28" cy="78" r="15" fill="url(#kg)"/><path d="M16.0 77.8L21.5 77.9" stroke="#f2f2f2" stroke-width="3.5"/></svg><div style="left:1214.5px;top:1207px;width:176px;height:598px;background:#454545"></div><div style="left:1222px;top:1215px;width:162px;height:33.5px;background:#252525;border-radius:6px"></div><div style="left:1223.0px;top:1216px;width:52.0px;height:31px;background:linear-gradient(#5d5d5d,#4f4f4f);border-radius:5px 0 0 5px;"></div><div style="left:1240.5px;top:1223px;width:17px;height:17px;background:#f5f5f5;border-radius:50%"></div><div style="left:1277.0px;top:1216px;width:52.0px;height:31px;background:linear-gradient(#5d5d5d,#4f4f4f);"></div><div class="t " style="left:1003.0px;width:600px;text-align:center;top:1218.9px;font-size:21px;line-height:26.25px;color:#f0f0f0;font-weight:bold">S</div><div style="left:1331.0px;top:1216px;width:52.0px;height:31px;background:linear-gradient(#5d5d5d,#4f4f4f);border-radius:0 5px 5px 0;"></div><div class="t " style="left:1057.0px;width:600px;text-align:center;top:1218.9px;font-size:21px;line-height:26.25px;color:#f0f0f0;font-weight:bold">M</div><div style="left:1221px;top:1255px;width:164px;height:36px;background:#1c1c1c;border-radius:6px"></div><div style="left:1301px;top:1259px;width:3px;height:28px;background:#f58a1f"></div><div style="left:1221px;top:1297px;width:164px;height:502px;background:#1c1c1c;border-radius:6px"></div><div style="left:1221px;top:1327.5px;width:164px;height:2px;background:#3c3c3c"></div><div class="t " style="left:1227px;top:1304.3px;font-size:15.5px;line-height:19.375px;color:#a0a0a0;">-9.2</div><div class="t " style="right:1623px;top:1304.3px;font-size:15.5px;line-height:19.375px;color:#f5902a;">−5.5 dB</div><div class="t " style="right:1736.5px;top:1382.1px;font-size:15.5px;line-height:19.375px;color:#d8d8d8;">0</div><div style="left:1270.5px;top:1391.3px;width:6px;height:2px;background:#c8c8c8"></div><div class="t " style="right:1736.5px;top:1441.0px;font-size:15.5px;line-height:19.375px;color:#d8d8d8;">6</div><div style="left:1270.5px;top:1450.2px;width:6px;height:2px;background:#c8c8c8"></div><div class="t " style="right:1736.5px;top:1499.9px;font-size:15.5px;line-height:19.375px;color:#d8d8d8;">12</div><div style="left:1270.5px;top:1509.1px;width:6px;height:2px;background:#c8c8c8"></div><div class="t " style="right:1736.5px;top:1554.9px;font-size:15.5px;line-height:19.375px;color:#d8d8d8;">18</div><div style="left:1270.5px;top:1564.1px;width:6px;height:2px;background:#c8c8c8"></div><div class="t " style="right:1736.5px;top:1604.0px;font-size:15.5px;line-height:19.375px;color:#d8d8d8;">24</div><div style="left:1270.5px;top:1613.2px;width:6px;height:2px;background:#c8c8c8"></div><div class="t " style="right:1736.5px;top:1644.3px;font-size:15.5px;line-height:19.375px;color:#d8d8d8;">30</div><div style="left:1270.5px;top:1653.5px;width:6px;height:2px;background:#c8c8c8"></div><div class="t " style="right:1736.5px;top:1677.5px;font-size:15.5px;line-height:19.375px;color:#d8d8d8;">36</div><div style="left:1270.5px;top:1686.7px;width:6px;height:2px;background:#c8c8c8"></div><div class="t " style="right:1736.5px;top:1702.5px;font-size:15.5px;line-height:19.375px;color:#d8d8d8;">42</div><div style="left:1270.5px;top:1711.7px;width:6px;height:2px;background:#c8c8c8"></div><div class="t " style="right:1736.5px;top:1722.9px;font-size:15.5px;line-height:19.375px;color:#d8d8d8;">48</div><div style="left:1270.5px;top:1732.1px;width:6px;height:2px;background:#c8c8c8"></div><div class="t " style="right:1736.5px;top:1748.8px;font-size:15.5px;line-height:19.375px;color:#d8d8d8;">60</div><div style="left:1270.5px;top:1758.0px;width:6px;height:2px;background:#c8c8c8"></div><div class="t " style="right:1736.5px;top:1773.5px;font-size:19px;line-height:23.75px;color:#d8d8d8;font-weight:bold">∞</div><div style="left:1271px;top:1740px;width:5px;height:1.5px;background:#5a5a5a"></div><div style="left:1271px;top:1765px;width:5px;height:1.5px;background:#5a5a5a"></div><div style="left:1271px;top:1770px;width:5px;height:1.5px;background:#5a5a5a"></div><div style="left:1271px;top:1775px;width:5px;height:1.5px;background:#5a5a5a"></div><div style="left:1271px;top:1780px;width:5px;height:1.5px;background:#5a5a5a"></div><div style="left:1280px;top:1337px;width:11px;height:455px;background:#333"></div><div style="left:1280px;top:1337px;width:11px;height:455px;background:linear-gradient(to bottom,#f07d14 0px,#f28a18 113px,#f5a020 173px,#f9d53a 223px,#c8d83a 258px,#8cc82c 277px,#6cbb2c 365px,#2e962f 455px);clip-path:inset(260.9px 0 0 0)"></div><div style="left:1280px;top:1562px;width:11px;height:4px;background:#f5c430"></div><div style="left:1292px;top:1337px;width:11px;height:455px;background:#333"></div><div style="left:1292px;top:1337px;width:11px;height:455px;background:linear-gradient(to bottom,#f07d14 0px,#f28a18 113px,#f5a020 173px,#f9d53a 223px,#c8d83a 258px,#8cc82c 277px,#6cbb2c 365px,#2e962f 455px);clip-path:inset(222.0px 0 0 0)"></div><div style="left:1292px;top:1509px;width:11px;height:4px;background:#f5902a"></div><div style="left:1305px;top:1446.4px;width:55px;height:345.5999999999999px;background:#6b4419"></div><div style="left:1305px;top:1445.4px;width:55px;height:3px;background:#f58a1f"></div><div style="left:1214.5px;top:1805px;width:176px;height:11px;background:#fb5f8c"></div><div style="left:1391.5px;top:868px;width:176px;height:80px;background:#2a2a2a"></div><div style="left:1391.5px;top:949px;width:176px;height:157px;background:#262626"></div><div style="left:1391.5px;top:949.5px;width:176px;height:29.5px;background:linear-gradient(#434343,#383838)"></div><div style="left:1398.5px;top:958.0px;width:13px;height:13px;background:#f7d53a;border-radius:50%"></div><div class="t " style="left:1418px;top:956.3px;font-size:15.5px;line-height:19.375px;color:#dcdcdc;">Polymer</div><div style="left:1391.5px;top:980.5px;width:176px;height:29.5px;background:linear-gradient(#434343,#383838)"></div><div style="left:1398.5px;top:989.0px;width:13px;height:13px;background:#f7d53a;border-radius:50%"></div><div class="t " style="left:1418px;top:987.3px;font-size:15.5px;line-height:19.375px;color:#dcdcdc;">XY FX</div><svg style="position:absolute;left:1397px;top:1019.5px;" width="16" height="16" viewBox="0 0 16 16"><path d="M8 1v14M1 8h14" stroke="#a0a0a0" stroke-width="3.2"/></svg><div class="t " style="right:1438px;top:1018.8px;font-size:15.5px;line-height:19.375px;color:#9a9a9a;">0.3 ms</div><div style="left:1391.5px;top:1106px;width:176px;height:101px;background:#484848;border-top:1px solid #555"></div><div class="t " style="left:1154px;width:600px;text-align:center;top:1125.3px;font-size:15.5px;line-height:19.375px;color:#8a8a8a;">Delay+</div><div class="t " style="left:1154px;width:600px;text-align:center;top:1173.1px;font-size:15.8px;line-height:19.75px;color:#8a8a8a;">Convolution</div><svg style="position:absolute;left:1510px;top:1106px;" width="56" height="104" viewBox="0 0 56 104"><defs><linearGradient id="kg" x1="0" y1="0" x2="0" y2="1"><stop offset="0" stop-color="#828282"/><stop offset="1" stop-color="#575757"/></linearGradient></defs><path d="M13.2 44.8 A21 21 0 1 1 42.8 44.8" stroke="#555" stroke-width="3.5" fill="none"/><circle cx="28" cy="30" r="16.5" fill="#383838"/><circle cx="28" cy="30" r="15" fill="url(#kg)"/><path d="M19.5 38.5L23.4 34.6" stroke="#9a9a9a" stroke-width="3.5"/><path d="M13.2 92.8 A21 21 0 1 1 42.8 92.8" stroke="#555" stroke-width="3.5" fill="none"/><circle cx="28" cy="78" r="16.5" fill="#383838"/><circle cx="28" cy="78" r="15" fill="url(#kg)"/><path d="M19.5 86.5L23.4 82.6" stroke="#9a9a9a" stroke-width="3.5"/></svg><div style="left:1391.5px;top:1207px;width:176px;height:598px;background:#454545"></div><div style="left:1399px;top:1215px;width:162px;height:33.5px;background:#252525;border-radius:6px"></div><div style="left:1400.0px;top:1216px;width:79.0px;height:31px;background:linear-gradient(#5d5d5d,#4f4f4f);border-radius:5px 0 0 5px;"></div><div class="t " style="left:1139.5px;width:600px;text-align:center;top:1218.9px;font-size:21px;line-height:26.25px;color:#f0f0f0;font-weight:bold">S</div><div style="left:1481.0px;top:1216px;width:79.0px;height:31px;background:linear-gradient(#5d5d5d,#4f4f4f);border-radius:0 5px 5px 0;"></div><div class="t " style="left:1220.5px;width:600px;text-align:center;top:1218.9px;font-size:21px;line-height:26.25px;color:#f0f0f0;font-weight:bold">M</div><div style="left:1398px;top:1255px;width:164px;height:36px;background:#1c1c1c;border-radius:6px"></div><div style="left:1459px;top:1259px;width:22px;height:28px;background:#6b4419"></div><div style="left:1479.5px;top:1259px;width:3px;height:28px;background:#f58a1f"></div><div style="left:1398px;top:1297px;width:164px;height:502px;background:#1c1c1c;border-radius:6px"></div><div style="left:1398px;top:1327.5px;width:164px;height:2px;background:#3c3c3c"></div><div class="t " style="left:1404px;top:1304.3px;font-size:15.5px;line-height:19.375px;color:#a0a0a0;">-18.7</div><div class="t " style="right:1446px;top:1304.3px;font-size:15.5px;line-height:19.375px;color:#f5902a;">−19.8 dB</div><div class="t " style="right:1559.5px;top:1382.1px;font-size:15.5px;line-height:19.375px;color:#d8d8d8;">0</div><div style="left:1447.5px;top:1391.3px;width:6px;height:2px;background:#c8c8c8"></div><div class="t " style="right:1559.5px;top:1441.0px;font-size:15.5px;line-height:19.375px;color:#d8d8d8;">6</div><div style="left:1447.5px;top:1450.2px;width:6px;height:2px;background:#c8c8c8"></div><div class="t " style="right:1559.5px;top:1499.9px;font-size:15.5px;line-height:19.375px;color:#d8d8d8;">12</div><div style="left:1447.5px;top:1509.1px;width:6px;height:2px;background:#c8c8c8"></div><div class="t " style="right:1559.5px;top:1554.9px;font-size:15.5px;line-height:19.375px;color:#d8d8d8;">18</div><div style="left:1447.5px;top:1564.1px;width:6px;height:2px;background:#c8c8c8"></div><div class="t " style="right:1559.5px;top:1604.0px;font-size:15.5px;line-height:19.375px;color:#d8d8d8;">24</div><div style="left:1447.5px;top:1613.2px;width:6px;height:2px;background:#c8c8c8"></div><div class="t " style="right:1559.5px;top:1644.3px;font-size:15.5px;line-height:19.375px;color:#d8d8d8;">30</div><div style="left:1447.5px;top:1653.5px;width:6px;height:2px;background:#c8c8c8"></div><div class="t " style="right:1559.5px;top:1677.5px;font-size:15.5px;line-height:19.375px;color:#d8d8d8;">36</div><div style="left:1447.5px;top:1686.7px;width:6px;height:2px;background:#c8c8c8"></div><div class="t " style="right:1559.5px;top:1702.5px;font-size:15.5px;line-height:19.375px;color:#d8d8d8;">42</div><div style="left:1447.5px;top:1711.7px;width:6px;height:2px;background:#c8c8c8"></div><div class="t " style="right:1559.5px;top:1722.9px;font-size:15.5px;line-height:19.375px;color:#d8d8d8;">48</div><div style="left:1447.5px;top:1732.1px;width:6px;height:2px;background:#c8c8c8"></div><div class="t " style="right:1559.5px;top:1748.8px;font-size:15.5px;line-height:19.375px;color:#d8d8d8;">60</div><div style="left:1447.5px;top:1758.0px;width:6px;height:2px;background:#c8c8c8"></div><div class="t " style="right:1559.5px;top:1773.5px;font-size:19px;line-height:23.75px;color:#d8d8d8;font-weight:bold">∞</div><div style="left:1448px;top:1740px;width:5px;height:1.5px;background:#5a5a5a"></div><div style="left:1448px;top:1765px;width:5px;height:1.5px;background:#5a5a5a"></div><div style="left:1448px;top:1770px;width:5px;height:1.5px;background:#5a5a5a"></div><div style="left:1448px;top:1775px;width:5px;height:1.5px;background:#5a5a5a"></div><div style="left:1448px;top:1780px;width:5px;height:1.5px;background:#5a5a5a"></div><div style="left:1457px;top:1337px;width:11px;height:455px;background:#333"></div><div style="left:1457px;top:1337px;width:11px;height:455px;background:linear-gradient(to bottom,#f07d14 0px,#f28a18 113px,#f5a020 173px,#f9d53a 223px,#c8d83a 258px,#8cc82c 277px,#6cbb2c 365px,#2e962f 455px);clip-path:inset(297.2px 0 0 0)"></div><div style="left:1457px;top:1595.4px;width:11px;height:4px;background:#f5c430"></div><div style="left:1469px;top:1337px;width:11px;height:455px;background:#333"></div><div style="left:1469px;top:1337px;width:11px;height:455px;background:linear-gradient(to bottom,#f07d14 0px,#f28a18 113px,#f5a020 173px,#f9d53a 223px,#c8d83a 258px,#8cc82c 277px,#6cbb2c 365px,#2e962f 455px);clip-path:inset(332.5px 0 0 0)"></div><div style="left:1469px;top:1639px;width:11px;height:4px;background:#b8d83a"></div><div style="left:1482px;top:1580.8px;width:55px;height:211.20000000000005px;background:#6b4419"></div><div style="left:1482px;top:1579.8px;width:55px;height:3px;background:#f58a1f"></div><div style="left:1391.5px;top:1805px;width:176px;height:11px;background:#fb5f8c"></div><div style="left:1568.5px;top:868px;width:176px;height:80px;background:#2a2a2a"></div><div style="left:1568.5px;top:949px;width:176px;height:157px;background:#262626"></div><div style="left:1568.5px;top:949.5px;width:176px;height:29.5px;background:linear-gradient(#434343,#383838)"></div><div style="left:1575.5px;top:958.0px;width:13px;height:13px;background:#f7d53a;border-radius:50%"></div><div class="t " style="left:1595px;top:956.3px;font-size:15.5px;line-height:19.375px;color:#dcdcdc;">Polymer</div><svg style="position:absolute;left:1574px;top:988.5px;" width="16" height="16" viewBox="0 0 16 16"><path d="M8 1v14M1 8h14" stroke="#a0a0a0" stroke-width="3.2"/></svg><div class="t " style="right:1261px;top:987.8px;font-size:15.5px;line-height:19.375px;color:#9a9a9a;">0.3 ms</div><div style="left:1568.5px;top:1106px;width:176px;height:101px;background:#484848;border-top:1px solid #555"></div><div class="t " style="left:1331px;width:600px;text-align:center;top:1125.3px;font-size:15.5px;line-height:19.375px;color:#8a8a8a;">Delay+</div><div class="t " style="left:1331px;width:600px;text-align:center;top:1173.1px;font-size:15.8px;line-height:19.75px;color:#8a8a8a;">Convolution</div><svg style="position:absolute;left:1687px;top:1106px;" width="56" height="104" viewBox="0 0 56 104"><defs><linearGradient id="kg" x1="0" y1="0" x2="0" y2="1"><stop offset="0" stop-color="#828282"/><stop offset="1" stop-color="#575757"/></linearGradient></defs><path d="M13.2 44.8 A21 21 0 1 1 42.8 44.8" stroke="#555" stroke-width="3.5" fill="none"/><circle cx="28" cy="30" r="16.5" fill="#383838"/><circle cx="28" cy="30" r="15" fill="url(#kg)"/><path d="M19.5 38.5L23.4 34.6" stroke="#9a9a9a" stroke-width="3.5"/><path d="M13.2 92.8 A21 21 0 1 1 42.8 92.8" stroke="#555" stroke-width="3.5" fill="none"/><circle cx="28" cy="78" r="16.5" fill="#383838"/><circle cx="28" cy="78" r="15" fill="url(#kg)"/><path d="M19.5 86.5L23.4 82.6" stroke="#9a9a9a" stroke-width="3.5"/></svg><div style="left:1568.5px;top:1207px;width:176px;height:598px;background:#454545"></div><div style="left:1576px;top:1215px;width:162px;height:33.5px;background:#252525;border-radius:6px"></div><div style="left:1577.0px;top:1216px;width:79.0px;height:31px;background:linear-gradient(#5d5d5d,#4f4f4f);border-radius:5px 0 0 5px;"></div><div class="t " style="left:1316.5px;width:600px;text-align:center;top:1218.9px;font-size:21px;line-height:26.25px;color:#f0f0f0;font-weight:bold">S</div><div style="left:1658.0px;top:1216px;width:79.0px;height:31px;background:linear-gradient(#5d5d5d,#4f4f4f);border-radius:0 5px 5px 0;"></div><div class="t " style="left:1397.5px;width:600px;text-align:center;top:1218.9px;font-size:21px;line-height:26.25px;color:#f0f0f0;font-weight:bold">M</div><div style="left:1575px;top:1255px;width:164px;height:36px;background:#1c1c1c;border-radius:6px"></div><div style="left:1657px;top:1259px;width:21px;height:28px;background:#6b4419"></div><div style="left:1655.5px;top:1259px;width:3px;height:28px;background:#f58a1f"></div><div style="left:1575px;top:1297px;width:164px;height:502px;background:#1c1c1c;border-radius:6px"></div><div style="left:1575px;top:1327.5px;width:164px;height:2px;background:#3c3c3c"></div><div class="t " style="left:1581px;top:1304.3px;font-size:15.5px;line-height:19.375px;color:#a0a0a0;">-6.6</div><div class="t " style="right:1269px;top:1304.3px;font-size:15.5px;line-height:19.375px;color:#f5902a;">−5.4 dB</div><div class="t " style="right:1382.5px;top:1382.1px;font-size:15.5px;line-height:19.375px;color:#d8d8d8;">0</div><div style="left:1624.5px;top:1391.3px;width:6px;height:2px;background:#c8c8c8"></div><div class="t " style="right:1382.5px;top:1441.0px;font-size:15.5px;line-height:19.375px;color:#d8d8d8;">6</div><div style="left:1624.5px;top:1450.2px;width:6px;height:2px;background:#c8c8c8"></div><div class="t " style="right:1382.5px;top:1499.9px;font-size:15.5px;line-height:19.375px;color:#d8d8d8;">12</div><div style="left:1624.5px;top:1509.1px;width:6px;height:2px;background:#c8c8c8"></div><div class="t " style="right:1382.5px;top:1554.9px;font-size:15.5px;line-height:19.375px;color:#d8d8d8;">18</div><div style="left:1624.5px;top:1564.1px;width:6px;height:2px;background:#c8c8c8"></div><div class="t " style="right:1382.5px;top:1604.0px;font-size:15.5px;line-height:19.375px;color:#d8d8d8;">24</div><div style="left:1624.5px;top:1613.2px;width:6px;height:2px;background:#c8c8c8"></div><div class="t " style="right:1382.5px;top:1644.3px;font-size:15.5px;line-height:19.375px;color:#d8d8d8;">30</div><div style="left:1624.5px;top:1653.5px;width:6px;height:2px;background:#c8c8c8"></div><div class="t " style="right:1382.5px;top:1677.5px;font-size:15.5px;line-height:19.375px;color:#d8d8d8;">36</div><div style="left:1624.5px;top:1686.7px;width:6px;height:2px;background:#c8c8c8"></div><div class="t " style="right:1382.5px;top:1702.5px;font-size:15.5px;line-height:19.375px;color:#d8d8d8;">42</div><div style="left:1624.5px;top:1711.7px;width:6px;height:2px;background:#c8c8c8"></div><div class="t " style="right:1382.5px;top:1722.9px;font-size:15.5px;line-height:19.375px;color:#d8d8d8;">48</div><div style="left:1624.5px;top:1732.1px;width:6px;height:2px;background:#c8c8c8"></div><div class="t " style="right:1382.5px;top:1748.8px;font-size:15.5px;line-height:19.375px;color:#d8d8d8;">60</div><div style="left:1624.5px;top:1758.0px;width:6px;height:2px;background:#c8c8c8"></div><div class="t " style="right:1382.5px;top:1773.5px;font-size:19px;line-height:23.75px;color:#d8d8d8;font-weight:bold">∞</div><div style="left:1625px;top:1740px;width:5px;height:1.5px;background:#5a5a5a"></div><div style="left:1625px;top:1765px;width:5px;height:1.5px;background:#5a5a5a"></div><div style="left:1625px;top:1770px;width:5px;height:1.5px;background:#5a5a5a"></div><div style="left:1625px;top:1775px;width:5px;height:1.5px;background:#5a5a5a"></div><div style="left:1625px;top:1780px;width:5px;height:1.5px;background:#5a5a5a"></div><div style="left:1634px;top:1337px;width:11px;height:455px;background:#333"></div><div style="left:1634px;top:1337px;width:11px;height:455px;background:linear-gradient(to bottom,#f07d14 0px,#f28a18 113px,#f5a020 173px,#f9d53a 223px,#c8d83a 258px,#8cc82c 277px,#6cbb2c 365px,#2e962f 455px);clip-path:inset(230.8px 0 0 0)"></div><div style="left:1634px;top:1528.5px;width:11px;height:4px;background:#f5902a"></div><div style="left:1646px;top:1337px;width:11px;height:455px;background:#333"></div><div style="left:1646px;top:1337px;width:11px;height:455px;background:linear-gradient(to bottom,#f07d14 0px,#f28a18 113px,#f5a020 173px,#f9d53a 223px,#c8d83a 258px,#8cc82c 277px,#6cbb2c 365px,#2e962f 455px);clip-path:inset(196.6px 0 0 0)"></div><div style="left:1646px;top:1473px;width:11px;height:4px;background:#f5902a"></div><div style="left:1659px;top:1446px;width:55px;height:346px;background:#6b4419"></div><div style="left:1659px;top:1445px;width:55px;height:3px;background:#f58a1f"></div><div style="left:1568.5px;top:1805px;width:176px;height:11px;background:#fb5f8c"></div><div style="left:1745.5px;top:868px;width:37px;height:80px;background:#2e2e2e"></div><div style="left:1784px;top:868px;width:99px;height:80px;background:#2e2e2e"></div><div style="left:1884.5px;top:868px;width:37px;height:80px;background:#2e2e2e"></div><div style="left:1755px;top:900px;width:16.5px;height:16.5px;background:#a8a8a8"></div><svg style="position:absolute;left:1893.5px;top:896.5px;" width="28" height="24" viewBox="0 0 28 24"><g fill="#a8a8a8"><rect x="0" y="0" width="20" height="4.5"/><rect x="0" y="7" width="20" height="4.5"/><rect x="0" y="14" width="14" height="4.5"/><path d="M15 10.5l11 6.8-11 6.8z"/></g></svg><div style="left:1745.5px;top:949px;width:176px;height:157px;background:#262626"></div><svg style="position:absolute;left:1751px;top:957.5px;" width="16" height="16" viewBox="0 0 16 16"><path d="M8 1v14M1 8h14" stroke="#a0a0a0" stroke-width="3.2"/></svg><div style="left:1745.5px;top:1106px;width:176px;height:101px;background:#484848;border-top:1px solid #555"></div><div class="t " style="left:1508px;width:600px;text-align:center;top:1125.3px;font-size:15.5px;line-height:19.375px;color:#8a8a8a;">Delay+</div><div class="t " style="left:1508px;width:600px;text-align:center;top:1173.1px;font-size:15.8px;line-height:19.75px;color:#8a8a8a;">Convolution</div><svg style="position:absolute;left:1864px;top:1106px;" width="56" height="104" viewBox="0 0 56 104"><defs><linearGradient id="kg" x1="0" y1="0" x2="0" y2="1"><stop offset="0" stop-color="#828282"/><stop offset="1" stop-color="#575757"/></linearGradient></defs><path d="M13.2 44.8 A21 21 0 1 1 42.8 44.8" stroke="#555" stroke-width="3.5" fill="none"/><circle cx="28" cy="30" r="16.5" fill="#383838"/><circle cx="28" cy="30" r="15" fill="url(#kg)"/><path d="M19.5 38.5L23.4 34.6" stroke="#9a9a9a" stroke-width="3.5"/><path d="M13.2 92.8 A21 21 0 1 1 42.8 92.8" stroke="#555" stroke-width="3.5" fill="none"/><circle cx="28" cy="78" r="16.5" fill="#383838"/><circle cx="28" cy="78" r="15" fill="url(#kg)"/><path d="M19.5 86.5L23.4 82.6" stroke="#9a9a9a" stroke-width="3.5"/></svg><div style="left:1745.5px;top:1207px;width:176px;height:598px;background:#454545"></div><div style="left:1753px;top:1215px;width:162px;height:33.5px;background:#252525;border-radius:6px"></div><div style="left:1754.0px;top:1216px;width:52.0px;height:31px;background:linear-gradient(#5d5d5d,#4f4f4f);border-radius:5px 0 0 5px;"></div><div style="left:1771.5px;top:1223px;width:17px;height:17px;background:#a0a0a0;border-radius:50%"></div><div style="left:1808.0px;top:1216px;width:52.0px;height:31px;background:linear-gradient(#5d5d5d,#4f4f4f);"></div><div class="t " style="left:1534.0px;width:600px;text-align:center;top:1218.9px;font-size:21px;line-height:26.25px;color:#f0f0f0;font-weight:bold">S</div><div style="left:1862.0px;top:1216px;width:52.0px;height:31px;background:linear-gradient(#5d5d5d,#4f4f4f);border-radius:0 5px 5px 0;"></div><div class="t " style="left:1588.0px;width:600px;text-align:center;top:1218.9px;font-size:21px;line-height:26.25px;color:#f0f0f0;font-weight:bold">M</div><div style="left:1752px;top:1255px;width:164px;height:36px;background:#1c1c1c;border-radius:6px"></div><div style="left:1832px;top:1259px;width:3px;height:28px;background:#f58a1f"></div><div style="left:1752px;top:1297px;width:164px;height:502px;background:#1c1c1c;border-radius:6px"></div><div style="left:1752px;top:1327.5px;width:164px;height:2px;background:#3c3c3c"></div><div class="t " style="left:1758px;top:1304.3px;font-size:15.5px;line-height:19.375px;color:#a0a0a0;">-2.4</div><div class="t " style="right:1092px;top:1304.3px;font-size:15.5px;line-height:19.375px;color:#f5902a;">0.0 dB</div><div class="t " style="right:1205.5px;top:1382.1px;font-size:15.5px;line-height:19.375px;color:#d8d8d8;">0</div><div style="left:1801.5px;top:1391.3px;width:6px;height:2px;background:#c8c8c8"></div><div class="t " style="right:1205.5px;top:1441.0px;font-size:15.5px;line-height:19.375px;color:#d8d8d8;">6</div><div style="left:1801.5px;top:1450.2px;width:6px;height:2px;background:#c8c8c8"></div><div class="t " style="right:1205.5px;top:1499.9px;font-size:15.5px;line-height:19.375px;color:#d8d8d8;">12</div><div style="left:1801.5px;top:1509.1px;width:6px;height:2px;background:#c8c8c8"></div><div class="t " style="right:1205.5px;top:1554.9px;font-size:15.5px;line-height:19.375px;color:#d8d8d8;">18</div><div style="left:1801.5px;top:1564.1px;width:6px;height:2px;background:#c8c8c8"></div><div class="t " style="right:1205.5px;top:1604.0px;font-size:15.5px;line-height:19.375px;color:#d8d8d8;">24</div><div style="left:1801.5px;top:1613.2px;width:6px;height:2px;background:#c8c8c8"></div><div class="t " style="right:1205.5px;top:1644.3px;font-size:15.5px;line-height:19.375px;color:#d8d8d8;">30</div><div style="left:1801.5px;top:1653.5px;width:6px;height:2px;background:#c8c8c8"></div><div class="t " style="right:1205.5px;top:1677.5px;font-size:15.5px;line-height:19.375px;color:#d8d8d8;">36</div><div style="left:1801.5px;top:1686.7px;width:6px;height:2px;background:#c8c8c8"></div><div class="t " style="right:1205.5px;top:1702.5px;font-size:15.5px;line-height:19.375px;color:#d8d8d8;">42</div><div style="left:1801.5px;top:1711.7px;width:6px;height:2px;background:#c8c8c8"></div><div class="t " style="right:1205.5px;top:1722.9px;font-size:15.5px;line-height:19.375px;color:#d8d8d8;">48</div><div style="left:1801.5px;top:1732.1px;width:6px;height:2px;background:#c8c8c8"></div><div class="t " style="right:1205.5px;top:1748.8px;font-size:15.5px;line-height:19.375px;color:#d8d8d8;">60</div><div style="left:1801.5px;top:1758.0px;width:6px;height:2px;background:#c8c8c8"></div><div class="t " style="right:1205.5px;top:1773.5px;font-size:19px;line-height:23.75px;color:#d8d8d8;font-weight:bold">∞</div><div style="left:1802px;top:1740px;width:5px;height:1.5px;background:#5a5a5a"></div><div style="left:1802px;top:1765px;width:5px;height:1.5px;background:#5a5a5a"></div><div style="left:1802px;top:1770px;width:5px;height:1.5px;background:#5a5a5a"></div><div style="left:1802px;top:1775px;width:5px;height:1.5px;background:#5a5a5a"></div><div style="left:1802px;top:1780px;width:5px;height:1.5px;background:#5a5a5a"></div><div style="left:1811px;top:1337px;width:11px;height:455px;background:#333"></div><div style="left:1811px;top:1337px;width:11px;height:455px;background:linear-gradient(to bottom,#f07d14 0px,#f28a18 113px,#f5a020 173px,#f9d53a 223px,#c8d83a 258px,#8cc82c 277px,#6cbb2c 365px,#2e962f 455px);clip-path:inset(262.0px 0 0 0)"></div><div style="left:1811px;top:1551.8px;width:11px;height:4px;background:#f5c430"></div><div style="left:1823px;top:1337px;width:11px;height:455px;background:#333"></div><div style="left:1823px;top:1337px;width:11px;height:455px;background:linear-gradient(to bottom,#f07d14 0px,#f28a18 113px,#f5a020 173px,#f9d53a 223px,#c8d83a 258px,#8cc82c 277px,#6cbb2c 365px,#2e962f 455px);clip-path:inset(257.2px 0 0 0)"></div><div style="left:1823px;top:1553.4px;width:11px;height:4px;background:#f5c430"></div><div style="left:1836px;top:1392px;width:55px;height:400px;background:#6b4419"></div><div style="left:1836px;top:1391px;width:55px;height:3px;background:#f58a1f"></div><div style="left:1745.5px;top:1805px;width:176px;height:11px;background:#3c6d4b"></div><div style="left:1922.5px;top:868px;width:37px;height:80px;background:#2e2e2e"></div><div style="left:1961px;top:868px;width:99px;height:80px;background:#2e2e2e"></div><div style="left:2061.5px;top:868px;width:37px;height:80px;background:#2e2e2e"></div><div style="left:1932px;top:900px;width:16.5px;height:16.5px;background:#a8a8a8"></div><svg style="position:absolute;left:2070.5px;top:896.5px;" width="28" height="24" viewBox="0 0 28 24"><g fill="#a8a8a8"><rect x="0" y="0" width="20" height="4.5"/><rect x="0" y="7" width="20" height="4.5"/><rect x="0" y="14" width="14" height="4.5"/><path d="M15 10.5l11 6.8-11 6.8z"/></g></svg><svg style="position:absolute;left:1995px;top:892.5px;" width="30" height="30" viewBox="0 0 30 30"><circle cx="15" cy="15" r="14" fill="#3daa6e"/><path d="M15 15L15 1A14 14 0 0 0 3.7 6.8z" fill="#b8f0cc"/><text x="15" y="22" font-size="19" text-anchor="middle" fill="#1a1a1a" font-family="Liberation Sans" letter-spacing="0">3</text></svg><div style="left:1922.5px;top:949px;width:176px;height:157px;background:#262626"></div><div style="left:1922.5px;top:949.5px;width:176px;height:29.5px;background:linear-gradient(#434343,#383838)"></div><div style="left:1929.5px;top:958.0px;width:13px;height:13px;background:#f7d53a;border-radius:50%"></div><div class="t " style="left:1949px;top:956.3px;font-size:15.5px;line-height:19.375px;color:#dcdcdc;">Crystalline</div><div style="left:1922.5px;top:980.5px;width:176px;height:29.5px;background:linear-gradient(#434343,#383838)"></div><div style="left:1929.5px;top:989.0px;width:13px;height:13px;background:#f7d53a;border-radius:50%"></div><div class="t " style="left:1949px;top:987.3px;font-size:15.5px;line-height:19.375px;color:#dcdcdc;">Richter</div><svg style="position:absolute;left:1928px;top:1019.5px;" width="16" height="16" viewBox="0 0 16 16"><path d="M8 1v14M1 8h14" stroke="#a0a0a0" stroke-width="3.2"/></svg><div class="t " style="right:907px;top:1018.8px;font-size:15.5px;line-height:19.375px;color:#9a9a9a;">13.0 ms</div><div style="left:1922.5px;top:1106px;width:176px;height:101px;background:#484848;border-top:1px solid #555"></div><div class="t " style="left:1685px;width:600px;text-align:center;top:1125.3px;font-size:15.5px;line-height:19.375px;color:#f2f2f2;">Delay+</div><div class="t " style="left:1685px;width:600px;text-align:center;top:1173.1px;font-size:15.8px;line-height:19.75px;color:#8a8a8a;">Convolution</div><svg style="position:absolute;left:2041px;top:1106px;" width="56" height="104" viewBox="0 0 56 104"><defs><linearGradient id="kg" x1="0" y1="0" x2="0" y2="1"><stop offset="0" stop-color="#828282"/><stop offset="1" stop-color="#575757"/></linearGradient></defs><path d="M13.2 44.8 A21 21 0 1 1 42.8 44.8" stroke="#555" stroke-width="3.5" fill="none"/><path d="M13.2 44.8 A21 21 0 0 1 7.3 33.6" stroke="#f5dc2a" stroke-width="3.5" fill="none"/><circle cx="28" cy="30" r="16.5" fill="#383838"/><circle cx="28" cy="30" r="15" fill="url(#kg)"/><path d="M16.2 32.1L21.6 31.1" stroke="#f2f2f2" stroke-width="3.5"/><path d="M13.2 92.8 A21 21 0 1 1 42.8 92.8" stroke="#555" stroke-width="3.5" fill="none"/><circle cx="28" cy="78" r="16.5" fill="#383838"/><circle cx="28" cy="78" r="15" fill="url(#kg)"/><path d="M19.5 86.5L23.4 82.6" stroke="#9a9a9a" stroke-width="3.5"/></svg><div style="left:1922.5px;top:1207px;width:176px;height:598px;background:#454545"></div><div style="left:1930px;top:1215px;width:162px;height:33.5px;background:#252525;border-radius:6px"></div><div style="left:1931.0px;top:1216px;width:52.0px;height:31px;background:linear-gradient(#5d5d5d,#4f4f4f);border-radius:5px 0 0 5px;"></div><div style="left:1948.5px;top:1223px;width:17px;height:17px;background:#a0a0a0;border-radius:50%"></div><div style="left:1985.0px;top:1216px;width:52.0px;height:31px;background:linear-gradient(#5d5d5d,#4f4f4f);"></div><div class="t " style="left:1711.0px;width:600px;text-align:center;top:1218.9px;font-size:21px;line-height:26.25px;color:#f0f0f0;font-weight:bold">S</div><div style="left:2039.0px;top:1216px;width:52.0px;height:31px;background:linear-gradient(#5d5d5d,#4f4f4f);border-radius:0 5px 5px 0;"></div><div class="t " style="left:1765.0px;width:600px;text-align:center;top:1218.9px;font-size:21px;line-height:26.25px;color:#f0f0f0;font-weight:bold">M</div><div style="left:1929px;top:1255px;width:164px;height:36px;background:#1c1c1c;border-radius:6px"></div><div style="left:1990px;top:1259px;width:22px;height:28px;background:#6b4419"></div><div style="left:1988.5px;top:1259px;width:3px;height:28px;background:#f58a1f"></div><div style="left:1929px;top:1297px;width:164px;height:502px;background:#1c1c1c;border-radius:6px"></div><div style="left:1929px;top:1327.5px;width:164px;height:2px;background:#3c3c3c"></div><div class="t " style="left:1935px;top:1304.3px;font-size:15.5px;line-height:19.375px;color:#a0a0a0;">-14.8</div><div class="t " style="right:915px;top:1304.3px;font-size:15.5px;line-height:19.375px;color:#f5902a;">−10.0 dB</div><div class="t " style="right:1028.5px;top:1382.1px;font-size:15.5px;line-height:19.375px;color:#d8d8d8;">0</div><div style="left:1978.5px;top:1391.3px;width:6px;height:2px;background:#c8c8c8"></div><div class="t " style="right:1028.5px;top:1441.0px;font-size:15.5px;line-height:19.375px;color:#d8d8d8;">6</div><div style="left:1978.5px;top:1450.2px;width:6px;height:2px;background:#c8c8c8"></div><div class="t " style="right:1028.5px;top:1499.9px;font-size:15.5px;line-height:19.375px;color:#d8d8d8;">12</div><div style="left:1978.5px;top:1509.1px;width:6px;height:2px;background:#c8c8c8"></div><div class="t " style="right:1028.5px;top:1554.9px;font-size:15.5px;line-height:19.375px;color:#d8d8d8;">18</div><div style="left:1978.5px;top:1564.1px;width:6px;height:2px;background:#c8c8c8"></div><div class="t " style="right:1028.5px;top:1604.0px;font-size:15.5px;line-height:19.375px;color:#d8d8d8;">24</div><div style="left:1978.5px;top:1613.2px;width:6px;height:2px;background:#c8c8c8"></div><div class="t " style="right:1028.5px;top:1644.3px;font-size:15.5px;line-height:19.375px;color:#d8d8d8;">30</div><div style="left:1978.5px;top:1653.5px;width:6px;height:2px;background:#c8c8c8"></div><div class="t " style="right:1028.5px;top:1677.5px;font-size:15.5px;line-height:19.375px;color:#d8d8d8;">36</div><div style="left:1978.5px;top:1686.7px;width:6px;height:2px;background:#c8c8c8"></div><div class="t " style="right:1028.5px;top:1702.5px;font-size:15.5px;line-height:19.375px;color:#d8d8d8;">42</div><div style="left:1978.5px;top:1711.7px;width:6px;height:2px;background:#c8c8c8"></div><div class="t " style="right:1028.5px;top:1722.9px;font-size:15.5px;line-height:19.375px;color:#d8d8d8;">48</div><div style="left:1978.5px;top:1732.1px;width:6px;height:2px;background:#c8c8c8"></div><div class="t " style="right:1028.5px;top:1748.8px;font-size:15.5px;line-height:19.375px;color:#d8d8d8;">60</div><div style="left:1978.5px;top:1758.0px;width:6px;height:2px;background:#c8c8c8"></div><div class="t " style="right:1028.5px;top:1773.5px;font-size:19px;line-height:23.75px;color:#d8d8d8;font-weight:bold">∞</div><div style="left:1979px;top:1740px;width:5px;height:1.5px;background:#5a5a5a"></div><div style="left:1979px;top:1765px;width:5px;height:1.5px;background:#5a5a5a"></div><div style="left:1979px;top:1770px;width:5px;height:1.5px;background:#5a5a5a"></div><div style="left:1979px;top:1775px;width:5px;height:1.5px;background:#5a5a5a"></div><div style="left:1979px;top:1780px;width:5px;height:1.5px;background:#5a5a5a"></div><div style="left:1988px;top:1337px;width:11px;height:455px;background:#333"></div><div style="left:1988px;top:1337px;width:11px;height:455px;background:linear-gradient(to bottom,#f07d14 0px,#f28a18 113px,#f5a020 173px,#f9d53a 223px,#c8d83a 258px,#8cc82c 277px,#6cbb2c 365px,#2e962f 455px);clip-path:inset(289.4px 0 0 0)"></div><div style="left:1988px;top:1574px;width:11px;height:4px;background:#f5c430"></div><div style="left:2000px;top:1337px;width:11px;height:455px;background:#333"></div><div style="left:2000px;top:1337px;width:11px;height:455px;background:linear-gradient(to bottom,#f07d14 0px,#f28a18 113px,#f5a020 173px,#f9d53a 223px,#c8d83a 258px,#8cc82c 277px,#6cbb2c 365px,#2e962f 455px);clip-path:inset(312.7px 0 0 0)"></div><div style="left:2000px;top:1605.7px;width:11px;height:4px;background:#f5c430"></div><div style="left:2013px;top:1491px;width:55px;height:301px;background:#6b4419"></div><div style="left:2013px;top:1490px;width:55px;height:3px;background:#f58a1f"></div><div style="left:1922.5px;top:1805px;width:176px;height:11px;background:#3ba66b"></div><div style="left:2099.5px;top:868px;width:37px;height:80px;background:#2e2e2e"></div><div style="left:2138px;top:868px;width:99px;height:80px;background:#2e2e2e"></div><div style="left:2238.5px;top:868px;width:37px;height:80px;background:#2e2e2e"></div><div style="left:2109px;top:900px;width:16.5px;height:16.5px;background:#a8a8a8"></div><svg style="position:absolute;left:2247.5px;top:896.5px;" width="28" height="24" viewBox="0 0 28 24"><g fill="#a8a8a8"><rect x="0" y="0" width="20" height="4.5"/><rect x="0" y="7" width="20" height="4.5"/><rect x="0" y="14" width="14" height="4.5"/><path d="M15 10.5l11 6.8-11 6.8z"/></g></svg><svg style="position:absolute;left:2172px;top:892.5px;" width="30" height="30" viewBox="0 0 30 30"><circle cx="15" cy="15" r="14" fill="#b8f3f8"/><path d="M15 15L15 1A14 14 0 0 0 5.4 4.8z" fill="#3e9db6"/><text x="15" y="22" font-size="19" text-anchor="middle" fill="#1a1a1a" font-family="Liberation Sans" letter-spacing="0">6</text></svg><div style="left:2099.5px;top:949px;width:176px;height:157px;background:#262626"></div><div style="left:2099.5px;top:949.5px;width:176px;height:29.5px;background:linear-gradient(#434343,#383838)"></div><div style="left:2106.5px;top:958.0px;width:13px;height:13px;background:#f7d53a;border-radius:50%"></div><div class="t " style="left:2126px;top:956.3px;font-size:15.5px;line-height:19.375px;color:#dcdcdc;">Micro-pitch</div><div style="left:2099.5px;top:980.5px;width:176px;height:29.5px;background:linear-gradient(#434343,#383838)"></div><div style="left:2106.5px;top:989.0px;width:13px;height:13px;background:#f7d53a;border-radius:50%"></div><div class="t " style="left:2126px;top:987.3px;font-size:15.5px;line-height:19.375px;color:#dcdcdc;">Polymer</div><div style="left:2099.5px;top:1011.5px;width:176px;height:29.5px;background:linear-gradient(#434343,#383838)"></div><div style="left:2106.5px;top:1020.0px;width:13px;height:13px;background:#f7d53a;border-radius:50%"></div><div class="t " style="left:2126px;top:1018.3px;font-size:15.5px;line-height:19.375px;color:#dcdcdc;">Chorus+</div><svg style="position:absolute;left:2105px;top:1050.5px;" width="16" height="16" viewBox="0 0 16 16"><path d="M8 1v14M1 8h14" stroke="#a0a0a0" stroke-width="3.2"/></svg><div class="t " style="right:730px;top:1049.8px;font-size:15.5px;line-height:19.375px;color:#9a9a9a;">0.7 ms</div><div style="left:2099.5px;top:1106px;width:176px;height:101px;background:#484848;border-top:1px solid #555"></div><div class="t " style="left:1862px;width:600px;text-align:center;top:1125.3px;font-size:15.5px;line-height:19.375px;color:#8a8a8a;">Delay+</div><div class="t " style="left:1862px;width:600px;text-align:center;top:1173.1px;font-size:15.8px;line-height:19.75px;color:#8a8a8a;">Convolution</div><svg style="position:absolute;left:2218px;top:1106px;" width="56" height="104" viewBox="0 0 56 104"><defs><linearGradient id="kg" x1="0" y1="0" x2="0" y2="1"><stop offset="0" stop-color="#828282"/><stop offset="1" stop-color="#575757"/></linearGradient></defs><path d="M13.2 44.8 A21 21 0 1 1 42.8 44.8" stroke="#555" stroke-width="3.5" fill="none"/><circle cx="28" cy="30" r="16.5" fill="#383838"/><circle cx="28" cy="30" r="15" fill="url(#kg)"/><path d="M19.5 38.5L23.4 34.6" stroke="#9a9a9a" stroke-width="3.5"/><path d="M13.2 92.8 A21 21 0 1 1 42.8 92.8" stroke="#555" stroke-width="3.5" fill="none"/><circle cx="28" cy="78" r="16.5" fill="#383838"/><circle cx="28" cy="78" r="15" fill="url(#kg)"/><path d="M19.5 86.5L23.4 82.6" stroke="#9a9a9a" stroke-width="3.5"/></svg><div style="left:2099.5px;top:1207px;width:176px;height:598px;background:#454545"></div><div style="left:2107px;top:1215px;width:162px;height:33.5px;background:#252525;border-radius:6px"></div><div style="left:2108.0px;top:1216px;width:52.0px;height:31px;background:linear-gradient(#5d5d5d,#4f4f4f);border-radius:5px 0 0 5px;"></div><div style="left:2125.5px;top:1223px;width:17px;height:17px;background:#f5f5f5;border-radius:50%"></div><div style="left:2162.0px;top:1216px;width:52.0px;height:31px;background:linear-gradient(#5d5d5d,#4f4f4f);"></div><div class="t " style="left:1888.0px;width:600px;text-align:center;top:1218.9px;font-size:21px;line-height:26.25px;color:#f0f0f0;font-weight:bold">S</div><div style="left:2216.0px;top:1216px;width:52.0px;height:31px;background:linear-gradient(#5d5d5d,#4f4f4f);border-radius:0 5px 5px 0;"></div><div class="t " style="left:1942.0px;width:600px;text-align:center;top:1218.9px;font-size:21px;line-height:26.25px;color:#f0f0f0;font-weight:bold">M</div><div style="left:2106px;top:1255px;width:164px;height:36px;background:#1c1c1c;border-radius:6px"></div><div style="left:2187.7px;top:1259px;width:21.800000000000182px;height:28px;background:#6b4419"></div><div style="left:2208.0px;top:1259px;width:3px;height:28px;background:#f58a1f"></div><div style="left:2106px;top:1297px;width:164px;height:502px;background:#1c1c1c;border-radius:6px"></div><div style="left:2106px;top:1327.5px;width:164px;height:2px;background:#3c3c3c"></div><div class="t " style="left:2112px;top:1304.3px;font-size:15.5px;line-height:19.375px;color:#a0a0a0;">-2.9</div><div class="t " style="right:738px;top:1304.3px;font-size:15.5px;line-height:19.375px;color:#f5902a;">−1.3 dB</div><div class="t " style="right:851.5px;top:1382.1px;font-size:15.5px;line-height:19.375px;color:#d8d8d8;">0</div><div style="left:2155.5px;top:1391.3px;width:6px;height:2px;background:#c8c8c8"></div><div class="t " style="right:851.5px;top:1441.0px;font-size:15.5px;line-height:19.375px;color:#d8d8d8;">6</div><div style="left:2155.5px;top:1450.2px;width:6px;height:2px;background:#c8c8c8"></div><div class="t " style="right:851.5px;top:1499.9px;font-size:15.5px;line-height:19.375px;color:#d8d8d8;">12</div><div style="left:2155.5px;top:1509.1px;width:6px;height:2px;background:#c8c8c8"></div><div class="t " style="right:851.5px;top:1554.9px;font-size:15.5px;line-height:19.375px;color:#d8d8d8;">18</div><div style="left:2155.5px;top:1564.1px;width:6px;height:2px;background:#c8c8c8"></div><div class="t " style="right:851.5px;top:1604.0px;font-size:15.5px;line-height:19.375px;color:#d8d8d8;">24</div><div style="left:2155.5px;top:1613.2px;width:6px;height:2px;background:#c8c8c8"></div><div class="t " style="right:851.5px;top:1644.3px;font-size:15.5px;line-height:19.375px;color:#d8d8d8;">30</div><div style="left:2155.5px;top:1653.5px;width:6px;height:2px;background:#c8c8c8"></div><div class="t " style="right:851.5px;top:1677.5px;font-size:15.5px;line-height:19.375px;color:#d8d8d8;">36</div><div style="left:2155.5px;top:1686.7px;width:6px;height:2px;background:#c8c8c8"></div><div class="t " style="right:851.5px;top:1702.5px;font-size:15.5px;line-height:19.375px;color:#d8d8d8;">42</div><div style="left:2155.5px;top:1711.7px;width:6px;height:2px;background:#c8c8c8"></div><div class="t " style="right:851.5px;top:1722.9px;font-size:15.5px;line-height:19.375px;color:#d8d8d8;">48</div><div style="left:2155.5px;top:1732.1px;width:6px;height:2px;background:#c8c8c8"></div><div class="t " style="right:851.5px;top:1748.8px;font-size:15.5px;line-height:19.375px;color:#d8d8d8;">60</div><div style="left:2155.5px;top:1758.0px;width:6px;height:2px;background:#c8c8c8"></div><div class="t " style="right:851.5px;top:1773.5px;font-size:19px;line-height:23.75px;color:#d8d8d8;font-weight:bold">∞</div><div style="left:2156px;top:1740px;width:5px;height:1.5px;background:#5a5a5a"></div><div style="left:2156px;top:1765px;width:5px;height:1.5px;background:#5a5a5a"></div><div style="left:2156px;top:1770px;width:5px;height:1.5px;background:#5a5a5a"></div><div style="left:2156px;top:1775px;width:5px;height:1.5px;background:#5a5a5a"></div><div style="left:2156px;top:1780px;width:5px;height:1.5px;background:#5a5a5a"></div><div style="left:2165px;top:1337px;width:11px;height:455px;background:#333"></div><div style="left:2165px;top:1337px;width:11px;height:455px;background:linear-gradient(to bottom,#f07d14 0px,#f28a18 113px,#f5a020 173px,#f9d53a 223px,#c8d83a 258px,#8cc82c 277px,#6cbb2c 365px,#2e962f 455px);clip-path:inset(280.0px 0 0 0)"></div><div style="left:2165px;top:1596px;width:11px;height:4px;background:#f5c430"></div><div style="left:2177px;top:1337px;width:11px;height:455px;background:#333"></div><div style="left:2177px;top:1337px;width:11px;height:455px;background:linear-gradient(to bottom,#f07d14 0px,#f28a18 113px,#f5a020 173px,#f9d53a 223px,#c8d83a 258px,#8cc82c 277px,#6cbb2c 365px,#2e962f 455px);clip-path:inset(263.0px 0 0 0)"></div><div style="left:2177px;top:1561.6px;width:11px;height:4px;background:#f5c430"></div><div style="left:2190px;top:1404.4px;width:55px;height:387.5999999999999px;background:#6b4419"></div><div style="left:2190px;top:1403.4px;width:55px;height:3px;background:#f58a1f"></div><div style="left:2099.5px;top:1805px;width:176px;height:11px;background:#3e9db6"></div><div style="left:2276.5px;top:868px;width:37px;height:80px;background:#2e2e2e"></div><div style="left:2315px;top:868px;width:99px;height:80px;background:#2e2e2e"></div><div style="left:2415.5px;top:868px;width:37px;height:80px;background:#2e2e2e"></div><div style="left:2286px;top:900px;width:16.5px;height:16.5px;background:#a8a8a8"></div><svg style="position:absolute;left:2424.5px;top:896.5px;" width="28" height="24" viewBox="0 0 28 24"><g fill="#a8a8a8"><rect x="0" y="0" width="20" height="4.5"/><rect x="0" y="7" width="20" height="4.5"/><rect x="0" y="14" width="14" height="4.5"/><path d="M15 10.5l11 6.8-11 6.8z"/></g></svg><svg style="position:absolute;left:2349px;top:892.5px;" width="30" height="30" viewBox="0 0 30 30"><circle cx="15" cy="15" r="14" fill="#b8f3f8"/><path d="M15 15L15 1A14 14 0 0 0 2.3 9.0z" fill="#4a90e0"/></svg><div style="left:2276.5px;top:949px;width:176px;height:157px;background:#262626"></div><div style="left:2276.5px;top:949.5px;width:176px;height:29.5px;background:linear-gradient(#434343,#383838)"></div><div style="left:2283.5px;top:958.0px;width:13px;height:13px;background:#f7d53a;border-radius:50%"></div><div class="t " style="left:2303px;top:956.3px;font-size:15.5px;line-height:19.375px;color:#dcdcdc;">Multiband FX-2</div><div style="left:2276.5px;top:980.5px;width:176px;height:29.5px;background:linear-gradient(#434343,#383838)"></div><div style="left:2283.5px;top:989.0px;width:13px;height:13px;background:#f7d53a;border-radius:50%"></div><div class="t " style="left:2303px;top:987.3px;font-size:15.5px;line-height:19.375px;color:#dcdcdc;">Compressor</div><svg style="position:absolute;left:2442px;top:983.5px;" width="8" height="26" viewBox="0 0 8 26"><rect x="0" y="0" width="7" height="12" fill="#3a8fe0"/><rect x="0" y="13" width="7" height="11" fill="#2a2a2a"/></svg><svg style="position:absolute;left:2282px;top:1019.5px;" width="16" height="16" viewBox="0 0 16 16"><path d="M8 1v14M1 8h14" stroke="#a0a0a0" stroke-width="3.2"/></svg><div class="t " style="right:553px;top:1018.8px;font-size:15.5px;line-height:19.375px;color:#9a9a9a;">0.7 ms</div><div style="left:2276.5px;top:1106px;width:176px;height:101px;background:#484848;border-top:1px solid #555"></div><div class="t " style="left:2039px;width:600px;text-align:center;top:1125.3px;font-size:15.5px;line-height:19.375px;color:#f2f2f2;">Delay+</div><div class="t " style="left:2039px;width:600px;text-align:center;top:1173.1px;font-size:15.8px;line-height:19.75px;color:#8a8a8a;">Convolution</div><svg style="position:absolute;left:2395px;top:1106px;" width="56" height="104" viewBox="0 0 56 104"><defs><linearGradient id="kg" x1="0" y1="0" x2="0" y2="1"><stop offset="0" stop-color="#828282"/><stop offset="1" stop-color="#575757"/></linearGradient></defs><path d="M13.2 44.8 A21 21 0 1 1 42.8 44.8" stroke="#555" stroke-width="3.5" fill="none"/><path d="M13.2 44.8 A21 21 0 0 1 9.9 19.3" stroke="#f5dc2a" stroke-width="3.5" fill="none"/><circle cx="28" cy="30" r="16.5" fill="#383838"/><circle cx="28" cy="30" r="15" fill="url(#kg)"/><path d="M17.7 23.9L22.4 26.7" stroke="#f2f2f2" stroke-width="3.5"/><circle cx="47" cy="11" r="4" fill="#3aa0f0"/><path d="M13.2 92.8 A21 21 0 1 1 42.8 92.8" stroke="#555" stroke-width="3.5" fill="none"/><circle cx="28" cy="78" r="16.5" fill="#383838"/><circle cx="28" cy="78" r="15" fill="url(#kg)"/><path d="M19.5 86.5L23.4 82.6" stroke="#9a9a9a" stroke-width="3.5"/></svg><div style="left:2276.5px;top:1207px;width:176px;height:598px;background:#454545"></div><div style="left:2284px;top:1215px;width:162px;height:33.5px;background:#252525;border-radius:6px"></div><div style="left:2285.0px;top:1216px;width:52.0px;height:31px;background:linear-gradient(#5d5d5d,#4f4f4f);border-radius:5px 0 0 5px;"></div><div style="left:2302.5px;top:1223px;width:17px;height:17px;background:#f5f5f5;border-radius:50%"></div><div style="left:2339.0px;top:1216px;width:52.0px;height:31px;background:linear-gradient(#5d5d5d,#4f4f4f);"></div><div class="t " style="left:2065.0px;width:600px;text-align:center;top:1218.9px;font-size:21px;line-height:26.25px;color:#f0f0f0;font-weight:bold">S</div><div style="left:2393.0px;top:1216px;width:52.0px;height:31px;background:linear-gradient(#5d5d5d,#4f4f4f);border-radius:0 5px 5px 0;"></div><div class="t " style="left:2119.0px;width:600px;text-align:center;top:1218.9px;font-size:21px;line-height:26.25px;color:#f0f0f0;font-weight:bold">M</div><div style="left:2283px;top:1255px;width:164px;height:36px;background:#1c1c1c;border-radius:6px"></div><div style="left:2363px;top:1259px;width:3px;height:28px;background:#f58a1f"></div><div style="left:2283px;top:1297px;width:164px;height:502px;background:#1c1c1c;border-radius:6px"></div><div style="left:2283px;top:1327.5px;width:164px;height:2px;background:#3c3c3c"></div><div class="t " style="left:2289px;top:1304.3px;font-size:15.5px;line-height:19.375px;color:#a0a0a0;">-7.0</div><div class="t " style="right:561px;top:1304.3px;font-size:15.5px;line-height:19.375px;color:#f5902a;">−10.0 dB</div><div class="t " style="right:674.5px;top:1382.1px;font-size:15.5px;line-height:19.375px;color:#d8d8d8;">0</div><div style="left:2332.5px;top:1391.3px;width:6px;height:2px;background:#c8c8c8"></div><div class="t " style="right:674.5px;top:1441.0px;font-size:15.5px;line-height:19.375px;color:#d8d8d8;">6</div><div style="left:2332.5px;top:1450.2px;width:6px;height:2px;background:#c8c8c8"></div><div class="t " style="right:674.5px;top:1499.9px;font-size:15.5px;line-height:19.375px;color:#d8d8d8;">12</div><div style="left:2332.5px;top:1509.1px;width:6px;height:2px;background:#c8c8c8"></div><div class="t " style="right:674.5px;top:1554.9px;font-size:15.5px;line-height:19.375px;color:#d8d8d8;">18</div><div style="left:2332.5px;top:1564.1px;width:6px;height:2px;background:#c8c8c8"></div><div class="t " style="right:674.5px;top:1604.0px;font-size:15.5px;line-height:19.375px;color:#d8d8d8;">24</div><div style="left:2332.5px;top:1613.2px;width:6px;height:2px;background:#c8c8c8"></div><div class="t " style="right:674.5px;top:1644.3px;font-size:15.5px;line-height:19.375px;color:#d8d8d8;">30</div><div style="left:2332.5px;top:1653.5px;width:6px;height:2px;background:#c8c8c8"></div><div class="t " style="right:674.5px;top:1677.5px;font-size:15.5px;line-height:19.375px;color:#d8d8d8;">36</div><div style="left:2332.5px;top:1686.7px;width:6px;height:2px;background:#c8c8c8"></div><div class="t " style="right:674.5px;top:1702.5px;font-size:15.5px;line-height:19.375px;color:#d8d8d8;">42</div><div style="left:2332.5px;top:1711.7px;width:6px;height:2px;background:#c8c8c8"></div><div class="t " style="right:674.5px;top:1722.9px;font-size:15.5px;line-height:19.375px;color:#d8d8d8;">48</div><div style="left:2332.5px;top:1732.1px;width:6px;height:2px;background:#c8c8c8"></div><div class="t " style="right:674.5px;top:1748.8px;font-size:15.5px;line-height:19.375px;color:#d8d8d8;">60</div><div style="left:2332.5px;top:1758.0px;width:6px;height:2px;background:#c8c8c8"></div><div class="t " style="right:674.5px;top:1773.5px;font-size:19px;line-height:23.75px;color:#d8d8d8;font-weight:bold">∞</div><div style="left:2333px;top:1740px;width:5px;height:1.5px;background:#5a5a5a"></div><div style="left:2333px;top:1765px;width:5px;height:1.5px;background:#5a5a5a"></div><div style="left:2333px;top:1770px;width:5px;height:1.5px;background:#5a5a5a"></div><div style="left:2333px;top:1775px;width:5px;height:1.5px;background:#5a5a5a"></div><div style="left:2333px;top:1780px;width:5px;height:1.5px;background:#5a5a5a"></div><div style="left:2342px;top:1337px;width:11px;height:455px;background:#333"></div><div style="left:2342px;top:1337px;width:11px;height:455px;background:linear-gradient(to bottom,#f07d14 0px,#f28a18 113px,#f5a020 173px,#f9d53a 223px,#c8d83a 258px,#8cc82c 277px,#6cbb2c 365px,#2e962f 455px);clip-path:inset(175.3px 0 0 0)"></div><div style="left:2342px;top:1505px;width:11px;height:4px;background:#f5902a"></div><div style="left:2354px;top:1337px;width:11px;height:455px;background:#333"></div><div style="left:2354px;top:1337px;width:11px;height:455px;background:linear-gradient(to bottom,#f07d14 0px,#f28a18 113px,#f5a020 173px,#f9d53a 223px,#c8d83a 258px,#8cc82c 277px,#6cbb2c 365px,#2e962f 455px);clip-path:inset(175.3px 0 0 0)"></div><div style="left:2354px;top:1505px;width:11px;height:4px;background:#f5902a"></div><div style="left:2367px;top:1491px;width:55px;height:301px;background:#6b4419"></div><div style="left:2367px;top:1490px;width:55px;height:3px;background:#f58a1f"></div><div style="left:2276.5px;top:1805px;width:176px;height:11px;background:#2c66a9"></div><div style="left:2453.5px;top:868px;width:37px;height:80px;background:#2e2e2e"></div><div style="left:2492px;top:868px;width:99px;height:80px;background:#2e2e2e"></div><div style="left:2592.5px;top:868px;width:37px;height:80px;background:#2e2e2e"></div><div style="left:2463px;top:900px;width:16.5px;height:16.5px;background:#a8a8a8"></div><svg style="position:absolute;left:2601.5px;top:896.5px;" width="28" height="24" viewBox="0 0 28 24"><g fill="#a8a8a8"><rect x="0" y="0" width="20" height="4.5"/><rect x="0" y="7" width="20" height="4.5"/><rect x="0" y="14" width="14" height="4.5"/><path d="M15 10.5l11 6.8-11 6.8z"/></g></svg><svg style="position:absolute;left:2526px;top:892.5px;" width="30" height="30" viewBox="0 0 30 30"><circle cx="15" cy="15" r="14" fill="#fde48c"/><path d="M15 15L15 1A14 14 0 0 0 3.7 6.8z" fill="#f08a30"/><text x="15" y="22" font-size="19" text-anchor="middle" fill="#1a1a1a" font-family="Liberation Sans" letter-spacing="0">6</text></svg><div style="left:2453.5px;top:949px;width:176px;height:157px;background:#262626"></div><div style="left:2453.5px;top:949.5px;width:176px;height:29.5px;background:linear-gradient(#434343,#383838)"></div><div style="left:2460.5px;top:958.0px;width:13px;height:13px;background:#f7d53a;border-radius:50%"></div><div class="t " style="left:2480px;top:956.3px;font-size:15.5px;line-height:19.375px;color:#dcdcdc;">Sampler</div><svg style="position:absolute;left:2459px;top:988.5px;" width="16" height="16" viewBox="0 0 16 16"><path d="M8 1v14M1 8h14" stroke="#a0a0a0" stroke-width="3.2"/></svg><div style="left:2453.5px;top:1106px;width:176px;height:101px;background:#484848;border-top:1px solid #555"></div><div class="t " style="left:2216px;width:600px;text-align:center;top:1125.3px;font-size:15.5px;line-height:19.375px;color:#8a8a8a;">Delay+</div><div class="t " style="left:2216px;width:600px;text-align:center;top:1173.1px;font-size:15.8px;line-height:19.75px;color:#8a8a8a;">Convolution</div><svg style="position:absolute;left:2572px;top:1106px;" width="56" height="104" viewBox="0 0 56 104"><defs><linearGradient id="kg" x1="0" y1="0" x2="0" y2="1"><stop offset="0" stop-color="#828282"/><stop offset="1" stop-color="#575757"/></linearGradient></defs><path d="M13.2 44.8 A21 21 0 1 1 42.8 44.8" stroke="#555" stroke-width="3.5" fill="none"/><circle cx="28" cy="30" r="16.5" fill="#383838"/><circle cx="28" cy="30" r="15" fill="url(#kg)"/><path d="M19.5 38.5L23.4 34.6" stroke="#9a9a9a" stroke-width="3.5"/><path d="M13.2 92.8 A21 21 0 1 1 42.8 92.8" stroke="#555" stroke-width="3.5" fill="none"/><circle cx="28" cy="78" r="16.5" fill="#383838"/><circle cx="28" cy="78" r="15" fill="url(#kg)"/><path d="M19.5 86.5L23.4 82.6" stroke="#9a9a9a" stroke-width="3.5"/></svg><div style="left:2453.5px;top:1207px;width:176px;height:598px;background:#454545"></div><div style="left:2461px;top:1215px;width:162px;height:33.5px;background:#252525;border-radius:6px"></div><div style="left:2462.0px;top:1216px;width:52.0px;height:31px;background:#e8121a;border-radius:5px 0 0 5px;"></div><div style="left:2479.5px;top:1223px;width:17px;height:17px;background:#111;border-radius:50%"></div><div style="left:2516.0px;top:1216px;width:52.0px;height:31px;background:linear-gradient(#5d5d5d,#4f4f4f);"></div><div class="t " style="left:2242.0px;width:600px;text-align:center;top:1218.9px;font-size:21px;line-height:26.25px;color:#f0f0f0;font-weight:bold">S</div><div style="left:2570.0px;top:1216px;width:52.0px;height:31px;background:linear-gradient(#5d5d5d,#4f4f4f);border-radius:0 5px 5px 0;"></div><div class="t " style="left:2296.0px;width:600px;text-align:center;top:1218.9px;font-size:21px;line-height:26.25px;color:#f0f0f0;font-weight:bold">M</div><div style="left:2460px;top:1255px;width:164px;height:36px;background:#1c1c1c;border-radius:6px"></div><div style="left:2540px;top:1259px;width:3px;height:28px;background:#f58a1f"></div><div style="left:2460px;top:1297px;width:164px;height:502px;background:#1c1c1c;border-radius:6px"></div><div style="left:2460px;top:1327.5px;width:164px;height:2px;background:#3c3c3c"></div><div class="t " style="left:2466px;top:1304.3px;font-size:15.5px;line-height:19.375px;color:#a0a0a0;">-2.9</div><div class="t " style="right:384px;top:1304.3px;font-size:15.5px;line-height:19.375px;color:#f5902a;">+2.3 dB</div><div class="t " style="right:497.5px;top:1382.1px;font-size:15.5px;line-height:19.375px;color:#d8d8d8;">0</div><div style="left:2509.5px;top:1391.3px;width:6px;height:2px;background:#c8c8c8"></div><div class="t " style="right:497.5px;top:1441.0px;font-size:15.5px;line-height:19.375px;color:#d8d8d8;">6</div><div style="left:2509.5px;top:1450.2px;width:6px;height:2px;background:#c8c8c8"></div><div class="t " style="right:497.5px;top:1499.9px;font-size:15.5px;line-height:19.375px;color:#d8d8d8;">12</div><div style="left:2509.5px;top:1509.1px;width:6px;height:2px;background:#c8c8c8"></div><div class="t " style="right:497.5px;top:1554.9px;font-size:15.5px;line-height:19.375px;color:#d8d8d8;">18</div><div style="left:2509.5px;top:1564.1px;width:6px;height:2px;background:#c8c8c8"></div><div class="t " style="right:497.5px;top:1604.0px;font-size:15.5px;line-height:19.375px;color:#d8d8d8;">24</div><div style="left:2509.5px;top:1613.2px;width:6px;height:2px;background:#c8c8c8"></div><div class="t " style="right:497.5px;top:1644.3px;font-size:15.5px;line-height:19.375px;color:#d8d8d8;">30</div><div style="left:2509.5px;top:1653.5px;width:6px;height:2px;background:#c8c8c8"></div><div class="t " style="right:497.5px;top:1677.5px;font-size:15.5px;line-height:19.375px;color:#d8d8d8;">36</div><div style="left:2509.5px;top:1686.7px;width:6px;height:2px;background:#c8c8c8"></div><div class="t " style="right:497.5px;top:1702.5px;font-size:15.5px;line-height:19.375px;color:#d8d8d8;">42</div><div style="left:2509.5px;top:1711.7px;width:6px;height:2px;background:#c8c8c8"></div><div class="t " style="right:497.5px;top:1722.9px;font-size:15.5px;line-height:19.375px;color:#d8d8d8;">48</div><div style="left:2509.5px;top:1732.1px;width:6px;height:2px;background:#c8c8c8"></div><div class="t " style="right:497.5px;top:1748.8px;font-size:15.5px;line-height:19.375px;color:#d8d8d8;">60</div><div style="left:2509.5px;top:1758.0px;width:6px;height:2px;background:#c8c8c8"></div><div class="t " style="right:497.5px;top:1773.5px;font-size:19px;line-height:23.75px;color:#d8d8d8;font-weight:bold">∞</div><div style="left:2510px;top:1740px;width:5px;height:1.5px;background:#5a5a5a"></div><div style="left:2510px;top:1765px;width:5px;height:1.5px;background:#5a5a5a"></div><div style="left:2510px;top:1770px;width:5px;height:1.5px;background:#5a5a5a"></div><div style="left:2510px;top:1775px;width:5px;height:1.5px;background:#5a5a5a"></div><div style="left:2510px;top:1780px;width:5px;height:1.5px;background:#5a5a5a"></div><div style="left:2519px;top:1337px;width:11px;height:455px;background:#333"></div><div style="left:2519px;top:1337px;width:11px;height:455px;background:linear-gradient(to bottom,#f07d14 0px,#f28a18 113px,#f5a020 173px,#f9d53a 223px,#c8d83a 258px,#8cc82c 277px,#6cbb2c 365px,#2e962f 455px);clip-path:inset(198.6px 0 0 0)"></div><div style="left:2519px;top:1479.7px;width:11px;height:4px;background:#f5902a"></div><div style="left:2531px;top:1337px;width:11px;height:455px;background:#333"></div><div style="left:2531px;top:1337px;width:11px;height:455px;background:linear-gradient(to bottom,#f07d14 0px,#f28a18 113px,#f5a020 173px,#f9d53a 223px,#c8d83a 258px,#8cc82c 277px,#6cbb2c 365px,#2e962f 455px);clip-path:inset(212.0px 0 0 0)"></div><div style="left:2531px;top:1499px;width:11px;height:4px;background:#f5902a"></div><div style="left:2544px;top:1369.7px;width:55px;height:422.29999999999995px;background:#6b4419"></div><div style="left:2544px;top:1368.7px;width:55px;height:3px;background:#f58a1f"></div><div style="left:2453.5px;top:1805px;width:176px;height:11px;background:#e38b26"></div><div style="left:2819.5px;top:868px;width:37px;height:80px;background:#2e2e2e"></div><div style="left:2858px;top:868px;width:99px;height:80px;background:#2e2e2e"></div><div style="left:2958.5px;top:868px;width:37px;height:80px;background:#2e2e2e"></div><div style="left:2829px;top:900px;width:16.5px;height:16.5px;background:#a8a8a8"></div><svg style="position:absolute;left:2967.5px;top:896.5px;" width="28" height="24" viewBox="0 0 28 24"><g fill="#8a8a8a"><rect x="0" y="0" width="20" height="4.5"/><rect x="0" y="7" width="20" height="4.5"/><rect x="0" y="14" width="14" height="4.5"/><path d="M15 10.5l11 6.8-11 6.8z"/></g></svg><div style="left:2819.5px;top:949px;width:176px;height:157px;background:#262626"></div><div style="left:2819.5px;top:949.5px;width:176px;height:29.5px;background:linear-gradient(#434343,#383838)"></div><div style="left:2826.5px;top:958.0px;width:13px;height:13px;background:#f7d53a;border-radius:50%"></div><div class="t " style="left:2846px;top:956.3px;font-size:15.5px;line-height:19.375px;color:#dcdcdc;">Sculpt</div><svg style="position:absolute;left:2941px;top:954.5px;" width="52" height="20" viewBox="0 0 52 20"><path d="M2 9q14-2 26 0t22 1" stroke="#e0e0e0" stroke-width="2" fill="none"/></svg><div style="left:2819.5px;top:980.5px;width:176px;height:29.5px;background:linear-gradient(#434343,#383838)"></div><div style="left:2826.5px;top:989.0px;width:13px;height:13px;background:#f7d53a;border-radius:50%"></div><div class="t " style="left:2846px;top:987.3px;font-size:15.5px;line-height:19.375px;color:#dcdcdc;">Multiband FX-3</div><div style="left:2819.5px;top:1011.5px;width:176px;height:29.5px;background:linear-gradient(#434343,#383838)"></div><div style="left:2826.5px;top:1020.0px;width:13px;height:13px;background:#f7d53a;border-radius:50%"></div><div class="t " style="left:2846px;top:1018.3px;font-size:15.5px;line-height:19.375px;color:#dcdcdc;">Presswerk</div><div style="left:2819.5px;top:1042.5px;width:176px;height:29.5px;background:linear-gradient(#434343,#383838)"></div><div style="left:2826.5px;top:1051.0px;width:13px;height:13px;background:#f7d53a;border-radius:50%"></div><div class="t " style="left:2846px;top:1049.3px;font-size:15.5px;line-height:19.375px;color:#dcdcdc;">Pro-L 2</div><svg style="position:absolute;left:2825px;top:1081.5px;" width="16" height="16" viewBox="0 0 16 16"><path d="M8 1v14M1 8h14" stroke="#a0a0a0" stroke-width="3.2"/></svg><div class="t " style="right:10px;top:1080.8px;font-size:15.5px;line-height:19.375px;color:#f5d13a;">65.8 ms</div><div style="left:2819.5px;top:1106px;width:176px;height:101px;background:#484848"></div><div style="left:2819.5px;top:1207px;width:176px;height:598px;background:#454545"></div><div style="left:2827px;top:1215px;width:162px;height:33.5px;background:#252525;border-radius:6px"></div><div style="left:2828.0px;top:1216px;width:52.0px;height:31px;background:linear-gradient(#5d5d5d,#4f4f4f);border-radius:5px 0 0 5px;"></div><div style="left:2845.5px;top:1223px;width:17px;height:17px;background:#a0a0a0;border-radius:50%"></div><div style="left:2882.0px;top:1216px;width:52.0px;height:31px;background:linear-gradient(#5d5d5d,#4f4f4f);"></div><div class="t " style="left:2608.0px;width:600px;text-align:center;top:1218.9px;font-size:21px;line-height:26.25px;color:#f0f0f0;font-weight:bold">S</div><div style="left:2936.0px;top:1216px;width:52.0px;height:31px;background:linear-gradient(#5d5d5d,#4f4f4f);border-radius:0 5px 5px 0;"></div><div class="t " style="left:2662.0px;width:600px;text-align:center;top:1218.9px;font-size:21px;line-height:26.25px;color:#f0f0f0;font-weight:bold">M</div><div style="left:2826px;top:1255px;width:164px;height:36px;background:#1c1c1c;border-radius:6px"></div><div style="left:2906px;top:1259px;width:3px;height:28px;background:#f58a1f"></div><div style="left:2826px;top:1297px;width:164px;height:502px;background:#1c1c1c;border-radius:6px"></div><div style="left:2826px;top:1327.5px;width:164px;height:2px;background:#3c3c3c"></div><div class="t " style="left:2832px;top:1304.3px;font-size:15.5px;line-height:19.375px;color:#a0a0a0;">-0.0</div><div class="t " style="right:18px;top:1304.3px;font-size:15.5px;line-height:19.375px;color:#f5902a;">0.0 dB</div><div class="t " style="right:131.5px;top:1382.1px;font-size:15.5px;line-height:19.375px;color:#d8d8d8;">0</div><div style="left:2875.5px;top:1391.3px;width:6px;height:2px;background:#c8c8c8"></div><div class="t " style="right:131.5px;top:1441.0px;font-size:15.5px;line-height:19.375px;color:#d8d8d8;">6</div><div style="left:2875.5px;top:1450.2px;width:6px;height:2px;background:#c8c8c8"></div><div class="t " style="right:131.5px;top:1499.9px;font-size:15.5px;line-height:19.375px;color:#d8d8d8;">12</div><div style="left:2875.5px;top:1509.1px;width:6px;height:2px;background:#c8c8c8"></div><div class="t " style="right:131.5px;top:1554.9px;font-size:15.5px;line-height:19.375px;color:#d8d8d8;">18</div><div style="left:2875.5px;top:1564.1px;width:6px;height:2px;background:#c8c8c8"></div><div class="t " style="right:131.5px;top:1604.0px;font-size:15.5px;line-height:19.375px;color:#d8d8d8;">24</div><div style="left:2875.5px;top:1613.2px;width:6px;height:2px;background:#c8c8c8"></div><div class="t " style="right:131.5px;top:1644.3px;font-size:15.5px;line-height:19.375px;color:#d8d8d8;">30</div><div style="left:2875.5px;top:1653.5px;width:6px;height:2px;background:#c8c8c8"></div><div class="t " style="right:131.5px;top:1677.5px;font-size:15.5px;line-height:19.375px;color:#d8d8d8;">36</div><div style="left:2875.5px;top:1686.7px;width:6px;height:2px;background:#c8c8c8"></div><div class="t " style="right:131.5px;top:1702.5px;font-size:15.5px;line-height:19.375px;color:#d8d8d8;">42</div><div style="left:2875.5px;top:1711.7px;width:6px;height:2px;background:#c8c8c8"></div><div class="t " style="right:131.5px;top:1722.9px;font-size:15.5px;line-height:19.375px;color:#d8d8d8;">48</div><div style="left:2875.5px;top:1732.1px;width:6px;height:2px;background:#c8c8c8"></div><div class="t " style="right:131.5px;top:1748.8px;font-size:15.5px;line-height:19.375px;color:#d8d8d8;">60</div><div style="left:2875.5px;top:1758.0px;width:6px;height:2px;background:#c8c8c8"></div><div class="t " style="right:131.5px;top:1773.5px;font-size:19px;line-height:23.75px;color:#d8d8d8;font-weight:bold">∞</div><div style="left:2876px;top:1740px;width:5px;height:1.5px;background:#5a5a5a"></div><div style="left:2876px;top:1765px;width:5px;height:1.5px;background:#5a5a5a"></div><div style="left:2876px;top:1770px;width:5px;height:1.5px;background:#5a5a5a"></div><div style="left:2876px;top:1775px;width:5px;height:1.5px;background:#5a5a5a"></div><div style="left:2876px;top:1780px;width:5px;height:1.5px;background:#5a5a5a"></div><div style="left:2885px;top:1337px;width:11px;height:455px;background:#333"></div><div style="left:2885px;top:1337px;width:11px;height:455px;background:linear-gradient(to bottom,#f07d14 0px,#f28a18 113px,#f5a020 173px,#f9d53a 223px,#c8d83a 258px,#8cc82c 277px,#6cbb2c 365px,#2e962f 455px);clip-path:inset(111.0px 0 0 0)"></div><div style="left:2885px;top:1395.5px;width:11px;height:4px;background:#f5902a"></div><div style="left:2897px;top:1337px;width:11px;height:455px;background:#333"></div><div style="left:2897px;top:1337px;width:11px;height:455px;background:linear-gradient(to bottom,#f07d14 0px,#f28a18 113px,#f5a020 173px,#f9d53a 223px,#c8d83a 258px,#8cc82c 277px,#6cbb2c 365px,#2e962f 455px);clip-path:inset(109.7px 0 0 0)"></div><div style="left:2897px;top:1409.5px;width:11px;height:4px;background:#f5902a"></div><div style="left:2910px;top:1392px;width:55px;height:400px;background:#6b4419"></div><div style="left:2910px;top:1391px;width:55px;height:3px;background:#f58a1f"></div><div style="left:2819.5px;top:1805px;width:176px;height:11px;background:#7c7c78"></div><div style="left:0px;top:1821px;width:3000px;height:61px;background:#363636;border-radius:0 0 20px 20px"></div><svg style="position:absolute;left:29px;top:1843px;" width="12" height="24" viewBox="0 0 12 24"><circle cx="6" cy="3" r="3" fill="#ddd"/><path d="M2 9h7v11h2v3H1v-3h2v-8H1z" fill="#ddd"/></svg><div style="left:66px;top:1839px;width:3px;height:30px;background:#5a5a5a"></div><div class="t " style="left:92px;top:1842.8px;font-size:18px;line-height:22.5px;color:#d8d8d8;">ARRANGE</div><div class="t " style="left:201px;top:1842.8px;font-size:18px;line-height:22.5px;color:#f5902a;">MIX</div><div class="t " style="left:257px;top:1842.8px;font-size:18px;line-height:22.5px;color:#d8d8d8;">EDIT</div><div style="left:322px;top:1839px;width:3px;height:30px;background:#5a5a5a"></div><svg style="position:absolute;left:348px;top:1844px;" width="18" height="20" viewBox="0 0 18 20"><g fill="#ddd"><rect x="0" y="0" width="6" height="4"/><rect x="10" y="7" width="7" height="5"/><rect x="0" y="14" width="6" height="4"/><path d="M5 3l6 5M5 15l6-5" stroke="#ddd" stroke-width="1.5"/></g></svg><svg style="position:absolute;left:390px;top:1843px;" width="24" height="20" viewBox="0 0 24 20"><rect x="1" y="1" width="22" height="18" rx="3" fill="#e0e0e0"/><rect x="9" y="3" width="12" height="14" fill="#6a6a6a"/></svg><svg style="position:absolute;left:2737px;top:1842px;" width="24" height="24" viewBox="0 0 24 24"><circle cx="10" cy="10" r="7.5" stroke="#ddd" stroke-width="2.2" fill="none"/><path d="M15 15l7 7" stroke="#ddd" stroke-width="3"/></svg><svg style="position:absolute;left:2785px;top:1842px;" width="22" height="24" viewBox="0 0 22 24"><path d="M1 1h12l7 7v15H1z" fill="#ddd"/><path d="M13 1v7h7" fill="#888"/></svg><svg style="position:absolute;left:2830px;top:1838px;" width="24" height="30" viewBox="0 0 24 30"><rect x="1" y="1" width="22" height="28" rx="8" fill="#ddd"/><circle cx="12" cy="17" r="6" fill="#333"/><circle cx="12" cy="17" r="2.5" fill="#ddd"/><circle cx="12" cy="7" r="2" fill="#333"/></svg><svg style="position:absolute;left:2878px;top:1841px;" width="24" height="26" viewBox="0 0 24 26"><path d="M6 1q2-1 3 1v9l2-1q2 0 2 2l2-1q2 0 2 2l2-1q2 0 2 2v6q0 6-7 6h-3q-4 0-7-5L1 16q-1-2 1-3t3 1l1 2z" fill="#ddd"/></svg><div style="left:2925px;top:1840px;width:3px;height:30px;background:#5a5a5a"></div><svg style="position:absolute;left:2952px;top:1842px;" width="24" height="24" viewBox="0 0 24 24"><rect x="0" y="0" width="24" height="24" fill="#ddd"/><rect x="5" y="0" width="3" height="13" fill="#363636"/><rect x="11" y="0" width="3" height="13" fill="#363636"/><rect x="17" y="0" width="3" height="13" fill="#363636"/><path d="M6.5 13v11M12.5 13v11M18.5 13v11" stroke="#363636" stroke-width="1"/></svg></body></html>
